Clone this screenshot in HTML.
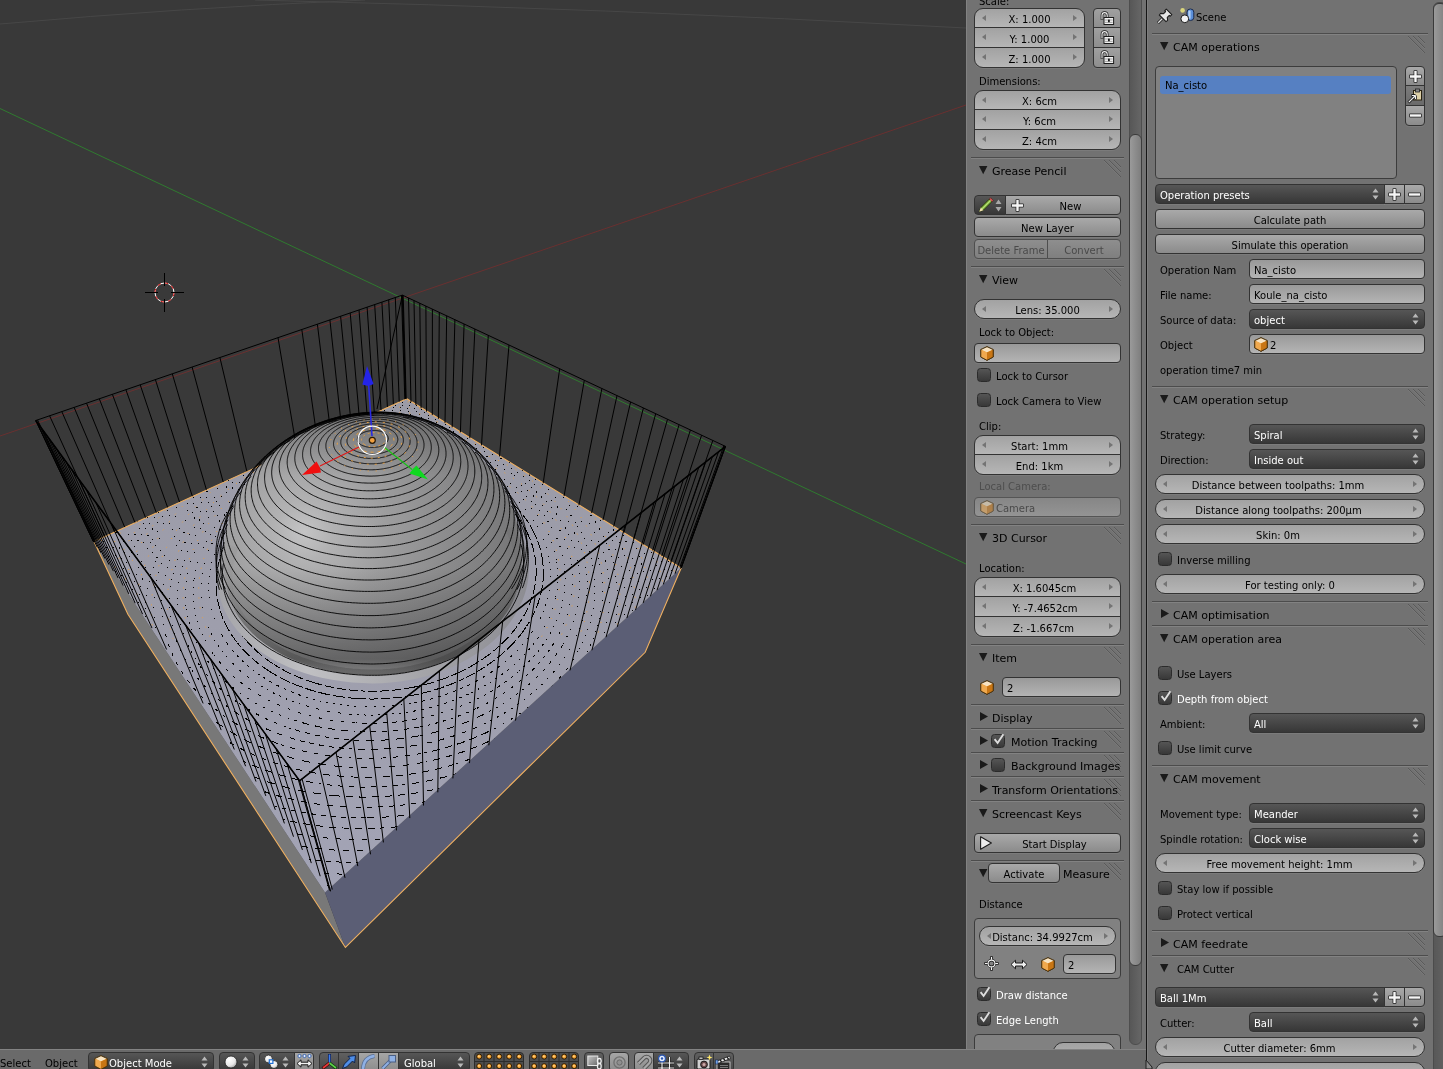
<!DOCTYPE html><html><head><meta charset="utf-8"><title>Blender</title><style>
*{margin:0;padding:0;box-sizing:border-box}
html,body{width:1443px;height:1069px;overflow:hidden;background:#393939}
body{font-family:"DejaVu Sans","Liberation Sans",sans-serif;font-size:10px;color:#000}
#root{position:absolute;left:0;top:0;width:1443px;height:1069px;overflow:hidden;background:#393939}
#ui{position:absolute;left:0;top:0;width:1443px;height:1069px;will-change:transform}
.a{position:absolute}
.w{position:absolute;border:1px solid #333;height:20px;line-height:18px;text-align:center;white-space:nowrap;overflow:hidden;box-shadow:0 1px 0 rgba(255,255,255,.07)}
.num{background:linear-gradient(#a2a2a2,#b6b6b6);border-radius:10px}
.btn{background:linear-gradient(#a9a9a9,#8b8b8b);border-radius:4px}
.dis{background:linear-gradient(#8e8e8e,#7f7f7f);border-color:#4e4e4e;color:#4a4a4a}
.menu{background:linear-gradient(#565656,#373737);color:#fff;border-radius:4px;text-align:left;padding-left:4px}
.txt{background:linear-gradient(#999,#b4b4b4);border-radius:4px;text-align:left;padding-left:4px}
.chk{position:absolute;width:14px;height:14px;border:1px solid #2b2b2b;border-radius:3.5px;background:linear-gradient(#555,#383838)}
.lbl{position:absolute;white-space:nowrap;line-height:20px;height:20px}
.hd{position:absolute;white-space:nowrap;font-size:11px;line-height:14px;height:14px}
.dv{position:absolute;height:2px;border-top:1px solid #4c4c4c;border-bottom:1px solid #828282}
svg{position:absolute;overflow:visible}
.la{position:absolute;left:7px;top:5.5px;width:0;height:0;border-style:solid;border-width:3.5px 4px 3.5px 0;border-color:transparent #747474 transparent transparent}
.ra{position:absolute;right:7px;top:5.5px;width:0;height:0;border-style:solid;border-width:3.5px 0 3.5px 4px;border-color:transparent transparent transparent #747474}
.ud{position:absolute;right:5px;top:3px;width:7px;height:12px}
</style></head><body><div id="root">
<svg style="left:0;top:0" width="966" height="1049" viewBox="0 0 966 1049"><defs><radialGradient id="dg" gradientUnits="userSpaceOnUse" cx="304" cy="532" r="240"><stop offset="0" stop-color="#c4c4c5"/><stop offset=".12" stop-color="#b2b2b3"/><stop offset=".35" stop-color="#9d9d9e"/><stop offset=".65" stop-color="#888889"/><stop offset="1" stop-color="#6e6e6f"/></radialGradient><linearGradient id="dg2" gradientUnits="userSpaceOnUse" x1="372" y1="410" x2="372" y2="672"><stop offset="0" stop-color="#000" stop-opacity=".22"/><stop offset=".25" stop-color="#000" stop-opacity="0"/><stop offset=".6" stop-color="#000" stop-opacity="0"/><stop offset=".95" stop-color="#000" stop-opacity=".3"/><stop offset="1" stop-color="#000" stop-opacity=".1"/></linearGradient><linearGradient id="fg" gradientUnits="userSpaceOnUse" x1="220" y1="560" x2="530" y2="600"><stop offset="0" stop-color="#9a9a9e"/><stop offset=".3" stop-color="#bcbcc0"/><stop offset=".6" stop-color="#a4a4a8"/><stop offset="1" stop-color="#808084"/></linearGradient><linearGradient id="tg" gradientUnits="userSpaceOnUse" x1="400" y1="400" x2="330" y2="890"><stop offset="0" stop-color="#9b9ba7"/><stop offset=".5" stop-color="#9e9eac"/><stop offset="1" stop-color="#a3a4b6"/></linearGradient><linearGradient id="fb" gradientUnits="userSpaceOnUse" x1="215" y1="600" x2="535" y2="620"><stop offset="0" stop-color="#a4a4a8"/><stop offset=".3" stop-color="#c0c0c3"/><stop offset=".55" stop-color="#adadb1"/><stop offset="1" stop-color="#8a8a90"/></linearGradient><linearGradient id="db" gradientUnits="userSpaceOnUse" x1="222" y1="0" x2="524" y2="0"><stop offset="0" stop-color="#333" stop-opacity="0"/><stop offset=".22" stop-color="#333" stop-opacity=".28"/><stop offset=".8" stop-color="#333" stop-opacity=".3"/><stop offset="1" stop-color="#333" stop-opacity="0"/></linearGradient><clipPath id="topclip"><polygon points="406.7,398.7 94.0,541.5 325.0,892.5 681.2,568.0"/></clipPath></defs><path d="M0 24 Q180 8 365 0" stroke="#474747" stroke-width="1" fill="none"/><path d="M255 0 Q600 8 966 28" stroke="#474747" stroke-width="1" fill="none"/><path d="M0 108.5 L966 564" stroke="#2f7a2f" stroke-width="1" fill="none"/><path d="M0 436 L966 105" stroke="#6a3030" stroke-width="1" fill="none"/><polygon points="94.0,541.5 325.0,892.5 345.4,947.5 127.9,614.3" fill="#787878"/><polygon points="325.0,892.5 681.2,568.0 645.2,652.3 345.4,947.5" fill="#5b5e75"/><polygon points="406.7,398.7 94.0,541.5 325.0,892.5 681.2,568.0" fill="url(#tg)"/><polygon points="406.7,398.7 94.0,541.5 127.9,614.3 345.4,947.5 645.2,652.3 681.2,568.0" fill="none" stroke="#f0b060" stroke-width="1.1"/><g clip-path="url(#topclip)" fill="none" stroke="#000" stroke-width="1" shape-rendering="crispEdges"><polyline points="244.6,638.4 245.4,639.4 246.2,640.3 247.0,641.2 247.8,642.2 248.6,643.1 249.4,644.0 250.3,644.9 251.2,645.9 252.0,646.8 252.9,647.7 253.9,648.6 254.8,649.4 255.7,650.3 256.7,651.2 257.6,652.1 258.6,652.9 259.6,653.8 260.6,654.6 261.6,655.5 262.7,656.3 263.7,657.1 264.8,658.0 265.8,658.8 266.9,659.6 268.0,660.4 269.1,661.2 270.3,662.0 271.4,662.7 272.6,663.5 273.7,664.3" stroke-dasharray="11 3" stroke-dashoffset="0"/><polyline points="273.7,664.3 274.9,665.0 276.1,665.7 277.3,666.5 278.5,667.2 279.7,667.9 280.9,668.6 282.2,669.3 283.4,670.0 284.7,670.7 286.0,671.4 287.3,672.0 288.6,672.7 289.9,673.3 291.2,673.9 292.5,674.6 293.9,675.2 295.2,675.8 296.6,676.4 298.0,676.9 299.4,677.5 300.8,678.1 302.2,678.6 303.6,679.2 305.0,679.7 306.4,680.2 307.9,680.7 309.3,681.2 310.8,681.7 312.3,682.2 313.7,682.6" stroke-dasharray="10 3" stroke-dashoffset="3"/><polyline points="313.7,682.6 315.2,683.1 316.7,683.5 318.2,683.9 319.7,684.4 321.2,684.8 322.8,685.2 324.3,685.5 325.8,685.9 327.4,686.3 328.9,686.6 330.5,686.9 332.0,687.3 333.6,687.6 335.2,687.9 336.8,688.1 338.4,688.4 339.9,688.7 341.5,688.9 343.1,689.2 344.7,689.4 346.4,689.6 348.0,689.8 349.6,690.0 351.2,690.1 352.8,690.3 354.5,690.4 356.1,690.6 357.7,690.7 359.4,690.8 361.0,690.9" stroke-dasharray="9 3" stroke-dashoffset="0"/><polyline points="361.0,690.9 362.6,691.0 364.3,691.0 365.9,691.1 367.6,691.1 369.2,691.2 370.9,691.2 372.5,691.2 374.2,691.2 375.8,691.2 377.5,691.1 379.1,691.1 380.8,691.0 382.4,691.0 384.1,690.9 385.8,690.8 387.4,690.7 389.1,690.5 390.7,690.4 392.3,690.3 394.0,690.1 395.6,689.9 397.3,689.7 398.9,689.5 400.5,689.3 402.2,689.1 403.8,688.9 405.4,688.6 407.1,688.3 408.7,688.1 410.3,687.8" stroke-dasharray="9 3" stroke-dashoffset="5"/><polyline points="410.3,687.8 411.9,687.5 413.5,687.2 415.1,686.9 416.7,686.5 418.3,686.2 419.9,685.8 421.5,685.4 423.1,685.1 424.6,684.7 426.2,684.3 427.8,683.8 429.3,683.4 430.9,683.0 432.4,682.5 433.9,682.1 435.5,681.6 437.0,681.1 438.5,680.6 440.0,680.1 441.5,679.6 443.0,679.0 444.5,678.5 445.9,678.0 447.4,677.4 448.9,676.8 450.3,676.2 451.7,675.6 453.2,675.0 454.6,674.4 456.0,673.8" stroke-dasharray="12 3" stroke-dashoffset="2"/><polyline points="456.0,673.8 457.4,673.2 458.8,672.5 460.2,671.9 461.6,671.2 462.9,670.6 464.3,669.9 465.6,669.2 467.0,668.5 468.3,667.8 469.6,667.1 470.9,666.3 472.2,665.6 473.5,664.9 474.7,664.1 476.0,663.4 477.2,662.6 478.5,661.8 479.7,661.0 480.9,660.2 482.1,659.4 483.3,658.6 484.5,657.8 485.6,657.0 486.8,656.2 487.9,655.4 489.1,654.5 490.2,653.7 491.3,652.8 492.4,652.0 493.4,651.1" stroke-dasharray="12 3" stroke-dashoffset="1"/><polyline points="493.4,651.1 494.5,650.2 495.6,649.3 496.6,648.4 497.6,647.6 498.6,646.7 499.6,645.8 500.6,644.8 501.6,643.9 502.6,643.0 503.5,642.1 504.4,641.2 505.4,640.2 506.3,639.3 507.2,638.3 508.0,637.4 508.9,636.4 509.8,635.5 510.6,634.5 511.4,633.6 512.2,632.6 513.0,631.6 513.8,630.6 514.6,629.7 515.4,628.7 516.1,627.7 516.8,626.7 517.6,625.7 518.3,624.7 518.9,623.7 519.6,622.7" stroke-dasharray="10 3" stroke-dashoffset="2"/><polyline points="519.6,622.7 520.3,621.7 520.9,620.7 521.6,619.7 522.2,618.7 522.8,617.6 523.4,616.6 524.0,615.6 524.5,614.6 525.1,613.6 525.6,612.5 526.1,611.5 526.7,610.5 527.2,609.5 527.6,608.4 528.1,607.4 528.6,606.4 529.0,605.3 529.4,604.3 529.8,603.3 530.2,602.2 530.6,601.2 531.0,600.2 531.4,599.1 531.7,598.1 532.0,597.0 532.4,596.0 532.7,595.0 533.0,593.9 533.2,592.9 533.5,591.9" stroke-dasharray="9 3" stroke-dashoffset="4"/><polyline points="533.5,591.9 533.8,590.8 534.0,589.8 534.2,588.8 534.5,587.7 534.7,586.7 534.8,585.7 535.0,584.6 535.2,583.6 535.3,582.6 535.5,581.5 535.6,580.5 535.7,579.5 535.8,578.5 535.9,577.5 536.0,576.4 536.0,575.4 536.1,574.4 536.1,573.4 536.2,572.4 536.2,571.4 536.2,570.4 536.2,569.3 536.1,568.3 536.1,567.3 536.1,566.3 536.0,565.3 535.9,564.4 535.9,563.4 535.8,562.4 535.7,561.4" stroke-dasharray="13 3" stroke-dashoffset="5"/><polyline points="535.7,561.4 535.5,560.4 535.4,559.4 535.3,558.4 535.1,557.5 535.0,556.5 534.8,555.5 534.6,554.6 534.4,553.6 534.2,552.6 534.0,551.7 533.8,550.7 533.5,549.8 533.3,548.8 533.0,547.9 532.8,547.0 532.5,546.0 532.2,545.1 531.9,544.2 531.6,543.2 531.3,542.3 530.9,541.4 530.6,540.5 530.2,539.6 529.9,538.7 529.5,537.8 529.1,536.9 528.7,536.0 528.3,535.1 527.9,534.2 527.5,533.3" stroke-dasharray="9 3" stroke-dashoffset="2"/><polyline points="527.5,533.3 527.1,532.5 526.6,531.6 526.2,530.7 525.7,529.9 525.3,529.0 524.8,528.2 524.3,527.3 523.8,526.5 523.3,525.6 522.8,524.8 522.3,524.0 521.8,523.1 521.3,522.3 520.7,521.5 520.2,520.7 519.6,519.9 519.0,519.1 518.5,518.3 517.9,517.5 517.3,516.7 516.7,515.9 516.1,515.1" stroke-dasharray="10 3" stroke-dashoffset="2"/><polyline points="237.9,533.9 237.4,534.8 236.8,535.7 236.3,536.6 235.8,537.5 235.3,538.4 234.8,539.3 234.4,540.2 233.9,541.1 233.4,542.0 233.0,542.9 232.5,543.9 232.1,544.8 231.7,545.7 231.3,546.7 230.9,547.6 230.5,548.6 230.1,549.5 229.7,550.5 229.4,551.4 229.0,552.4 228.7,553.3 228.4,554.3 228.1,555.3 227.8,556.2 227.5,557.2 227.2,558.2 226.9,559.2 226.6,560.2 226.4,561.2 226.2,562.1" stroke-dasharray="11 3" stroke-dashoffset="2"/><polyline points="226.2,562.1 225.9,563.1 225.7,564.1 225.5,565.1 225.3,566.1 225.1,567.1 225.0,568.1 224.8,569.2 224.6,570.2 224.5,571.2 224.4,572.2 224.3,573.2 224.2,574.2 224.1,575.2 224.0,576.3 223.9,577.3 223.9,578.3 223.9,579.3 223.8,580.4 223.8,581.4 223.8,582.4 223.8,583.5 223.9,584.5 223.9,585.5 223.9,586.6 224.0,587.6 224.1,588.6 224.2,589.7 224.3,590.7 224.4,591.8 224.5,592.8" stroke-dasharray="13 3" stroke-dashoffset="1"/><polyline points="224.5,592.8 224.7,593.8 224.8,594.9 225.0,595.9 225.2,597.0 225.4,598.0 225.6,599.1 225.8,600.1 226.0,601.1 226.3,602.2 226.5,603.2 226.8,604.2 227.1,605.3 227.4,606.3 227.7,607.4 228.1,608.4 228.4,609.4 228.8,610.5 229.1,611.5 229.5,612.5 229.9,613.6 230.3,614.6 230.8,615.6 231.2,616.6 231.7,617.7 232.1,618.7 232.6,619.7 233.1,620.7 233.7,621.7 234.2,622.7 234.7,623.7" stroke-dasharray="12 3" stroke-dashoffset="2"/><polyline points="234.7,623.7 235.3,624.7 235.9,625.7 236.4,626.7 237.0,627.7 237.7,628.7 238.3,629.7 238.9,630.7 239.6,631.7 240.3,632.6 240.9,633.6 241.6,634.6 242.4,635.6 243.1,636.5 243.8,637.5 244.6,638.4" stroke-dasharray="9 3" stroke-dashoffset="6"/><polyline points="237.4,642.8 238.2,643.8 239.0,644.8 239.8,645.8 240.7,646.8 241.6,647.8 242.4,648.8 243.3,649.7 244.2,650.7 245.1,651.7 246.1,652.6 247.0,653.6 248.0,654.5 249.0,655.5 250.0,656.4 251.0,657.3 252.0,658.2 253.0,659.1 254.1,660.0 255.2,660.9 256.2,661.8 257.3,662.7 258.4,663.6 259.6,664.4 260.7,665.3 261.9,666.1 263.0,667.0 264.2,667.8 265.4,668.6 266.6,669.4 267.8,670.2" stroke-dasharray="10 3" stroke-dashoffset="5"/><polyline points="267.8,670.2 269.0,671.0 270.3,671.8 271.5,672.6 272.8,673.4 274.1,674.1 275.4,674.9 276.7,675.6 278.0,676.4 279.4,677.1 280.7,677.8 282.1,678.5 283.4,679.2 284.8,679.9 286.2,680.6 287.6,681.2 289.0,681.9 290.4,682.5 291.9,683.1 293.3,683.8 294.8,684.4 296.3,685.0 297.7,685.6 299.2,686.1 300.7,686.7 302.2,687.2 303.8,687.8 305.3,688.3 306.8,688.8 308.4,689.3 309.9,689.8" stroke-dasharray="11 3" stroke-dashoffset="0"/><polyline points="309.9,689.8 311.5,690.3 313.1,690.8 314.6,691.2 316.2,691.7 317.8,692.1 319.4,692.5 321.1,692.9 322.7,693.3 324.3,693.7 325.9,694.1 327.6,694.4 329.2,694.8 330.9,695.1 332.6,695.4 334.2,695.7 335.9,696.0 337.6,696.3 339.3,696.5 341.0,696.8 342.6,697.0 344.3,697.2 346.0,697.5 347.8,697.7 349.5,697.8 351.2,698.0 352.9,698.2 354.6,698.3 356.4,698.4 358.1,698.5 359.8,698.6" stroke-dasharray="12 3" stroke-dashoffset="6"/><polyline points="359.8,698.6 361.6,698.7 363.3,698.8 365.0,698.9 366.8,698.9 368.5,698.9 370.3,699.0 372.0,699.0 373.7,699.0 375.5,698.9 377.2,698.9 379.0,698.8 380.7,698.8 382.5,698.7 384.2,698.6 386.0,698.5 387.7,698.4 389.5,698.3 391.2,698.1 392.9,698.0 394.7,697.8 396.4,697.6 398.1,697.4 399.9,697.2 401.6,697.0 403.3,696.7 405.1,696.5 406.8,696.2 408.5,695.9 410.2,695.6 411.9,695.3" stroke-dasharray="9 3" stroke-dashoffset="3"/><polyline points="411.9,695.3 413.6,695.0 415.3,694.7 417.0,694.3 418.7,694.0 420.4,693.6 422.0,693.2 423.7,692.8 425.4,692.4 427.0,692.0 428.7,691.5 430.3,691.1 432.0,690.6 433.6,690.2 435.2,689.7 436.8,689.2 438.5,688.7 440.1,688.2 441.7,687.6 443.2,687.1 444.8,686.5 446.4,686.0 448.0,685.4 449.5,684.8 451.0,684.2 452.6,683.6 454.1,683.0 455.6,682.4 457.1,681.7 458.6,681.1 460.1,680.4" stroke-dasharray="10 3" stroke-dashoffset="3"/><polyline points="460.1,680.4 461.6,679.7 463.1,679.0 464.5,678.4 466.0,677.6 467.4,676.9 468.8,676.2 470.2,675.5 471.6,674.7 473.0,674.0 474.4,673.2 475.8,672.5 477.1,671.7 478.5,670.9 479.8,670.1 481.1,669.3 482.4,668.5 483.7,667.6 485.0,666.8 486.3,666.0 487.5,665.1 488.8,664.3 490.0,663.4 491.2,662.5 492.4,661.7 493.6,660.8 494.8,659.9 496.0,659.0 497.1,658.1 498.3,657.2 499.4,656.2" stroke-dasharray="9 3" stroke-dashoffset="5"/><polyline points="499.4,656.2 500.5,655.3 501.6,654.4 502.7,653.4 503.8,652.5 504.8,651.5 505.9,650.6 506.9,649.6 507.9,648.7 508.9,647.7 509.9,646.7 510.9,645.7 511.8,644.7 512.8,643.7 513.7,642.7 514.6,641.7 515.5,640.7 516.4,639.7 517.3,638.7 518.2,637.7 519.0,636.6 519.8,635.6 520.6,634.6 521.5,633.5 522.2,632.5 523.0,631.4 523.8,630.4 524.5,629.3 525.2,628.3 525.9,627.2 526.6,626.2" stroke-dasharray="13 3" stroke-dashoffset="6"/><polyline points="526.6,626.2 527.3,625.1 528.0,624.0 528.7,623.0 529.3,621.9 529.9,620.8 530.5,619.8 531.1,618.7 531.7,617.6 532.3,616.5 532.8,615.4 533.4,614.4 533.9,613.3 534.4,612.2 534.9,611.1 535.4,610.0 535.8,608.9 536.3,607.8 536.7,606.8 537.1,605.7 537.6,604.6 538.0,603.5 538.3,602.4 538.7,601.3 539.0,600.2 539.4,599.1 539.7,598.0 540.0,596.9 540.3,595.9 540.6,594.8 540.9,593.7" stroke-dasharray="10 3" stroke-dashoffset="5"/><polyline points="540.9,593.7 541.1,592.6 541.4,591.5 541.6,590.4 541.8,589.3 542.0,588.2 542.2,587.2 542.4,586.1 542.5,585.0 542.7,583.9 542.8,582.8 542.9,581.8 543.0,580.7 543.1,579.6 543.2,578.5 543.2,577.5 543.3,576.4 543.3,575.3 543.4,574.3 543.4,573.2 543.4,572.2 543.4,571.1 543.3,570.0 543.3,569.0 543.3,567.9 543.2,566.9 543.1,565.9 543.0,564.8 542.9,563.8 542.8,562.7 542.7,561.7" stroke-dasharray="13 3" stroke-dashoffset="4"/><polyline points="542.7,561.7 542.6,560.7 542.4,559.6 542.3,558.6 542.1,557.6 541.9,556.6 541.7,555.6 541.5,554.6 541.3,553.6 541.1,552.6 540.9,551.6 540.6,550.6 540.4,549.6 540.1,548.6 539.8,547.6 539.5,546.6 539.2,545.6 538.9,544.7 538.6,543.7 538.2,542.7 537.9,541.8 537.5,540.8 537.2,539.9 536.8,538.9 536.4,538.0 536.0,537.0 535.6,536.1 535.2,535.2 534.7,534.3 534.3,533.3 533.9,532.4" stroke-dasharray="9 3" stroke-dashoffset="0"/><polyline points="533.9,532.4 533.4,531.5 532.9,530.6 532.5,529.7 532.0,528.8 531.5,527.9 531.0,527.0 530.5,526.1 530.0,525.3 529.4,524.4 528.9,523.5 528.3,522.7 527.8,521.8 527.2,520.9 526.6,520.1 526.1,519.3 525.5,518.4 524.9,517.6 524.3,516.8 523.6,515.9 523.0,515.1 522.4,514.3 521.7,513.5 521.1,512.7 520.4,511.9 519.8,511.1 519.1,510.3 518.4,509.5 517.7,508.8 517.0,508.0 516.3,507.2" stroke-dasharray="10 3" stroke-dashoffset="2"/><polyline points="516.3,507.2 515.6,506.5 514.9,505.7 514.2,505.0 513.5,504.2 512.7,503.5 512.0,502.8 511.2,502.0" stroke-dasharray="13 3" stroke-dashoffset="7"/><polyline points="241.1,519.7 240.4,520.6 239.7,521.4 239.1,522.3 238.4,523.2 237.7,524.0 237.1,524.9 236.4,525.8 235.8,526.7 235.2,527.6 234.5,528.5 233.9,529.4 233.3,530.3 232.7,531.2 232.2,532.1 231.6,533.0 231.0,533.9 230.5,534.9 229.9,535.8 229.4,536.7 228.8,537.7 228.3,538.6 227.8,539.6 227.3,540.5 226.8,541.5 226.3,542.4 225.9,543.4 225.4,544.4 225.0,545.3 224.5,546.3 224.1,547.3" stroke-dasharray="9 3" stroke-dashoffset="0"/><polyline points="224.1,547.3 223.7,548.3 223.3,549.3 222.9,550.3 222.5,551.3 222.1,552.3 221.7,553.3 221.4,554.3 221.0,555.3 220.7,556.3 220.4,557.4 220.1,558.4 219.8,559.4 219.5,560.4 219.2,561.5 219.0,562.5 218.7,563.5 218.5,564.6 218.2,565.6 218.0,566.7 217.8,567.7 217.6,568.8 217.4,569.8 217.3,570.9 217.1,572.0 217.0,573.0 216.9,574.1 216.7,575.2 216.6,576.2 216.5,577.3 216.5,578.4" stroke-dasharray="10 3" stroke-dashoffset="1"/><polyline points="216.5,578.4 216.4,579.5 216.3,580.5 216.3,581.6 216.3,582.7 216.3,583.8 216.3,584.9 216.3,585.9 216.3,587.0 216.3,588.1 216.4,589.2 216.4,590.3 216.5,591.4 216.6,592.5 216.7,593.6 216.8,594.7 217.0,595.8 217.1,596.9 217.3,598.0 217.5,599.1 217.7,600.2 217.9,601.2 218.1,602.3 218.3,603.4 218.6,604.5 218.8,605.6 219.1,606.7 219.4,607.8 219.7,608.9 220.0,610.0 220.4,611.1" stroke-dasharray="10 3" stroke-dashoffset="5"/><polyline points="220.4,611.1 220.7,612.2 221.1,613.3 221.5,614.4 221.9,615.5 222.3,616.5 222.7,617.6 223.1,618.7 223.6,619.8 224.1,620.9 224.5,621.9 225.0,623.0 225.5,624.1 226.1,625.2 226.6,626.2 227.2,627.3 227.8,628.3 228.3,629.4 229.0,630.5 229.6,631.5 230.2,632.6 230.9,633.6 231.5,634.6 232.2,635.7 232.9,636.7 233.6,637.7 234.3,638.8 235.1,639.8 235.8,640.8 236.6,641.8 237.4,642.8" stroke-dasharray="11 3" stroke-dashoffset="3"/><polyline points="230.1,647.3 230.9,648.4 231.8,649.4 232.6,650.5 233.5,651.5 234.4,652.6 235.3,653.6 236.2,654.6 237.2,655.6 238.1,656.7 239.1,657.7 240.1,658.7 241.1,659.7 242.1,660.7 243.2,661.6 244.2,662.6 245.3,663.6 246.4,664.6 247.5,665.5 248.6,666.5 249.7,667.4 250.9,668.3 252.0,669.3 253.2,670.2 254.4,671.1 255.6,672.0 256.8,672.9 258.0,673.8 259.3,674.6 260.5,675.5 261.8,676.4" stroke-dasharray="2 5" stroke-dashoffset="3"/><polyline points="261.8,676.4 263.1,677.2 264.4,678.0 265.7,678.9 267.0,679.7 268.4,680.5 269.7,681.3 271.1,682.1 272.5,682.9 273.9,683.6 275.3,684.4 276.7,685.1 278.2,685.9 279.6,686.6 281.1,687.3 282.6,688.0 284.0,688.7 285.5,689.4 287.0,690.1 288.6,690.7 290.1,691.4 291.6,692.0 293.2,692.6 294.8,693.2 296.3,693.8 297.9,694.4 299.5,695.0 301.1,695.6 302.8,696.1 304.4,696.6 306.0,697.2" stroke-dasharray="3 5" stroke-dashoffset="7"/><polyline points="306.0,697.2 307.7,697.7 309.3,698.2 311.0,698.7 312.7,699.1 314.4,699.6 316.0,700.0 317.7,700.5 319.5,700.9 321.2,701.3 322.9,701.7 324.6,702.1 326.4,702.4 328.1,702.8 329.9,703.1 331.6,703.4 333.4,703.7 335.2,704.0 336.9,704.3 338.7,704.6 340.5,704.8 342.3,705.1 344.1,705.3 345.9,705.5 347.7,705.7 349.5,705.9 351.3,706.0 353.1,706.2 355.0,706.3 356.8,706.5 358.6,706.6" stroke-dasharray="2 5" stroke-dashoffset="0"/><polyline points="358.6,706.6 360.4,706.7 362.3,706.7 364.1,706.8 365.9,706.8 367.8,706.9 369.6,706.9 371.5,706.9 373.3,706.9 375.1,706.9 377.0,706.8 378.8,706.8 380.7,706.7 382.5,706.6 384.4,706.5 386.2,706.4 388.0,706.3 389.9,706.1 391.7,706.0 393.6,705.8 395.4,705.6 397.2,705.4 399.0,705.2 400.9,705.0 402.7,704.8 404.5,704.5 406.3,704.2 408.1,703.9 409.9,703.6 411.7,703.3 413.5,703.0" stroke-dasharray="2 7" stroke-dashoffset="3"/><polyline points="413.5,703.0 415.3,702.7 417.1,702.3 418.9,701.9 420.7,701.6 422.5,701.2 424.2,700.8 426.0,700.3 427.7,699.9 429.5,699.5 431.2,699.0 433.0,698.5 434.7,698.0 436.4,697.5 438.1,697.0 439.8,696.5 441.5,695.9 443.2,695.4 444.9,694.8 446.6,694.3 448.2,693.7 449.9,693.1 451.5,692.5 453.1,691.8 454.8,691.2 456.4,690.5 458.0,689.9 459.6,689.2 461.2,688.5 462.7,687.8 464.3,687.1" stroke-dasharray="3 5" stroke-dashoffset="7"/><polyline points="464.3,687.1 465.8,686.4 467.4,685.7 468.9,684.9 470.4,684.2 471.9,683.4 473.4,682.7 474.9,681.9 476.4,681.1 477.8,680.3 479.3,679.5 480.7,678.7 482.1,677.8 483.6,677.0 484.9,676.2 486.3,675.3 487.7,674.4 489.1,673.6 490.4,672.7 491.7,671.8 493.0,670.9 494.3,670.0 495.6,669.1 496.9,668.1 498.2,667.2 499.4,666.3 500.7,665.3 501.9,664.4 503.1,663.4 504.3,662.4 505.4,661.5" stroke-dasharray="3 6" stroke-dashoffset="6"/><polyline points="505.4,661.5 506.6,660.5 507.8,659.5 508.9,658.5 510.0,657.5 511.1,656.5 512.2,655.5 513.3,654.5 514.3,653.4 515.4,652.4 516.4,651.4 517.4,650.3 518.4,649.3 519.4,648.2 520.4,647.2 521.3,646.1 522.2,645.0 523.2,644.0 524.1,642.9 525.0,641.8 525.8,640.7 526.7,639.6 527.5,638.5 528.4,637.5 529.2,636.4 530.0,635.2 530.8,634.1 531.5,633.0 532.3,631.9 533.0,630.8 533.7,629.7" stroke-dasharray="2 6" stroke-dashoffset="1"/><polyline points="533.7,629.7 534.5,628.6 535.1,627.4 535.8,626.3 536.5,625.2 537.1,624.1 537.7,622.9 538.4,621.8 539.0,620.7 539.5,619.5 540.1,618.4 540.7,617.2 541.2,616.1 541.7,615.0 542.2,613.8 542.7,612.7 543.2,611.5 543.6,610.4 544.1,609.2 544.5,608.1 544.9,607.0 545.3,605.8 545.7,604.7 546.1,603.5 546.4,602.4 546.8,601.2 547.1,600.1 547.4,598.9 547.7,597.8 548.0,596.6 548.2,595.5" stroke-dasharray="1 6" stroke-dashoffset="1"/><polyline points="548.2,595.5 548.5,594.4 548.7,593.2 549.0,592.1 549.2,590.9 549.4,589.8 549.5,588.7 549.7,587.5 549.9,586.4 550.0,585.3 550.1,584.1 550.2,583.0 550.3,581.9 550.4,580.8 550.5,579.6 550.5,578.5 550.6,577.4 550.6,576.3 550.6,575.2 550.6,574.1 550.6,572.9 550.6,571.8 550.6,570.7 550.5,569.6 550.4,568.5 550.4,567.4 550.3,566.4 550.2,565.3 550.1,564.2 549.9,563.1 549.8,562.0" stroke-dasharray="1 6" stroke-dashoffset="2"/><polyline points="549.8,562.0 549.6,560.9 549.5,559.9 549.3,558.8 549.1,557.7 548.9,556.7 548.7,555.6 548.5,554.6 548.2,553.5 548.0,552.5 547.7,551.4 547.5,550.4 547.2,549.4 546.9,548.3 546.6,547.3 546.3,546.3 545.9,545.3 545.6,544.3 545.2,543.3 544.9,542.2 544.5,541.2 544.1,540.3 543.7,539.3 543.3,538.3 542.9,537.3 542.5,536.3 542.0,535.3 541.6,534.4 541.1,533.4 540.7,532.5 540.2,531.5" stroke-dasharray="1 8" stroke-dashoffset="4"/><polyline points="540.2,531.5 539.7,530.6 539.2,529.6 538.7,528.7 538.2,527.7 537.7,526.8 537.1,525.9 536.6,525.0 536.0,524.1 535.5,523.2 534.9,522.3 534.3,521.4 533.7,520.5 533.1,519.6 532.5,518.7 531.9,517.8 531.3,517.0 530.7,516.1 530.0,515.2 529.4,514.4 528.7,513.5 528.0,512.7 527.4,511.8 526.7,511.0 526.0,510.2 525.3,509.4 524.6,508.6 523.9,507.7 523.1,506.9 522.4,506.1 521.7,505.4" stroke-dasharray="1 6" stroke-dashoffset="2"/><polyline points="521.7,505.4 520.9,504.6 520.2,503.8 519.4,503.0 518.7,502.2 517.9,501.5 517.1,500.7 516.3,500.0 515.5,499.2 514.7,498.5 513.9,497.8 513.1,497.0 512.3,496.3 511.4,495.6 510.6,494.9 509.7,494.2 508.9,493.5 508.0,492.8 507.2,492.1 506.3,491.4" stroke-dasharray="1 6" stroke-dashoffset="4"/><polyline points="244.8,508.1 243.9,509.0 243.1,509.8 242.3,510.6 241.5,511.4 240.7,512.3 239.9,513.1 239.2,514.0 238.4,514.8 237.6,515.7 236.9,516.6 236.1,517.4 235.4,518.3 234.6,519.2 233.9,520.1 233.2,521.0 232.5,521.9 231.8,522.8 231.1,523.7 230.4,524.6 229.7,525.5 229.1,526.4 228.4,527.4 227.8,528.3 227.1,529.2 226.5,530.2 225.9,531.1 225.3,532.1 224.7,533.1 224.1,534.0 223.5,535.0" stroke-dasharray="1 6" stroke-dashoffset="3"/><polyline points="223.5,535.0 222.9,536.0 222.4,537.0 221.8,537.9 221.3,538.9 220.7,539.9 220.2,540.9 219.7,541.9 219.2,542.9 218.7,543.9 218.2,545.0 217.8,546.0 217.3,547.0 216.9,548.0 216.4,549.1 216.0,550.1 215.6,551.1 215.2,552.2 214.8,553.2 214.4,554.3 214.0,555.4 213.7,556.4 213.3,557.5 213.0,558.5 212.7,559.6 212.3,560.7 212.0,561.8 211.8,562.9 211.5,563.9 211.2,565.0 211.0,566.1" stroke-dasharray="1 8" stroke-dashoffset="6"/><polyline points="211.0,566.1 210.7,567.2 210.5,568.3 210.3,569.4 210.1,570.5 209.9,571.6 209.7,572.7 209.6,573.9 209.4,575.0 209.3,576.1 209.1,577.2 209.0,578.3 208.9,579.5 208.9,580.6 208.8,581.7 208.7,582.9 208.7,584.0 208.7,585.1 208.6,586.3 208.6,587.4 208.6,588.5 208.7,589.7 208.7,590.8 208.8,592.0 208.8,593.1 208.9,594.3 209.0,595.4 209.1,596.6 209.3,597.7 209.4,598.9 209.6,600.0" stroke-dasharray="1 6" stroke-dashoffset="4"/><polyline points="209.6,600.0 209.7,601.2 209.9,602.3 210.1,603.5 210.3,604.6 210.6,605.8 210.8,606.9 211.1,608.1 211.3,609.2 211.6,610.4 211.9,611.5 212.3,612.7 212.6,613.8 213.0,615.0 213.3,616.1 213.7,617.3 214.1,618.4 214.5,619.5 215.0,620.7 215.4,621.8 215.9,623.0 216.4,624.1 216.8,625.2 217.4,626.4 217.9,627.5 218.4,628.6 219.0,629.8 219.6,630.9 220.1,632.0 220.8,633.1 221.4,634.2" stroke-dasharray="1 9" stroke-dashoffset="1"/><polyline points="221.4,634.2 222.0,635.3 222.7,636.4 223.3,637.5 224.0,638.6 224.7,639.7 225.4,640.8 226.2,641.9 226.9,643.0 227.7,644.1 228.5,645.2 229.3,646.2 230.1,647.3" stroke-dasharray="3 6" stroke-dashoffset="0"/><polyline points="222.7,651.8 223.6,652.9 224.4,654.1 225.3,655.2 226.2,656.3 227.2,657.4 228.1,658.5 229.1,659.6 230.0,660.6 231.0,661.7 232.0,662.8 233.1,663.8 234.1,664.9 235.2,665.9 236.3,667.0 237.4,668.0 238.5,669.0 239.6,670.1 240.7,671.1 241.9,672.1 243.1,673.1 244.3,674.1 245.5,675.0 246.7,676.0 247.9,677.0 249.2,677.9 250.5,678.9 251.7,679.8 253.0,680.7 254.4,681.7 255.7,682.6" stroke-dasharray="2 8" stroke-dashoffset="5"/><polyline points="255.7,682.6 257.0,683.5 258.4,684.3 259.8,685.2 261.2,686.1 262.6,687.0 264.0,687.8 265.4,688.6 266.9,689.5 268.3,690.3 269.8,691.1 271.3,691.9 272.8,692.7 274.3,693.4 275.9,694.2 277.4,694.9 279.0,695.7 280.5,696.4 282.1,697.1 283.7,697.8 285.3,698.5 286.9,699.2 288.6,699.8 290.2,700.5 291.9,701.1 293.5,701.7 295.2,702.3 296.9,702.9 298.6,703.5 300.3,704.1 302.0,704.7" stroke-dasharray="2 5" stroke-dashoffset="1"/><polyline points="302.0,704.7 303.8,705.2 305.5,705.7 307.3,706.2 309.0,706.7 310.8,707.2 312.6,707.7 314.4,708.2 316.2,708.6 318.0,709.0 319.8,709.5 321.6,709.9 323.4,710.2 325.3,710.6 327.1,711.0 329.0,711.3 330.8,711.7 332.7,712.0 334.6,712.3 336.4,712.5 338.3,712.8 340.2,713.1 342.1,713.3 344.0,713.5 345.9,713.7 347.8,713.9 349.7,714.1 351.6,714.3 353.5,714.4 355.5,714.5 357.4,714.7" stroke-dasharray="3 8" stroke-dashoffset="7"/><polyline points="357.4,714.7 359.3,714.8 361.2,714.8 363.2,714.9 365.1,715.0 367.0,715.0 369.0,715.0 370.9,715.0 372.9,715.0 374.8,715.0 376.7,714.9 378.7,714.9 380.6,714.8 382.6,714.7 384.5,714.6 386.4,714.5 388.4,714.4 390.3,714.2 392.2,714.0 394.2,713.9 396.1,713.7 398.0,713.5 400.0,713.2 401.9,713.0 403.8,712.7 405.7,712.5 407.6,712.2 409.5,711.9 411.4,711.5 413.3,711.2 415.2,710.9" stroke-dasharray="2 5" stroke-dashoffset="7"/><polyline points="415.2,710.9 417.1,710.5 419.0,710.1 420.9,709.7 422.7,709.3 424.6,708.9 426.5,708.5 428.3,708.0 430.2,707.6 432.0,707.1 433.8,706.6 435.6,706.1 437.5,705.6 439.3,705.0 441.1,704.5 442.9,703.9 444.6,703.4 446.4,702.8 448.2,702.2 449.9,701.5 451.7,700.9 453.4,700.3 455.1,699.6 456.9,699.0 458.6,698.3 460.2,697.6 461.9,696.9 463.6,696.2 465.3,695.5 466.9,694.7 468.6,694.0" stroke-dasharray="3 5" stroke-dashoffset="2"/><polyline points="468.6,694.0 470.2,693.2 471.8,692.4 473.4,691.7 475.0,690.9 476.6,690.1 478.1,689.2 479.7,688.4 481.2,687.6 482.7,686.7 484.3,685.9 485.8,685.0 487.3,684.1 488.7,683.2 490.2,682.3 491.6,681.4 493.1,680.5 494.5,679.6 495.9,678.7 497.3,677.7 498.6,676.8 500.0,675.8 501.4,674.8 502.7,673.9 504.0,672.9 505.3,671.9 506.6,670.9 507.9,669.9 509.1,668.8 510.4,667.8 511.6,666.8" stroke-dasharray="2 5" stroke-dashoffset="4"/><polyline points="511.6,666.8 512.8,665.7 514.0,664.7 515.2,663.7 516.3,662.6 517.5,661.5 518.6,660.5 519.7,659.4 520.8,658.3 521.9,657.2 523.0,656.1 524.0,655.0 525.1,653.9 526.1,652.8 527.1,651.7 528.1,650.6 529.0,649.4 530.0,648.3 530.9,647.2 531.9,646.0 532.8,644.9 533.7,643.7 534.5,642.6 535.4,641.4 536.2,640.3 537.0,639.1 537.9,637.9 538.6,636.8 539.4,635.6 540.2,634.4 540.9,633.2" stroke-dasharray="2 5" stroke-dashoffset="4"/><polyline points="540.9,633.2 541.6,632.1 542.4,630.9 543.0,629.7 543.7,628.5 544.4,627.3 545.0,626.1 545.7,624.9 546.3,623.7 546.9,622.5 547.4,621.4 548.0,620.2 548.6,619.0 549.1,617.8 549.6,616.6 550.1,615.4 550.6,614.2 551.0,613.0 551.5,611.7 551.9,610.5 552.3,609.3 552.7,608.1 553.1,606.9 553.5,605.7 553.9,604.5 554.2,603.3 554.5,602.1 554.8,600.9 555.1,599.7 555.4,598.5 555.7,597.3" stroke-dasharray="1 9" stroke-dashoffset="3"/><polyline points="555.7,597.3 555.9,596.1 556.2,594.9 556.4,593.7 556.6,592.6 556.8,591.4 556.9,590.2 557.1,589.0 557.2,587.8 557.4,586.6 557.5,585.4 557.6,584.3 557.7,583.1 557.8,581.9 557.8,580.7 557.9,579.6 557.9,578.4 557.9,577.2 557.9,576.1 557.9,574.9 557.9,573.7 557.8,572.6 557.8,571.4 557.7,570.3 557.6,569.1 557.5,568.0 557.4,566.9 557.3,565.7 557.2,564.6 557.0,563.5 556.9,562.3" stroke-dasharray="1 6" stroke-dashoffset="0"/><polyline points="556.9,562.3 556.7,561.2 556.5,560.1 556.3,559.0 556.1,557.9 555.9,556.8 555.6,555.7 555.4,554.6 555.1,553.5 554.9,552.4 554.6,551.3 554.3,550.2 554.0,549.2 553.7,548.1 553.3,547.0 553.0,546.0 552.6,544.9 552.3,543.8 551.9,542.8 551.5,541.8 551.1,540.7 550.7,539.7 550.3,538.6 549.8,537.6 549.4,536.6 548.9,535.6 548.5,534.6 548.0,533.6 547.5,532.6 547.0,531.6 546.5,530.6" stroke-dasharray="1 8" stroke-dashoffset="7"/><polyline points="546.5,530.6 546.0,529.6 545.5,528.6 544.9,527.7 544.4,526.7 543.8,525.7 543.3,524.8 542.7,523.8 542.1,522.9 541.5,521.9 540.9,521.0 540.3,520.1 539.7,519.1 539.0,518.2 538.4,517.3 537.7,516.4 537.1,515.5 536.4,514.6 535.7,513.7 535.1,512.8 534.4,512.0 533.7,511.1 533.0,510.2 532.2,509.4 531.5,508.5 530.8,507.6 530.0,506.8 529.3,506.0 528.5,505.1 527.8,504.3 527.0,503.5" stroke-dasharray="1 8" stroke-dashoffset="1"/><polyline points="527.0,503.5 526.2,502.7 525.4,501.9 524.6,501.1 523.8,500.3 523.0,499.5 522.2,498.7 521.3,497.9 520.5,497.2 519.7,496.4 518.8,495.6 518.0,494.9 517.1,494.1 516.2,493.4 515.4,492.7 514.5,491.9 513.6,491.2 512.7,490.5 511.8,489.8 510.9,489.1 510.0,488.4 509.1,487.7 508.1,487.0 507.2,486.3 506.3,485.7 505.3,485.0 504.4,484.4 503.4,483.7 502.5,483.1 501.5,482.4" stroke-dasharray="1 9" stroke-dashoffset="5"/><polyline points="248.5,498.3 247.6,499.0 246.7,499.8 245.8,500.6 244.8,501.4 243.9,502.2 243.0,503.1 242.2,503.9 241.3,504.7 240.4,505.5 239.5,506.4 238.7,507.2 237.8,508.1 236.9,508.9 236.1,509.8 235.3,510.7 234.4,511.5 233.6,512.4 232.8,513.3 232.0,514.2 231.2,515.1 230.4,516.0 229.6,516.9 228.9,517.8 228.1,518.7 227.4,519.7 226.6,520.6 225.9,521.5 225.2,522.5 224.4,523.4 223.7,524.4" stroke-dasharray="1 8" stroke-dashoffset="4"/><polyline points="223.7,524.4 223.0,525.3 222.3,526.3 221.6,527.3 221.0,528.2 220.3,529.2 219.6,530.2 219.0,531.2 218.4,532.2 217.7,533.2 217.1,534.2 216.5,535.2 215.9,536.2 215.3,537.3 214.8,538.3 214.2,539.3 213.6,540.4 213.1,541.4 212.6,542.5 212.0,543.5 211.5,544.6 211.0,545.6 210.5,546.7 210.0,547.8 209.6,548.8 209.1,549.9 208.7,551.0 208.2,552.1 207.8,553.2 207.4,554.3 207.0,555.4" stroke-dasharray="1 7" stroke-dashoffset="2"/><polyline points="207.0,555.4 206.6,556.5 206.2,557.6 205.9,558.7 205.5,559.8 205.2,561.0 204.9,562.1 204.5,563.2 204.2,564.4 204.0,565.5 203.7,566.6 203.4,567.8 203.2,568.9 202.9,570.1 202.7,571.2 202.5,572.4 202.3,573.5 202.1,574.7 201.9,575.9 201.8,577.0 201.6,578.2 201.5,579.4 201.4,580.6 201.3,581.7 201.2,582.9 201.1,584.1 201.1,585.3 201.0,586.5 201.0,587.7 201.0,588.9 201.0,590.0" stroke-dasharray="1 9" stroke-dashoffset="2"/><polyline points="201.0,590.0 201.0,591.2 201.0,592.4 201.1,593.6 201.1,594.8 201.2,596.0 201.3,597.2 201.4,598.4 201.5,599.7 201.6,600.9 201.8,602.1 201.9,603.3 202.1,604.5 202.3,605.7 202.5,606.9 202.8,608.1 203.0,609.3 203.3,610.5 203.5,611.7 203.8,612.9 204.1,614.1 204.4,615.4 204.8,616.6 205.1,617.8 205.5,619.0 205.9,620.2 206.3,621.4 206.7,622.6 207.2,623.8 207.6,625.0 208.1,626.2" stroke-dasharray="1 9" stroke-dashoffset="3"/><polyline points="208.1,626.2 208.6,627.4 209.1,628.6 209.6,629.8 210.1,631.0 210.7,632.1 211.3,633.3 211.8,634.5 212.5,635.7 213.1,636.9 213.7,638.0 214.4,639.2 215.0,640.4 215.7,641.5 216.4,642.7 217.2,643.9 217.9,645.0 218.7,646.2 219.4,647.3 220.2,648.4 221.0,649.6 221.9,650.7 222.7,651.8" stroke-dasharray="1 6" stroke-dashoffset="6"/><polyline points="215.2,656.4 216.1,657.6 217.0,658.8 217.9,659.9 218.9,661.1 219.8,662.3 220.8,663.4 221.8,664.6 222.8,665.7 223.8,666.8 224.9,668.0 225.9,669.1 227.0,670.2 228.1,671.3 229.2,672.4 230.4,673.5 231.5,674.6 232.7,675.7 233.9,676.7 235.1,677.8 236.3,678.8 237.6,679.9 238.8,680.9 240.1,682.0 241.4,683.0 242.7,684.0 244.0,685.0 245.3,686.0 246.7,687.0 248.1,687.9 249.5,688.9" stroke-dasharray="3 7" stroke-dashoffset="4"/><polyline points="249.5,688.9 250.9,689.8 252.3,690.8 253.7,691.7 255.2,692.6 256.6,693.5 258.1,694.4 259.6,695.3 261.1,696.2 262.7,697.1 264.2,697.9 265.8,698.7 267.4,699.6 268.9,700.4 270.5,701.2 272.2,702.0 273.8,702.8 275.4,703.5 277.1,704.3 278.8,705.0 280.5,705.8 282.2,706.5 283.9,707.2 285.6,707.9 287.3,708.5 289.1,709.2 290.8,709.9 292.6,710.5 294.4,711.1 296.2,711.7 298.0,712.3" stroke-dasharray="3 8" stroke-dashoffset="1"/><polyline points="298.0,712.3 299.8,712.9 301.6,713.4 303.5,714.0 305.3,714.5 307.2,715.0 309.0,715.5 310.9,716.0 312.8,716.5 314.7,717.0 316.6,717.4 318.5,717.8 320.4,718.2 322.4,718.6 324.3,719.0 326.2,719.4 328.2,719.7 330.2,720.1 332.1,720.4 334.1,720.7 336.1,721.0 338.0,721.2 340.0,721.5 342.0,721.7 344.0,721.9 346.0,722.2 348.0,722.3 350.1,722.5 352.1,722.7 354.1,722.8 356.1,722.9" stroke-dasharray="3 8" stroke-dashoffset="0"/><polyline points="356.1,722.9 358.1,723.0 360.2,723.1 362.2,723.2 364.2,723.2 366.3,723.3 368.3,723.3 370.4,723.3 372.4,723.3 374.4,723.3 376.5,723.2 378.5,723.2 380.6,723.1 382.6,723.0 384.6,722.9 386.7,722.8 388.7,722.6 390.7,722.5 392.8,722.3 394.8,722.1 396.8,721.9 398.9,721.6 400.9,721.4 402.9,721.1 404.9,720.9 406.9,720.6 408.9,720.3 411.0,720.0 413.0,719.6 414.9,719.3 416.9,718.9" stroke-dasharray="5 5" stroke-dashoffset="4"/><polyline points="416.9,718.9 418.9,718.5 420.9,718.1 422.9,717.7 424.8,717.3 426.8,716.8 428.7,716.3 430.7,715.9 432.6,715.4 434.6,714.9 436.5,714.3 438.4,713.8 440.3,713.3 442.2,712.7 444.1,712.1 446.0,711.5 447.8,710.9 449.7,710.3 451.5,709.6 453.4,709.0 455.2,708.3 457.0,707.7 458.8,707.0 460.6,706.3 462.4,705.5 464.2,704.8 466.0,704.1 467.7,703.3 469.4,702.5 471.2,701.8 472.9,701.0" stroke-dasharray="2 8" stroke-dashoffset="5"/><polyline points="472.9,701.0 474.6,700.2 476.3,699.3 478.0,698.5 479.6,697.7 481.3,696.8 482.9,695.9 484.5,695.1 486.1,694.2 487.7,693.3 489.3,692.4 490.9,691.5 492.5,690.5 494.0,689.6 495.5,688.6 497.0,687.7 498.5,686.7 500.0,685.7 501.5,684.7 502.9,683.7 504.3,682.7 505.8,681.7 507.2,680.7 508.6,679.7 509.9,678.6 511.3,677.6 512.6,676.5 513.9,675.4 515.3,674.4 516.5,673.3 517.8,672.2" stroke-dasharray="3 5" stroke-dashoffset="4"/><polyline points="517.8,672.2 519.1,671.1 520.3,670.0 521.5,668.9 522.8,667.8 523.9,666.6 525.1,665.5 526.3,664.4 527.4,663.2 528.5,662.1 529.6,660.9 530.7,659.8 531.8,658.6 532.9,657.4 533.9,656.2 534.9,655.1 535.9,653.9 536.9,652.7 537.9,651.5 538.8,650.3 539.8,649.1 540.7,647.9 541.6,646.7 542.5,645.4 543.3,644.2 544.2,643.0 545.0,641.8 545.8,640.5 546.6,639.3 547.4,638.1 548.2,636.8" stroke-dasharray="2 5" stroke-dashoffset="6"/><polyline points="548.2,636.8 548.9,635.6 549.6,634.4 550.4,633.1 551.0,631.9 551.7,630.6 552.4,629.4 553.0,628.1 553.6,626.9 554.3,625.6 554.8,624.3 555.4,623.1 556.0,621.8 556.5,620.6 557.0,619.3 557.5,618.1 558.0,616.8 558.5,615.5 559.0,614.3 559.4,613.0 559.8,611.7 560.2,610.5 560.6,609.2 561.0,608.0 561.3,606.7 561.7,605.5 562.0,604.2 562.3,602.9 562.6,601.7 562.9,600.4 563.2,599.2" stroke-dasharray="1 6" stroke-dashoffset="3"/><polyline points="563.2,599.2 563.4,597.9 563.6,596.7 563.8,595.4 564.0,594.2 564.2,592.9 564.4,591.7 564.5,590.4 564.7,589.2 564.8,588.0 564.9,586.7 565.0,585.5 565.1,584.3 565.1,583.0 565.2,581.8 565.2,580.6 565.2,579.4 565.2,578.2 565.2,577.0 565.2,575.7 565.1,574.5 565.1,573.3 565.0,572.1 564.9,570.9 564.8,569.7 564.7,568.6 564.6,567.4 564.4,566.2 564.3,565.0 564.1,563.8 563.9,562.7" stroke-dasharray="1 6" stroke-dashoffset="1"/><polyline points="563.9,562.7 563.8,561.5 563.5,560.3 563.3,559.2 563.1,558.0 562.8,556.9 562.6,555.7 562.3,554.6 562.0,553.4 561.7,552.3 561.4,551.2 561.1,550.1 560.8,548.9 560.4,547.8 560.1,546.7 559.7,545.6 559.3,544.5 558.9,543.4 558.5,542.3 558.1,541.3 557.7,540.2 557.2,539.1 556.8,538.0 556.3,537.0 555.9,535.9 555.4,534.9 554.9,533.8 554.4,532.8 553.9,531.7 553.3,530.7 552.8,529.7" stroke-dasharray="1 8" stroke-dashoffset="2"/><polyline points="552.8,529.7 552.3,528.7 551.7,527.6 551.1,526.6 550.6,525.6 550.0,524.6 549.4,523.6 548.8,522.7 548.1,521.7 547.5,520.7 546.9,519.7 546.2,518.8 545.6,517.8 544.9,516.9 544.2,515.9 543.5,515.0 542.9,514.1 542.2,513.1 541.4,512.2 540.7,511.3 540.0,510.4 539.3,509.5 538.5,508.6 537.8,507.7 537.0,506.8 536.2,505.9 535.4,505.1 534.7,504.2 533.9,503.3 533.1,502.5 532.2,501.6" stroke-dasharray="1 6" stroke-dashoffset="5"/><polyline points="532.2,501.6 531.4,500.8 530.6,500.0 529.8,499.1 528.9,498.3 528.1,497.5 527.2,496.7 526.4,495.9 525.5,495.1 524.6,494.3 523.7,493.5 522.8,492.8 521.9,492.0 521.0,491.2 520.1,490.5 519.2,489.7 518.3,489.0 517.3,488.2 516.4,487.5 515.4,486.8 514.5,486.1 513.5,485.4 512.6,484.7 511.6,484.0 510.6,483.3 509.6,482.6 508.7,481.9 507.7,481.2 506.7,480.6 505.7,479.9 504.6,479.3" stroke-dasharray="1 6" stroke-dashoffset="7"/><polyline points="504.6,479.3 503.6,478.6 502.6,478.0 501.6,477.3 500.5,476.7 499.5,476.1 498.5,475.5 497.4,474.9 496.4,474.3" stroke-dasharray="1 9" stroke-dashoffset="1"/><polyline points="252.8,489.3 251.7,490.0 250.7,490.8 249.7,491.5 248.7,492.3 247.7,493.1 246.7,493.9 245.7,494.6 244.7,495.4 243.7,496.2 242.8,497.0 241.8,497.9 240.8,498.7 239.9,499.5 238.9,500.3 238.0,501.2 237.1,502.0 236.1,502.9 235.2,503.7 234.3,504.6 233.4,505.5 232.5,506.4 231.6,507.2 230.7,508.1 229.9,509.0 229.0,509.9 228.1,510.8 227.3,511.8 226.4,512.7 225.6,513.6 224.8,514.5" stroke-dasharray="1 8" stroke-dashoffset="1"/><polyline points="224.8,514.5 224.0,515.5 223.1,516.4 222.3,517.4 221.6,518.3 220.8,519.3 220.0,520.3 219.2,521.3 218.5,522.2 217.7,523.2 217.0,524.2 216.3,525.2 215.5,526.2 214.8,527.2 214.1,528.3 213.4,529.3 212.7,530.3 212.1,531.3 211.4,532.4 210.8,533.4 210.1,534.5 209.5,535.5 208.9,536.6 208.3,537.7 207.7,538.7 207.1,539.8 206.5,540.9 205.9,542.0 205.4,543.1 204.8,544.2 204.3,545.3" stroke-dasharray="1 7" stroke-dashoffset="0"/><polyline points="204.3,545.3 203.8,546.4 203.2,547.5 202.7,548.6 202.2,549.7 201.8,550.9 201.3,552.0 200.9,553.1 200.4,554.3 200.0,555.4 199.6,556.6 199.2,557.7 198.8,558.9 198.4,560.1 198.0,561.2 197.7,562.4 197.3,563.6 197.0,564.8 196.7,565.9 196.4,567.1 196.1,568.3 195.8,569.5 195.5,570.7 195.3,571.9 195.1,573.1 194.8,574.3 194.6,575.5 194.4,576.8 194.3,578.0 194.1,579.2 193.9,580.4" stroke-dasharray="1 7" stroke-dashoffset="6"/><polyline points="193.9,580.4 193.8,581.7 193.7,582.9 193.6,584.1 193.5,585.4 193.4,586.6 193.4,587.8 193.3,589.1 193.3,590.3 193.3,591.6 193.3,592.8 193.3,594.1 193.3,595.3 193.3,596.6 193.4,597.8 193.5,599.1 193.6,600.4 193.7,601.6 193.8,602.9 193.9,604.1 194.1,605.4 194.3,606.7 194.5,607.9 194.7,609.2 194.9,610.5 195.1,611.7 195.4,613.0 195.6,614.3 195.9,615.5 196.2,616.8 196.6,618.1" stroke-dasharray="1 6" stroke-dashoffset="7"/><polyline points="196.6,618.1 196.9,619.3 197.2,620.6 197.6,621.9 198.0,623.1 198.4,624.4 198.8,625.7 199.3,626.9 199.7,628.2 200.2,629.4 200.7,630.7 201.2,631.9 201.8,633.2 202.3,634.4 202.9,635.7 203.4,636.9 204.0,638.2 204.7,639.4 205.3,640.7 206.0,641.9 206.6,643.1 207.3,644.4 208.0,645.6 208.7,646.8 209.5,648.0 210.3,649.2 211.0,650.4 211.8,651.6 212.6,652.8 213.5,654.0 214.3,655.2" stroke-dasharray="1 6" stroke-dashoffset="4"/><polyline points="214.3,655.2 215.2,656.4" stroke-dasharray="3 7" stroke-dashoffset="0"/><polyline points="207.6,661.1 208.5,662.3 209.4,663.5 210.4,664.8 211.4,666.0 212.4,667.2 213.4,668.4 214.4,669.7 215.4,670.9 216.5,672.1 217.6,673.2 218.7,674.4 219.8,675.6 220.9,676.8 222.1,677.9 223.3,679.1 224.5,680.2 225.7,681.4 226.9,682.5 228.2,683.6 229.4,684.7 230.7,685.8 232.0,686.9 233.4,688.0 234.7,689.1 236.1,690.1 237.4,691.2 238.8,692.2 240.3,693.3 241.7,694.3 243.1,695.3" stroke-dasharray="2 7" stroke-dashoffset="0"/><polyline points="243.1,695.3 244.6,696.3 246.1,697.3 247.6,698.3 249.1,699.3 250.6,700.2 252.2,701.2 253.7,702.1 255.3,703.1 256.9,704.0 258.5,704.9 260.1,705.8 261.8,706.6 263.5,707.5 265.1,708.4 266.8,709.2 268.5,710.0 270.2,710.8 272.0,711.6 273.7,712.4 275.5,713.2 277.3,713.9 279.0,714.7 280.9,715.4 282.7,716.1 284.5,716.8 286.3,717.5 288.2,718.2 290.1,718.9 291.9,719.5 293.8,720.1" stroke-dasharray="2 7" stroke-dashoffset="4"/><polyline points="293.8,720.1 295.7,720.7 297.7,721.3 299.6,721.9 301.5,722.5 303.5,723.0 305.4,723.6 307.4,724.1 309.4,724.6 311.4,725.1 313.3,725.5 315.4,726.0 317.4,726.4 319.4,726.8 321.4,727.2 323.5,727.6 325.5,728.0 327.6,728.4 329.6,728.7 331.7,729.0 333.8,729.3 335.9,729.6 337.9,729.9 340.0,730.1 342.1,730.3 344.2,730.6 346.4,730.8 348.5,730.9 350.6,731.1 352.7,731.3 354.8,731.4" stroke-dasharray="7 6" stroke-dashoffset="4"/><polyline points="354.8,731.4 357.0,731.5 359.1,731.6 361.2,731.7 363.4,731.7 365.5,731.8 367.6,731.8 369.8,731.8 371.9,731.8 374.1,731.7 376.2,731.7 378.3,731.6 380.5,731.6 382.6,731.5 384.8,731.3 386.9,731.2 389.1,731.0 391.2,730.9 393.3,730.7 395.5,730.5 397.6,730.3 399.7,730.0 401.8,729.8 404.0,729.5 406.1,729.2 408.2,728.9 410.3,728.6 412.4,728.2 414.5,727.9 416.6,727.5 418.7,727.1" stroke-dasharray="5 6" stroke-dashoffset="6"/><polyline points="418.7,727.1 420.8,726.7 422.8,726.3 424.9,725.8 427.0,725.4 429.0,724.9 431.1,724.4 433.1,723.9 435.1,723.4 437.2,722.8 439.2,722.3 441.2,721.7 443.2,721.1 445.2,720.5 447.2,719.9 449.1,719.3 451.1,718.6 453.0,718.0 455.0,717.3 456.9,716.6 458.8,715.9 460.7,715.2 462.6,714.4 464.5,713.7 466.4,712.9 468.2,712.2 470.1,711.4 471.9,710.6 473.7,709.7 475.5,708.9 477.3,708.1" stroke-dasharray="3 5" stroke-dashoffset="7"/><polyline points="477.3,708.1 479.1,707.2 480.9,706.4 482.6,705.5 484.4,704.6 486.1,703.7 487.8,702.8 489.5,701.8 491.2,700.9 492.8,700.0 494.5,699.0 496.1,698.0 497.7,697.0 499.3,696.0 500.9,695.0 502.5,694.0 504.1,693.0 505.6,692.0 507.1,690.9 508.6,689.9 510.1,688.8 511.6,687.7 513.1,686.6 514.5,685.5 515.9,684.4 517.4,683.3 518.8,682.2 520.1,681.1 521.5,680.0 522.8,678.8 524.1,677.7" stroke-dasharray="2 8" stroke-dashoffset="0"/><polyline points="524.1,677.7 525.5,676.5 526.7,675.3 528.0,674.2 529.3,673.0 530.5,671.8 531.7,670.6 532.9,669.4 534.1,668.2 535.3,667.0 536.4,665.8 537.5,664.6 538.6,663.3 539.7,662.1 540.8,660.9 541.9,659.6 542.9,658.4 543.9,657.1 544.9,655.9 545.9,654.6 546.9,653.3 547.8,652.1 548.7,650.8 549.7,649.5 550.5,648.2 551.4,646.9 552.3,645.6 553.1,644.4 553.9,643.1 554.7,641.8 555.5,640.5" stroke-dasharray="3 5" stroke-dashoffset="5"/><polyline points="555.5,640.5 556.3,639.2 557.0,637.9 557.7,636.6 558.4,635.2 559.1,633.9 559.8,632.6 560.5,631.3 561.1,630.0 561.7,628.7 562.3,627.4 562.9,626.0 563.5,624.7 564.0,623.4 564.5,622.1 565.1,620.8 565.6,619.5 566.0,618.1 566.5,616.8 566.9,615.5 567.4,614.2 567.8,612.9 568.2,611.5 568.5,610.2 568.9,608.9 569.2,607.6 569.5,606.3 569.8,605.0 570.1,603.6 570.4,602.3 570.7,601.0" stroke-dasharray="1 9" stroke-dashoffset="2"/><polyline points="570.7,601.0 570.9,599.7 571.1,598.4 571.3,597.1 571.5,595.8 571.7,594.5 571.9,593.2 572.0,591.9 572.1,590.6 572.2,589.3 572.3,588.0 572.4,586.8 572.5,585.5 572.5,584.2 572.5,582.9 572.6,581.7 572.6,580.4 572.5,579.1 572.5,577.9 572.5,576.6 572.4,575.3 572.3,574.1 572.3,572.8 572.1,571.6 572.0,570.3 571.9,569.1 571.8,567.9 571.6,566.6 571.4,565.4 571.2,564.2 571.0,563.0" stroke-dasharray="1 9" stroke-dashoffset="4"/><polyline points="571.0,563.0 570.8,561.8 570.6,560.6 570.3,559.4 570.1,558.2 569.8,557.0 569.5,555.8 569.2,554.6 568.9,553.4 568.6,552.2 568.3,551.1 567.9,549.9 567.6,548.7 567.2,547.6 566.8,546.4 566.4,545.3 566.0,544.2 565.6,543.0 565.2,541.9 564.7,540.8 564.3,539.6 563.8,538.5 563.3,537.4 562.8,536.3 562.3,535.2 561.8,534.1 561.3,533.1 560.7,532.0 560.2,530.9 559.6,529.8 559.1,528.8" stroke-dasharray="1 9" stroke-dashoffset="6"/><polyline points="559.1,528.8 558.5,527.7 557.9,526.7 557.3,525.6 556.7,524.6 556.1,523.6 555.4,522.5 554.8,521.5 554.1,520.5 553.5,519.5 552.8,518.5 552.1,517.5 551.4,516.5 550.7,515.5 550.0,514.6 549.3,513.6 548.6,512.6 547.8,511.7 547.1,510.7 546.3,509.8 545.6,508.8 544.8,507.9 544.0,507.0 543.2,506.1 542.4,505.1 541.6,504.2 540.8,503.3 540.0,502.4 539.2,501.6 538.3,500.7 537.5,499.8" stroke-dasharray="1 7" stroke-dashoffset="4"/><polyline points="537.5,499.8 536.6,498.9 535.8,498.1 534.9,497.2 534.0,496.4 533.1,495.5 532.2,494.7 531.3,493.9 530.4,493.1 529.5,492.3 528.6,491.5 527.6,490.7 526.7,489.9 525.8,489.1 524.8,488.3 523.9,487.5 522.9,486.8 521.9,486.0 520.9,485.2 520.0,484.5 519.0,483.8 518.0,483.0 517.0,482.3 516.0,481.6 514.9,480.9 513.9,480.2 512.9,479.5 511.9,478.8 510.8,478.1 509.8,477.4 508.7,476.8" stroke-dasharray="1 7" stroke-dashoffset="3"/><polyline points="508.7,476.8 507.7,476.1 506.6,475.4 505.5,474.8 504.5,474.2 503.4,473.5 502.3,472.9 501.2,472.3 500.1,471.7 499.0,471.0 497.9,470.4 496.8,469.9 495.7,469.3 494.6,468.7 493.5,468.1 492.3,467.5 491.2,467.0 490.1,466.4" stroke-dasharray="1 9" stroke-dashoffset="5"/><polyline points="258.3,480.4 257.1,481.1 256.0,481.8 254.9,482.6 253.8,483.3 252.7,484.0 251.6,484.8 250.5,485.5 249.5,486.3 248.4,487.0 247.3,487.8 246.2,488.6 245.2,489.4 244.1,490.2 243.1,491.0 242.0,491.8 241.0,492.6 240.0,493.4 239.0,494.2 237.9,495.1 236.9,495.9 235.9,496.7 234.9,497.6 234.0,498.5 233.0,499.3 232.0,500.2 231.0,501.1 230.1,502.0 229.1,502.9 228.2,503.8 227.2,504.7" stroke-dasharray="1 9" stroke-dashoffset="4"/><polyline points="227.2,504.7 226.3,505.6 225.4,506.5 224.5,507.4 223.6,508.4 222.7,509.3 221.8,510.2 220.9,511.2 220.0,512.2 219.1,513.1 218.3,514.1 217.4,515.1 216.6,516.1 215.8,517.0 214.9,518.0 214.1,519.0 213.3,520.1 212.5,521.1 211.7,522.1 211.0,523.1 210.2,524.2 209.4,525.2 208.7,526.2 208.0,527.3 207.2,528.4 206.5,529.4 205.8,530.5 205.1,531.6 204.4,532.7 203.7,533.7 203.1,534.8" stroke-dasharray="1 9" stroke-dashoffset="6"/><polyline points="203.1,534.8 202.4,535.9 201.8,537.0 201.1,538.2 200.5,539.3 199.9,540.4 199.3,541.5 198.7,542.7 198.1,543.8 197.5,544.9 197.0,546.1 196.4,547.2 195.9,548.4 195.4,549.6 194.9,550.7 194.4,551.9 193.9,553.1 193.4,554.3 193.0,555.5 192.5,556.7 192.1,557.9 191.7,559.1 191.2,560.3 190.8,561.5 190.5,562.7 190.1,563.9 189.7,565.2 189.4,566.4 189.1,567.6 188.7,568.9 188.4,570.1" stroke-dasharray="1 9" stroke-dashoffset="1"/><polyline points="188.4,570.1 188.2,571.4 187.9,572.6 187.6,573.9 187.4,575.1 187.1,576.4 186.9,577.7 186.7,578.9 186.5,580.2 186.4,581.5 186.2,582.8 186.1,584.0 185.9,585.3 185.8,586.6 185.7,587.9 185.6,589.2 185.6,590.5 185.5,591.8 185.5,593.1 185.5,594.4 185.5,595.7 185.5,597.0 185.5,598.3 185.6,599.6 185.6,601.0 185.7,602.3 185.8,603.6 185.9,604.9 186.0,606.2 186.2,607.5 186.4,608.9" stroke-dasharray="1 7" stroke-dashoffset="5"/><polyline points="186.4,608.9 186.5,610.2 186.7,611.5 186.9,612.8 187.2,614.2 187.4,615.5 187.7,616.8 188.0,618.1 188.3,619.5 188.6,620.8 188.9,622.1 189.3,623.5 189.7,624.8 190.0,626.1 190.5,627.4 190.9,628.8 191.3,630.1 191.8,631.4 192.3,632.7 192.8,634.0 193.3,635.3 193.8,636.7 194.4,638.0 195.0,639.3 195.5,640.6 196.2,641.9 196.8,643.2 197.4,644.5 198.1,645.8 198.8,647.1 199.5,648.4" stroke-dasharray="1 6" stroke-dashoffset="0"/><polyline points="199.5,648.4 200.2,649.7 201.0,651.0 201.7,652.2 202.5,653.5 203.3,654.8 204.1,656.0 205.0,657.3 205.8,658.6 206.7,659.8 207.6,661.1" stroke-dasharray="2 8" stroke-dashoffset="4"/><polyline points="199.9,665.8 200.8,667.1 201.8,668.4 202.8,669.7 203.8,671.0 204.8,672.3 205.8,673.5 206.9,674.8 208.0,676.1 209.1,677.3 210.2,678.6 211.3,679.8 212.5,681.1 213.7,682.3 214.9,683.5 216.1,684.7 217.3,685.9 218.6,687.1 219.9,688.3 221.2,689.5 222.5,690.7 223.8,691.9 225.2,693.0 226.5,694.2 227.9,695.3 229.3,696.4 230.8,697.5 232.2,698.6 233.7,699.7 235.2,700.8 236.7,701.9" stroke-dasharray="3 7" stroke-dashoffset="0"/><polyline points="236.7,701.9 238.2,702.9 239.7,704.0 241.3,705.0 242.9,706.1 244.5,707.1 246.1,708.1 247.7,709.1 249.4,710.0 251.0,711.0 252.7,712.0 254.4,712.9 256.1,713.8 257.8,714.7 259.6,715.6 261.4,716.5 263.1,717.4 264.9,718.3 266.7,719.1 268.6,719.9 270.4,720.8 272.3,721.6 274.1,722.4 276.0,723.1 277.9,723.9 279.8,724.6 281.8,725.4 283.7,726.1 285.6,726.8 287.6,727.4 289.6,728.1" stroke-dasharray="3 7" stroke-dashoffset="7"/><polyline points="289.6,728.1 291.6,728.7 293.6,729.4 295.6,730.0 297.6,730.6 299.7,731.2 301.7,731.7 303.8,732.3 305.9,732.8 307.9,733.3 310.0,733.8 312.1,734.3 314.2,734.8 316.4,735.2 318.5,735.7 320.6,736.1 322.8,736.5 324.9,736.8 327.1,737.2 329.3,737.5 331.4,737.8 333.6,738.1 335.8,738.4 338.0,738.7 340.2,738.9 342.4,739.2 344.6,739.4 346.8,739.6 349.1,739.7 351.3,739.9 353.5,740.0" stroke-dasharray="5 5" stroke-dashoffset="4"/><polyline points="353.5,740.0 355.7,740.2 358.0,740.3 360.2,740.3 362.5,740.4 364.7,740.4 366.9,740.5 369.2,740.5 371.4,740.5 373.7,740.4 375.9,740.4 378.2,740.3 380.4,740.2 382.7,740.1 384.9,740.0 387.2,739.8 389.4,739.7 391.7,739.5 393.9,739.3 396.1,739.1 398.4,738.8 400.6,738.6 402.8,738.3 405.0,738.0 407.3,737.7 409.5,737.4 411.7,737.0 413.9,736.7 416.1,736.3 418.3,735.9 420.5,735.5" stroke-dasharray="8 7" stroke-dashoffset="2"/><polyline points="420.5,735.5 422.7,735.0 424.8,734.6 427.0,734.1 429.2,733.6 431.3,733.1 433.5,732.6 435.6,732.1 437.7,731.5 439.8,731.0 442.0,730.4 444.1,729.8 446.1,729.1 448.2,728.5 450.3,727.9 452.4,727.2 454.4,726.5 456.4,725.8 458.5,725.1 460.5,724.4 462.5,723.6 464.5,722.8 466.5,722.1 468.4,721.3 470.4,720.5 472.3,719.7 474.3,718.8 476.2,718.0 478.1,717.1 480.0,716.2 481.8,715.3" stroke-dasharray="8 8" stroke-dashoffset="5"/><polyline points="481.8,715.3 483.7,714.4 485.5,713.5 487.4,712.6 489.2,711.6 491.0,710.7 492.8,709.7 494.5,708.7 496.3,707.8 498.0,706.7 499.7,705.7 501.4,704.7 503.1,703.7 504.8,702.6 506.5,701.6 508.1,700.5 509.7,699.4 511.3,698.3 512.9,697.2 514.5,696.1 516.0,695.0 517.6,693.8 519.1,692.7 520.6,691.5 522.1,690.4 523.5,689.2 525.0,688.0 526.4,686.8 527.8,685.6 529.2,684.4 530.6,683.2" stroke-dasharray="2 6" stroke-dashoffset="0"/><polyline points="530.6,683.2 531.9,682.0 533.3,680.8 534.6,679.6 535.9,678.3 537.2,677.1 538.4,675.8 539.7,674.5 540.9,673.3 542.1,672.0 543.3,670.7 544.4,669.4 545.6,668.1 546.7,666.8 547.8,665.5 548.9,664.2 550.0,662.9 551.0,661.6 552.1,660.3 553.1,659.0 554.1,657.6 555.0,656.3 556.0,655.0 556.9,653.6 557.8,652.3 558.7,650.9 559.6,649.6 560.5,648.2 561.3,646.9 562.1,645.5 562.9,644.1" stroke-dasharray="3 7" stroke-dashoffset="3"/><polyline points="562.9,644.1 563.7,642.8 564.5,641.4 565.2,640.0 565.9,638.7 566.6,637.3 567.3,635.9 568.0,634.5 568.6,633.2 569.3,631.8 569.9,630.4 570.5,629.0 571.0,627.7 571.6,626.3 572.1,624.9 572.6,623.5 573.1,622.1 573.6,620.8 574.1,619.4 574.5,618.0 574.9,616.6 575.4,615.2 575.7,613.9 576.1,612.5 576.5,611.1 576.8,609.7 577.1,608.4 577.4,607.0 577.7,605.6 578.0,604.3 578.2,602.9" stroke-dasharray="1 7" stroke-dashoffset="0"/><polyline points="578.2,602.9 578.5,601.5 578.7,600.2 578.9,598.8 579.0,597.5 579.2,596.1 579.4,594.7 579.5,593.4 579.6,592.0 579.7,590.7 579.8,589.4 579.8,588.0 579.9,586.7 579.9,585.4 579.9,584.0 579.9,582.7 579.9,581.4 579.9,580.1 579.9,578.8 579.8,577.4 579.7,576.1 579.6,574.8 579.5,573.5 579.4,572.2 579.3,571.0 579.1,569.7 578.9,568.4 578.8,567.1 578.6,565.8 578.4,564.6 578.1,563.3" stroke-dasharray="1 7" stroke-dashoffset="3"/><polyline points="578.1,563.3 577.9,562.0 577.6,560.8 577.4,559.5 577.1,558.3 576.8,557.1 576.5,555.8 576.2,554.6 575.8,553.4 575.5,552.2 575.1,550.9 574.8,549.7 574.4,548.5 574.0,547.3 573.6,546.1 573.1,545.0 572.7,543.8 572.2,542.6 571.8,541.4 571.3,540.3 570.8,539.1 570.3,538.0 569.8,536.8 569.3,535.7 568.8,534.5 568.2,533.4 567.7,532.3 567.1,531.2 566.5,530.1 565.9,529.0 565.3,527.9" stroke-dasharray="1 6" stroke-dashoffset="5"/><polyline points="565.3,527.9 564.7,526.8 564.1,525.7 563.4,524.6 562.8,523.5 562.1,522.5 561.5,521.4 560.8,520.4 560.1,519.3 559.4,518.3 558.7,517.2 558.0,516.2 557.3,515.2 556.5,514.2 555.8,513.2 555.0,512.2 554.3,511.2 553.5,510.2 552.7,509.2 551.9,508.2 551.1,507.3 550.3,506.3 549.5,505.4 548.7,504.4 547.9,503.5 547.0,502.5 546.2,501.6 545.3,500.7 544.4,499.8 543.5,498.9 542.7,498.0" stroke-dasharray="1 7" stroke-dashoffset="0"/><polyline points="542.7,498.0 541.8,497.1 540.9,496.2 540.0,495.3 539.0,494.5 538.1,493.6 537.2,492.7 536.2,491.9 535.3,491.1 534.3,490.2 533.4,489.4 532.4,488.6 531.4,487.7 530.5,486.9 529.5,486.1 528.5,485.3 527.5,484.6 526.5,483.8 525.4,483.0 524.4,482.2 523.4,481.5 522.4,480.7 521.3,480.0 520.3,479.3 519.2,478.5 518.2,477.8 517.1,477.1 516.0,476.4 514.9,475.7 513.9,475.0 512.8,474.3" stroke-dasharray="1 6" stroke-dashoffset="6"/><polyline points="512.8,474.3 511.7,473.6 510.6,472.9 509.5,472.3 508.4,471.6 507.2,471.0 506.1,470.3 505.0,469.7 503.9,469.0 502.7,468.4 501.6,467.8 500.4,467.2 499.3,466.6 498.1,466.0 497.0,465.4 495.8,464.8 494.6,464.3 493.4,463.7 492.3,463.1 491.1,462.6 489.9,462.0 488.7,461.5 487.5,461.0 486.3,460.4 485.1,459.9 483.9,459.4" stroke-dasharray="1 7" stroke-dashoffset="7"/><polyline points="263.7,472.5 262.5,473.1 261.3,473.8 260.2,474.5 259.0,475.2 257.8,475.9 256.6,476.6 255.4,477.3 254.3,478.0 253.1,478.8 252.0,479.5 250.8,480.2 249.7,481.0 248.5,481.7 247.4,482.5 246.3,483.3 245.1,484.1 244.0,484.8 242.9,485.6 241.8,486.4 240.7,487.2 239.6,488.1 238.5,488.9 237.4,489.7 236.4,490.5 235.3,491.4 234.2,492.2 233.2,493.1 232.1,494.0 231.1,494.8 230.0,495.7" stroke-dasharray="1 7" stroke-dashoffset="2"/><polyline points="230.0,495.7 229.0,496.6 228.0,497.5 227.0,498.4 226.0,499.3 225.0,500.2 224.0,501.1 223.0,502.0 222.0,503.0 221.0,503.9 220.1,504.9 219.1,505.8 218.2,506.8 217.2,507.8 216.3,508.7 215.4,509.7 214.5,510.7 213.6,511.7 212.7,512.7 211.8,513.7 210.9,514.7 210.0,515.7 209.2,516.8 208.3,517.8 207.5,518.9 206.6,519.9 205.8,521.0 205.0,522.0 204.2,523.1 203.4,524.2 202.6,525.3" stroke-dasharray="1 7" stroke-dashoffset="2"/><polyline points="202.6,525.3 201.8,526.3 201.0,527.4 200.3,528.5 199.5,529.6 198.8,530.8 198.1,531.9 197.4,533.0 196.7,534.1 196.0,535.3 195.3,536.4 194.6,537.6 193.9,538.7 193.3,539.9 192.7,541.1 192.0,542.2 191.4,543.4 190.8,544.6 190.2,545.8 189.6,547.0 189.1,548.2 188.5,549.4 188.0,550.6 187.4,551.8 186.9,553.0 186.4,554.3 185.9,555.5 185.4,556.7 185.0,558.0 184.5,559.2 184.1,560.5" stroke-dasharray="1 8" stroke-dashoffset="6"/><polyline points="184.1,560.5 183.7,561.8 183.2,563.0 182.8,564.3 182.5,565.6 182.1,566.8 181.7,568.1 181.4,569.4 181.1,570.7 180.7,572.0 180.4,573.3 180.2,574.6 179.9,575.9 179.6,577.2 179.4,578.6 179.2,579.9 179.0,581.2 178.8,582.5 178.6,583.9 178.4,585.2 178.3,586.5 178.1,587.9 178.0,589.2 177.9,590.6 177.8,591.9 177.8,593.3 177.7,594.6 177.7,596.0 177.6,597.4 177.6,598.7 177.7,600.1" stroke-dasharray="1 7" stroke-dashoffset="2"/><polyline points="177.7,600.1 177.7,601.5 177.7,602.8 177.8,604.2 177.9,605.6 178.0,607.0 178.1,608.3 178.2,609.7 178.4,611.1 178.6,612.5 178.7,613.9 178.9,615.2 179.2,616.6 179.4,618.0 179.7,619.4 179.9,620.8 180.2,622.2 180.6,623.6 180.9,624.9 181.2,626.3 181.6,627.7 182.0,629.1 182.4,630.5 182.8,631.9 183.3,633.3 183.8,634.6 184.2,636.0 184.7,637.4 185.3,638.8 185.8,640.2 186.4,641.5" stroke-dasharray="1 9" stroke-dashoffset="6"/><polyline points="186.4,641.5 187.0,642.9 187.6,644.3 188.2,645.7 188.8,647.0 189.5,648.4 190.2,649.7 190.9,651.1 191.6,652.5 192.3,653.8 193.1,655.2 193.9,656.5 194.7,657.8 195.5,659.2 196.3,660.5 197.2,661.8 198.1,663.2 199.0,664.5 199.9,665.8" stroke-dasharray="2 5" stroke-dashoffset="3"/><polyline points="192.1,670.6 193.0,671.9 194.0,673.3 195.0,674.7 196.1,676.0 197.1,677.4 198.2,678.7 199.3,680.1 200.4,681.4 201.5,682.7 202.7,684.0 203.8,685.3 205.0,686.6 206.3,687.9 207.5,689.2 208.8,690.5 210.0,691.8 211.3,693.0 212.7,694.3 214.0,695.5 215.4,696.8 216.7,698.0 218.2,699.2 219.6,700.4 221.0,701.6 222.5,702.8 224.0,704.0 225.5,705.1 227.0,706.3 228.5,707.4 230.1,708.6" stroke-dasharray="2 8" stroke-dashoffset="1"/><polyline points="230.1,708.6 231.7,709.7 233.3,710.8 234.9,711.9 236.5,713.0 238.2,714.0 239.9,715.1 241.6,716.1 243.3,717.2 245.0,718.2 246.8,719.2 248.5,720.2 250.3,721.2 252.1,722.1 254.0,723.1 255.8,724.0 257.6,724.9 259.5,725.9 261.4,726.8 263.3,727.6 265.2,728.5 267.2,729.3 269.1,730.2 271.1,731.0 273.1,731.8 275.1,732.6 277.1,733.3 279.1,734.1 281.1,734.8 283.2,735.6 285.3,736.3" stroke-dasharray="6 6" stroke-dashoffset="7"/><polyline points="285.3,736.3 287.3,736.9 289.4,737.6 291.5,738.3 293.7,738.9 295.8,739.5 297.9,740.1 300.1,740.7 302.3,741.3 304.4,741.8 306.6,742.3 308.8,742.8 311.0,743.3 313.3,743.8 315.5,744.2 317.7,744.7 320.0,745.1 322.2,745.5 324.5,745.9 326.8,746.2 329.0,746.6 331.3,746.9 333.6,747.2 335.9,747.5 338.2,747.7 340.5,748.0 342.8,748.2 345.2,748.4 347.5,748.6 349.8,748.7 352.2,748.9" stroke-dasharray="5 5" stroke-dashoffset="5"/><polyline points="352.2,748.9 354.5,749.0 356.8,749.1 359.2,749.2 361.5,749.3 363.9,749.3 366.2,749.3 368.6,749.3 370.9,749.3 373.3,749.3 375.6,749.2 378.0,749.2 380.4,749.1 382.7,749.0 385.1,748.8 387.4,748.7 389.8,748.5 392.1,748.3 394.5,748.1 396.8,747.9 399.2,747.6 401.5,747.3 403.8,747.1 406.2,746.8 408.5,746.4 410.8,746.1 413.1,745.7 415.4,745.3 417.7,744.9 420.0,744.5 422.3,744.1" stroke-dasharray="7 6" stroke-dashoffset="7"/><polyline points="422.3,744.1 424.6,743.6 426.9,743.1 429.1,742.6 431.4,742.1 433.7,741.6 435.9,741.0 438.1,740.5 440.4,739.9 442.6,739.3 444.8,738.6 447.0,738.0 449.2,737.3 451.3,736.7 453.5,736.0 455.7,735.3 457.8,734.5 459.9,733.8 462.1,733.0 464.2,732.3 466.2,731.5 468.3,730.7 470.4,729.9 472.5,729.0 474.5,728.2 476.5,727.3 478.5,726.4 480.5,725.5 482.5,724.6 484.5,723.7 486.4,722.7" stroke-dasharray="5 7" stroke-dashoffset="7"/><polyline points="486.4,722.7 488.4,721.8 490.3,720.8 492.2,719.8 494.1,718.8 496.0,717.8 497.8,716.8 499.7,715.8 501.5,714.7 503.3,713.7 505.1,712.6 506.9,711.5 508.6,710.4 510.4,709.3 512.1,708.2 513.8,707.1 515.5,705.9 517.1,704.8 518.8,703.6 520.4,702.4 522.0,701.2 523.6,700.1 525.2,698.8 526.8,697.6 528.3,696.4 529.8,695.2 531.3,693.9 532.8,692.7 534.2,691.4 535.7,690.2 537.1,688.9" stroke-dasharray="2 6" stroke-dashoffset="4"/><polyline points="537.1,688.9 538.5,687.6 539.9,686.3 541.3,685.0 542.6,683.7 543.9,682.4 545.2,681.1 546.5,679.8 547.8,678.4 549.0,677.1 550.2,675.7 551.4,674.4 552.6,673.0 553.8,671.7 554.9,670.3 556.0,668.9 557.1,667.5 558.2,666.2 559.3,664.8 560.3,663.4 561.3,662.0 562.3,660.6 563.3,659.2 564.3,657.8 565.2,656.4 566.1,655.0 567.0,653.5 567.9,652.1 568.8,650.7 569.6,649.3 570.4,647.8" stroke-dasharray="2 7" stroke-dashoffset="4"/><polyline points="570.4,647.8 571.2,646.4 572.0,645.0 572.7,643.6 573.5,642.1 574.2,640.7 574.9,639.2 575.6,637.8 576.2,636.4 576.9,634.9 577.5,633.5 578.1,632.0 578.7,630.6 579.2,629.2 579.7,627.7 580.3,626.3 580.8,624.8 581.3,623.4 581.7,622.0 582.2,620.5 582.6,619.1 583.0,617.6 583.4,616.2 583.8,614.8 584.1,613.3 584.4,611.9 584.7,610.5 585.0,609.0 585.3,607.6 585.6,606.2 585.8,604.8" stroke-dasharray="1 7" stroke-dashoffset="3"/><polyline points="585.8,604.8 586.0,603.3 586.3,601.9 586.4,600.5 586.6,599.1 586.8,597.7 586.9,596.3 587.0,594.9 587.1,593.5 587.2,592.1 587.3,590.7 587.3,589.3 587.4,587.9 587.4,586.5 587.4,585.1 587.4,583.8 587.3,582.4 587.3,581.0 587.2,579.7 587.1,578.3 587.0,576.9 586.9,575.6 586.8,574.2 586.7,572.9 586.5,571.6 586.3,570.2 586.1,568.9 585.9,567.6 585.7,566.2 585.5,564.9 585.2,563.6" stroke-dasharray="1 6" stroke-dashoffset="5"/><polyline points="585.2,563.6 585.0,562.3 584.7,561.0 584.4,559.7 584.1,558.4 583.8,557.2 583.4,555.9 583.1,554.6 582.7,553.3 582.4,552.1 582.0,550.8 581.6,549.6 581.1,548.3 580.7,547.1 580.3,545.9 579.8,544.6 579.4,543.4 578.9,542.2 578.4,541.0 577.9,539.8 577.4,538.6 576.8,537.4 576.3,536.2 575.7,535.0 575.2,533.9 574.6,532.7 574.0,531.5 573.4,530.4 572.8,529.2 572.2,528.1 571.5,527.0" stroke-dasharray="1 8" stroke-dashoffset="4"/><polyline points="571.5,527.0 570.9,525.8 570.2,524.7 569.6,523.6 568.9,522.5 568.2,521.4 567.5,520.3 566.8,519.2 566.1,518.2 565.3,517.1 564.6,516.0 563.9,515.0 563.1,513.9 562.3,512.9 561.5,511.8 560.8,510.8 560.0,509.8 559.1,508.8 558.3,507.7 557.5,506.7 556.7,505.7 555.8,504.8 555.0,503.8 554.1,502.8 553.2,501.8 552.3,500.9 551.5,499.9 550.6,499.0 549.7,498.0 548.7,497.1 547.8,496.2" stroke-dasharray="1 8" stroke-dashoffset="3"/><polyline points="547.8,496.2 546.9,495.3 545.9,494.4 545.0,493.5 544.0,492.6 543.1,491.7 542.1,490.8 541.1,489.9 540.2,489.0 539.2,488.2 538.2,487.3 537.2,486.5 536.1,485.7 535.1,484.8 534.1,484.0 533.1,483.2 532.0,482.4 531.0,481.6 529.9,480.8 528.9,480.0 527.8,479.2 526.7,478.5 525.6,477.7 524.5,476.9 523.4,476.2 522.4,475.4 521.2,474.7 520.1,474.0 519.0,473.3 517.9,472.5 516.8,471.8" stroke-dasharray="1 6" stroke-dashoffset="4"/><polyline points="516.8,471.8 515.6,471.1 514.5,470.5 513.3,469.8 512.2,469.1 511.0,468.4 509.9,467.8 508.7,467.1 507.5,466.5 506.4,465.8 505.2,465.2 504.0,464.6 502.8,463.9 501.6,463.3 500.4,462.7 499.2,462.1 498.0,461.6 496.8,461.0 495.6,460.4 494.3,459.8 493.1,459.3 491.9,458.7 490.6,458.2 489.4,457.6 488.2,457.1 486.9,456.6 485.7,456.1 484.4,455.6 483.1,455.1 481.9,454.6 480.6,454.1" stroke-dasharray="1 8" stroke-dashoffset="3"/><polyline points="480.6,454.1 479.3,453.6 478.1,453.1" stroke-dasharray="1 9" stroke-dashoffset="7"/><polyline points="268.9,465.3 267.7,466.0 266.4,466.6 265.1,467.3 263.9,467.9 262.6,468.6 261.4,469.3 260.1,469.9 258.9,470.6 257.7,471.3 256.4,472.0 255.2,472.7 254.0,473.5 252.8,474.2 251.5,474.9 250.3,475.7 249.1,476.4 247.9,477.2 246.7,477.9 245.5,478.7 244.4,479.5 243.2,480.3 242.0,481.0 240.9,481.8 239.7,482.7 238.5,483.5 237.4,484.3 236.2,485.1 235.1,486.0 234.0,486.8 232.9,487.7" stroke-dasharray="1 8" stroke-dashoffset="2"/><polyline points="232.9,487.7 231.7,488.5 230.6,489.4 229.5,490.3 228.4,491.1 227.3,492.0 226.2,492.9 225.2,493.8 224.1,494.7 223.0,495.6 222.0,496.6 220.9,497.5 219.9,498.4 218.9,499.4 217.8,500.3 216.8,501.3 215.8,502.3 214.8,503.3 213.8,504.2 212.8,505.2 211.8,506.2 210.9,507.2 209.9,508.2 208.9,509.3 208.0,510.3 207.0,511.3 206.1,512.4 205.2,513.4 204.3,514.5 203.4,515.5 202.5,516.6" stroke-dasharray="1 6" stroke-dashoffset="7"/><polyline points="202.5,516.6 201.6,517.7 200.7,518.7 199.9,519.8 199.0,520.9 198.2,522.0 197.3,523.1 196.5,524.3 195.7,525.4 194.9,526.5 194.1,527.6 193.3,528.8 192.5,529.9 191.8,531.1 191.0,532.3 190.3,533.4 189.5,534.6 188.8,535.8 188.1,537.0 187.4,538.2 186.7,539.4 186.0,540.6 185.4,541.8 184.7,543.0 184.1,544.2 183.5,545.5 182.8,546.7 182.2,548.0 181.7,549.2 181.1,550.5 180.5,551.7" stroke-dasharray="1 8" stroke-dashoffset="5"/><polyline points="180.5,551.7 180.0,553.0 179.4,554.3 178.9,555.5 178.4,556.8 177.9,558.1 177.4,559.4 176.9,560.7 176.5,562.0 176.0,563.3 175.6,564.7 175.2,566.0 174.8,567.3 174.4,568.6 174.0,570.0 173.7,571.3 173.3,572.7 173.0,574.0 172.7,575.4 172.4,576.7 172.1,578.1 171.8,579.5 171.6,580.8 171.3,582.2 171.1,583.6 170.9,585.0 170.7,586.4 170.5,587.7 170.4,589.1 170.3,590.5 170.1,591.9" stroke-dasharray="1 6" stroke-dashoffset="6"/><polyline points="170.1,591.9 170.0,593.4 169.9,594.8 169.9,596.2 169.8,597.6 169.8,599.0 169.7,600.4 169.7,601.9 169.8,603.3 169.8,604.7 169.8,606.1 169.9,607.6 170.0,609.0 170.1,610.4 170.2,611.9 170.4,613.3 170.5,614.8 170.7,616.2 170.9,617.7 171.1,619.1 171.3,620.5 171.6,622.0 171.9,623.4 172.1,624.9 172.5,626.3 172.8,627.8 173.1,629.2 173.5,630.7 173.9,632.1 174.3,633.6 174.7,635.0" stroke-dasharray="1 8" stroke-dashoffset="3"/><polyline points="174.7,635.0 175.2,636.5 175.6,637.9 176.1,639.4 176.6,640.8 177.2,642.3 177.7,643.7 178.3,645.1 178.9,646.6 179.5,648.0 180.1,649.5 180.8,650.9 181.4,652.3 182.1,653.7 182.8,655.2 183.6,656.6 184.3,658.0 185.1,659.4 185.9,660.8 186.7,662.2 187.6,663.6 188.4,665.0 189.3,666.4 190.2,667.8 191.1,669.2 192.1,670.6" stroke-dasharray="2 8" stroke-dashoffset="5"/><polyline points="184.1,675.4 185.1,676.9 186.1,678.3 187.2,679.7 188.2,681.2 189.3,682.6 190.4,684.0 191.5,685.4 192.7,686.8 193.8,688.2 195.0,689.6 196.2,690.9 197.5,692.3 198.7,693.7 200.0,695.0 201.3,696.4 202.6,697.7 204.0,699.0 205.3,700.3 206.7,701.6 208.1,702.9 209.6,704.2 211.0,705.5 212.5,706.8 214.0,708.0 215.5,709.3 217.0,710.5 218.6,711.7 220.2,713.0 221.8,714.2 223.4,715.4" stroke-dasharray="3 7" stroke-dashoffset="4"/><polyline points="223.4,715.4 225.0,716.5 226.7,717.7 228.4,718.9 230.1,720.0 231.8,721.1 233.6,722.2 235.3,723.3 237.1,724.4 238.9,725.5 240.7,726.6 242.6,727.6 244.4,728.7 246.3,729.7 248.2,730.7 250.1,731.7 252.0,732.6 254.0,733.6 256.0,734.5 257.9,735.5 259.9,736.4 262.0,737.3 264.0,738.2 266.0,739.0 268.1,739.9 270.2,740.7 272.3,741.5 274.4,742.3 276.5,743.1 278.7,743.8 280.8,744.6" stroke-dasharray="7 8" stroke-dashoffset="5"/><polyline points="280.8,744.6 283.0,745.3 285.2,746.0 287.4,746.7 289.6,747.4 291.8,748.0 294.1,748.7 296.3,749.3 298.6,749.9 300.9,750.4 303.2,751.0 305.5,751.5 307.8,752.1 310.1,752.6 312.4,753.0 314.8,753.5 317.1,753.9 319.5,754.4 321.8,754.8 324.2,755.1 326.6,755.5 329.0,755.8 331.4,756.1 333.8,756.4 336.2,756.7 338.6,757.0 341.0,757.2 343.5,757.4 345.9,757.6 348.3,757.8 350.8,757.9" stroke-dasharray="5 7" stroke-dashoffset="2"/><polyline points="350.8,757.9 353.2,758.1 355.7,758.2 358.1,758.3 360.6,758.3 363.0,758.4 365.5,758.4 368.0,758.4 370.4,758.4 372.9,758.4 375.4,758.3 377.8,758.2 380.3,758.1 382.8,758.0 385.2,757.9 387.7,757.7 390.1,757.5 392.6,757.3 395.1,757.1 397.5,756.9 400.0,756.6 402.4,756.3 404.8,756.0 407.3,755.7 409.7,755.3 412.1,755.0 414.6,754.6 417.0,754.2 419.4,753.7 421.8,753.3 424.2,752.8" stroke-dasharray="5 7" stroke-dashoffset="6"/><polyline points="424.2,752.8 426.6,752.3 429.0,751.8 431.3,751.3 433.7,750.8 436.0,750.2 438.4,749.6 440.7,749.0 443.0,748.4 445.4,747.8 447.7,747.1 450.0,746.4 452.3,745.7 454.5,745.0 456.8,744.3 459.0,743.5 461.3,742.8 463.5,742.0 465.7,741.2 467.9,740.4 470.1,739.5 472.3,738.7 474.4,737.8 476.6,736.9 478.7,736.0 480.8,735.1 482.9,734.2 485.0,733.2 487.0,732.3 489.1,731.3 491.1,730.3" stroke-dasharray="8 5" stroke-dashoffset="5"/><polyline points="491.1,730.3 493.1,729.3 495.1,728.3 497.1,727.2 499.1,726.2 501.1,725.1 503.0,724.0 504.9,722.9 506.8,721.8 508.7,720.7 510.5,719.6 512.4,718.5 514.2,717.3 516.0,716.1 517.8,715.0 519.6,713.8 521.3,712.6 523.1,711.3 524.8,710.1 526.5,708.9 528.1,707.6 529.8,706.4 531.4,705.1 533.0,703.8 534.6,702.5 536.2,701.2 537.7,699.9 539.3,698.6 540.8,697.3 542.3,696.0 543.7,694.6" stroke-dasharray="2 8" stroke-dashoffset="7"/><polyline points="543.7,694.6 545.2,693.3 546.6,691.9 548.0,690.6 549.4,689.2 550.8,687.8 552.1,686.4 553.4,685.0 554.7,683.6 556.0,682.2 557.3,680.8 558.5,679.4 559.7,678.0 560.9,676.5 562.1,675.1 563.3,673.7 564.4,672.2 565.5,670.8 566.6,669.3 567.7,667.9 568.7,666.4 569.7,664.9 570.7,663.5 571.7,662.0 572.7,660.5 573.6,659.0 574.5,657.6 575.4,656.1 576.3,654.6 577.1,653.1 578.0,651.6" stroke-dasharray="3 8" stroke-dashoffset="0"/><polyline points="578.0,651.6 578.8,650.1 579.6,648.6 580.3,647.1 581.1,645.6 581.8,644.1 582.5,642.6 583.2,641.1 583.9,639.6 584.5,638.1 585.2,636.6 585.8,635.1 586.3,633.6 586.9,632.1 587.4,630.6 588.0,629.1 588.5,627.6 589.0,626.1 589.4,624.6 589.9,623.1 590.3,621.6 590.7,620.1 591.1,618.6 591.4,617.1 591.8,615.6 592.1,614.1 592.4,612.6 592.7,611.1 593.0,609.6 593.2,608.1 593.5,606.7" stroke-dasharray="1 6" stroke-dashoffset="4"/><polyline points="593.5,606.7 593.7,605.2 593.9,603.7 594.1,602.2 594.2,600.8 594.4,599.3 594.5,597.8 594.6,596.4 594.7,594.9 594.7,593.5 594.8,592.0 594.8,590.6 594.8,589.1 594.8,587.7 594.8,586.3 594.8,584.8 594.7,583.4 594.7,582.0 594.6,580.6 594.5,579.2 594.4,577.7 594.2,576.3 594.1,574.9 593.9,573.6 593.7,572.2 593.5,570.8 593.3,569.4 593.1,568.0 592.9,566.7 592.6,565.3 592.3,563.9" stroke-dasharray="1 6" stroke-dashoffset="1"/><polyline points="592.3,563.9 592.0,562.6 591.7,561.3 591.4,559.9 591.1,558.6 590.7,557.2 590.4,555.9 590.0,554.6 589.6,553.3 589.2,552.0 588.8,550.7 588.4,549.4 587.9,548.1 587.5,546.8 587.0,545.6 586.5,544.3 586.0,543.0 585.5,541.8 585.0,540.5 584.4,539.3 583.9,538.1 583.3,536.8 582.8,535.6 582.2,534.4 581.6,533.2 581.0,532.0 580.3,530.8 579.7,529.6 579.1,528.4 578.4,527.2 577.7,526.1" stroke-dasharray="1 6" stroke-dashoffset="2"/><polyline points="577.7,526.1 577.1,524.9 576.4,523.8 575.7,522.6 575.0,521.5 574.2,520.3 573.5,519.2 572.8,518.1 572.0,517.0 571.2,515.9 570.5,514.8 569.7,513.7 568.9,512.6 568.1,511.5 567.3,510.5 566.4,509.4 565.6,508.4 564.7,507.3 563.9,506.3 563.0,505.2 562.2,504.2 561.3,503.2 560.4,502.2 559.5,501.2 558.6,500.2 557.7,499.2 556.7,498.2 555.8,497.3 554.8,496.3 553.9,495.3 552.9,494.4" stroke-dasharray="1 7" stroke-dashoffset="4"/><polyline points="552.9,494.4 552.0,493.4 551.0,492.5 550.0,491.6 549.0,490.7 548.0,489.7 547.0,488.8 546.0,487.9 545.0,487.1 543.9,486.2 542.9,485.3 541.9,484.4 540.8,483.6 539.7,482.7 538.7,481.9 537.6,481.0 536.5,480.2 535.4,479.4 534.3,478.6 533.2,477.8 532.1,477.0 531.0,476.2 529.9,475.4 528.8,474.6 527.6,473.9 526.5,473.1 525.4,472.4 524.2,471.6 523.1,470.9 521.9,470.1 520.7,469.4" stroke-dasharray="1 7" stroke-dashoffset="2"/><polyline points="520.7,469.4 519.6,468.7 518.4,468.0 517.2,467.3 516.0,466.6 514.8,465.9 513.6,465.2 512.4,464.6 511.2,463.9 510.0,463.3 508.8,462.6 507.5,462.0 506.3,461.3 505.1,460.7 503.8,460.1 502.6,459.5 501.3,458.9 500.1,458.3 498.8,457.7 497.6,457.1 496.3,456.6 495.0,456.0 493.7,455.4 492.5,454.9 491.2,454.3 489.9,453.8 488.6,453.3 487.3,452.8 486.0,452.2 484.7,451.7 483.4,451.2" stroke-dasharray="1 8" stroke-dashoffset="5"/><polyline points="483.4,451.2 482.1,450.8 480.8,450.3 479.5,449.8 478.1,449.3 476.8,448.9 475.5,448.4 474.1,448.0 472.8,447.5 471.5,447.1" stroke-dasharray="1 6" stroke-dashoffset="0"/><polyline points="275.0,458.4 273.6,459.0 272.3,459.6 270.9,460.2 269.6,460.8 268.3,461.5 267.0,462.1 265.7,462.7 264.3,463.4 263.0,464.1 261.7,464.7 260.4,465.4 259.1,466.1 257.8,466.8 256.6,467.5 255.3,468.2 254.0,468.9 252.7,469.6 251.5,470.3 250.2,471.1 248.9,471.8 247.7,472.6 246.4,473.3 245.2,474.1 243.9,474.9 242.7,475.6 241.5,476.4 240.2,477.2 239.0,478.0 237.8,478.8 236.6,479.7" stroke-dasharray="1 9" stroke-dashoffset="5"/><polyline points="236.6,479.7 235.4,480.5 234.2,481.3 233.0,482.2 231.8,483.0 230.7,483.9 229.5,484.7 228.3,485.6 227.2,486.5 226.0,487.4 224.9,488.3 223.7,489.2 222.6,490.1 221.5,491.0 220.3,491.9 219.2,492.9 218.1,493.8 217.0,494.8 215.9,495.7 214.8,496.7 213.8,497.7 212.7,498.7 211.6,499.6 210.6,500.6 209.5,501.6 208.5,502.7 207.5,503.7 206.4,504.7 205.4,505.7 204.4,506.8 203.4,507.8" stroke-dasharray="1 7" stroke-dashoffset="4"/><polyline points="203.4,507.8 202.4,508.9 201.5,509.9 200.5,511.0 199.5,512.1 198.6,513.2 197.6,514.3 196.7,515.4 195.8,516.5 194.9,517.6 194.0,518.7 193.1,519.8 192.2,521.0 191.3,522.1 190.4,523.3 189.6,524.4 188.7,525.6 187.9,526.8 187.1,527.9 186.3,529.1 185.5,530.3 184.7,531.5 183.9,532.7 183.1,533.9 182.4,535.2 181.6,536.4 180.9,537.6 180.1,538.9 179.4,540.1 178.7,541.4 178.0,542.6" stroke-dasharray="1 8" stroke-dashoffset="5"/><polyline points="178.0,542.6 177.4,543.9 176.7,545.2 176.1,546.5 175.4,547.7 174.8,549.0 174.2,550.3 173.6,551.6 173.0,552.9 172.4,554.3 171.9,555.6 171.3,556.9 170.8,558.2 170.3,559.6 169.8,560.9 169.3,562.3 168.8,563.6 168.3,565.0 167.9,566.4 167.5,567.8 167.0,569.1 166.6,570.5 166.2,571.9 165.9,573.3 165.5,574.7 165.2,576.1 164.8,577.5 164.5,578.9 164.2,580.4 164.0,581.8 163.7,583.2" stroke-dasharray="1 7" stroke-dashoffset="5"/><polyline points="163.7,583.2 163.4,584.6 163.2,586.1 163.0,587.5 162.8,589.0 162.6,590.4 162.5,591.9 162.3,593.3 162.2,594.8 162.1,596.3 162.0,597.7 161.9,599.2 161.8,600.7 161.8,602.2 161.8,603.6 161.8,605.1 161.8,606.6 161.8,608.1 161.9,609.6 161.9,611.1 162.0,612.6 162.1,614.1 162.3,615.6 162.4,617.1 162.6,618.6 162.8,620.1 163.0,621.6 163.2,623.1 163.4,624.6 163.7,626.1 164.0,627.6" stroke-dasharray="1 7" stroke-dashoffset="7"/><polyline points="164.0,627.6 164.3,629.1 164.6,630.7 165.0,632.2 165.3,633.7 165.7,635.2 166.1,636.7 166.5,638.2 167.0,639.7 167.4,641.3 167.9,642.8 168.4,644.3 169.0,645.8 169.5,647.3 170.1,648.8 170.7,650.3 171.3,651.8 172.0,653.3 172.6,654.8 173.3,656.3 174.0,657.8 174.7,659.3 175.5,660.8 176.2,662.2 177.0,663.7 177.8,665.2 178.7,666.7 179.5,668.1 180.4,669.6 181.3,671.1 182.2,672.5" stroke-dasharray="3 7" stroke-dashoffset="3"/><polyline points="182.2,672.5 183.2,674.0 184.1,675.4" stroke-dasharray="3 5" stroke-dashoffset="1"/><polyline points="216.6,722.3 218.3,723.5 220.0,724.8 221.8,726.0 223.5,727.2 225.3,728.4 227.1,729.5 228.9,730.7 230.8,731.9 232.7,733.0 234.6,734.1 236.5,735.2 238.4,736.3 240.3,737.4 242.3,738.4 244.3,739.5 246.3,740.5 248.3,741.5 250.4,742.5 252.5,743.5 254.5,744.5 256.6,745.4 258.8,746.3 260.9,747.2 263.0,748.1 265.2,749.0 267.4,749.9 269.6,750.7 271.8,751.5 274.1,752.3 276.3,753.1" stroke-dasharray="8 8" stroke-dashoffset="0"/><polyline points="276.3,753.1 278.6,753.9 280.9,754.6 283.2,755.3 285.5,756.1 287.8,756.7 290.1,757.4 292.5,758.1 294.8,758.7 297.2,759.3 299.6,759.9 302.0,760.5 304.4,761.0 306.8,761.5 309.3,762.0 311.7,762.5 314.2,763.0 316.6,763.4 319.1,763.8 321.6,764.2 324.1,764.6 326.6,765.0 329.1,765.3 331.6,765.6 334.1,765.9 336.6,766.2 339.2,766.4 341.7,766.7 344.3,766.9 346.8,767.1 349.4,767.2" stroke-dasharray="8 8" stroke-dashoffset="5"/><polyline points="349.4,767.2 351.9,767.4 354.5,767.5 357.0,767.6 359.6,767.6 362.2,767.7 364.8,767.7 367.3,767.7 369.9,767.7 372.5,767.7 375.1,767.6 377.6,767.5 380.2,767.4 382.8,767.3 385.4,767.1 387.9,767.0 390.5,766.8 393.1,766.6 395.7,766.3 398.2,766.1 400.8,765.8 403.3,765.5 405.9,765.2 408.4,764.8 411.0,764.4 413.5,764.1 416.0,763.7 418.6,763.2 421.1,762.8 423.6,762.3 426.1,761.8" stroke-dasharray="6 8" stroke-dashoffset="2"/><polyline points="426.1,761.8 428.6,761.3 431.1,760.7 433.6,760.2 436.0,759.6 438.5,759.0 440.9,758.4 443.4,757.8 445.8,757.1 448.2,756.4 450.6,755.7 453.0,755.0 455.4,754.3 457.8,753.5 460.1,752.8 462.5,752.0 464.8,751.2 467.1,750.3 469.4,749.5 471.7,748.6 474.0,747.7 476.3,746.8 478.5,745.9 480.7,745.0 483.0,744.0 485.2,743.1 487.3,742.1 489.5,741.1 491.7,740.1 493.8,739.1 495.9,738.0" stroke-dasharray="7 6" stroke-dashoffset="6"/><polyline points="585.6,655.4 586.5,653.8 587.3,652.3 588.0,650.7 588.8,649.1 589.5,647.6 590.3,646.0 591.0,644.4 591.6,642.9 592.3,641.3 592.9,639.7 593.5,638.2 594.1,636.6 594.7,635.0 595.2,633.4 595.7,631.9 596.2,630.3 596.7,628.7 597.2,627.2 597.6,625.6 598.1,624.1 598.5,622.5 598.8,620.9 599.2,619.4 599.5,617.8 599.9,616.3 600.2,614.7 600.4,613.2 600.7,611.6 600.9,610.1 601.2,608.6" stroke-dasharray="1 6" stroke-dashoffset="3"/><polyline points="601.2,608.6 601.4,607.0 601.5,605.5 601.7,604.0 601.9,602.4 602.0,600.9 602.1,599.4 602.2,597.9 602.3,596.4 602.3,594.8 602.3,593.3 602.4,591.8 602.4,590.3 602.3,588.9 602.3,587.4 602.3,585.9 602.2,584.4 602.1,582.9 602.0,581.5 601.9,580.0 601.7,578.6 601.6,577.1 601.4,575.7 601.2,574.2 601.0,572.8 600.8,571.3 600.6,569.9 600.3,568.5 600.0,567.1 599.7,565.7 599.4,564.3" stroke-dasharray="1 8" stroke-dashoffset="1"/><polyline points="599.4,564.3 599.1,562.9 598.8,561.5 598.5,560.1 598.1,558.7 597.7,557.3 597.3,556.0 596.9,554.6 596.5,553.3 596.1,551.9 595.6,550.6 595.2,549.2 594.7,547.9 594.2,546.6 593.7,545.3 593.2,544.0 592.7,542.7 592.1,541.4 591.6,540.1 591.0,538.8 590.4,537.5 589.8,536.3 589.2,535.0 588.6,533.7 588.0,532.5 587.3,531.3 586.7,530.0 586.0,528.8 585.3,527.6 584.6,526.4 583.9,525.2" stroke-dasharray="1 9" stroke-dashoffset="5"/><polyline points="583.9,525.2 583.2,524.0 582.5,522.8 581.7,521.6 581.0,520.4 580.2,519.3 579.5,518.1 578.7,517.0 577.9,515.8 577.1,514.7 576.3,513.6 575.5,512.4 574.6,511.3 573.8,510.2 572.9,509.1 572.1,508.0 571.2,506.9 570.3,505.9 569.4,504.8 568.5,503.7 567.6,502.7 566.7,501.6 565.8,500.6 564.8,499.6 563.9,498.6 562.9,497.6 562.0,496.5 561.0,495.5 560.0,494.6 559.0,493.6 558.0,492.6" stroke-dasharray="1 9" stroke-dashoffset="6"/><polyline points="486.2,448.4 484.8,447.9 483.5,447.4 482.1,447.0 480.7,446.5 479.4,446.0 478.0,445.6 476.6,445.1 475.3,444.7 473.9,444.2 472.5,443.8 471.1,443.4 469.7,442.9 468.3,442.5 467.0,442.1 465.6,441.7 464.2,441.4" stroke-dasharray="1 8" stroke-dashoffset="7"/><polyline points="229.9,479.2 228.7,480.1 227.5,480.9 226.2,481.8 225.0,482.7 223.8,483.6 222.6,484.5 221.4,485.4 220.2,486.3 219.0,487.3 217.9,488.2 216.7,489.1 215.5,490.1 214.4,491.1 213.2,492.0 212.1,493.0 211.0,494.0 209.8,495.0 208.7,496.0 207.6,497.0 206.5,498.0 205.4,499.0 204.3,500.0 203.2,501.1 202.2,502.1 201.1,503.2 200.0,504.2 199.0,505.3 198.0,506.4 196.9,507.5 195.9,508.6" stroke-dasharray="1 6" stroke-dashoffset="6"/><polyline points="195.9,508.6 194.9,509.7 193.9,510.8 192.9,511.9 191.9,513.0 190.9,514.2 190.0,515.3 189.0,516.4 188.1,517.6 187.1,518.8 186.2,519.9 185.3,521.1 184.4,522.3 183.5,523.5 182.6,524.7 181.7,525.9 180.9,527.1 180.0,528.3 179.2,529.6 178.3,530.8 177.5,532.0 176.7,533.3 175.9,534.5 175.1,535.8 174.4,537.1 173.6,538.4 172.8,539.6 172.1,540.9 171.4,542.2 170.7,543.6 170.0,544.9" stroke-dasharray="1 9" stroke-dashoffset="5"/><polyline points="170.0,544.9 169.3,546.2 168.6,547.5 167.9,548.9 167.3,550.2 166.7,551.5 166.0,552.9 165.4,554.3 164.8,555.6 164.2,557.0 163.7,558.4 163.1,559.8 162.6,561.2 162.1,562.6 161.6,564.0 161.1,565.4 160.6,566.8 160.1,568.2 159.7,569.6 159.2,571.1 158.8,572.5 158.4,574.0 158.0,575.4 157.6,576.9 157.3,578.3 156.9,579.8 156.6,581.3 156.3,582.7 156.0,584.2 155.8,585.7 155.5,587.2" stroke-dasharray="1 8" stroke-dashoffset="7"/><polyline points="155.5,587.2 155.3,588.7 155.0,590.2 154.8,591.7 154.6,593.2 154.5,594.7 154.3,596.2 154.2,597.8 154.1,599.3 154.0,600.8 153.9,602.3 153.8,603.9 153.8,605.4 153.8,607.0 153.8,608.5 153.8,610.1 153.8,611.6 153.9,613.2 153.9,614.7 154.0,616.3 154.1,617.8 154.3,619.4 154.4,621.0 154.6,622.5 154.8,624.1 155.0,625.7 155.2,627.3 155.5,628.8 155.7,630.4 156.0,632.0 156.4,633.6" stroke-dasharray="1 9" stroke-dashoffset="0"/><polyline points="230.2,742.9 232.2,744.1 234.3,745.2 236.3,746.3 238.4,747.4 240.5,748.5 242.6,749.6 244.7,750.6 246.9,751.7 249.0,752.7 251.2,753.7 253.4,754.7 255.6,755.6 257.9,756.6 260.1,757.5 262.4,758.4 264.7,759.3 267.0,760.1 269.3,761.0 271.7,761.8 274.0,762.6 276.4,763.4 278.8,764.2 281.2,764.9 283.6,765.7 286.1,766.4 288.5,767.0 291.0,767.7 293.5,768.4 296.0,769.0 298.5,769.6" stroke-dasharray="5 7" stroke-dashoffset="1"/><polyline points="298.5,769.6 301.0,770.2 303.5,770.7 306.1,771.2 308.6,771.8 311.2,772.2 313.7,772.7 316.3,773.2 318.9,773.6 321.5,774.0 324.1,774.4 326.7,774.7 329.4,775.0 332.0,775.4 334.6,775.6 337.3,775.9 339.9,776.1 342.6,776.4 345.2,776.6 347.9,776.7 350.6,776.9 353.3,777.0 355.9,777.1 358.6,777.2 361.3,777.2 364.0,777.2 366.7,777.3 369.4,777.2 372.1,777.2 374.8,777.1 377.5,777.0" stroke-dasharray="7 7" stroke-dashoffset="3"/><polyline points="377.5,777.0 380.2,776.9 382.8,776.8 385.5,776.6 388.2,776.5 390.9,776.3 393.6,776.0 396.3,775.8 399.0,775.5 401.6,775.2 404.3,774.9 407.0,774.5 409.6,774.2 412.3,773.8 414.9,773.4 417.6,772.9 420.2,772.5 422.8,772.0 425.4,771.5 428.1,771.0 430.7,770.4 433.3,769.9 435.8,769.3 438.4,768.7 441.0,768.0 443.5,767.4 446.1,766.7 448.6,766.0 451.1,765.3 453.6,764.6 456.1,763.8" stroke-dasharray="7 6" stroke-dashoffset="7"/><polyline points="456.1,763.8 458.6,763.0 461.1,762.2 463.6,761.4 466.0,760.6 468.4,759.7 470.8,758.9 473.3,758.0 475.6,757.1" stroke-dasharray="6 7" stroke-dashoffset="4"/><polyline points="601.3,641.2 601.9,639.6 602.5,638.0 603.0,636.3 603.6,634.7 604.1,633.1 604.6,631.5 605.0,629.8 605.5,628.2 605.9,626.6 606.3,625.0 606.6,623.3 607.0,621.7 607.3,620.1 607.6,618.5 607.9,616.9 608.2,615.3 608.5,613.7 608.7,612.1 608.9,610.5 609.1,608.9 609.3,607.3 609.4,605.7 609.5,604.1 609.7,602.5 609.7,600.9 609.8,599.4 609.9,597.8 609.9,596.2 609.9,594.7 609.9,593.1" stroke-dasharray="1 9" stroke-dashoffset="1"/><polyline points="609.9,593.1 609.9,591.6 609.9,590.0 609.8,588.5 609.7,587.0 609.6,585.4 609.5,583.9 609.4,582.4 609.3,580.9 609.1,579.4 608.9,577.9 608.7,576.4 608.5,574.9 608.3,573.4 608.0,571.9 607.8,570.4 607.5,569.0 607.2,567.5 606.9,566.0 606.6,564.6 606.2,563.1 605.9,561.7 605.5,560.3 605.1,558.9 604.7,557.4 604.3,556.0 603.8,554.6 603.4,553.2 602.9,551.8 602.5,550.4 602.0,549.1" stroke-dasharray="1 8" stroke-dashoffset="4"/><polyline points="602.0,549.1 601.5,547.7 600.9,546.3 600.4,545.0 599.9,543.6 599.3,542.3 598.7,541.0 598.1,539.6 597.5,538.3 596.9,537.0 596.3,535.7 595.7,534.4 595.0,533.1 594.3,531.8 593.7,530.5 593.0,529.3 592.3,528.0 591.5,526.8 590.8,525.5 590.1,524.3 589.3,523.1 588.6,521.8 587.8,520.6 587.0,519.4 586.2,518.2 585.4,517.0 584.6,515.8 583.8,514.7 582.9,513.5 582.1,512.3 581.2,511.2" stroke-dasharray="1 9" stroke-dashoffset="2"/><polyline points="581.2,511.2 580.4,510.0 579.5,508.9 578.6,507.8 577.7,506.7 576.8,505.5 575.9,504.4 574.9,503.4 574.0,502.3" stroke-dasharray="1 7" stroke-dashoffset="3"/><polyline points="473.4,440.5 472.0,440.1 470.6,439.6 469.2,439.2 467.7,438.8 466.3,438.4 464.8,438.1 463.4,437.7 462.0,437.3 460.5,436.9 459.1,436.6 457.6,436.2 456.2,435.9" stroke-dasharray="1 7" stroke-dashoffset="2"/><polyline points="212.0,487.3 210.8,488.2 209.6,489.2 208.4,490.2 207.2,491.2 206.0,492.2 204.9,493.2 203.7,494.3 202.5,495.3 201.4,496.3 200.3,497.4 199.1,498.5 198.0,499.5 196.9,500.6 195.8,501.7 194.7,502.8 193.6,503.9 192.5,505.0 191.4,506.1 190.4,507.2 189.3,508.3 188.3,509.5 187.3,510.6 186.2,511.8 185.2,512.9 184.2,514.1 183.2,515.3 182.2,516.5 181.2,517.7 180.3,518.9 179.3,520.1" stroke-dasharray="1 8" stroke-dashoffset="3"/><polyline points="179.3,520.1 178.4,521.3 177.4,522.5 176.5,523.8 175.6,525.0 174.7,526.3 173.8,527.5 172.9,528.8 172.0,530.1 171.2,531.3 170.3,532.6 169.5,533.9 168.7,535.2 167.8,536.5 167.0,537.9 166.3,539.2 165.5,540.5 164.7,541.9 164.0,543.2 163.2,544.6 162.5,545.9 161.8,547.3 161.1,548.7 160.4,550.1 159.7,551.4 159.1,552.8 158.4,554.2 157.8,555.7 157.2,557.1 156.6,558.5 156.0,559.9" stroke-dasharray="1 7" stroke-dashoffset="5"/><polyline points="156.0,559.9 155.4,561.4 154.8,562.8 154.3,564.3 153.8,565.7 153.3,567.2 152.8,568.7 152.3,570.1 151.8,571.6 151.4,573.1 150.9,574.6 150.5,576.1 150.1,577.6 149.7,579.1 149.3,580.7 149.0,582.2 148.6,583.7 148.3,585.2 148.0,586.8 147.7,588.3 147.5,589.9 147.2,591.4 147.0,593.0 146.8,594.6 146.6,596.1 146.4,597.7 146.2,599.3 146.1,600.9 146.0,602.4 145.9,604.0 145.8,605.6" stroke-dasharray="1 6" stroke-dashoffset="6"/><polyline points="145.8,605.6 145.7,607.2 145.7,608.8 145.7,610.4 145.7,612.0 145.7,613.7 145.7,615.3 145.8,616.9 145.8,618.5" stroke-dasharray="1 7" stroke-dashoffset="6"/><polyline points="243.4,761.1 245.7,762.2 247.9,763.2 250.3,764.2 252.6,765.2 254.9,766.2 257.3,767.1 259.7,768.0 262.1,769.0 264.5,769.9 267.0,770.7 269.4,771.6 271.9,772.4 274.4,773.2 276.9,774.0 279.4,774.8 281.9,775.5 284.5,776.2 287.1,776.9 289.6,777.6 292.2,778.3 294.9,778.9 297.5,779.5 300.1,780.1 302.8,780.7 305.4,781.2 308.1,781.7 310.8,782.2 313.5,782.7 316.2,783.1 318.9,783.6" stroke-dasharray="7 7" stroke-dashoffset="4"/><polyline points="318.9,783.6 321.6,784.0 324.3,784.3 327.1,784.7 329.8,785.0 332.6,785.3 335.3,785.6 338.1,785.8 340.9,786.1 343.6,786.3 346.4,786.4 349.2,786.6 352.0,786.7 354.8,786.8 357.6,786.9 360.4,787.0 363.2,787.0 366.0,787.0 368.8,787.0 371.6,786.9 374.5,786.9 377.3,786.8 380.1,786.7 382.9,786.5 385.7,786.4 388.5,786.2 391.3,785.9 394.1,785.7 396.9,785.4 399.7,785.2 402.5,784.8" stroke-dasharray="5 6" stroke-dashoffset="3"/><polyline points="402.5,784.8 405.3,784.5 408.1,784.1 410.8,783.7 413.6,783.3 416.4,782.9 419.1,782.4 421.9,782.0 424.6,781.5 427.3,780.9 430.1,780.4 432.8,779.8 435.5,779.2 438.2,778.6 440.9,777.9 443.5,777.3 446.2,776.6 448.9,775.9 451.5,775.1 454.1,774.4 456.7,773.6" stroke-dasharray="7 7" stroke-dashoffset="4"/><polyline points="613.7,629.1 614.1,627.4 614.5,625.7 614.8,624.1 615.2,622.4 615.5,620.7 615.8,619.0 616.0,617.4 616.3,615.7 616.5,614.0 616.7,612.4 616.8,610.7 617.0,609.1 617.1,607.4 617.3,605.8 617.4,604.1 617.4,602.5 617.5,600.9 617.5,599.3 617.5,597.6 617.5,596.0 617.5,594.4 617.5,592.8 617.4,591.2 617.3,589.6 617.2,588.0 617.1,586.4 617.0,584.9 616.9,583.3 616.7,581.7 616.5,580.2" stroke-dasharray="1 7" stroke-dashoffset="2"/><polyline points="616.5,580.2 616.3,578.6 616.1,577.1 615.8,575.5 615.6,574.0 615.3,572.5 615.0,570.9 614.7,569.4 614.4,567.9 614.0,566.4 613.7,564.9 613.3,563.4 612.9,561.9 612.5,560.5 612.1,559.0 611.7,557.5 611.2,556.1 610.8,554.6 610.3,553.2 609.8,551.8 609.3,550.3 608.8,548.9 608.2,547.5 607.7,546.1 607.1,544.7 606.5,543.3 605.9,541.9 605.3,540.5 604.7,539.2 604.1,537.8 603.4,536.5" stroke-dasharray="1 6" stroke-dashoffset="4"/><polyline points="603.4,536.5 602.7,535.1 602.1,533.8 601.4,532.5 600.7,531.1 600.0,529.8 599.2,528.5 598.5,527.2 597.8,525.9 597.0,524.7 596.2,523.4 595.4,522.1 594.6,520.9 593.8,519.6 593.0,518.4 592.2,517.2 591.3,515.9 590.5,514.7 589.6,513.5 588.7,512.3 587.9,511.1" stroke-dasharray="1 7" stroke-dashoffset="0"/><polyline points="462.5,434.0 461.0,433.7 459.5,433.3 458.0,433.0 456.5,432.6 455.0,432.3 453.5,432.0 452.0,431.7 450.5,431.4 449.0,431.1 447.5,430.8" stroke-dasharray="1 9" stroke-dashoffset="1"/><polyline points="196.3,494.7 195.1,495.8 194.0,496.9 192.8,498.0 191.6,499.1 190.5,500.2 189.4,501.3 188.2,502.4 187.1,503.6 186.0,504.7 184.9,505.9 183.8,507.0 182.7,508.2 181.6,509.4 180.6,510.5 179.5,511.7 178.4,512.9 177.4,514.1 176.4,515.4 175.4,516.6 174.3,517.8 173.3,519.1 172.4,520.3 171.4,521.6 170.4,522.9 169.5,524.1 168.5,525.4 167.6,526.7 166.6,528.0 165.7,529.3 164.8,530.6" stroke-dasharray="1 8" stroke-dashoffset="6"/><polyline points="164.8,530.6 163.9,532.0 163.1,533.3 162.2,534.6 161.3,536.0 160.5,537.4 159.7,538.7 158.9,540.1 158.1,541.5 157.3,542.9 156.5,544.3 155.7,545.7 155.0,547.1 154.2,548.5 153.5,549.9 152.8,551.4 152.1,552.8 151.4,554.2 150.7,555.7 150.1,557.2 149.5,558.6 148.8,560.1 148.2,561.6 147.6,563.1 147.0,564.6 146.5,566.1 145.9,567.6 145.4,569.1 144.9,570.7 144.4,572.2 143.9,573.7" stroke-dasharray="1 7" stroke-dashoffset="7"/><polyline points="143.9,573.7 143.4,575.3 143.0,576.8 142.5,578.4 142.1,579.9 141.7,581.5 141.3,583.1 141.0,584.7 140.6,586.3 140.3,587.9 140.0,589.4 139.7,591.1 139.4,592.7 139.1,594.3 138.9,595.9 138.7,597.5 138.5,599.2 138.3,600.8 138.1,602.4 138.0,604.1 137.8,605.7" stroke-dasharray="1 7" stroke-dashoffset="3"/><polyline points="254.6,777.0 257.1,778.0 259.6,778.9 262.1,779.8 264.7,780.7 267.2,781.6 269.8,782.5 272.4,783.3 275.1,784.1 277.7,784.9 280.4,785.6 283.0,786.4 285.7,787.1 288.4,787.8 291.2,788.5 293.9,789.1 296.6,789.7 299.4,790.3 302.2,790.9 304.9,791.4 307.7,792.0 310.5,792.4 313.4,792.9 316.2,793.4 319.0,793.8 321.9,794.2 324.7,794.6 327.6,794.9 330.5,795.2 333.3,795.5 336.2,795.8" stroke-dasharray="8 8" stroke-dashoffset="3"/><polyline points="336.2,795.8 339.1,796.0 342.0,796.2 344.9,796.4 347.8,796.6 350.7,796.7 353.6,796.8 356.6,796.9 359.5,797.0 362.4,797.0 365.3,797.0 368.3,797.0 371.2,796.9 374.1,796.9 377.1,796.8 380.0,796.6 382.9,796.5 385.9,796.3 388.8,796.1 391.7,795.9 394.6,795.6 397.6,795.3 400.5,795.0 403.4,794.7 406.3,794.3 409.2,794.0 412.1,793.6 415.0,793.1 417.8,792.7 420.7,792.2 423.6,791.7" stroke-dasharray="7 6" stroke-dashoffset="3"/><polyline points="423.6,791.7 426.4,791.1 429.3,790.6 432.1,790.0 434.9,789.4 437.8,788.8 440.6,788.1" stroke-dasharray="6 5" stroke-dashoffset="7"/><polyline points="623.9,619.5 624.1,617.8 624.3,616.0 624.5,614.3 624.7,612.6 624.8,610.9 624.9,609.2 625.0,607.5 625.1,605.8 625.2,604.1 625.2,602.4 625.2,600.7 625.2,599.0 625.2,597.4 625.1,595.7 625.1,594.0 625.0,592.4 624.9,590.7 624.8,589.1 624.6,587.5 624.5,585.8 624.3,584.2 624.1,582.6 623.9,581.0 623.7,579.4 623.4,577.8 623.2,576.2 622.9,574.6 622.6,573.0 622.3,571.5 621.9,569.9" stroke-dasharray="1 8" stroke-dashoffset="4"/><polyline points="621.9,569.9 621.6,568.3 621.2,566.8 620.8,565.2 620.4,563.7 620.0,562.2 619.6,560.6 619.1,559.1 618.7,557.6 618.2,556.1 617.7,554.6 617.2,553.1 616.6,551.7 616.1,550.2 615.5,548.7 615.0,547.3 614.4,545.8 613.8,544.4 613.2,543.0 612.5,541.6 611.9,540.1 611.2,538.7 610.6,537.3 609.9,535.9 609.2,534.6 608.5,533.2 607.8,531.8 607.0,530.5 606.3,529.1 605.5,527.8 604.7,526.5" stroke-dasharray="1 8" stroke-dashoffset="6"/><polyline points="604.7,526.5 604.0,525.1 603.2,523.8 602.3,522.5 601.5,521.2 600.7,519.9 599.8,518.6" stroke-dasharray="1 8" stroke-dashoffset="2"/><polyline points="453.7,428.8 452.1,428.4 450.6,428.1 449.0,427.8 447.5,427.6 445.9,427.3 444.4,427.0 442.8,426.7 441.3,426.5 439.7,426.2 438.2,426.0 436.6,425.8" stroke-dasharray="1 6" stroke-dashoffset="3"/><polyline points="182.9,501.0 181.7,502.1 180.6,503.3 179.4,504.5 178.3,505.7 177.1,506.9 176.0,508.1 174.9,509.3 173.8,510.5 172.7,511.8 171.6,513.0 170.6,514.3 169.5,515.5 168.4,516.8 167.4,518.1 166.4,519.4 165.4,520.6 164.3,522.0 163.3,523.3 162.4,524.6 161.4,525.9 160.4,527.2 159.5,528.6 158.5,529.9 157.6,531.3 156.7,532.7 155.8,534.1 154.9,535.5 154.0,536.8 153.1,538.3 152.3,539.7" stroke-dasharray="1 9" stroke-dashoffset="1"/><polyline points="152.3,539.7 151.4,541.1 150.6,542.5 149.8,544.0 149.0,545.4 148.2,546.9 147.4,548.3 146.6,549.8 145.9,551.3 145.1,552.7 144.4,554.2 143.7,555.7 143.0,557.2 142.3,558.8 141.7,560.3 141.0,561.8 140.4,563.4 139.8,564.9 139.2,566.5 138.6,568.0 138.0,569.6 137.5,571.2 136.9,572.7 136.4,574.3 135.9,575.9 135.4,577.5 134.9,579.1 134.5,580.8 134.1,582.4 133.6,584.0 133.2,585.6" stroke-dasharray="1 6" stroke-dashoffset="4"/><polyline points="133.2,585.6 132.9,587.3 132.5,588.9 132.1,590.6 131.8,592.2 131.5,593.9 131.2,595.6" stroke-dasharray="1 8" stroke-dashoffset="6"/><polyline points="265.2,791.9 267.9,792.8 270.6,793.7 273.4,794.5 276.1,795.3 278.9,796.1 281.7,796.8 284.5,797.5 287.4,798.2 290.2,798.9 293.1,799.6 295.9,800.2 298.8,800.8 301.7,801.4 304.6,801.9 307.5,802.4 310.5,802.9 313.4,803.4 316.4,803.9 319.3,804.3 322.3,804.7 325.3,805.0 328.3,805.4 331.3,805.7 334.3,806.0 337.3,806.2 340.3,806.4 343.4,806.6 346.4,806.8 349.4,806.9 352.5,807.1" stroke-dasharray="6 7" stroke-dashoffset="2"/><polyline points="352.5,807.1 355.5,807.2 358.6,807.2 361.6,807.2 364.7,807.3 367.7,807.2 370.8,807.2 373.8,807.1 376.9,807.0 379.9,806.9 383.0,806.7 386.0,806.5 389.1,806.3 392.1,806.1 395.2,805.8 398.2,805.5 401.3,805.2 404.3,804.8 407.3,804.4 410.3,804.0 413.3,803.6 416.4,803.1 419.4,802.7 422.3,802.2 425.3,801.6" stroke-dasharray="5 6" stroke-dashoffset="7"/><polyline points="632.7,610.9 632.8,609.2 632.9,607.4 632.9,605.7 632.9,603.9 632.9,602.2 632.9,600.5 632.9,598.7 632.8,597.0 632.7,595.3 632.6,593.6 632.5,591.9 632.3,590.2 632.2,588.5 632.0,586.8 631.8,585.1 631.6,583.5 631.3,581.8 631.1,580.1 630.8,578.5 630.5,576.8 630.2,575.2 629.9,573.6 629.5,572.0 629.2,570.4 628.8,568.7 628.4,567.1 628.0,565.6 627.5,564.0 627.1,562.4 626.6,560.8" stroke-dasharray="1 7" stroke-dashoffset="0"/><polyline points="626.6,560.8 626.1,559.3 625.6,557.7 625.1,556.2 624.6,554.6 624.0,553.1 623.5,551.6 622.9,550.1 622.3,548.6 621.7,547.1 621.1,545.6 620.5,544.1 619.8,542.6 619.1,541.2 618.5,539.7 617.8,538.3 617.1,536.9 616.4,535.4 615.6,534.0 614.9,532.6 614.1,531.2 613.3,529.8 612.6,528.4 611.8,527.0 610.9,525.7" stroke-dasharray="1 6" stroke-dashoffset="2"/><polyline points="445.8,424.1 444.2,423.8 442.6,423.6 441.0,423.3 439.5,423.1 437.9,422.8 436.3,422.6 434.7,422.4 433.1,422.2 431.5,422.0 429.9,421.8 428.2,421.6 426.6,421.4 425.0,421.2" stroke-dasharray="1 8" stroke-dashoffset="0"/><polyline points="170.4,506.8 169.3,508.1 168.1,509.3 167.0,510.6 165.9,511.9 164.8,513.2 163.7,514.5 162.6,515.8 161.5,517.1 160.4,518.4 159.3,519.7 158.3,521.0 157.3,522.4 156.2,523.7 155.2,525.1 154.2,526.5 153.2,527.9 152.2,529.3 151.2,530.7 150.3,532.1 149.3,533.5 148.4,534.9 147.5,536.3 146.6,537.8 145.7,539.2 144.8,540.7 143.9,542.2 143.0,543.6 142.2,545.1 141.4,546.6 140.5,548.1" stroke-dasharray="1 7" stroke-dashoffset="4"/><polyline points="140.5,548.1 139.7,549.6 138.9,551.2 138.2,552.7 137.4,554.2 136.7,555.8 135.9,557.3 135.2,558.9 134.5,560.5 133.8,562.0 133.2,563.6 132.5,565.2 131.9,566.8 131.2,568.4 130.6,570.0 130.0,571.7 129.5,573.3 128.9,574.9 128.4,576.6 127.8,578.2 127.3,579.9 126.8,581.6 126.4,583.2 125.9,584.9 125.5,586.6" stroke-dasharray="1 9" stroke-dashoffset="3"/><polyline points="274.7,806.0 277.6,806.8 280.5,807.5 283.5,808.3 286.4,809.0 289.4,809.7 292.4,810.3 295.4,811.0 298.4,811.6 301.4,812.1 304.5,812.7 307.5,813.2 310.6,813.7 313.7,814.2 316.7,814.6 319.8,815.0 323.0,815.4 326.1,815.8 329.2,816.1 332.3,816.4 335.5,816.7 338.6,816.9 341.8,817.1 344.9,817.3 348.1,817.4 351.2,817.6 354.4,817.6 357.6,817.7 360.8,817.7 363.9,817.8 367.1,817.7" stroke-dasharray="5 5" stroke-dashoffset="3"/><polyline points="367.1,817.7 370.3,817.7 373.5,817.6 376.7,817.5 379.8,817.3 383.0,817.2 386.2,817.0 389.4,816.8 392.6,816.5 395.7,816.2 398.9,815.9 402.1,815.6 405.2,815.2 408.4,814.8 411.5,814.4" stroke-dasharray="7 8" stroke-dashoffset="0"/><polyline points="640.7,603.7 640.6,601.9 640.6,600.1 640.5,598.3 640.4,596.5 640.2,594.8 640.1,593.0 639.9,591.3 639.7,589.5 639.5,587.8 639.3,586.1 639.1,584.3 638.8,582.6 638.5,580.9 638.2,579.2 637.9,577.5 637.5,575.8 637.2,574.1 636.8,572.5 636.4,570.8 636.0,569.2 635.6,567.5 635.1,565.9 634.6,564.2 634.2,562.6 633.7,561.0 633.1,559.4 632.6,557.8 632.1,556.2 631.5,554.6 630.9,553.1" stroke-dasharray="1 7" stroke-dashoffset="2"/><polyline points="630.9,553.1 630.3,551.5 629.7,550.0 629.1,548.4 628.5,546.9 627.8,545.3 627.1,543.8 626.4,542.3 625.7,540.8 625.0,539.3 624.3,537.8 623.6,536.4 622.8,534.9 622.0,533.4 621.3,532.0" stroke-dasharray="1 6" stroke-dashoffset="2"/><polyline points="439.1,419.9 437.5,419.7 435.8,419.5 434.2,419.3 432.5,419.1 430.9,418.9 429.3,418.7 427.6,418.5 426.0,418.3 424.3,418.1 422.7,418.0 421.0,417.8 419.4,417.7 417.7,417.5 416.1,417.4 414.4,417.3 412.8,417.2 411.1,417.1 409.5,417.0" stroke-dasharray="1 6" stroke-dashoffset="4"/><polyline points="159.0,512.1 157.9,513.4 156.7,514.7 155.6,516.1 154.5,517.4 153.4,518.8 152.3,520.1 151.2,521.5 150.1,522.9 149.0,524.3 148.0,525.7 146.9,527.1 145.9,528.6 144.9,530.0 143.9,531.5 142.9,532.9 141.9,534.4 141.0,535.8 140.0,537.3 139.1,538.8 138.1,540.3 137.2,541.8 136.3,543.3 135.4,544.9 134.6,546.4 133.7,548.0 132.9,549.5 132.0,551.1 131.2,552.6 130.4,554.2 129.6,555.8" stroke-dasharray="1 6" stroke-dashoffset="0"/><polyline points="129.6,555.8 128.8,557.4 128.1,559.0 127.3,560.6 126.6,562.3 125.9,563.9 125.2,565.5 124.5,567.2 123.9,568.8 123.2,570.5 122.6,572.2 122.0,573.9 121.4,575.5 120.8,577.2 120.2,578.9" stroke-dasharray="1 6" stroke-dashoffset="7"/><polyline points="282.6,819.3 285.7,820.0 288.8,820.7 291.9,821.4 295.0,822.0 298.2,822.6 301.3,823.2 304.5,823.8 307.7,824.3 310.9,824.8 314.1,825.2 317.3,825.7 320.5,826.1 323.8,826.4 327.0,826.8 330.3,827.1 333.6,827.4 336.8,827.6 340.1,827.8 343.4,828.0 346.7,828.2 350.0,828.3 353.3,828.4 356.6,828.5 359.9,828.5 363.2,828.5 366.5,828.5 369.8,828.4 373.1,828.4 376.5,828.2 379.8,828.1" stroke-dasharray="7 6" stroke-dashoffset="5"/><polyline points="379.8,828.1 383.1,827.9 386.4,827.7 389.7,827.5 393.0,827.2 396.3,826.9 399.6,826.6" stroke-dasharray="8 7" stroke-dashoffset="4"/><polyline points="648.1,597.8 647.9,596.0 647.7,594.2 647.5,592.4 647.3,590.6 647.1,588.8 646.8,587.0 646.5,585.2 646.2,583.4 645.9,581.7 645.6,579.9 645.2,578.2 644.9,576.4 644.5,574.7 644.1,573.0 643.6,571.3 643.2,569.6 642.7,567.9 642.3,566.2 641.8,564.5 641.2,562.9 640.7,561.2 640.2,559.5 639.6,557.9 639.0,556.3 638.4,554.6 637.8,553.0 637.2,551.4 636.5,549.8 635.9,548.2 635.2,546.7" stroke-dasharray="1 7" stroke-dashoffset="6"/><polyline points="635.2,546.7 634.5,545.1 633.8,543.5 633.1,542.0 632.3,540.4 631.6,538.9 630.8,537.4" stroke-dasharray="1 7" stroke-dashoffset="4"/><polyline points="433.6,416.2 431.9,416.0 430.3,415.8 428.6,415.6 426.9,415.4 425.2,415.3 423.5,415.1 421.9,414.9 420.2,414.8 418.5,414.7 416.8,414.5 415.1,414.4 413.4,414.3 411.7,414.2 410.0,414.1 408.4,414.0 406.7,413.9 405.0,413.8 403.3,413.8 401.6,413.7 399.9,413.7 398.2,413.6 396.5,413.6 394.8,413.6 393.1,413.5 391.4,413.5 389.7,413.5 388.0,413.5 386.3,413.6 384.6,413.6 382.9,413.6" stroke-dasharray="1 8" stroke-dashoffset="4"/><polyline points="382.9,413.6 381.2,413.7 379.5,413.7 377.8,413.8" stroke-dasharray="1 9" stroke-dashoffset="3"/><polyline points="148.5,516.5 147.4,517.8 146.3,519.2 145.1,520.7 144.0,522.1 142.9,523.5 141.8,525.0 140.7,526.4 139.6,527.9 138.6,529.4 137.5,530.8 136.5,532.3 135.5,533.8 134.5,535.3 133.5,536.9 132.5,538.4 131.5,539.9 130.6,541.5 129.6,543.0 128.7,544.6 127.8,546.2 126.9,547.8 126.0,549.4 125.1,551.0 124.2,552.6 123.4,554.2 122.6,555.9 121.7,557.5 120.9,559.1 120.2,560.8 119.4,562.5" stroke-dasharray="1 6" stroke-dashoffset="6"/><polyline points="119.4,562.5 118.6,564.2 117.9,565.8 117.2,567.5 116.5,569.3 115.8,571.0 115.1,572.7" stroke-dasharray="1 9" stroke-dashoffset="1"/><polyline points="291.5,832.7 294.8,833.4 298.1,834.0 301.4,834.6 304.7,835.1 308.0,835.6 311.4,836.1 314.7,836.6 318.1,837.0 321.5,837.4 324.8,837.7 328.2,838.1 331.6,838.4 335.0,838.6 338.4,838.9 341.9,839.1 345.3,839.2 348.7,839.4 352.1,839.5 355.6,839.5 359.0,839.6 362.5,839.6 365.9,839.5 369.3,839.5 372.8,839.4 376.2,839.3 379.7,839.1 383.1,838.9 386.6,838.7" stroke-dasharray="5 8" stroke-dashoffset="7"/><polyline points="654.9,591.6 654.7,589.7 654.4,587.9 654.1,586.1 653.7,584.3 653.4,582.4 653.0,580.6 652.6,578.8 652.2,577.1 651.8,575.3 651.4,573.5 650.9,571.8 650.4,570.0 649.9,568.3 649.4,566.5 648.9,564.8 648.3,563.1 647.8,561.4 647.2,559.7 646.6,558.0 646.0,556.3 645.3,554.7 644.7,553.0 644.0,551.3 643.3,549.7 642.6,548.1 641.9,546.5 641.2,544.9 640.4,543.3" stroke-dasharray="1 8" stroke-dashoffset="6"/><polyline points="427.8,412.6 426.1,412.4 424.4,412.3 422.7,412.1 421.0,411.9 419.2,411.8 417.5,411.7 415.8,411.5 414.1,411.4 412.3,411.3 410.6,411.2 408.9,411.1 407.2,411.1 405.4,411.0 403.7,410.9 402.0,410.9 400.2,410.8 398.5,410.8 396.8,410.7 395.0,410.7 393.3,410.7 391.6,410.7 389.8,410.7 388.1,410.7 386.4,410.7 384.6,410.7 382.9,410.8 381.2,410.8 379.4,410.8" stroke-dasharray="1 7" stroke-dashoffset="5"/><polyline points="137.9,521.3 136.8,522.7 135.6,524.2 134.5,525.7 133.4,527.2 132.3,528.7 131.2,530.2 130.1,531.8 129.0,533.3 128.0,534.8 126.9,536.4 125.9,538.0 124.9,539.5 123.9,541.1 122.9,542.7 121.9,544.3 121.0,546.0 120.0,547.6 119.1,549.2 118.2,550.9 117.3,552.5 116.4,554.2 115.5,555.9 114.7,557.6 113.8,559.3 113.0,561.0 112.2,562.7 111.4,564.4 110.6,566.2" stroke-dasharray="1 7" stroke-dashoffset="0"/><polyline points="301.7,846.2 305.1,846.8 308.6,847.3 312.1,847.7 315.6,848.2 319.1,848.6 322.6,849.0 326.1,849.3 329.6,849.6 333.2,849.9 336.7,850.2 340.3,850.4 343.8,850.5 347.4,850.7 351.0,850.8 354.5,850.9 358.1,850.9 361.7,850.9 365.3,850.9 368.9,850.8 372.4,850.7" stroke-dasharray="6 8" stroke-dashoffset="0"/><polyline points="661.2,585.1 660.9,583.2 660.5,581.4 660.0,579.5 659.6,577.7 659.1,575.8 658.7,574.0 658.2,572.2 657.7,570.4 657.1,568.6 656.6,566.8 656.0,565.1 655.4,563.3 654.8,561.6 654.2,559.8 653.6,558.1 652.9,556.4 652.2,554.7 651.5,553.0 650.8,551.3 650.1,549.6" stroke-dasharray="1 6" stroke-dashoffset="1"/><polyline points="421.7,409.1 420.0,409.0 418.2,408.9 416.5,408.7 414.7,408.6 412.9,408.5 411.2,408.4 409.4,408.3 407.7,408.2 405.9,408.2 404.1,408.1 402.4,408.0 400.6,408.0 398.8,407.9 397.1,407.9 395.3,407.9 393.5,407.9 391.8,407.8 390.0,407.8 388.2,407.9 386.5,407.9" stroke-dasharray="1 6" stroke-dashoffset="0"/><polyline points="127.1,526.5 126.0,528.1 124.8,529.6 123.7,531.2 122.6,532.8 121.5,534.3 120.4,535.9 119.3,537.5 118.3,539.2 117.2,540.8 116.2,542.4 115.2,544.1 114.2,545.7 113.2,547.4 112.2,549.1 111.2,550.8 110.3,552.5 109.4,554.2 108.5,555.9 107.6,557.7 106.7,559.4" stroke-dasharray="1 9" stroke-dashoffset="5"/><polyline points="309.3,859.2 313.0,859.7 316.6,860.1 320.3,860.5 323.9,860.9 327.6,861.2 331.3,861.5 334.9,861.8 338.6,862.0 342.3,862.2 346.0,862.3 349.7,862.4 353.5,862.5 357.2,862.6 360.9,862.6" stroke-dasharray="5 5" stroke-dashoffset="3"/><polyline points="667.5,580.2 667.0,578.3 666.5,576.4 666.0,574.5 665.5,572.7 664.9,570.8 664.3,569.0 663.7,567.2 663.1,565.4 662.5,563.5 661.9,561.8 661.2,560.0 660.5,558.2 659.9,556.4 659.1,554.7" stroke-dasharray="1 7" stroke-dashoffset="5"/><polyline points="417.1,406.0 415.3,405.8 413.5,405.7 411.7,405.6 410.0,405.5 408.2,405.4 406.4,405.4 404.6,405.3 402.8,405.2 401.0,405.2 399.2,405.1 397.4,405.1 395.6,405.1 393.8,405.1 392.0,405.1" stroke-dasharray="1 6" stroke-dashoffset="0"/><polyline points="117.3,530.6 116.2,532.2 115.0,533.8 113.9,535.5 112.8,537.1 111.7,538.8 110.6,540.5 109.5,542.1 108.4,543.8 107.4,545.5 106.4,547.2 105.3,549.0 104.3,550.7 103.3,552.4 102.4,554.2" stroke-dasharray="1 8" stroke-dashoffset="7"/><polyline points="317.9,872.4 321.7,872.8 325.5,873.1 329.3,873.4 333.1,873.7 337.0,873.9 340.8,874.1 344.6,874.3 348.5,874.4" stroke-dasharray="5 8" stroke-dashoffset="7"/><polyline points="673.3,575.1 672.7,573.2 672.2,571.3 671.5,569.4 670.9,567.5 670.3,565.6 669.6,563.8 668.9,561.9 668.2,560.1" stroke-dasharray="1 9" stroke-dashoffset="6"/><polyline points="412.3,402.9 410.5,402.8 408.6,402.7 406.8,402.6 405.0,402.5 403.2,402.5 401.3,402.4 399.5,402.4 397.7,402.4" stroke-dasharray="1 7" stroke-dashoffset="7"/><polyline points="107.4,535.0 106.2,536.7 105.1,538.4 103.9,540.1 102.8,541.8 101.7,543.6 100.6,545.3 99.5,547.1 98.5,548.8" stroke-dasharray="1 7" stroke-dashoffset="1"/><polyline points="327.3,885.6 331.3,885.9 335.2,886.2" stroke-dasharray="8 6" stroke-dashoffset="6"/><polyline points="678.8,569.7 678.1,567.8 677.4,565.9" stroke-dasharray="1 6" stroke-dashoffset="2"/><polyline points="407.3,399.9 405.4,399.8 403.5,399.8" stroke-dasharray="1 6" stroke-dashoffset="5"/><polyline points="97.3,539.8 96.1,541.5 95.0,543.3" stroke-dasharray="1 6" stroke-dashoffset="0"/></g><g clip-path="url(#topclip)" fill="none" stroke="#e8a040" stroke-width="1"><polyline points="540.0,639.1 540.8,637.9 541.6,636.7 542.3,635.5 543.1,634.3 543.8,633.1 544.5,631.9 545.2,630.7 545.9,629.5 546.6,628.3 547.2,627.1 547.9,625.9 548.5,624.7 549.1,623.5 549.7,622.2 550.2,621.0 550.8,619.8 551.3,618.6 551.8,617.4 552.3,616.2 552.8,614.9 553.3,613.7 553.7,612.5 554.2,611.3 554.6,610.1 555.0,608.8 555.4,607.6 555.7,606.4 556.1,605.2 556.4,604.0 556.8,602.7 557.1,601.5 557.4,600.3 557.7,599.1 557.9,597.9 558.2,596.7 558.4,595.5 558.6,594.2 558.8,593.0 559.0,591.8 559.2,590.6 559.3,589.4 559.5,588.2 559.6,587.0 559.7,585.8 559.8,584.6 559.9,583.4 560.0,582.2 560.0,581.1 560.1,579.9 560.1,578.7 560.1,577.5 560.1,576.3 560.1,575.2 560.0,574.0 560.0,572.8 559.9,571.6 559.9,570.5 559.8,569.3 559.7,568.2 559.6,567.0 559.4,565.9 559.3,564.7 559.2,563.6 559.0,562.4 558.8,561.3 558.6,560.2 558.4,559.0 558.2,557.9 558.0,556.8 557.7,555.7 557.5,554.6 557.2,553.5 556.9,552.4 556.6,551.3 556.3,550.2 556.0,549.1 555.7,548.0 555.4,546.9 555.0,545.9 554.6,544.8 554.3,543.7 553.9,542.7 553.5,541.6 553.1,540.6 552.7,539.5 552.2,538.5 551.8,537.4 551.3,536.4 550.9,535.4 550.4,534.4 549.9,533.3 549.4,532.3 548.9,531.3 548.4,530.3 547.9,529.3 547.3,528.3 546.8,527.4 546.2,526.4 545.7,525.4 545.1,524.4 544.5,523.5 543.9,522.5 543.3,521.6 542.7,520.6 542.1,519.7 541.4,518.7 540.8,517.8 540.2,516.9 539.5,516.0 538.8,515.1 538.1,514.2 537.5,513.3 536.8,512.4 536.1,511.5 535.3,510.6 534.6,509.7 533.9,508.9 533.2,508.0 532.4,507.1 531.7,506.3 530.9,505.4 530.1,504.6 529.3,503.8 528.6,502.9 527.8,502.1 527.0,501.3 526.2,500.5 525.3,499.7 524.5,498.9 523.7,498.1 522.9,497.3 522.0,496.5 521.2,495.8 520.3,495.0 519.4,494.2 518.6,493.5 517.7,492.7 516.8,492.0 515.9,491.3 515.0,490.5 514.1,489.8 513.2,489.1 512.3,488.4 511.3,487.7 510.4,487.0 509.5,486.3 508.5,485.6 507.6,485.0 506.6,484.3 505.7,483.6 504.7,483.0 503.7,482.3 502.7,481.7 501.8,481.0 500.8,480.4 499.8,479.8" stroke-dasharray="1 9" stroke-dashoffset="7"/><polyline points="250.0,495.3 249.0,496.1 248.0,496.9 247.1,497.7 246.1,498.4 245.2,499.2 244.3,500.0 243.4,500.9 242.4,501.7 241.5,502.5 240.6,503.3 239.7,504.2 238.8,505.0 237.9,505.8 237.1,506.7 236.2,507.6 235.3,508.4 234.5,509.3 233.6,510.2 232.8,511.0 232.0,511.9 231.1,512.8 230.3,513.7 229.5,514.6 228.7,515.6 227.9,516.5 227.2,517.4 226.4,518.3 225.6,519.3 224.9,520.2 224.1,521.2 223.4,522.1 222.6,523.1 221.9,524.0 221.2,525.0 220.5,526.0 219.8,527.0 219.1,527.9 218.4,528.9 217.8,529.9 217.1,530.9 216.5,531.9 215.8,533.0 215.2,534.0 214.6,535.0 214.0,536.0 213.4,537.1 212.8,538.1 212.2,539.2 211.7,540.2 211.1,541.3 210.6,542.3 210.0,543.4 209.5,544.5 209.0,545.5 208.5,546.6 208.0,547.7 207.5,548.8 207.1,549.9 206.6,551.0 206.2,552.1 205.7,553.2 205.3,554.3 204.9,555.4 204.5,556.5 204.1,557.6 203.7,558.8 203.4,559.9 203.0,561.0 202.7,562.2 202.4,563.3 202.1,564.5 201.8,565.6 201.5,566.8 201.2,567.9 201.0,569.1 200.7,570.3 200.5,571.4 200.3,572.6 200.1,573.8 199.9,575.0 199.7,576.1 199.5,577.3 199.4,578.5 199.2,579.7 199.1,580.9 199.0,582.1 198.9,583.3 198.8,584.5 198.8,585.7 198.7,586.9 198.7,588.1 198.7,589.3 198.7,590.5 198.7,591.7 198.7,592.9 198.7,594.1 198.8,595.4 198.9,596.6 198.9,597.8 199.0,599.0 199.2,600.2 199.3,601.5 199.4,602.7 199.6,603.9 199.8,605.1 200.0,606.4 200.2,607.6 200.4,608.8 200.6,610.0 200.9,611.3 201.2,612.5 201.5,613.7 201.8,614.9 202.1,616.2 202.4,617.4 202.8,618.6 203.2,619.8 203.5,621.1 203.9,622.3 204.4,623.5 204.8,624.7 205.3,625.9 205.7,627.2 206.2,628.4 206.7,629.6 207.3,630.8 207.8,632.0 208.3,633.2 208.9,634.4 209.5,635.6 210.1,636.8 210.8,638.0 211.4,639.2" stroke-dasharray="1 9" stroke-dashoffset="1"/><polyline points="559.2,638.9 560.0,637.6 560.7,636.3 561.4,634.9 562.1,633.6 562.7,632.3 563.4,630.9 564.0,629.6 564.6,628.3 565.2,626.9 565.7,625.6 566.3,624.3 566.8,622.9 567.3,621.6 567.8,620.3 568.3,618.9 568.8,617.6 569.2,616.2 569.6,614.9 570.0,613.6 570.4,612.2 570.8,610.9 571.2,609.6 571.5,608.2 571.8,606.9 572.1,605.6 572.4,604.2 572.7,602.9 572.9,601.6 573.2,600.3 573.4,598.9 573.6,597.6 573.8,596.3 573.9,595.0 574.1,593.7 574.2,592.4 574.4,591.1 574.5,589.7 574.6,588.4 574.6,587.1 574.7,585.8 574.7,584.5 574.8,583.3 574.8,582.0 574.8,580.7 574.7,579.4 574.7,578.1 574.7,576.8 574.6,575.6 574.5,574.3 574.4,573.0 574.3,571.8 574.2,570.5 574.1,569.3 573.9,568.0 573.7,566.8 573.6,565.5 573.4,564.3 573.2,563.1 572.9,561.9 572.7,560.6 572.5,559.4 572.2,558.2 571.9,557.0 571.6,555.8 571.3,554.6 571.0,553.4 570.7,552.2 570.3,551.0 570.0,549.9 569.6,548.7 569.2,547.5 568.8,546.3 568.4,545.2 568.0,544.0 567.6,542.9 567.1,541.8 566.7,540.6 566.2,539.5 565.8,538.4 565.3,537.2 564.8,536.1 564.3,535.0 563.7,533.9 563.2,532.8 562.6,531.7 562.1,530.7 561.5,529.6 560.9,528.5 560.4,527.4 559.8,526.4 559.1,525.3 558.5,524.3 557.9,523.2 557.3,522.2 556.6,521.2 555.9,520.1 555.3,519.1 554.6,518.1 553.9,517.1 553.2,516.1 552.5,515.1 551.8,514.1 551.0,513.2 550.3,512.2 549.6,511.2 548.8,510.3 548.0,509.3 547.3,508.4 546.5,507.4 545.7,506.5 544.9,505.6 544.1,504.6 543.2,503.7 542.4,502.8 541.6,501.9 540.7,501.0 539.9,500.1 539.0,499.3 538.2,498.4 537.3,497.5 536.4,496.7 535.5,495.8 534.6,495.0 533.7,494.1 532.8,493.3 531.9,492.5 531.0,491.6 530.0,490.8 529.1,490.0 528.1,489.2 527.2,488.4 526.2,487.6 525.2,486.9 524.3,486.1 523.3,485.3 522.3,484.6 521.3,483.8 520.3,483.1 519.3,482.3 518.3,481.6 517.3,480.9 516.2,480.2 515.2,479.5 514.2,478.8 513.1,478.1 512.1,477.4 511.0,476.7 509.9,476.0 508.9,475.3 507.8,474.7 506.7,474.0 505.6,473.4 504.5,472.7 503.5,472.1 502.4,471.5 501.2,470.9 500.1,470.3 499.0,469.6 497.9,469.1 496.8,468.5 495.6,467.9 494.5,467.3 493.4,466.7 492.2,466.2 491.1,465.6 489.9,465.1 488.8,464.5" stroke-dasharray="1 9" stroke-dashoffset="5"/><polyline points="259.3,478.3 258.2,479.0 257.1,479.7 255.9,480.4 254.8,481.1 253.7,481.9 252.6,482.6 251.5,483.3 250.3,484.1 249.2,484.8 248.2,485.6 247.1,486.4 246.0,487.2 244.9,487.9 243.8,488.7 242.8,489.5 241.7,490.3 240.7,491.1 239.6,492.0 238.6,492.8 237.5,493.6 236.5,494.5 235.5,495.3 234.5,496.2 233.5,497.0 232.5,497.9 231.5,498.8 230.5,499.7 229.5,500.5 228.5,501.4 227.6,502.3 226.6,503.2 225.7,504.2 224.7,505.1 223.8,506.0 222.9,506.9 221.9,507.9 221.0,508.8 220.1,509.8 219.2,510.8 218.3,511.7 217.5,512.7 216.6,513.7 215.7,514.7 214.9,515.7 214.0,516.7 213.2,517.7 212.4,518.7 211.6,519.7 210.8,520.7 210.0,521.8 209.2,522.8 208.4,523.8 207.6,524.9 206.9,525.9 206.1,527.0 205.4,528.1 204.6,529.2 203.9,530.2 203.2,531.3 202.5,532.4 201.8,533.5 201.1,534.6 200.5,535.7 199.8,536.9 199.2,538.0 198.5,539.1 197.9,540.2 197.3,541.4 196.7,542.5 196.1,543.7 195.5,544.8 195.0,546.0 194.4,547.2 193.9,548.3 193.3,549.5 192.8,550.7 192.3,551.9 191.8,553.1 191.3,554.3 190.8,555.5 190.4,556.7 189.9,557.9 189.5,559.1 189.1,560.3 188.7,561.6 188.3,562.8 187.9,564.0 187.6,565.3 187.2,566.5 186.9,567.8 186.5,569.0 186.2,570.3 185.9,571.6 185.7,572.8 185.4,574.1 185.1,575.4 184.9,576.6 184.7,577.9 184.5,579.2 184.3,580.5 184.1,581.8 183.9,583.1 183.8,584.4 183.6,585.7 183.5,587.0 183.4,588.3 183.3,589.6 183.3,590.9 183.2,592.2 183.2,593.6 183.1,594.9 183.1,596.2 183.1,597.5 183.2,598.9 183.2,600.2 183.3,601.5 183.3,602.8 183.4,604.2 183.5,605.5 183.7,606.9 183.8,608.2 184.0,609.5 184.1,610.9 184.3,612.2 184.5,613.6 184.8,614.9 185.0,616.2 185.3,617.6 185.6,618.9 185.9,620.3 186.2,621.6 186.5,623.0 186.9,624.3 187.3,625.7 187.6,627.0 188.1,628.3 188.5,629.7 188.9,631.0 189.4,632.4 189.9,633.7 190.4,635.0 190.9,636.4 191.4,637.7 192.0,639.0" stroke-dasharray="1 9" stroke-dashoffset="2"/><polyline points="577.8,638.8 578.5,637.3 579.1,635.9 579.8,634.4 580.4,633.0 581.0,631.5 581.5,630.0 582.1,628.6 582.6,627.1 583.1,625.7 583.6,624.2 584.0,622.7 584.5,621.3 584.9,619.8 585.3,618.4 585.7,616.9 586.1,615.5 586.4,614.0 586.7,612.6 587.0,611.1 587.3,609.7 587.6,608.2 587.9,606.8 588.1,605.3 588.3,603.9 588.5,602.5 588.7,601.0 588.9,599.6 589.0,598.2 589.2,596.7 589.3,595.3 589.4,593.9 589.5,592.5 589.5,591.1 589.6,589.7 589.6,588.3 589.6,586.9 589.6,585.5 589.6,584.1 589.5,582.7 589.5,581.3 589.4,579.9 589.3,578.6 589.2,577.2 589.1,575.8 589.0,574.5 588.8,573.1 588.7,571.7 588.5,570.4 588.3,569.0 588.1,567.7 587.9,566.4 587.6,565.0 587.4,563.7 587.1,562.4 586.8,561.1 586.5,559.8 586.2,558.5 585.9,557.2 585.5,555.9 585.2,554.6 584.8,553.3 584.4,552.1 584.0,550.8 583.6,549.5 583.2,548.3 582.7,547.0 582.3,545.8 581.8,544.5 581.4,543.3 580.9,542.1 580.4,540.8 579.9,539.6 579.3,538.4 578.8,537.2 578.2,536.0 577.7,534.8 577.1,533.7 576.5,532.5 575.9,531.3 575.3,530.1 574.7,529.0 574.0,527.8 573.4,526.7 572.7,525.6 572.1,524.4 571.4,523.3 570.7,522.2 570.0,521.1 569.3,520.0 568.6,518.9 567.9,517.8 567.1,516.7 566.4,515.6 565.6,514.6 564.8,513.5 564.0,512.5 563.3,511.4 562.5,510.4 561.6,509.3 560.8,508.3 560.0,507.3 559.2,506.3 558.3,505.3 557.5,504.3 556.6,503.3 555.7,502.3 554.8,501.3 553.9,500.4 553.0,499.4 552.1,498.5 551.2,497.5 550.3,496.6 549.4,495.6 548.4,494.7 547.5,493.8 546.5,492.9 545.5,492.0 544.6,491.1 543.6,490.2 542.6,489.3 541.6,488.4 540.6,487.6 539.6,486.7 538.6,485.9 537.5,485.0 536.5,484.2 535.5,483.4 534.4,482.5 533.4,481.7 532.3,480.9 531.2,480.1 530.2,479.3 529.1,478.5 528.0,477.8 526.9,477.0 525.8,476.2 524.7,475.5 523.6,474.7 522.5,474.0 521.4,473.3 520.2,472.5 519.1,471.8 518.0,471.1 516.8,470.4 515.7,469.7 514.5,469.0 513.3,468.3 512.2,467.7 511.0,467.0 509.8,466.3 508.6,465.7 507.5,465.0 506.3,464.4 505.1,463.8 503.9,463.2 502.7,462.5 501.4,461.9 500.2,461.3 499.0,460.7 497.8,460.2 496.5,459.6 495.3,459.0 494.1,458.5 492.8,457.9 491.6,457.4 490.3,456.8 489.1,456.3 487.8,455.8 486.5,455.2 485.3,454.7 484.0,454.2 482.7,453.7 481.4,453.2 480.2,452.7 478.9,452.3 477.6,451.8 476.3,451.3" stroke-dasharray="1 9" stroke-dashoffset="2"/><polyline points="270.5,463.3 269.2,463.9 268.0,464.6 266.7,465.2 265.4,465.8 264.1,466.5 262.8,467.2 261.6,467.8 260.3,468.5 259.1,469.2 257.8,469.9 256.6,470.6 255.3,471.3 254.1,472.0 252.8,472.7 251.6,473.5 250.4,474.2 249.2,475.0 247.9,475.7 246.7,476.5 245.5,477.2 244.3,478.0 243.1,478.8 241.9,479.6 240.8,480.4 239.6,481.2 238.4,482.0 237.2,482.8 236.1,483.7 234.9,484.5 233.8,485.3 232.6,486.2 231.5,487.0 230.4,487.9 229.2,488.8 228.1,489.7 227.0,490.5 225.9,491.4 224.8,492.3 223.7,493.3 222.6,494.2 221.6,495.1 220.5,496.0 219.4,497.0 218.4,497.9 217.3,498.9 216.3,499.8 215.3,500.8 214.2,501.8 213.2,502.8 212.2,503.8 211.2,504.8 210.2,505.8 209.2,506.8 208.2,507.8 207.3,508.8 206.3,509.9 205.4,510.9 204.4,512.0 203.5,513.0 202.6,514.1 201.7,515.1 200.7,516.2 199.9,517.3 199.0,518.4 198.1,519.5 197.2,520.6 196.4,521.7 195.5,522.8 194.7,524.0 193.8,525.1 193.0,526.2 192.2,527.4 191.4,528.5 190.6,529.7 189.9,530.9 189.1,532.0 188.3,533.2 187.6,534.4 186.9,535.6 186.2,536.8 185.4,538.0 184.7,539.2 184.1,540.4 183.4,541.7 182.7,542.9 182.1,544.1 181.4,545.4 180.8,546.6 180.2,547.9 179.6,549.2 179.0,550.4 178.4,551.7 177.9,553.0 177.3,554.3 176.8,555.6 176.3,556.9 175.8,558.2 175.3,559.5 174.8,560.8 174.3,562.1 173.9,563.4 173.4,564.8 173.0,566.1 172.6,567.4 172.2,568.8 171.8,570.1 171.4,571.5 171.1,572.9 170.7,574.2 170.4,575.6 170.1,577.0 169.8,578.3 169.5,579.7 169.3,581.1 169.0,582.5 168.8,583.9 168.6,585.3 168.4,586.7 168.2,588.1 168.1,589.5 167.9,590.9 167.8,592.4 167.7,593.8 167.6,595.2 167.5,596.6 167.4,598.1 167.4,599.5 167.4,600.9 167.4,602.4 167.4,603.8 167.4,605.3 167.4,606.7 167.5,608.2 167.6,609.6 167.7,611.1 167.8,612.5 167.9,614.0 168.1,615.5 168.3,616.9 168.5,618.4 168.7,619.8 168.9,621.3 169.1,622.8 169.4,624.2 169.7,625.7 170.0,627.2 170.3,628.6 170.7,630.1 171.1,631.6 171.4,633.1 171.9,634.5 172.3,636.0 172.7,637.5 173.2,638.9" stroke-dasharray="1 9" stroke-dashoffset="1"/><polyline points="595.9,639.1 596.4,637.5 597.0,635.9 597.6,634.3 598.1,632.7 598.6,631.1 599.1,629.6 599.5,628.0 600.0,626.4 600.4,624.8 600.8,623.2 601.2,621.7 601.5,620.1 601.9,618.5 602.2,616.9 602.5,615.4 602.8,613.8 603.0,612.2 603.3,610.7 603.5,609.1 603.7,607.6 603.9,606.0 604.0,604.5 604.2,602.9 604.3,601.4 604.4,599.9 604.5,598.3 604.5,596.8 604.6,595.3 604.6,593.7 604.6,592.2 604.6,590.7 604.6,589.2 604.6,587.7 604.5,586.2 604.4,584.7 604.3,583.2 604.2,581.7 604.1,580.3 603.9,578.8 603.8,577.3 603.6,575.9 603.4,574.4 603.2,573.0 603.0,571.5 602.7,570.1 602.5,568.6 602.2,567.2 601.9,565.8 601.6,564.4 601.3,563.0 600.9,561.5 600.6,560.1 600.2,558.8 599.8,557.4 599.4,556.0 599.0,554.6 598.6,553.3 598.1,551.9 597.7,550.5 597.2,549.2 596.7,547.8 596.2,546.5 595.7,545.2 595.2,543.9 594.7,542.6 594.1,541.2 593.5,539.9 593.0,538.7 592.4,537.4 591.8,536.1 591.1,534.8 590.5,533.6 589.9,532.3 589.2,531.0 588.6,529.8 587.9,528.6 587.2,527.3 586.5,526.1 585.8,524.9 585.1,523.7 584.3,522.5 583.6,521.3 582.8,520.1 582.0,519.0 581.3,517.8 580.5,516.6 579.7,515.5 578.9,514.3 578.0,513.2 577.2,512.1 576.3,510.9 575.5,509.8 574.6,508.7 573.8,507.6 572.9,506.5 572.0,505.4 571.1,504.4 570.2,503.3 569.2,502.2 568.3,501.2 567.4,500.1 566.4,499.1 565.5,498.1 564.5,497.1 563.5,496.0" stroke-dasharray="1 9" stroke-dashoffset="3"/><polyline points="481.5,445.6 480.1,445.2 478.8,444.7 477.4,444.2 476.0,443.8 474.6,443.4 473.2,442.9 471.8,442.5 470.4,442.1 469.0,441.7 467.6,441.3 466.2,440.9 464.8,440.5 463.4,440.1 462.0,439.7 460.6,439.4" stroke-dasharray="1 9" stroke-dashoffset="4"/><polyline points="223.7,482.1 222.5,483.0 221.3,483.9 220.0,484.8 218.8,485.8 217.6,486.7 216.5,487.6 215.3,488.6 214.1,489.5 212.9,490.5 211.8,491.5 210.6,492.5 209.5,493.5 208.3,494.5 207.2,495.5 206.1,496.5 205.0,497.5 203.9,498.5 202.8,499.6 201.7,500.6 200.6,501.7 199.5,502.7 198.4,503.8 197.4,504.9 196.3,506.0 195.3,507.1 194.3,508.2 193.2,509.3 192.2,510.4 191.2,511.5 190.2,512.6 189.2,513.8 188.2,514.9 187.3,516.1 186.3,517.3 185.4,518.4 184.4,519.6 183.5,520.8 182.6,522.0 181.7,523.2 180.8,524.4 179.9,525.6 179.0,526.8 178.1,528.1 177.3,529.3 176.4,530.6 175.6,531.8 174.8,533.1 174.0,534.4 173.2,535.6 172.4,536.9 171.6,538.2 170.9,539.5 170.1,540.8 169.4,542.1 168.7,543.4 167.9,544.8 167.2,546.1 166.6,547.4 165.9,548.8 165.2,550.2 164.6,551.5 163.9,552.9 163.3,554.3 162.7,555.6 162.1,557.0 161.5,558.4 161.0,559.8 160.4,561.2 159.9,562.6 159.4,564.1 158.9,565.5 158.4,566.9 157.9,568.3 157.4,569.8 157.0,571.2 156.6,572.7 156.2,574.2 155.8,575.6 155.4,577.1 155.0,578.6 154.7,580.1 154.3,581.5 154.0,583.0 153.7,584.5 153.4,586.0 153.2,587.5 152.9,589.0 152.7,590.6 152.5,592.1 152.3,593.6 152.1,595.1 151.9,596.7 151.8,598.2 151.7,599.8 151.6,601.3 151.5,602.9 151.4,604.4 151.4,606.0 151.3,607.5 151.3,609.1 151.3,610.7 151.4,612.2 151.4,613.8 151.5,615.4 151.6,616.9 151.7,618.5 151.8,620.1 151.9,621.7 152.1,623.3 152.3,624.9 152.5,626.5 152.7,628.1" stroke-dasharray="1 9" stroke-dashoffset="3"/><polyline points="616.9,626.5 617.2,624.8 617.5,623.1 617.8,621.4 618.1,619.7 618.4,618.0 618.6,616.3 618.8,614.6 619.0,613.0 619.2,611.3 619.3,609.6 619.5,608.0 619.6,606.3 619.7,604.6 619.7,603.0 619.8,601.3 619.8,599.7 619.8,598.1 619.8,596.4 619.8,594.8 619.8,593.2 619.7,591.6 619.6,590.0 619.5,588.4 619.4,586.8 619.2,585.2 619.1,583.6 618.9,582.0 618.7,580.4 618.5,578.8 618.3,577.3 618.0,575.7 617.8,574.2 617.5,572.6 617.2,571.1 616.9,569.6 616.5,568.0 616.2,566.5 615.8,565.0 615.5,563.5 615.1,562.0 614.6,560.5 614.2,559.0 613.8,557.6 613.3,556.1 612.8,554.6 612.4,553.2 611.8,551.7 611.3,550.3 610.8,548.9 610.2,547.4 609.7,546.0 609.1,544.6 608.5,543.2 607.9,541.8 607.3,540.4 606.7,539.0 606.0,537.7 605.4,536.3 604.7,535.0 604.0,533.6 603.3,532.3 602.6,530.9 601.9,529.6 601.1,528.3 600.4,527.0 599.6,525.7 598.8,524.4 598.1,523.1 597.3,521.9 596.5,520.6 595.6,519.3 594.8,518.1 594.0,516.8 593.1,515.6 592.2,514.4 591.4,513.2" stroke-dasharray="1 9" stroke-dashoffset="8"/><polyline points="460.0,432.5 458.5,432.1 457.0,431.8 455.5,431.4 454.0,431.1 452.5,430.8 451.0,430.5 449.5,430.2 448.0,429.9 446.4,429.6 444.9,429.3 443.4,429.1" stroke-dasharray="1 9" stroke-dashoffset="0"/><polyline points="192.4,496.4 191.2,497.5 190.1,498.6 188.9,499.7 187.8,500.9 186.6,502.0 185.5,503.1 184.4,504.3 183.2,505.4 182.1,506.6 181.0,507.8 179.9,509.0 178.9,510.2 177.8,511.4 176.7,512.6 175.7,513.8 174.6,515.0 173.6,516.3 172.6,517.5 171.6,518.8 170.6,520.0 169.6,521.3 168.6,522.6 167.6,523.9 166.7,525.2 165.7,526.5 164.8,527.8 163.9,529.1 162.9,530.4 162.0,531.8 161.1,533.1 160.3,534.5 159.4,535.8 158.5,537.2 157.7,538.6 156.9,540.0 156.1,541.4 155.3,542.8 154.5,544.2 153.7,545.6 152.9,547.0 152.2,548.4 151.4,549.9 150.7,551.3 150.0,552.8 149.3,554.2 148.6,555.7 148.0,557.2 147.3,558.7 146.7,560.2 146.1,561.7 145.5,563.2 144.9,564.7 144.3,566.2 143.7,567.7 143.2,569.3 142.7,570.8 142.1,572.4 141.6,573.9 141.2,575.5 140.7,577.0 140.3,578.6 139.8,580.2 139.4,581.8 139.0,583.4 138.6,585.0 138.3,586.6 137.9,588.2 137.6,589.8 137.3,591.4 137.0,593.0 136.8,594.7 136.5,596.3 136.3,597.9 136.1,599.6 135.9,601.2 135.7,602.9" stroke-dasharray="1 9" stroke-dashoffset="6"/><polyline points="635.2,609.7 635.2,607.9 635.3,606.2 635.3,604.4 635.3,602.6 635.2,600.9 635.2,599.1 635.1,597.4 635.0,595.7 634.9,593.9 634.8,592.2 634.6,590.5 634.4,588.8 634.3,587.1 634.0,585.4 633.8,583.7 633.6,582.0 633.3,580.4 633.0,578.7 632.7,577.0 632.4,575.4 632.1,573.8 631.7,572.1 631.3,570.5 630.9,568.9 630.5,567.3 630.1,565.7 629.7,564.1 629.2,562.5 628.7,560.9 628.2,559.3 627.7,557.7 627.2,556.2 626.7,554.6 626.1,553.1 625.5,551.6 625.0,550.0 624.4,548.5 623.7,547.0 623.1,545.5 622.5,544.0 621.8,542.5 621.1,541.1 620.4,539.6 619.7,538.2 619.0,536.7 618.3,535.3 617.5,533.8 616.8,532.4 616.0,531.0 615.2,529.6 614.4,528.2 613.6,526.8" stroke-dasharray="1 9" stroke-dashoffset="8"/><polyline points="444.6,423.0 443.0,422.7 441.4,422.4 439.8,422.2 438.2,422.0 436.6,421.7 435.0,421.5 433.4,421.3 431.8,421.1 430.2,420.9 428.6,420.7 426.9,420.5 425.3,420.3 423.7,420.2 422.1,420.0 420.4,419.9" stroke-dasharray="1 9" stroke-dashoffset="3"/><polyline points="167.6,507.7 166.5,509.0 165.3,510.3 164.2,511.5 163.0,512.8 161.9,514.1 160.8,515.4 159.7,516.8 158.6,518.1 157.5,519.4 156.5,520.8 155.4,522.1 154.4,523.5 153.4,524.9 152.3,526.3 151.3,527.6 150.3,529.1 149.3,530.5 148.4,531.9 147.4,533.3 146.4,534.7 145.5,536.2 144.6,537.6 143.7,539.1 142.8,540.6 141.9,542.1 141.0,543.6 140.2,545.1 139.3,546.6 138.5,548.1 137.7,549.6 136.9,551.1 136.1,552.7 135.3,554.2 134.5,555.8 133.8,557.4 133.1,558.9 132.4,560.5 131.7,562.1 131.0,563.7 130.3,565.3 129.7,566.9 129.0,568.6 128.4,570.2 127.8,571.8 127.2,573.5 126.7,575.1 126.1,576.8 125.6,578.5 125.0,580.1 124.6,581.8 124.1,583.5 123.6,585.2" stroke-dasharray="1 9" stroke-dashoffset="7"/><polyline points="650.2,596.3 650.0,594.5 649.8,592.7 649.6,590.9 649.4,589.1 649.1,587.3 648.8,585.5 648.5,583.7 648.2,581.9 647.8,580.1 647.5,578.4 647.1,576.6 646.7,574.9 646.3,573.1 645.8,571.4 645.4,569.7 644.9,568.0 644.4,566.3 643.9,564.6 643.4,562.9 642.8,561.3 642.3,559.6 641.7,557.9 641.1,556.3 640.5,554.7 639.9,553.0 639.2,551.4 638.6,549.8 637.9,548.2 637.2,546.6 636.5,545.0 635.8,543.5 635.1,541.9 634.3,540.3 633.5,538.8" stroke-dasharray="1 9" stroke-dashoffset="1"/><polyline points="432.2,415.1 430.6,414.9 428.9,414.8 427.2,414.6 425.5,414.4 423.8,414.2 422.1,414.1 420.4,413.9 418.7,413.8 417.0,413.7 415.3,413.5 413.6,413.4 411.9,413.3 410.2,413.2 408.5,413.1 406.8,413.0 405.1,413.0 403.4,412.9 401.7,412.9 400.0,412.8 398.3,412.8 396.6,412.7 394.9,412.7 393.2,412.7 391.4,412.7 389.7,412.7 388.0,412.7 386.3,412.7 384.6,412.7 382.9,412.8 381.2,412.8 379.4,412.8 377.7,412.9 376.0,413.0 374.3,413.0" stroke-dasharray="1 9" stroke-dashoffset="8"/><polyline points="145.6,517.6 144.5,519.0 143.3,520.4 142.2,521.8 141.1,523.3 139.9,524.7 138.8,526.2 137.8,527.7 136.7,529.2 135.6,530.7 134.6,532.2 133.5,533.7 132.5,535.2 131.5,536.7 130.5,538.3 129.5,539.8 128.6,541.4 127.6,543.0 126.7,544.5 125.7,546.1 124.8,547.7 123.9,549.3 123.0,551.0 122.1,552.6 121.3,554.2 120.4,555.9 119.6,557.5 118.8,559.2 118.0,560.9 117.2,562.5 116.5,564.2 115.7,565.9 115.0,567.7 114.3,569.4 113.6,571.1" stroke-dasharray="1 9" stroke-dashoffset="2"/><polyline points="663.1,583.4 662.7,581.6 662.3,579.7 661.8,577.9 661.3,576.0 660.9,574.2 660.4,572.4 659.8,570.5 659.3,568.7 658.7,566.9 658.1,565.2 657.6,563.4 656.9,561.6 656.3,559.9 655.7,558.1 655.0,556.4 654.3,554.7 653.6,552.9 652.9,551.2" stroke-dasharray="1 9" stroke-dashoffset="8"/><polyline points="420.2,408.2 418.4,408.0 416.7,407.9 414.9,407.8 413.1,407.7 411.4,407.6 409.6,407.5 407.8,407.4 406.0,407.3 404.3,407.2 402.5,407.2 400.7,407.1 398.9,407.1 397.2,407.1 395.4,407.0 393.6,407.0 391.8,407.0 390.0,407.0 388.3,407.0" stroke-dasharray="1 9" stroke-dashoffset="0"/><polyline points="124.1,527.9 122.9,529.4 121.8,531.0 120.7,532.6 119.6,534.2 118.5,535.8 117.4,537.4 116.3,539.1 115.2,540.7 114.2,542.3 113.2,544.0 112.1,545.7 111.1,547.4 110.1,549.1 109.2,550.8 108.2,552.5 107.3,554.2 106.3,555.9 105.4,557.7" stroke-dasharray="1 9" stroke-dashoffset="4"/><polyline points="674.9,573.3 674.3,571.4 673.7,569.5 673.1,567.6 672.4,565.7 671.8,563.8 671.1,562.0" stroke-dasharray="1 9" stroke-dashoffset="8"/><polyline points="410.6,402.0 408.8,401.9 406.9,401.8 405.1,401.7 403.3,401.7 401.4,401.6 399.6,401.6" stroke-dasharray="1 9" stroke-dashoffset="8"/><polyline points="104.3,536.6 103.1,538.3 102.0,540.0 100.8,541.7 99.7,543.5 98.6,545.2 97.5,547.0" stroke-dasharray="1 9" stroke-dashoffset="6"/></g><g fill="none" stroke="#000" stroke-width="1"><polygon points="402.4,295.1 35.8,420.5 299.6,780.8 725.5,446.4"/><path d="M246.8,471.2 L219.9,357.5 M543.2,483.2 L559.7,368.8 M296.6,448.5 L278.0,337.6 M499.5,456.4 L509.0,345.0 M223.2,482.0 L192.1,367.0 M564.1,496.0 L584.3,380.3 M317.2,439.1 L301.8,329.5 M481.5,445.3 L488.3,335.3 M206.4,489.7 L172.3,373.8 M578.9,505.2 L601.9,388.5 M330.7,432.9 L317.4,324.2 M469.8,438.1 L474.9,329.0 M192.3,496.2 L155.4,379.6 M591.6,512.9 L617.0,395.6 M341.6,427.9 L329.9,319.9 M460.4,432.3 L464.1,324.0 M179.5,502.0 L140.2,384.8 M603.0,520.0 L630.6,402.0 M351.1,423.6 L340.6,316.2 M452.2,427.3 L454.9,319.7 M167.6,507.4 L125.9,389.7 M613.7,526.5 L643.4,408.0 M359.5,419.8 L350.2,312.9 M445.0,422.9 L446.7,315.8 M156.3,512.6 L112.4,394.3 M623.9,532.8 L655.7,413.7 M367.2,416.2 L359.0,309.9 M438.4,418.8 L439.3,312.3 M145.5,517.6 L99.3,398.8 M633.7,538.8 L667.5,419.3 M374.3,413.0 L367.1,307.2 M432.3,415.1 L432.4,309.1 M134.9,522.4 L86.5,403.1 M643.2,544.6 L679.1,424.7 M381.0,409.9 L374.7,304.6 M426.5,411.6 L425.9,306.1 M124.7,527.1 L74.1,407.4 M652.6,550.4 L690.4,430.0 M387.4,407.0 L381.9,302.1 M421.1,408.2 L419.8,303.2 M114.5,531.7 L61.8,411.6 M661.8,556.0 L701.6,435.2 M393.4,404.2 L388.7,299.8 M415.9,405.0 L414.0,300.5 M104.6,536.2 L49.6,415.8 M670.8,561.6 L712.8,440.5 M399.2,401.6 L395.3,297.5 M411.0,402.0 L408.5,297.9 M94.7,540.8 L37.5,419.9 M679.9,567.2 L723.9,445.7 M404.8,399.0 L401.5,295.4 M406.2,399.1 L403.2,295.4 M93.3,541.4 L35.8,420.5 M681.2,568.0 L725.5,446.4 M405.6,398.7 L402.4,295.1 M405.6,398.7 L402.4,295.1"/></g><polygon points="242.4,632.3 247.4,637.5 253.0,642.5 259.0,647.2 265.5,651.8 272.5,656.0 279.9,660.0 287.7,663.7 295.9,667.1 304.5,670.1 313.4,672.8 322.6,675.1 332.0,677.0 341.7,678.5 351.5,679.6 361.5,680.3 371.5,680.6 380.9,680.5 390.0,679.9 399.1,678.9 408.1,677.5 417.0,675.7 425.7,673.5 434.2,671.0 442.4,668.0 450.4,664.8 458.1,661.2 465.4,657.3 472.4,653.1 479.0,648.7 485.3,644.0 491.1,639.1 496.4,634.0 501.4,628.8 505.9,623.4 509.9,617.9 513.5,612.3 516.6,606.6 519.3,600.9 521.5,595.1 523.3,589.3 524.6,583.6 525.5,577.8 526.0,572.1 526.1,566.5 525.8,560.9 525.1,555.5 524.0,550.1 522.5,544.8 520.7,539.7 518.6,534.6 516.1,529.8 513.4,525.0 510.3,520.4 507.0,516.0 503.4,511.8 499.5,507.7 495.4,503.8 491.1,500.1 486.6,496.6 481.9,493.2 477.0,490.0 471.9,487.1 466.6,484.3 461.2,481.7 455.7,479.4 450.1,477.2 444.3,475.2 438.4,473.4 432.5,471.9 426.4,470.5 420.3,469.3 414.1,468.3 407.8,467.6 401.5,467.0 395.2,466.7 388.8,466.5 382.5,466.6 376.1,466.8 369.3,467.3 362.3,468.0 355.3,468.8 348.3,469.9 341.4,471.2 334.6,472.7 327.8,474.4 321.1,476.3 314.5,478.4 308.0,480.7 301.6,483.1 295.3,485.8 289.2,488.7 283.3,491.8 277.5,495.1 271.9,498.6 266.5,502.2 261.3,506.0 256.3,510.1 251.6,514.3 247.1,518.6 243.0,523.2 239.1,527.8 235.5,532.7 232.3,537.7 229.4,542.8 226.9,548.0 224.7,553.4 222.9,558.9 221.6,564.4 220.8,570.1 220.4,575.8 220.4,581.5 220.8,587.3 221.6,593.1 223.0,598.9 225.0,604.7 227.4,610.4 230.4,616.0 233.9,621.6 237.9,627.0 242.4,632.3" fill="url(#fg)"/><polyline points="252.3,514.3 247.9,518.7 243.7,523.2 239.8,527.9 236.3,532.7 233.0,537.7 230.1,542.8 227.6,548.0 225.5,553.4 223.7,558.8 222.4,564.4 221.5,570.0 221.1,575.7 221.1,581.4 221.6,587.2 222.5,593.0 223.9,598.8 225.9,604.5 228.3,610.2 231.3,615.8 234.8,621.4 238.8,626.8 243.3,632.1 248.4,637.2 253.9,642.2 259.9,646.9 266.4,651.4 273.4,655.6 280.8,659.6 288.6,663.3 296.9,666.6 305.4,669.6 314.3,672.3 323.5,674.5 332.9,676.4 342.6,677.9 352.4,679.0 362.3,679.6 372.3,679.9 381.6,679.7 390.7,679.1 399.7,678.1 408.7,676.6 417.5,674.8 426.2,672.6 434.6,670.0 442.8,667.1 450.8,663.8 458.4,660.2 465.7,656.3 472.6,652.1 479.2,647.6 485.4,643.0 491.1,638.1 496.4,633.0 501.3,627.7 505.7,622.3 509.7,616.8 513.2,611.2 516.3,605.6 518.9,599.9 521.1,594.1 522.8,588.4 524.1,582.6 524.9,576.9 525.3,571.2 525.4,565.6 525.0,560.1 524.2,554.6 523.1,549.3 521.6,544.0 519.7,538.9 517.6,533.9 515.0,529.1 512.2,524.4 509.1,519.8 505.8,515.4 502.1,511.2 498.3,507.2 494.1,503.3 489.8,499.6" fill="none" stroke="url(#fb)" stroke-width="7" stroke-linecap="round"/><polygon points="233.2,607.2 231.2,602.7 229.6,598.1 228.8,595.5 227.5,590.8 226.9,588.2 225.9,583.6 225.4,580.9 224.9,578.2 224.3,573.6 224.0,570.8 223.8,568.0 223.5,563.5 223.4,560.7 223.4,556.2 223.4,553.4 223.6,550.6 223.9,546.2 224.2,543.4 224.6,540.6 225.2,536.3 225.7,533.6 226.6,529.4 227.2,526.6 227.9,523.9 229.1,519.8 229.9,517.1 231.3,513.2 232.2,510.6 233.3,508.0 234.9,504.1 236.0,501.6 237.3,499.1 239.1,495.5 240.4,493.0 242.5,489.5 243.9,487.2 246.1,483.8 247.6,481.5 249.2,479.3 251.5,476.1 253.2,474.0 255.7,470.9 257.4,468.9 260.0,465.9 261.8,464.0 264.6,461.2 266.4,459.4 269.3,456.7 271.1,455.1 274.1,452.5 275.9,451.0 279.0,448.6 280.9,447.1 284.0,444.8 285.9,443.5 289.1,441.4 291.0,440.2 294.2,438.2 297.5,436.3 299.3,435.2 302.7,433.5 304.5,432.6 307.8,430.9 311.3,429.3 312.9,428.6 316.4,427.1 319.9,425.8 321.4,425.2 324.9,424.0 328.4,422.8 332.0,421.7 333.3,421.3 336.8,420.4 340.4,419.5 344.1,418.6 347.8,417.9 348.6,417.7 352.2,417.1 355.8,416.5 359.5,416.1 363.1,415.7 366.8,415.3 370.5,415.1 374.2,414.9 377.6,414.9 381.0,414.9 384.3,414.9 387.7,415.1 391.0,415.4 394.3,415.7 395.0,415.8 398.4,416.2 401.8,416.7 405.1,417.3 408.3,417.9 409.5,418.2 412.8,418.9 416.1,419.8 419.3,420.7 420.8,421.1 424.0,422.2 427.2,423.3 428.8,423.9 432.0,425.1 433.6,425.8 436.8,427.2 439.9,428.6 441.7,429.5 444.8,431.0 446.6,432.0 449.6,433.7 452.6,435.5 454.5,436.6 457.4,438.5 459.3,439.8 462.2,441.8 464.0,443.2 466.9,445.4 468.7,446.9 471.5,449.2 473.3,450.8 475.9,453.2 477.7,454.9 480.3,457.5 482.1,459.3 483.7,461.1 486.3,463.9 487.9,465.9 490.3,468.8 491.8,470.8 494.1,473.9 495.6,476.0 497.1,478.1 499.2,481.4 500.6,483.6 502.5,487.0 503.8,489.3 505.1,491.7 506.9,495.2 508.0,497.6 509.6,501.3 510.7,503.8 511.6,506.3 513.1,510.1 514.0,512.7 515.2,516.6 516.0,519.2 516.7,521.8 517.7,525.9 518.3,528.5 518.8,531.2 519.5,535.4 519.9,538.0 520.4,542.3 520.7,545.0 520.9,547.7 521.2,552.1 521.3,554.7 521.3,557.4 521.3,561.9 521.2,564.5 520.9,569.0 520.7,571.6 520.4,574.2 519.9,578.8 519.0,583.4 517.9,588.0 516.4,592.6 514.7,597.2 512.7,601.8 510.3,606.4 507.7,610.9 504.8,615.3 501.5,619.7 498.0,624.0 494.2,628.3 490.0,632.4 485.6,636.4 480.9,640.3 476.0,644.0 470.8,647.6 465.3,651.0 459.6,654.2 453.6,657.2 447.5,660.0 441.1,662.6 434.6,665.0 427.9,667.2 421.0,669.1 414.0,670.7 406.9,672.1 399.8,673.2 392.6,674.1 385.3,674.7 378.0,675.0 370.4,675.0 362.4,674.8 354.5,674.3 346.6,673.5 338.8,672.4 331.2,671.1 323.7,669.5 316.4,667.6 309.3,665.6 302.4,663.2 295.7,660.7 289.2,657.9 283.0,654.9 277.1,651.7 271.5,648.3 266.2,644.8 261.2,641.1 256.5,637.2 252.2,633.2 248.2,629.1 244.5,624.9 241.1,620.6 238.1,616.2 235.5,611.8" fill="url(#dg)"/><polygon points="233.2,607.2 231.2,602.7 229.6,598.1 228.8,595.5 227.5,590.8 226.9,588.2 225.9,583.6 225.4,580.9 224.9,578.2 224.3,573.6 224.0,570.8 223.8,568.0 223.5,563.5 223.4,560.7 223.4,556.2 223.4,553.4 223.6,550.6 223.9,546.2 224.2,543.4 224.6,540.6 225.2,536.3 225.7,533.6 226.6,529.4 227.2,526.6 227.9,523.9 229.1,519.8 229.9,517.1 231.3,513.2 232.2,510.6 233.3,508.0 234.9,504.1 236.0,501.6 237.3,499.1 239.1,495.5 240.4,493.0 242.5,489.5 243.9,487.2 246.1,483.8 247.6,481.5 249.2,479.3 251.5,476.1 253.2,474.0 255.7,470.9 257.4,468.9 260.0,465.9 261.8,464.0 264.6,461.2 266.4,459.4 269.3,456.7 271.1,455.1 274.1,452.5 275.9,451.0 279.0,448.6 280.9,447.1 284.0,444.8 285.9,443.5 289.1,441.4 291.0,440.2 294.2,438.2 297.5,436.3 299.3,435.2 302.7,433.5 304.5,432.6 307.8,430.9 311.3,429.3 312.9,428.6 316.4,427.1 319.9,425.8 321.4,425.2 324.9,424.0 328.4,422.8 332.0,421.7 333.3,421.3 336.8,420.4 340.4,419.5 344.1,418.6 347.8,417.9 348.6,417.7 352.2,417.1 355.8,416.5 359.5,416.1 363.1,415.7 366.8,415.3 370.5,415.1 374.2,414.9 377.6,414.9 381.0,414.9 384.3,414.9 387.7,415.1 391.0,415.4 394.3,415.7 395.0,415.8 398.4,416.2 401.8,416.7 405.1,417.3 408.3,417.9 409.5,418.2 412.8,418.9 416.1,419.8 419.3,420.7 420.8,421.1 424.0,422.2 427.2,423.3 428.8,423.9 432.0,425.1 433.6,425.8 436.8,427.2 439.9,428.6 441.7,429.5 444.8,431.0 446.6,432.0 449.6,433.7 452.6,435.5 454.5,436.6 457.4,438.5 459.3,439.8 462.2,441.8 464.0,443.2 466.9,445.4 468.7,446.9 471.5,449.2 473.3,450.8 475.9,453.2 477.7,454.9 480.3,457.5 482.1,459.3 483.7,461.1 486.3,463.9 487.9,465.9 490.3,468.8 491.8,470.8 494.1,473.9 495.6,476.0 497.1,478.1 499.2,481.4 500.6,483.6 502.5,487.0 503.8,489.3 505.1,491.7 506.9,495.2 508.0,497.6 509.6,501.3 510.7,503.8 511.6,506.3 513.1,510.1 514.0,512.7 515.2,516.6 516.0,519.2 516.7,521.8 517.7,525.9 518.3,528.5 518.8,531.2 519.5,535.4 519.9,538.0 520.4,542.3 520.7,545.0 520.9,547.7 521.2,552.1 521.3,554.7 521.3,557.4 521.3,561.9 521.2,564.5 520.9,569.0 520.7,571.6 520.4,574.2 519.9,578.8 519.0,583.4 517.9,588.0 516.4,592.6 514.7,597.2 512.7,601.8 510.3,606.4 507.7,610.9 504.8,615.3 501.5,619.7 498.0,624.0 494.2,628.3 490.0,632.4 485.6,636.4 480.9,640.3 476.0,644.0 470.8,647.6 465.3,651.0 459.6,654.2 453.6,657.2 447.5,660.0 441.1,662.6 434.6,665.0 427.9,667.2 421.0,669.1 414.0,670.7 406.9,672.1 399.8,673.2 392.6,674.1 385.3,674.7 378.0,675.0 370.4,675.0 362.4,674.8 354.5,674.3 346.6,673.5 338.8,672.4 331.2,671.1 323.7,669.5 316.4,667.6 309.3,665.6 302.4,663.2 295.7,660.7 289.2,657.9 283.0,654.9 277.1,651.7 271.5,648.3 266.2,644.8 261.2,641.1 256.5,637.2 252.2,633.2 248.2,629.1 244.5,624.9 241.1,620.6 238.1,616.2 235.5,611.8" fill="url(#dg2)"/><clipPath id="domeclip"><polygon points="233.2,607.2 231.2,602.7 229.6,598.1 228.8,595.5 227.5,590.8 226.9,588.2 225.9,583.6 225.4,580.9 224.9,578.2 224.3,573.6 224.0,570.8 223.8,568.0 223.5,563.5 223.4,560.7 223.4,556.2 223.4,553.4 223.6,550.6 223.9,546.2 224.2,543.4 224.6,540.6 225.2,536.3 225.7,533.6 226.6,529.4 227.2,526.6 227.9,523.9 229.1,519.8 229.9,517.1 231.3,513.2 232.2,510.6 233.3,508.0 234.9,504.1 236.0,501.6 237.3,499.1 239.1,495.5 240.4,493.0 242.5,489.5 243.9,487.2 246.1,483.8 247.6,481.5 249.2,479.3 251.5,476.1 253.2,474.0 255.7,470.9 257.4,468.9 260.0,465.9 261.8,464.0 264.6,461.2 266.4,459.4 269.3,456.7 271.1,455.1 274.1,452.5 275.9,451.0 279.0,448.6 280.9,447.1 284.0,444.8 285.9,443.5 289.1,441.4 291.0,440.2 294.2,438.2 297.5,436.3 299.3,435.2 302.7,433.5 304.5,432.6 307.8,430.9 311.3,429.3 312.9,428.6 316.4,427.1 319.9,425.8 321.4,425.2 324.9,424.0 328.4,422.8 332.0,421.7 333.3,421.3 336.8,420.4 340.4,419.5 344.1,418.6 347.8,417.9 348.6,417.7 352.2,417.1 355.8,416.5 359.5,416.1 363.1,415.7 366.8,415.3 370.5,415.1 374.2,414.9 377.6,414.9 381.0,414.9 384.3,414.9 387.7,415.1 391.0,415.4 394.3,415.7 395.0,415.8 398.4,416.2 401.8,416.7 405.1,417.3 408.3,417.9 409.5,418.2 412.8,418.9 416.1,419.8 419.3,420.7 420.8,421.1 424.0,422.2 427.2,423.3 428.8,423.9 432.0,425.1 433.6,425.8 436.8,427.2 439.9,428.6 441.7,429.5 444.8,431.0 446.6,432.0 449.6,433.7 452.6,435.5 454.5,436.6 457.4,438.5 459.3,439.8 462.2,441.8 464.0,443.2 466.9,445.4 468.7,446.9 471.5,449.2 473.3,450.8 475.9,453.2 477.7,454.9 480.3,457.5 482.1,459.3 483.7,461.1 486.3,463.9 487.9,465.9 490.3,468.8 491.8,470.8 494.1,473.9 495.6,476.0 497.1,478.1 499.2,481.4 500.6,483.6 502.5,487.0 503.8,489.3 505.1,491.7 506.9,495.2 508.0,497.6 509.6,501.3 510.7,503.8 511.6,506.3 513.1,510.1 514.0,512.7 515.2,516.6 516.0,519.2 516.7,521.8 517.7,525.9 518.3,528.5 518.8,531.2 519.5,535.4 519.9,538.0 520.4,542.3 520.7,545.0 520.9,547.7 521.2,552.1 521.3,554.7 521.3,557.4 521.3,561.9 521.2,564.5 520.9,569.0 520.7,571.6 520.4,574.2 519.9,578.8 519.0,583.4 517.9,588.0 516.4,592.6 514.7,597.2 512.7,601.8 510.3,606.4 507.7,610.9 504.8,615.3 501.5,619.7 498.0,624.0 494.2,628.3 490.0,632.4 485.6,636.4 480.9,640.3 476.0,644.0 470.8,647.6 465.3,651.0 459.6,654.2 453.6,657.2 447.5,660.0 441.1,662.6 434.6,665.0 427.9,667.2 421.0,669.1 414.0,670.7 406.9,672.1 399.8,673.2 392.6,674.1 385.3,674.7 378.0,675.0 370.4,675.0 362.4,674.8 354.5,674.3 346.6,673.5 338.8,672.4 331.2,671.1 323.7,669.5 316.4,667.6 309.3,665.6 302.4,663.2 295.7,660.7 289.2,657.9 283.0,654.9 277.1,651.7 271.5,648.3 266.2,644.8 261.2,641.1 256.5,637.2 252.2,633.2 248.2,629.1 244.5,624.9 241.1,620.6 238.1,616.2 235.5,611.8"/></clipPath><polyline clip-path="url(#domeclip)" points="234.4,546.6 232.6,550.8 231.0,555.2 229.8,559.6 228.8,564.0 228.1,568.5 227.7,573.0 227.6,577.6 227.8,582.2 228.3,586.8 229.1,591.4 230.3,596.0 231.8,600.6 233.6,605.1 235.8,609.6 238.3,614.1 241.2,618.5 244.4,622.8 248.0,627.0 251.8,631.1 256.0,635.1 260.6,639.0 265.5,642.7 270.6,646.3 276.1,649.7 281.9,652.9 287.9,656.0 294.3,658.8 300.8,661.4 307.6,663.8 314.6,666.0 321.9,667.9 329.2,669.5 336.8,670.9 344.5,672.1 352.2,673.0 360.1,673.6 368.0,673.9 375.8,673.9 383.0,673.7 390.3,673.2 397.5,672.4 404.6,671.4 411.7,670.1 418.6,668.5 425.5,666.7 432.2,664.7 438.7,662.4 445.1,659.8 451.3,657.1 457.3,654.1 463.0,651.0 468.5,647.7 473.8,644.2 478.8,640.5 483.5,636.7 488.0,632.8 492.2,628.7 496.1,624.5 499.7,620.3 503.0,615.9 506.0,611.5 508.7,607.0 511.1,602.5 513.2,598.0 515.0,593.4 516.5,588.8 517.7,584.2 518.6,579.6 519.2,575.1 519.6,570.6 519.7,566.1 519.5,561.6 519.1,557.2 518.4,552.9 517.4,548.6 516.2,544.4 514.8,540.3 513.2,536.3 511.3,532.3 509.2,528.5" fill="none" stroke="url(#db)" stroke-width="9"/><g fill="none" stroke="#000" stroke-width="0.9"><polyline points="360.6,444.5 360.8,444.6 361.0,444.7 361.2,444.8 361.3,444.9 361.5,445.0 361.7,445.2 361.9,445.3 362.1,445.4 362.3,445.5 362.6,445.6 362.8,445.6 363.0,445.7 363.2,445.8 363.4,445.9 363.7,446.0 363.9,446.1 364.1,446.2 364.3,446.2 364.6,446.3 364.8,446.4 365.1,446.5 365.3,446.5 365.6,446.6 365.8,446.7 366.1,446.7 366.3,446.8 366.6,446.9 366.9,446.9 367.1,447.0 367.4,447.0 367.7,447.1 367.9,447.1 368.2,447.2 368.5,447.2 368.7,447.2 369.0,447.3 369.3,447.3 369.6,447.3 369.9,447.4 370.1,447.4 370.4,447.4 370.7,447.4 371.0,447.4 371.3,447.5 371.6,447.5 371.8,447.5 372.1,447.5 372.4,447.5 372.7,447.5 373.0,447.5 373.3,447.5 373.6,447.5 373.9,447.5 374.1,447.4 374.4,447.4 374.7,447.4 374.9,447.4 375.2,447.4 375.4,447.3 375.7,447.3 376.0,447.3 376.2,447.2 376.5,447.2 376.7,447.2 377.0,447.1 377.2,447.1 377.5,447.0 377.7,447.0 378.0,446.9 378.2,446.9 378.5,446.8 378.7,446.8 379.0,446.7 379.2,446.6 379.5,446.6 379.7,446.5 379.9,446.4 380.2,446.4 380.4,446.3 380.6,446.2 380.9,446.1 381.1,446.0 381.3,446.0 381.5,445.9 381.7,445.8 382.0,445.7 382.2,445.6 382.4,445.5 382.6,445.4 382.8,445.3 383.0,445.2 383.2,445.1 383.4,445.0 383.6,444.9 383.8,444.8 384.0,444.7 384.1,444.6 384.3,444.4 384.5,444.3 384.7,444.2 384.8,444.1 385.0,444.0 385.2,443.8 385.3,443.7 385.5,443.6 385.6,443.5 385.8,443.3 385.9,443.2 386.1,443.1 386.2,442.9 386.3,442.8 386.4,442.7 386.6,442.5 386.7,442.4 386.8,442.3 386.9,442.1 387.0,442.0 387.1,441.9 387.2,441.7 387.3,441.6 387.4,441.4 387.5,441.3 387.6,441.1 387.7,441.0 387.7,440.8 387.8,440.7 387.9,440.6 387.9,440.4 388.0,440.3 388.0,440.1 388.1,440.0 388.1,439.8 388.1,439.7 388.2,439.5 388.2,439.4 388.2,439.2 388.3,439.1 388.3,438.9 388.3,438.8 388.3,438.6 388.3,438.5 388.3,438.3 388.3,438.2 388.3,438.0 388.2,437.9 388.2,437.7 388.2,437.6 388.2,437.5 388.1,437.3 388.1,437.2 388.1,437.0 388.0,436.9 388.0,436.7 387.9,436.6 387.8,436.5 387.8,436.3 387.7,436.2 387.6,436.0 387.6,435.9 387.5,435.8 387.4,435.6 387.3,435.5 387.2,435.4 387.1,435.2 387.0,435.1 386.9,435.0 386.8,434.8 386.7,434.7 386.6,434.6 386.4,434.5 386.3,434.3 386.2,434.2 386.1,434.1 385.9,434.0 385.8,433.8 385.6,433.7 385.5,433.6 385.3,433.5 385.2,433.4 385.0,433.3 384.9,433.2 384.7,433.1 384.5,433.0 384.4,432.9 384.2,432.8 384.0,432.7 383.8,432.6 383.6,432.5 383.5,432.4 383.3,432.3 383.1,432.2 382.9,432.1 382.7,432.0 382.5,431.9 382.3,431.9 382.1,431.8 381.9,431.7 381.7,431.6 381.4,431.6 381.2,431.5 381.0,431.4 380.8,431.4 380.6,431.3 380.4,431.2 380.1,431.2 379.9,431.1 379.7,431.1 379.4,431.0 379.2,431.0 379.0,430.9 378.7,430.9 378.5,430.8 378.3,430.8 378.0,430.7 377.8,430.7 377.5,430.7 377.3,430.6 377.1,430.6 376.8,430.6 376.6,430.6 376.3,430.5 376.1,430.5 375.8,430.5 375.6,430.5 375.3,430.5 375.1,430.5 374.8,430.5 374.6,430.5 374.3,430.5 374.1,430.5 373.8,430.5 373.5,430.5 373.2,430.5 373.0,430.5 372.7,430.5 372.4,430.5 372.1,430.6 371.8,430.6 371.6,430.6 371.3,430.6 371.0,430.7 370.7,430.7 370.5,430.7 370.2,430.8 369.9,430.8 369.7,430.8 369.4,430.9 369.1,430.9 368.8,431.0 368.6,431.0 368.3,431.1 368.1,431.1 367.8,431.2 367.5,431.3 367.3,431.3 367.0,431.4 366.8,431.4 366.5,431.5 366.3,431.6 366.0,431.7 365.8,431.7 365.5,431.8 365.3,431.9 365.0,432.0 364.8,432.1 364.6,432.1 364.3,432.2 364.1,432.3 363.9,432.4 363.7,432.5 363.4,432.6 363.2,432.7 363.0,432.8 362.8,432.9 362.6,433.0 362.4,433.1 362.2,433.2 362.0,433.3 361.8,433.4 361.6,433.6 361.4,433.7 361.2,433.8 361.0,433.9 360.9,434.0 360.7,434.1 360.5,434.3 360.4,434.4 360.2,434.5 360.0,434.6 359.9,434.8 359.7,434.9 359.6,435.0 359.4,435.2 359.3,435.3 359.2,435.4 359.0,435.6 358.9,435.7 358.8,435.8 358.7,436.0 358.6,436.1 358.5,436.2 358.4,436.4 358.3,436.5 358.2,436.7 358.1,436.8 358.0,437.0 357.9,437.1 357.8,437.2 357.8,437.4 357.7,437.5 357.6,437.7 357.6,437.8 357.5,438.0 357.5,438.1 357.5,438.3 357.4,438.4 357.4,438.6 357.4,438.7 357.3,438.9 357.3,439.0 357.3,439.2 357.3,439.3 357.3,439.5 357.3,439.6 357.3,439.8 357.3,439.9 357.3,440.0 357.4,440.2 357.4,440.3 357.4,440.5 357.5,440.6 357.5,440.8 357.5,440.9 357.6,441.1 357.7,441.2 357.7,441.4 357.8,441.5 357.9,441.6 357.9,441.8 358.0,441.9 358.1,442.1 358.2,442.2 358.3,442.3 358.4,442.5 358.5,442.6 358.6,442.7 358.7,442.9 358.8,443.0 359.0,443.1 359.1,443.3 359.2,443.4 359.4,443.5 359.5,443.7 359.7,443.8 359.8,443.9 360.0,444.0 360.1,444.1 360.3,444.3 360.4,444.4 360.6,444.5"/><polyline points="352.3,449.2 352.5,449.4 352.8,449.6 353.1,449.7 353.4,449.9 353.8,450.1 354.1,450.3 354.4,450.4 354.7,450.6 355.1,450.8 355.4,450.9 355.8,451.1 356.1,451.2 356.5,451.4 356.9,451.5 357.2,451.7 357.6,451.8 358.0,452.0 358.4,452.1 358.8,452.2 359.2,452.4 359.6,452.5 360.0,452.6 360.4,452.7 360.8,452.8 361.2,452.9 361.7,453.0 362.1,453.1 362.5,453.2 363.0,453.3 363.4,453.4 363.8,453.5 364.3,453.6 364.7,453.6 365.2,453.7 365.6,453.8 366.1,453.8 366.6,453.9 367.0,453.9 367.5,454.0 368.0,454.0 368.4,454.0 368.9,454.1 369.4,454.1 369.8,454.1 370.3,454.1 370.8,454.2 371.3,454.2 371.8,454.2 372.2,454.2 372.7,454.2 373.2,454.2 373.7,454.2 374.1,454.1 374.6,454.1 375.0,454.1 375.4,454.1 375.9,454.0 376.3,454.0 376.7,453.9 377.2,453.9 377.6,453.8 378.0,453.8 378.4,453.7 378.9,453.7 379.3,453.6 379.7,453.5 380.1,453.4 380.5,453.3 381.0,453.3 381.4,453.2 381.8,453.1 382.2,453.0 382.6,452.9 383.0,452.8 383.4,452.6 383.8,452.5 384.2,452.4 384.6,452.3 384.9,452.2 385.3,452.0 385.7,451.9 386.1,451.8 386.4,451.6 386.8,451.5 387.2,451.3 387.5,451.2 387.9,451.0 388.2,450.8 388.6,450.7 388.9,450.5 389.2,450.3 389.5,450.2 389.9,450.0 390.2,449.8 390.5,449.6 390.8,449.4 391.1,449.3 391.4,449.1 391.7,448.9 392.0,448.7 392.2,448.5 392.5,448.3 392.8,448.1 393.0,447.9 393.3,447.7 393.5,447.4 393.8,447.2 394.0,447.0 394.2,446.8 394.4,446.6 394.7,446.4 394.9,446.1 395.1,445.9 395.3,445.7 395.4,445.5 395.6,445.2 395.8,445.0 396.0,444.8 396.1,444.5 396.3,444.3 396.4,444.1 396.5,443.8 396.7,443.6 396.8,443.3 396.9,443.1 397.0,442.9 397.1,442.6 397.2,442.4 397.3,442.1 397.4,441.9 397.4,441.7 397.5,441.4 397.6,441.2 397.6,440.9 397.7,440.7 397.7,440.4 397.7,440.2 397.7,439.9 397.8,439.7 397.8,439.5 397.8,439.2 397.7,439.0 397.7,438.7 397.7,438.5 397.7,438.2 397.6,438.0 397.6,437.8 397.5,437.5 397.5,437.3 397.4,437.1 397.3,436.8 397.2,436.6 397.2,436.3 397.1,436.1 397.0,435.9 396.9,435.7 396.7,435.4 396.6,435.2 396.5,435.0 396.3,434.8 396.2,434.5 396.0,434.3 395.9,434.1 395.7,433.9 395.6,433.7 395.4,433.5 395.2,433.2 395.0,433.0 394.8,432.8 394.6,432.6 394.4,432.4 394.2,432.2 394.0,432.0 393.7,431.8 393.5,431.6 393.3,431.5 393.0,431.3 392.8,431.1 392.5,430.9 392.3,430.7 392.0,430.6 391.7,430.4 391.5,430.2 391.2,430.0 390.9,429.9 390.6,429.7 390.3,429.6 390.0,429.4 389.7,429.3 389.4,429.1 389.1,429.0 388.8,428.8 388.4,428.7 388.1,428.6 387.8,428.4 387.5,428.3 387.1,428.2 386.8,428.1 386.4,427.9 386.1,427.8 385.7,427.7 385.4,427.6 385.0,427.5 384.6,427.4 384.3,427.3 383.9,427.2 383.5,427.1 383.2,427.1 382.8,427.0 382.4,426.9 382.0,426.8 381.6,426.8 381.2,426.7 380.9,426.6 380.5,426.6 380.1,426.5 379.7,426.5 379.3,426.4 378.9,426.4 378.5,426.4 378.1,426.3 377.7,426.3 377.3,426.3 376.9,426.2 376.5,426.2 376.1,426.2 375.6,426.2 375.2,426.2 374.8,426.2 374.4,426.2 374.0,426.2 373.6,426.2 373.1,426.2 372.7,426.3 372.2,426.3 371.8,426.3 371.3,426.3 370.9,426.4 370.4,426.4 370.0,426.4 369.5,426.5 369.1,426.5 368.6,426.6 368.2,426.7 367.7,426.7 367.3,426.8 366.9,426.9 366.4,426.9 366.0,427.0 365.6,427.1 365.1,427.2 364.7,427.3 364.3,427.4 363.9,427.5 363.4,427.6 363.0,427.7 362.6,427.8 362.2,427.9 361.8,428.0 361.4,428.1 361.0,428.2 360.6,428.4 360.2,428.5 359.8,428.6 359.4,428.8 359.0,428.9 358.7,429.0 358.3,429.2 357.9,429.3 357.6,429.5 357.2,429.6 356.8,429.8 356.5,430.0 356.1,430.1 355.8,430.3 355.5,430.5 355.1,430.6 354.8,430.8 354.5,431.0 354.2,431.2 353.9,431.4 353.6,431.6 353.3,431.7 353.0,431.9 352.7,432.1 352.4,432.3 352.1,432.5 351.9,432.7 351.6,432.9 351.3,433.1 351.1,433.3 350.8,433.6 350.6,433.8 350.4,434.0 350.2,434.2 349.9,434.4 349.7,434.6 349.5,434.9 349.3,435.1 349.2,435.3 349.0,435.5 348.8,435.8 348.6,436.0 348.5,436.2 348.3,436.5 348.2,436.7 348.0,436.9 347.9,437.2 347.8,437.4 347.7,437.7 347.6,437.9 347.5,438.1 347.4,438.4 347.3,438.6 347.2,438.9 347.2,439.1 347.1,439.3 347.1,439.6 347.0,439.8 347.0,440.1 347.0,440.3 347.0,440.6 346.9,440.8 346.9,441.1 346.9,441.3 347.0,441.5 347.0,441.8 347.0,442.0 347.1,442.3 347.1,442.5 347.2,442.8 347.2,443.0 347.3,443.2 347.4,443.5 347.5,443.7 347.6,444.0 347.7,444.2 347.8,444.4 347.9,444.7 348.0,444.9 348.2,445.1 348.3,445.4 348.5,445.6 348.6,445.8 348.8,446.0 349.0,446.3 349.2,446.5 349.4,446.7 349.6,446.9 349.8,447.1 350.0,447.4 350.2,447.6 350.4,447.8 350.7,448.0 350.9,448.2 351.2,448.4 351.4,448.6 351.7,448.8 352.0,449.0 352.3,449.2"/><polyline points="347.2,452.2 347.5,452.4 347.9,452.7 348.3,452.9 348.7,453.1 349.0,453.3 349.4,453.6 349.8,453.8 350.3,454.0 350.7,454.2 351.1,454.4 351.5,454.6 352.0,454.8 352.4,455.0 352.9,455.2 353.3,455.3 353.8,455.5 354.3,455.7 354.8,455.8 355.3,456.0 355.7,456.2 356.2,456.3 356.8,456.5 357.3,456.6 357.8,456.7 358.3,456.9 358.8,457.0 359.4,457.1 359.9,457.2 360.4,457.4 361.0,457.5 361.5,457.6 362.1,457.7 362.7,457.7 363.2,457.8 363.8,457.9 364.3,458.0 364.9,458.1 365.5,458.1 366.1,458.2 366.7,458.2 367.2,458.3 367.8,458.3 368.4,458.4 369.0,458.4 369.6,458.4 370.2,458.4 370.8,458.4 371.4,458.4 372.0,458.4 372.5,458.4 373.1,458.4 373.7,458.4 374.3,458.4 374.8,458.4 375.4,458.3 375.9,458.3 376.5,458.2 377.0,458.2 377.5,458.1 378.1,458.1 378.6,458.0 379.1,457.9 379.7,457.9 380.2,457.8 380.7,457.7 381.2,457.6 381.7,457.5 382.3,457.4 382.8,457.3 383.3,457.2 383.8,457.1 384.3,456.9 384.8,456.8 385.3,456.7 385.8,456.5 386.3,456.4 386.8,456.2 387.2,456.1 387.7,455.9 388.2,455.7 388.7,455.6 389.1,455.4 389.6,455.2 390.0,455.0 390.5,454.9 390.9,454.7 391.3,454.5 391.8,454.3 392.2,454.1 392.6,453.9 393.0,453.6 393.4,453.4 393.8,453.2 394.2,453.0 394.6,452.8 395.0,452.5 395.3,452.3 395.7,452.1 396.0,451.8 396.4,451.6 396.7,451.3 397.1,451.1 397.4,450.8 397.7,450.6 398.0,450.3 398.3,450.0 398.6,449.8 398.9,449.5 399.2,449.2 399.4,449.0 399.7,448.7 400.0,448.4 400.2,448.1 400.4,447.8 400.7,447.6 400.9,447.3 401.1,447.0 401.3,446.7 401.5,446.4 401.7,446.1 401.8,445.8 402.0,445.5 402.2,445.2 402.3,444.9 402.4,444.6 402.6,444.3 402.7,444.0 402.8,443.7 402.9,443.4 403.0,443.1 403.1,442.8 403.2,442.5 403.2,442.2 403.3,441.9 403.3,441.6 403.4,441.3 403.4,441.0 403.4,440.7 403.4,440.4 403.4,440.1 403.4,439.8 403.4,439.5 403.4,439.2 403.4,438.9 403.3,438.6 403.3,438.3 403.2,438.0 403.1,437.7 403.1,437.5 403.0,437.2 402.9,436.9 402.8,436.6 402.7,436.3 402.5,436.0 402.4,435.7 402.3,435.4 402.1,435.2 402.0,434.9 401.8,434.6 401.6,434.3 401.4,434.1 401.3,433.8 401.1,433.5 400.9,433.3 400.6,433.0 400.4,432.7 400.2,432.5 400.0,432.2 399.7,432.0 399.5,431.7 399.2,431.5 398.9,431.2 398.7,431.0 398.4,430.8 398.1,430.5 397.8,430.3 397.5,430.1 397.2,429.8 396.9,429.6 396.6,429.4 396.2,429.2 395.9,429.0 395.6,428.8 395.2,428.6 394.9,428.4 394.5,428.2 394.2,428.0 393.8,427.8 393.4,427.6 393.0,427.4 392.6,427.2 392.2,427.1 391.9,426.9 391.4,426.7 391.0,426.6 390.6,426.4 390.2,426.3 389.8,426.1 389.4,426.0 388.9,425.8 388.5,425.7 388.1,425.6 387.6,425.5 387.2,425.3 386.7,425.2 386.3,425.1 385.8,425.0 385.4,424.9 384.9,424.8 384.4,424.7 384.0,424.6 383.5,424.5 383.0,424.5 382.5,424.4 382.1,424.3 381.6,424.3 381.1,424.2 380.6,424.1 380.1,424.1 379.6,424.0 379.1,424.0 378.6,424.0 378.1,423.9 377.6,423.9 377.1,423.9 376.6,423.9 376.1,423.9 375.6,423.9 375.1,423.9 374.6,423.9 374.1,423.9 373.6,423.9 373.1,423.9 372.5,423.9 372.0,424.0 371.4,424.0 370.8,424.0 370.3,424.1 369.7,424.1 369.2,424.2 368.7,424.2 368.1,424.3 367.6,424.3 367.0,424.4 366.5,424.5 365.9,424.6 365.4,424.7 364.9,424.8 364.3,424.8 363.8,424.9 363.3,425.1 362.8,425.2 362.2,425.3 361.7,425.4 361.2,425.5 360.7,425.6 360.2,425.8 359.7,425.9 359.2,426.1 358.7,426.2 358.2,426.3 357.7,426.5 357.2,426.7 356.7,426.8 356.3,427.0 355.8,427.2 355.3,427.3 354.9,427.5 354.4,427.7 354.0,427.9 353.5,428.1 353.1,428.3 352.6,428.5 352.2,428.7 351.8,428.9 351.4,429.1 351.0,429.3 350.6,429.5 350.2,429.7 349.8,429.9 349.4,430.2 349.0,430.4 348.7,430.6 348.3,430.9 347.9,431.1 347.6,431.3 347.3,431.6 346.9,431.8 346.6,432.1 346.3,432.3 346.0,432.6 345.7,432.9 345.4,433.1 345.1,433.4 344.8,433.7 344.5,433.9 344.3,434.2 344.0,434.5 343.8,434.7 343.6,435.0 343.3,435.3 343.1,435.6 342.9,435.9 342.7,436.2 342.5,436.4 342.3,436.7 342.2,437.0 342.0,437.3 341.9,437.6 341.7,437.9 341.6,438.2 341.5,438.5 341.4,438.8 341.2,439.1 341.2,439.4 341.1,439.7 341.0,440.0 340.9,440.3 340.9,440.6 340.8,440.9 340.8,441.2 340.8,441.5 340.8,441.8 340.7,442.1 340.8,442.4 340.8,442.7 340.8,443.0 340.8,443.3 340.9,443.6 340.9,443.9 341.0,444.2 341.1,444.5 341.2,444.8 341.3,445.1 341.4,445.4 341.5,445.7 341.6,446.0 341.7,446.3 341.9,446.6 342.0,446.9 342.2,447.1 342.4,447.4 342.6,447.7 342.8,448.0 343.0,448.3 343.2,448.6 343.4,448.8 343.6,449.1 343.9,449.4 344.1,449.7 344.4,449.9 344.7,450.2 345.0,450.4 345.3,450.7 345.6,451.0 345.9,451.2 346.2,451.5 346.5,451.7 346.8,451.9 347.2,452.2"/><polyline points="341.2,456.0 341.7,456.3 342.1,456.6 342.6,456.9 343.0,457.2 343.5,457.5 344.0,457.7 344.5,458.0 345.0,458.3 345.5,458.5 346.0,458.8 346.5,459.0 347.1,459.2 347.6,459.5 348.2,459.7 348.8,459.9 349.3,460.2 349.9,460.4 350.5,460.6 351.1,460.8 351.7,461.0 352.3,461.2 352.9,461.3 353.6,461.5 354.2,461.7 354.8,461.9 355.5,462.0 356.2,462.2 356.8,462.3 357.5,462.4 358.1,462.6 358.8,462.7 359.5,462.8 360.2,462.9 360.9,463.0 361.6,463.1 362.3,463.2 363.0,463.3 363.7,463.4 364.4,463.5 365.1,463.5 365.8,463.6 366.6,463.6 367.3,463.7 368.0,463.7 368.7,463.8 369.5,463.8 370.2,463.8 370.9,463.8 371.6,463.8 372.4,463.8 373.1,463.8 373.8,463.8 374.5,463.7 375.2,463.7 375.9,463.7 376.5,463.6 377.2,463.6 377.8,463.5 378.5,463.4 379.2,463.4 379.8,463.3 380.5,463.2 381.1,463.1 381.8,463.0 382.4,462.9 383.1,462.8 383.7,462.6 384.3,462.5 385.0,462.4 385.6,462.2 386.2,462.1 386.8,461.9 387.5,461.8 388.1,461.6 388.7,461.4 389.3,461.2 389.9,461.0 390.5,460.9 391.0,460.7 391.6,460.4 392.2,460.2 392.8,460.0 393.3,459.8 393.9,459.6 394.4,459.3 394.9,459.1 395.5,458.9 396.0,458.6 396.5,458.4 397.0,458.1 397.5,457.8 398.0,457.6 398.5,457.3 399.0,457.0 399.4,456.7 399.9,456.4 400.4,456.2 400.8,455.9 401.2,455.6 401.6,455.3 402.1,455.0 402.5,454.6 402.9,454.3 403.2,454.0 403.6,453.7 404.0,453.4 404.3,453.0 404.7,452.7 405.0,452.4 405.3,452.0 405.7,451.7 406.0,451.4 406.3,451.0 406.5,450.7 406.8,450.3 407.1,450.0 407.3,449.6 407.6,449.3 407.8,448.9 408.0,448.5 408.2,448.2 408.4,447.8 408.6,447.5 408.8,447.1 409.0,446.7 409.1,446.4 409.3,446.0 409.4,445.6 409.5,445.3 409.6,444.9 409.7,444.5 409.8,444.1 409.9,443.8 409.9,443.4 410.0,443.0 410.0,442.7 410.1,442.3 410.1,441.9 410.1,441.6 410.1,441.2 410.1,440.8 410.1,440.5 410.0,440.1 410.0,439.7 409.9,439.4 409.8,439.0 409.8,438.6 409.7,438.3 409.6,437.9 409.5,437.6 409.3,437.2 409.2,436.9 409.1,436.5 408.9,436.2 408.8,435.8 408.6,435.5 408.4,435.1 408.2,434.8 408.0,434.4 407.8,434.1 407.6,433.8 407.3,433.5 407.1,433.1 406.8,432.8 406.6,432.5 406.3,432.2 406.0,431.9 405.7,431.5 405.4,431.2 405.1,430.9 404.8,430.6 404.5,430.3 404.1,430.0 403.8,429.8 403.4,429.5 403.1,429.2 402.7,428.9 402.3,428.6 402.0,428.4 401.6,428.1 401.2,427.9 400.8,427.6 400.3,427.4 399.9,427.1 399.5,426.9 399.1,426.6 398.6,426.4 398.2,426.2 397.7,425.9 397.2,425.7 396.8,425.5 396.3,425.3 395.8,425.1 395.3,424.9 394.8,424.7 394.3,424.5 393.8,424.3 393.3,424.2 392.8,424.0 392.3,423.8 391.7,423.7 391.2,423.5 390.7,423.4 390.1,423.2 389.6,423.1 389.0,422.9 388.5,422.8 387.9,422.7 387.3,422.6 386.8,422.5 386.2,422.3 385.6,422.2 385.1,422.2 384.5,422.1 383.9,422.0 383.3,421.9 382.7,421.8 382.1,421.8 381.5,421.7 381.0,421.6 380.4,421.6 379.8,421.6 379.2,421.5 378.6,421.5 378.0,421.5 377.3,421.4 376.7,421.4 376.1,421.4 375.5,421.4 374.9,421.4 374.3,421.4 373.7,421.5 373.0,421.5 372.3,421.5 371.7,421.5 371.0,421.6 370.3,421.6 369.7,421.7 369.0,421.7 368.3,421.8 367.7,421.9 367.0,421.9 366.4,422.0 365.7,422.1 365.0,422.2 364.4,422.3 363.7,422.4 363.1,422.5 362.4,422.6 361.8,422.7 361.2,422.9 360.5,423.0 359.9,423.1 359.3,423.3 358.6,423.4 358.0,423.6 357.4,423.7 356.8,423.9 356.2,424.1 355.6,424.2 355.0,424.4 354.4,424.6 353.8,424.8 353.2,425.0 352.6,425.2 352.1,425.4 351.5,425.6 350.9,425.8 350.4,426.0 349.8,426.3 349.3,426.5 348.7,426.7 348.2,427.0 347.7,427.2 347.2,427.5 346.7,427.7 346.2,428.0 345.7,428.2 345.2,428.5 344.7,428.8 344.3,429.1 343.8,429.3 343.3,429.6 342.9,429.9 342.5,430.2 342.0,430.5 341.6,430.8 341.2,431.1 340.8,431.4 340.4,431.7 340.1,432.0 339.7,432.3 339.3,432.6 339.0,433.0 338.6,433.3 338.3,433.6 338.0,433.9 337.7,434.3 337.4,434.6 337.1,435.0 336.8,435.3 336.5,435.6 336.3,436.0 336.0,436.3 335.8,436.7 335.6,437.0 335.4,437.4 335.1,437.7 335.0,438.1 334.8,438.5 334.6,438.8 334.5,439.2 334.3,439.5 334.2,439.9 334.1,440.3 333.9,440.6 333.9,441.0 333.8,441.4 333.7,441.7 333.6,442.1 333.6,442.5 333.5,442.9 333.5,443.2 333.5,443.6 333.5,444.0 333.5,444.3 333.6,444.7 333.6,445.1 333.6,445.5 333.7,445.8 333.8,446.2 333.9,446.6 334.0,446.9 334.1,447.3 334.2,447.7 334.3,448.0 334.5,448.4 334.6,448.7 334.8,449.1 335.0,449.5 335.2,449.8 335.4,450.2 335.6,450.5 335.9,450.9 336.1,451.2 336.4,451.6 336.7,451.9 336.9,452.2 337.2,452.6 337.5,452.9 337.9,453.2 338.2,453.6 338.5,453.9 338.9,454.2 339.2,454.5 339.6,454.8 340.0,455.1 340.4,455.4 340.8,455.7 341.2,456.0"/><polyline points="334.9,460.4 335.4,460.7 335.9,461.1 336.5,461.4 337.0,461.7 337.6,462.1 338.2,462.4 338.7,462.7 339.3,463.0 340.0,463.3 340.6,463.7 341.2,464.0 341.9,464.2 342.5,464.5 343.2,464.8 343.9,465.1 344.5,465.3 345.2,465.6 345.9,465.9 346.7,466.1 347.4,466.3 348.1,466.6 348.9,466.8 349.6,467.0 350.4,467.2 351.2,467.4 351.9,467.6 352.7,467.8 353.5,468.0 354.3,468.1 355.1,468.3 355.9,468.4 356.7,468.6 357.6,468.7 358.4,468.9 359.2,469.0 360.1,469.1 360.9,469.2 361.8,469.3 362.6,469.4 363.5,469.5 364.4,469.5 365.2,469.6 366.1,469.6 367.0,469.7 367.8,469.7 368.7,469.7 369.6,469.8 370.5,469.8 371.3,469.8 372.2,469.8 373.1,469.8 374.0,469.7 374.8,469.7 375.6,469.7 376.4,469.6 377.2,469.5 378.0,469.5 378.8,469.4 379.6,469.3 380.4,469.2 381.1,469.1 381.9,469.0 382.7,468.9 383.5,468.8 384.3,468.6 385.0,468.5 385.8,468.3 386.6,468.2 387.3,468.0 388.1,467.9 388.8,467.7 389.6,467.5 390.3,467.3 391.0,467.1 391.8,466.9 392.5,466.6 393.2,466.4 393.9,466.2 394.6,465.9 395.3,465.7 396.0,465.4 396.7,465.2 397.3,464.9 398.0,464.6 398.6,464.4 399.3,464.1 399.9,463.8 400.5,463.5 401.2,463.2 401.8,462.8 402.4,462.5 403.0,462.2 403.5,461.9 404.1,461.5 404.7,461.2 405.2,460.9 405.7,460.5 406.3,460.1 406.8,459.8 407.3,459.4 407.8,459.0 408.2,458.7 408.7,458.3 409.2,457.9 409.6,457.5 410.0,457.1 410.5,456.7 410.9,456.3 411.3,455.9 411.7,455.5 412.0,455.1 412.4,454.7 412.7,454.3 413.1,453.9 413.4,453.4 413.7,453.0 414.0,452.6 414.3,452.2 414.5,451.7 414.8,451.3 415.0,450.9 415.3,450.4 415.5,450.0 415.7,449.6 415.9,449.1 416.1,448.7 416.2,448.3 416.4,447.8 416.5,447.4 416.6,446.9 416.7,446.5 416.8,446.0 416.9,445.6 417.0,445.2 417.0,444.7 417.1,444.3 417.1,443.8 417.1,443.4 417.1,442.9 417.1,442.5 417.1,442.1 417.1,441.6 417.0,441.2 417.0,440.8 416.9,440.3 416.8,439.9 416.7,439.5 416.6,439.0 416.5,438.6 416.3,438.2 416.2,437.8 416.0,437.3 415.8,436.9 415.6,436.5 415.4,436.1 415.2,435.7 415.0,435.3 414.8,434.9 414.5,434.5 414.3,434.1 414.0,433.7 413.7,433.3 413.4,432.9 413.1,432.5 412.8,432.1 412.5,431.8 412.1,431.4 411.8,431.0 411.4,430.7 411.1,430.3 410.7,430.0 410.3,429.6 409.9,429.3 409.5,428.9 409.0,428.6 408.6,428.2 408.2,427.9 407.7,427.6 407.3,427.3 406.8,427.0 406.3,426.7 405.8,426.4 405.3,426.1 404.8,425.8 404.3,425.5 403.8,425.2 403.3,424.9 402.7,424.7 402.2,424.4 401.6,424.2 401.1,423.9 400.5,423.7 399.9,423.4 399.4,423.2 398.8,423.0 398.2,422.7 397.6,422.5 397.0,422.3 396.4,422.1 395.7,421.9 395.1,421.7 394.5,421.5 393.8,421.4 393.2,421.2 392.6,421.0 391.9,420.9 391.2,420.7 390.6,420.6 389.9,420.4 389.2,420.3 388.6,420.2 387.9,420.1 387.2,419.9 386.5,419.8 385.8,419.7 385.1,419.6 384.5,419.6 383.8,419.5 383.1,419.4 382.4,419.3 381.6,419.3 380.9,419.2 380.2,419.2 379.5,419.2 378.8,419.1 378.1,419.1 377.4,419.1 376.7,419.1 375.9,419.1 375.2,419.1 374.5,419.1 373.8,419.1 373.0,419.1 372.2,419.2 371.4,419.2 370.6,419.3 369.8,419.3 369.0,419.4 368.2,419.4 367.5,419.5 366.7,419.6 365.9,419.7 365.1,419.8 364.3,419.9 363.6,420.0 362.8,420.1 362.0,420.2 361.2,420.4 360.5,420.5 359.7,420.6 359.0,420.8 358.2,420.9 357.5,421.1 356.7,421.3 356.0,421.4 355.2,421.6 354.5,421.8 353.8,422.0 353.1,422.2 352.3,422.4 351.6,422.6 350.9,422.8 350.2,423.1 349.5,423.3 348.8,423.5 348.2,423.8 347.5,424.0 346.8,424.3 346.2,424.5 345.5,424.8 344.9,425.1 344.2,425.3 343.6,425.6 343.0,425.9 342.4,426.2 341.8,426.5 341.2,426.8 340.6,427.1 340.0,427.4 339.4,427.8 338.9,428.1 338.3,428.4 337.8,428.7 337.3,429.1 336.8,429.4 336.2,429.8 335.7,430.1 335.3,430.5 334.8,430.8 334.3,431.2 333.9,431.6 333.4,432.0 333.0,432.3 332.6,432.7 332.1,433.1 331.7,433.5 331.4,433.9 331.0,434.3 330.6,434.7 330.3,435.1 329.9,435.5 329.6,435.9 329.3,436.3 329.0,436.7 328.7,437.1 328.4,437.6 328.2,438.0 327.9,438.4 327.7,438.8 327.5,439.3 327.3,439.7 327.1,440.1 326.9,440.5 326.7,441.0 326.6,441.4 326.4,441.9 326.3,442.3 326.2,442.7 326.1,443.2 326.0,443.6 326.0,444.1 325.9,444.5 325.9,445.0 325.9,445.4 325.9,445.8 325.9,446.3 325.9,446.7 325.9,447.2 326.0,447.6 326.0,448.1 326.1,448.5 326.2,448.9 326.3,449.4 326.5,449.8 326.6,450.3 326.8,450.7 326.9,451.1 327.1,451.6 327.3,452.0 327.5,452.4 327.8,452.8 328.0,453.3 328.3,453.7 328.6,454.1 328.8,454.5 329.1,454.9 329.5,455.4 329.8,455.8 330.1,456.2 330.5,456.6 330.9,457.0 331.3,457.4 331.7,457.7 332.1,458.1 332.5,458.5 333.0,458.9 333.4,459.3 333.9,459.6 334.4,460.0 334.9,460.4"/><polyline points="328.7,465.0 329.3,465.4 329.9,465.8 330.5,466.2 331.1,466.6 331.8,467.0 332.5,467.4 333.1,467.8 333.8,468.1 334.5,468.5 335.3,468.9 336.0,469.2 336.7,469.6 337.5,469.9 338.3,470.2 339.1,470.5 339.9,470.8 340.7,471.1 341.5,471.4 342.3,471.7 343.2,472.0 344.0,472.3 344.9,472.5 345.8,472.8 346.6,473.0 347.5,473.3 348.4,473.5 349.4,473.7 350.3,473.9 351.2,474.1 352.1,474.3 353.1,474.5 354.0,474.7 355.0,474.8 356.0,475.0 357.0,475.1 357.9,475.3 358.9,475.4 359.9,475.5 360.9,475.6 361.9,475.7 362.9,475.8 363.9,475.8 364.9,475.9 365.9,476.0 367.0,476.0 368.0,476.0 369.0,476.1 370.0,476.1 371.1,476.1 372.1,476.1 373.1,476.0 374.1,476.0 375.1,476.0 376.0,475.9 376.9,475.9 377.9,475.8 378.8,475.7 379.7,475.6 380.6,475.5 381.6,475.4 382.5,475.3 383.4,475.2 384.3,475.0 385.2,474.9 386.1,474.7 387.0,474.6 387.9,474.4 388.8,474.2 389.7,474.0 390.6,473.8 391.4,473.6 392.3,473.4 393.2,473.1 394.0,472.9 394.9,472.6 395.7,472.4 396.5,472.1 397.3,471.8 398.2,471.6 399.0,471.3 399.8,471.0 400.5,470.6 401.3,470.3 402.1,470.0 402.8,469.7 403.6,469.3 404.3,469.0 405.0,468.6 405.8,468.3 406.5,467.9 407.1,467.5 407.8,467.1 408.5,466.8 409.2,466.4 409.8,466.0 410.4,465.6 411.0,465.1 411.6,464.7 412.2,464.3 412.8,463.9 413.4,463.4 413.9,463.0 414.5,462.6 415.0,462.1 415.5,461.7 416.0,461.2 416.5,460.7 417.0,460.3 417.4,459.8 417.9,459.3 418.3,458.8 418.7,458.4 419.1,457.9 419.5,457.4 419.8,456.9 420.2,456.4 420.5,455.9 420.8,455.4 421.1,454.9 421.4,454.4 421.7,453.9 422.0,453.4 422.2,452.9 422.4,452.4 422.6,451.9 422.8,451.3 423.0,450.8 423.2,450.3 423.3,449.8 423.5,449.3 423.6,448.8 423.7,448.3 423.8,447.7 423.9,447.2 423.9,446.7 424.0,446.2 424.0,445.7 424.0,445.2 424.0,444.7 424.0,444.1 424.0,443.6 423.9,443.1 423.8,442.6 423.8,442.1 423.7,441.6 423.6,441.1 423.4,440.6 423.3,440.1 423.1,439.6 423.0,439.1 422.8,438.7 422.6,438.2 422.4,437.7 422.2,437.2 421.9,436.7 421.7,436.3 421.4,435.8 421.1,435.3 420.9,434.9 420.5,434.4 420.2,433.9 419.9,433.5 419.6,433.1 419.2,432.6 418.8,432.2 418.4,431.7 418.0,431.3 417.6,430.9 417.2,430.5 416.8,430.1 416.3,429.7 415.9,429.3 415.4,428.9 414.9,428.5 414.5,428.1 414.0,427.7 413.4,427.3 412.9,427.0 412.4,426.6 411.8,426.2 411.3,425.9 410.7,425.5 410.2,425.2 409.6,424.9 409.0,424.5 408.4,424.2 407.8,423.9 407.2,423.6 406.5,423.3 405.9,423.0 405.2,422.7 404.6,422.4 403.9,422.2 403.3,421.9 402.6,421.6 401.9,421.4 401.2,421.1 400.5,420.9 399.8,420.7 399.1,420.4 398.4,420.2 397.6,420.0 396.9,419.8 396.2,419.6 395.4,419.4 394.7,419.2 393.9,419.1 393.2,418.9 392.4,418.7 391.6,418.6 390.9,418.4 390.1,418.3 389.3,418.2 388.5,418.1 387.7,417.9 386.9,417.8 386.1,417.7 385.3,417.7 384.5,417.6 383.7,417.5 382.9,417.4 382.1,417.4 381.3,417.3 380.5,417.3 379.6,417.3 378.8,417.2 378.0,417.2 377.2,417.2 376.4,417.2 375.5,417.2 374.7,417.2 373.9,417.2 373.0,417.3 372.1,417.3 371.2,417.3 370.3,417.4 369.4,417.5 368.4,417.5 367.5,417.6 366.6,417.7 365.7,417.8 364.8,417.9 363.9,418.0 363.1,418.1 362.2,418.2 361.3,418.4 360.4,418.5 359.5,418.6 358.6,418.8 357.8,419.0 356.9,419.1 356.0,419.3 355.2,419.5 354.3,419.7 353.5,419.9 352.6,420.1 351.8,420.3 350.9,420.5 350.1,420.8 349.3,421.0 348.5,421.2 347.6,421.5 346.8,421.7 346.0,422.0 345.3,422.3 344.5,422.6 343.7,422.8 342.9,423.1 342.2,423.4 341.4,423.7 340.7,424.0 339.9,424.4 339.2,424.7 338.5,425.0 337.8,425.4 337.1,425.7 336.4,426.0 335.7,426.4 335.1,426.8 334.4,427.1 333.8,427.5 333.1,427.9 332.5,428.3 331.9,428.7 331.3,429.0 330.7,429.4 330.1,429.9 329.5,430.3 329.0,430.7 328.4,431.1 327.9,431.5 327.4,432.0 326.9,432.4 326.4,432.8 325.9,433.3 325.5,433.7 325.0,434.2 324.6,434.6 324.1,435.1 323.7,435.6 323.3,436.0 323.0,436.5 322.6,437.0 322.2,437.5 321.9,437.9 321.6,438.4 321.3,438.9 321.0,439.4 320.7,439.9 320.4,440.4 320.2,440.9 320.0,441.4 319.7,441.9 319.5,442.4 319.4,442.9 319.2,443.4 319.0,443.9 318.9,444.4 318.8,444.9 318.7,445.4 318.6,446.0 318.5,446.5 318.5,447.0 318.5,447.5 318.4,448.0 318.5,448.5 318.5,449.1 318.5,449.6 318.6,450.1 318.6,450.6 318.7,451.1 318.8,451.6 318.9,452.1 319.1,452.7 319.2,453.2 319.4,453.7 319.6,454.2 319.8,454.7 320.0,455.2 320.3,455.7 320.5,456.2 320.8,456.7 321.1,457.2 321.4,457.7 321.8,458.2 322.1,458.6 322.5,459.1 322.8,459.6 323.2,460.1 323.7,460.5 324.1,461.0 324.5,461.5 325.0,461.9 325.5,462.4 326.0,462.8 326.5,463.3 327.0,463.7 327.6,464.1 328.1,464.6 328.7,465.0"/><polyline points="322.0,470.2 322.7,470.7 323.4,471.2 324.1,471.6 324.8,472.1 325.6,472.5 326.3,473.0 327.1,473.4 327.9,473.9 328.7,474.3 329.5,474.7 330.4,475.1 331.2,475.5 332.1,475.9 333.0,476.3 333.9,476.7 334.8,477.0 335.7,477.4 336.7,477.7 337.6,478.1 338.6,478.4 339.6,478.7 340.6,479.0 341.6,479.3 342.6,479.6 343.6,479.9 344.7,480.1 345.7,480.4 346.8,480.6 347.9,480.9 349.0,481.1 350.0,481.3 351.1,481.5 352.3,481.7 353.4,481.9 354.5,482.0 355.6,482.2 356.8,482.3 357.9,482.5 359.1,482.6 360.2,482.7 361.4,482.8 362.5,482.9 363.7,482.9 364.9,483.0 366.1,483.0 367.2,483.1 368.4,483.1 369.6,483.1 370.8,483.1 372.0,483.1 373.2,483.1 374.3,483.1 375.4,483.0 376.5,483.0 377.5,482.9 378.6,482.8 379.7,482.7 380.8,482.6 381.8,482.5 382.9,482.4 383.9,482.2 385.0,482.1 386.1,481.9 387.1,481.7 388.1,481.6 389.2,481.4 390.2,481.2 391.2,480.9 392.3,480.7 393.3,480.5 394.3,480.2 395.3,480.0 396.3,479.7 397.2,479.4 398.2,479.1 399.2,478.8 400.1,478.5 401.1,478.2 402.0,477.8 402.9,477.5 403.8,477.1 404.7,476.8 405.6,476.4 406.5,476.0 407.4,475.7 408.2,475.3 409.1,474.9 409.9,474.4 410.7,474.0 411.5,473.6 412.3,473.2 413.1,472.7 413.9,472.3 414.6,471.8 415.4,471.3 416.1,470.9 416.8,470.4 417.5,469.9 418.1,469.4 418.8,468.9 419.4,468.4 420.1,467.9 420.7,467.4 421.3,466.8 421.9,466.3 422.4,465.8 423.0,465.2 423.5,464.7 424.0,464.2 424.5,463.6 425.0,463.1 425.5,462.5 425.9,461.9 426.3,461.4 426.8,460.8 427.1,460.2 427.5,459.7 427.9,459.1 428.2,458.5 428.5,457.9 428.9,457.3 429.1,456.7 429.4,456.2 429.7,455.6 429.9,455.0 430.1,454.4 430.3,453.8 430.5,453.2 430.7,452.6 430.8,452.0 430.9,451.4 431.0,450.8 431.1,450.2 431.2,449.6 431.3,449.1 431.3,448.5 431.3,447.9 431.3,447.3 431.3,446.7 431.3,446.1 431.2,445.5 431.2,444.9 431.1,444.4 431.0,443.8 430.9,443.2 430.8,442.6 430.6,442.1 430.4,441.5 430.3,440.9 430.1,440.4 429.8,439.8 429.6,439.3 429.4,438.7 429.1,438.2 428.8,437.6 428.5,437.1 428.2,436.5 427.9,436.0 427.6,435.5 427.2,435.0 426.8,434.4 426.4,433.9 426.0,433.4 425.6,432.9 425.2,432.4 424.8,431.9 424.3,431.4 423.8,431.0 423.3,430.5 422.8,430.0 422.3,429.5 421.8,429.1 421.3,428.6 420.7,428.2 420.2,427.8 419.6,427.3 419.0,426.9 418.4,426.5 417.8,426.1 417.2,425.7 416.5,425.3 415.9,424.9 415.2,424.5 414.6,424.1 413.9,423.7 413.2,423.4 412.5,423.0 411.8,422.7 411.1,422.3 410.4,422.0 409.6,421.7 408.9,421.3 408.1,421.0 407.4,420.7 406.6,420.4 405.8,420.1 405.0,419.9 404.2,419.6 403.4,419.3 402.6,419.1 401.8,418.8 401.0,418.6 400.1,418.4 399.3,418.1 398.4,417.9 397.6,417.7 396.7,417.5 395.9,417.3 395.0,417.2 394.1,417.0 393.3,416.8 392.4,416.7 391.5,416.5 390.6,416.4 389.7,416.3 388.8,416.1 387.9,416.0 387.0,415.9 386.1,415.8 385.2,415.8 384.2,415.7 383.3,415.6 382.4,415.6 381.5,415.5 380.5,415.5 379.6,415.5 378.7,415.4 377.7,415.4 376.8,415.4 375.9,415.4 374.9,415.4 374.0,415.5 373.0,415.5 372.0,415.5 370.9,415.6 369.9,415.6 368.9,415.7 367.9,415.8 366.8,415.9 365.8,416.0 364.8,416.1 363.8,416.2 362.7,416.3 361.7,416.4 360.7,416.6 359.7,416.7 358.7,416.9 357.7,417.1 356.7,417.2 355.7,417.4 354.7,417.6 353.8,417.8 352.8,418.0 351.8,418.2 350.8,418.5 349.9,418.7 348.9,418.9 348.0,419.2 347.0,419.4 346.1,419.7 345.1,420.0 344.2,420.3 343.3,420.6 342.4,420.9 341.5,421.2 340.6,421.5 339.7,421.8 338.9,422.1 338.0,422.5 337.1,422.8 336.3,423.2 335.4,423.5 334.6,423.9 333.8,424.3 333.0,424.7 332.2,425.0 331.4,425.4 330.6,425.8 329.9,426.3 329.1,426.7 328.4,427.1 327.6,427.5 326.9,428.0 326.2,428.4 325.5,428.9 324.8,429.3 324.2,429.8 323.5,430.2 322.9,430.7 322.3,431.2 321.7,431.7 321.1,432.2 320.5,432.7 319.9,433.2 319.4,433.7 318.8,434.2 318.3,434.7 317.8,435.2 317.3,435.7 316.8,436.3 316.4,436.8 315.9,437.3 315.5,437.9 315.1,438.4 314.7,439.0 314.3,439.5 313.9,440.1 313.6,440.7 313.3,441.2 313.0,441.8 312.7,442.4 312.4,442.9 312.2,443.5 311.9,444.1 311.7,444.7 311.5,445.3 311.3,445.8 311.2,446.4 311.0,447.0 310.9,447.6 310.8,448.2 310.7,448.8 310.6,449.4 310.6,450.0 310.6,450.6 310.6,451.2 310.6,451.8 310.6,452.4 310.6,453.0 310.7,453.5 310.8,454.1 310.9,454.7 311.0,455.3 311.2,455.9 311.4,456.5 311.6,457.1 311.8,457.7 312.0,458.3 312.2,458.8 312.5,459.4 312.8,460.0 313.1,460.6 313.4,461.1 313.8,461.7 314.2,462.3 314.5,462.8 315.0,463.4 315.4,463.9 315.8,464.5 316.3,465.0 316.8,465.6 317.3,466.1 317.8,466.6 318.4,467.2 318.9,467.7 319.5,468.2 320.1,468.7 320.7,469.2 321.4,469.7 322.0,470.2"/><polyline points="315.2,475.9 316.0,476.5 316.7,477.0 317.5,477.6 318.4,478.1 319.2,478.6 320.0,479.1 320.9,479.6 321.8,480.1 322.7,480.6 323.7,481.1 324.6,481.6 325.6,482.0 326.6,482.5 327.6,482.9 328.6,483.3 329.6,483.8 330.7,484.2 331.8,484.6 332.8,485.0 333.9,485.3 335.1,485.7 336.2,486.1 337.3,486.4 338.5,486.7 339.7,487.0 340.8,487.3 342.0,487.6 343.2,487.9 344.5,488.2 345.7,488.4 346.9,488.7 348.2,488.9 349.4,489.1 350.7,489.3 352.0,489.5 353.3,489.7 354.6,489.9 355.9,490.0 357.2,490.2 358.5,490.3 359.8,490.4 361.1,490.5 362.5,490.6 363.8,490.7 365.1,490.7 366.5,490.8 367.8,490.8 369.2,490.8 370.5,490.8 371.9,490.8 373.2,490.8 374.5,490.7 375.7,490.7 377.0,490.6 378.2,490.5 379.4,490.4 380.6,490.3 381.9,490.2 383.1,490.1 384.3,489.9 385.5,489.8 386.7,489.6 387.9,489.4 389.1,489.2 390.3,489.0 391.4,488.8 392.6,488.5 393.8,488.3 394.9,488.0 396.1,487.7 397.2,487.4 398.4,487.1 399.5,486.8 400.6,486.5 401.7,486.2 402.8,485.8 403.9,485.5 404.9,485.1 406.0,484.7 407.0,484.3 408.1,483.9 409.1,483.5 410.1,483.1 411.1,482.6 412.1,482.2 413.1,481.7 414.0,481.3 414.9,480.8 415.9,480.3 416.8,479.8 417.7,479.3 418.5,478.8 419.4,478.3 420.3,477.7 421.1,477.2 421.9,476.7 422.7,476.1 423.5,475.6 424.2,475.0 425.0,474.4 425.7,473.8 426.4,473.3 427.1,472.7 427.7,472.1 428.4,471.5 429.0,470.8 429.6,470.2 430.2,469.6 430.8,469.0 431.4,468.4 431.9,467.7 432.4,467.1 432.9,466.4 433.4,465.8 433.8,465.2 434.3,464.5 434.7,463.8 435.1,463.2 435.5,462.5 435.8,461.9 436.2,461.2 436.5,460.5 436.8,459.9 437.0,459.2 437.3,458.5 437.5,457.8 437.7,457.2 437.9,456.5 438.1,455.8 438.3,455.2 438.4,454.5 438.5,453.8 438.6,453.1 438.7,452.5 438.7,451.8 438.8,451.1 438.8,450.5 438.8,449.8 438.8,449.1 438.7,448.5 438.7,447.8 438.6,447.1 438.5,446.5 438.3,445.8 438.2,445.2 438.0,444.5 437.9,443.9 437.7,443.2 437.5,442.6 437.2,442.0 437.0,441.3 436.7,440.7 436.4,440.1 436.1,439.5 435.8,438.9 435.5,438.2 435.1,437.6 434.7,437.0 434.3,436.4 433.9,435.9 433.5,435.3 433.1,434.7 432.6,434.1 432.1,433.6 431.6,433.0 431.1,432.4 430.6,431.9 430.1,431.4 429.5,430.8 429.0,430.3 428.4,429.8 427.8,429.3 427.2,428.8 426.6,428.3 425.9,427.8 425.3,427.3 424.6,426.8 423.9,426.3 423.2,425.9 422.5,425.4 421.8,425.0 421.1,424.5 420.4,424.1 419.6,423.7 418.8,423.3 418.1,422.8 417.3,422.4 416.5,422.1 415.7,421.7 414.9,421.3 414.0,420.9 413.2,420.6 412.3,420.2 411.5,419.9 410.6,419.6 409.7,419.2 408.9,418.9 408.0,418.6 407.1,418.3 406.2,418.1 405.2,417.8 404.3,417.5 403.4,417.3 402.4,417.0 401.5,416.8 400.5,416.5 399.6,416.3 398.6,416.1 397.6,415.9 396.7,415.7 395.7,415.5 394.7,415.4 393.7,415.2 392.7,415.1 391.7,414.9 390.7,414.8 389.7,414.7 388.7,414.6 387.6,414.5 386.6,414.4 385.6,414.3 384.6,414.2 383.5,414.1 382.5,414.1 381.5,414.0 380.4,414.0 379.4,414.0 378.3,414.0 377.3,414.0 376.2,414.0 375.2,414.0 374.2,414.0 373.0,414.1 371.9,414.1 370.7,414.2 369.6,414.2 368.4,414.3 367.3,414.4 366.1,414.5 365.0,414.6 363.9,414.7 362.7,414.8 361.6,415.0 360.4,415.1 359.3,415.3 358.2,415.4 357.1,415.6 355.9,415.8 354.8,416.0 353.7,416.2 352.6,416.4 351.5,416.6 350.4,416.9 349.3,417.1 348.2,417.4 347.2,417.6 346.1,417.9 345.0,418.2 344.0,418.5 342.9,418.8 341.9,419.1 340.8,419.4 339.8,419.7 338.8,420.0 337.8,420.4 336.8,420.7 335.8,421.1 334.8,421.5 333.8,421.8 332.9,422.2 331.9,422.6 331.0,423.0 330.0,423.4 329.1,423.9 328.2,424.3 327.3,424.7 326.4,425.2 325.5,425.6 324.7,426.1 323.8,426.6 323.0,427.0 322.2,427.5 321.4,428.0 320.6,428.5 319.8,429.0 319.0,429.5 318.3,430.0 317.5,430.6 316.8,431.1 316.1,431.6 315.4,432.2 314.7,432.7 314.1,433.3 313.4,433.8 312.8,434.4 312.2,435.0 311.6,435.6 311.0,436.2 310.4,436.8 309.9,437.3 309.4,438.0 308.9,438.6 308.4,439.2 307.9,439.8 307.4,440.4 307.0,441.0 306.6,441.7 306.2,442.3 305.8,442.9 305.5,443.6 305.1,444.2 304.8,444.9 304.5,445.5 304.2,446.2 304.0,446.8 303.7,447.5 303.5,448.2 303.3,448.8 303.2,449.5 303.0,450.2 302.9,450.8 302.8,451.5 302.7,452.2 302.6,452.8 302.6,453.5 302.6,454.2 302.6,454.9 302.6,455.5 302.6,456.2 302.7,456.9 302.8,457.6 302.9,458.2 303.0,458.9 303.2,459.6 303.4,460.3 303.6,460.9 303.8,461.6 304.1,462.3 304.3,462.9 304.6,463.6 304.9,464.2 305.3,464.9 305.6,465.6 306.0,466.2 306.4,466.8 306.9,467.5 307.3,468.1 307.8,468.8 308.3,469.4 308.8,470.0 309.3,470.6 309.9,471.2 310.5,471.8 311.1,472.4 311.7,473.0 312.4,473.6 313.1,474.2 313.8,474.8 314.5,475.4 315.2,475.9"/><polyline points="308.6,481.9 309.4,482.6 310.3,483.2 311.1,483.8 312.0,484.4 313.0,485.0 313.9,485.6 314.9,486.1 315.9,486.7 316.9,487.3 317.9,487.8 319.0,488.3 320.1,488.9 321.2,489.4 322.3,489.9 323.4,490.4 324.6,490.8 325.8,491.3 326.9,491.7 328.2,492.2 329.4,492.6 330.6,493.0 331.9,493.4 333.2,493.8 334.4,494.2 335.8,494.5 337.1,494.9 338.4,495.2 339.8,495.5 341.1,495.8 342.5,496.1 343.9,496.4 345.3,496.7 346.7,496.9 348.1,497.2 349.5,497.4 351.0,497.6 352.4,497.8 353.9,497.9 355.4,498.1 356.8,498.2 358.3,498.4 359.8,498.5 361.3,498.6 362.8,498.6 364.3,498.7 365.8,498.8 367.3,498.8 368.8,498.8 370.3,498.8 371.8,498.8 373.3,498.8 374.8,498.7 376.1,498.7 377.5,498.6 378.9,498.5 380.2,498.4 381.6,498.3 383.0,498.1 384.3,498.0 385.7,497.8 387.0,497.6 388.4,497.4 389.7,497.2 391.1,497.0 392.4,496.7 393.7,496.5 395.0,496.2 396.3,495.9 397.6,495.6 398.9,495.3 400.2,495.0 401.4,494.6 402.7,494.3 403.9,493.9 405.2,493.5 406.4,493.1 407.6,492.7 408.8,492.3 410.0,491.9 411.1,491.4 412.3,491.0 413.4,490.5 414.5,490.0 415.6,489.5 416.7,489.0 417.8,488.5 418.9,488.0 419.9,487.4 420.9,486.9 422.0,486.3 422.9,485.8 423.9,485.2 424.9,484.6 425.8,484.0 426.7,483.4 427.6,482.8 428.5,482.2 429.4,481.5 430.2,480.9 431.0,480.2 431.8,479.6 432.6,478.9 433.4,478.3 434.1,477.6 434.8,476.9 435.5,476.2 436.2,475.5 436.8,474.8 437.5,474.1 438.1,473.4 438.7,472.7 439.2,472.0 439.8,471.3 440.3,470.5 440.8,469.8 441.3,469.1 441.7,468.3 442.1,467.6 442.5,466.9 442.9,466.1 443.3,465.4 443.6,464.6 444.0,463.9 444.2,463.1 444.5,462.4 444.8,461.6 445.0,460.9 445.2,460.1 445.4,459.3 445.5,458.6 445.7,457.8 445.8,457.1 445.9,456.3 446.0,455.6 446.0,454.8 446.0,454.1 446.0,453.3 446.0,452.6 446.0,451.9 445.9,451.1 445.8,450.4 445.7,449.6 445.6,448.9 445.5,448.2 445.3,447.5 445.1,446.7 444.9,446.0 444.7,445.3 444.4,444.6 444.2,443.9 443.9,443.2 443.6,442.5 443.2,441.8 442.9,441.1 442.5,440.4 442.1,439.8 441.7,439.1 441.3,438.4 440.9,437.8 440.4,437.1 439.9,436.5 439.4,435.8 438.9,435.2 438.4,434.6 437.8,433.9 437.3,433.3 436.7,432.7 436.1,432.1 435.5,431.5 434.8,431.0 434.2,430.4 433.5,429.8 432.9,429.2 432.2,428.7 431.5,428.2 430.7,427.6 430.0,427.1 429.2,426.6 428.5,426.1 427.7,425.6 426.9,425.1 426.1,424.6 425.3,424.1 424.4,423.6 423.6,423.2 422.7,422.7 421.9,422.3 421.0,421.9 420.1,421.4 419.2,421.0 418.3,420.6 417.3,420.2 416.4,419.8 415.4,419.5 414.5,419.1 413.5,418.8 412.5,418.4 411.6,418.1 410.6,417.8 409.6,417.4 408.5,417.1 407.5,416.9 406.5,416.6 405.5,416.3 404.4,416.0 403.4,415.8 402.3,415.5 401.2,415.3 400.2,415.1 399.1,414.9 398.0,414.7 396.9,414.5 395.8,414.3 394.7,414.2 393.6,414.0 392.5,413.9 391.4,413.7 390.3,413.6 389.1,413.5 388.0,413.4 386.9,413.3 385.8,413.2 384.6,413.1 383.5,413.1 382.3,413.0 381.2,413.0 380.1,413.0 378.9,413.0 377.8,413.0 376.6,413.0 375.5,413.0 374.3,413.0 373.1,413.1 371.8,413.1 370.6,413.2 369.3,413.3 368.0,413.3 366.8,413.4 365.5,413.5 364.3,413.7 363.0,413.8 361.7,413.9 360.5,414.1 359.2,414.2 358.0,414.4 356.8,414.6 355.5,414.8 354.3,415.0 353.1,415.2 351.8,415.4 350.6,415.6 349.4,415.9 348.2,416.1 347.0,416.4 345.8,416.7 344.6,417.0 343.4,417.3 342.2,417.6 341.1,417.9 339.9,418.2 338.8,418.6 337.6,418.9 336.5,419.3 335.4,419.6 334.2,420.0 333.1,420.4 332.0,420.8 331.0,421.2 329.9,421.6 328.8,422.0 327.8,422.5 326.7,422.9 325.7,423.4 324.7,423.8 323.7,424.3 322.7,424.8 321.7,425.3 320.7,425.8 319.7,426.3 318.8,426.8 317.9,427.3 317.0,427.9 316.1,428.4 315.2,429.0 314.3,429.5 313.4,430.1 312.6,430.7 311.8,431.2 311.0,431.8 310.2,432.4 309.4,433.0 308.7,433.6 307.9,434.3 307.2,434.9 306.5,435.5 305.8,436.1 305.1,436.8 304.5,437.4 303.9,438.1 303.2,438.8 302.6,439.4 302.1,440.1 301.5,440.8 301.0,441.5 300.5,442.2 300.0,442.9 299.5,443.6 299.1,444.3 298.6,445.0 298.2,445.7 297.9,446.4 297.5,447.1 297.2,447.9 296.8,448.6 296.5,449.3 296.3,450.1 296.0,450.8 295.8,451.5 295.6,452.3 295.4,453.0 295.3,453.8 295.1,454.5 295.0,455.3 294.9,456.0 294.9,456.8 294.8,457.5 294.8,458.3 294.8,459.0 294.9,459.8 294.9,460.6 295.0,461.3 295.1,462.1 295.3,462.8 295.4,463.6 295.6,464.3 295.8,465.1 296.1,465.8 296.4,466.6 296.6,467.3 297.0,468.1 297.3,468.8 297.7,469.5 298.1,470.3 298.5,471.0 298.9,471.7 299.4,472.4 299.9,473.2 300.4,473.9 300.9,474.6 301.5,475.3 302.1,476.0 302.7,476.7 303.4,477.3 304.0,478.0 304.7,478.7 305.5,479.4 306.2,480.0 307.0,480.7 307.7,481.3 308.6,481.9"/><polyline points="301.9,488.3 302.9,489.0 303.8,489.7 304.8,490.4 305.8,491.1 306.8,491.7 307.8,492.4 308.9,493.0 310.0,493.7 311.1,494.3 312.2,494.9 313.4,495.5 314.6,496.1 315.8,496.6 317.0,497.2 318.3,497.8 319.5,498.3 320.8,498.8 322.1,499.3 323.5,499.8 324.8,500.3 326.2,500.7 327.6,501.2 329.0,501.6 330.4,502.0 331.9,502.5 333.3,502.8 334.8,503.2 336.3,503.6 337.8,503.9 339.3,504.2 340.9,504.6 342.4,504.9 344.0,505.1 345.5,505.4 347.1,505.6 348.7,505.9 350.3,506.1 351.9,506.3 353.5,506.4 355.2,506.6 356.8,506.7 358.5,506.9 360.1,507.0 361.8,507.1 363.4,507.1 365.1,507.2 366.8,507.2 368.4,507.3 370.1,507.3 371.8,507.2 373.5,507.2 375.0,507.2 376.5,507.1 378.1,507.0 379.6,506.9 381.1,506.8 382.6,506.6 384.1,506.5 385.6,506.3 387.1,506.1 388.6,505.9 390.1,505.7 391.6,505.5 393.1,505.2 394.5,504.9 396.0,504.6 397.4,504.3 398.9,504.0 400.3,503.7 401.7,503.3 403.1,502.9 404.5,502.6 405.9,502.2 407.3,501.7 408.7,501.3 410.0,500.9 411.3,500.4 412.7,499.9 414.0,499.4 415.3,498.9 416.5,498.4 417.8,497.9 419.0,497.4 420.2,496.8 421.4,496.2 422.6,495.7 423.8,495.1 424.9,494.5 426.1,493.9 427.2,493.2 428.3,492.6 429.3,491.9 430.4,491.3 431.4,490.6 432.4,489.9 433.4,489.3 434.4,488.6 435.3,487.9 436.2,487.1 437.1,486.4 438.0,485.7 438.8,485.0 439.7,484.2 440.5,483.5 441.2,482.7 442.0,481.9 442.7,481.2 443.4,480.4 444.1,479.6 444.8,478.8 445.4,478.0 446.0,477.2 446.6,476.4 447.2,475.6 447.7,474.8 448.2,474.0 448.7,473.2 449.2,472.3 449.6,471.5 450.0,470.7 450.4,469.9 450.8,469.0 451.1,468.2 451.4,467.4 451.7,466.5 452.0,465.7 452.2,464.9 452.4,464.0 452.6,463.2 452.8,462.3 452.9,461.5 453.0,460.7 453.1,459.8 453.2,459.0 453.2,458.2 453.2,457.4 453.2,456.5 453.2,455.7 453.1,454.9 453.1,454.1 453.0,453.3 452.8,452.4 452.7,451.6 452.5,450.8 452.3,450.0 452.1,449.2 451.9,448.5 451.6,447.7 451.3,446.9 451.0,446.1 450.7,445.3 450.3,444.6 450.0,443.8 449.6,443.1 449.2,442.3 448.7,441.6 448.3,440.8 447.8,440.1 447.3,439.4 446.8,438.7 446.3,438.0 445.7,437.2 445.2,436.6 444.6,435.9 444.0,435.2 443.3,434.5 442.7,433.9 442.0,433.2 441.3,432.6 440.6,431.9 439.9,431.3 439.2,430.7 438.4,430.0 437.7,429.4 436.9,428.8 436.1,428.3 435.3,427.7 434.5,427.1 433.6,426.6 432.8,426.0 431.9,425.5 431.0,424.9 430.1,424.4 429.2,423.9 428.2,423.4 427.3,422.9 426.4,422.4 425.4,422.0 424.4,421.5 423.4,421.1 422.4,420.6 421.4,420.2 420.4,419.8 419.3,419.4 418.3,419.0 417.2,418.6 416.2,418.2 415.1,417.9 414.0,417.5 412.9,417.2 411.8,416.8 410.7,416.5 409.6,416.2 408.4,415.9 407.3,415.6 406.1,415.4 405.0,415.1 403.8,414.8 402.7,414.6 401.5,414.4 400.3,414.2 399.1,414.0 397.9,413.8 396.7,413.6 395.5,413.4 394.3,413.3 393.1,413.1 391.9,413.0 390.6,412.9 389.4,412.7 388.2,412.7 387.0,412.6 385.7,412.5 384.5,412.4 383.2,412.4 382.0,412.3 380.8,412.3 379.5,412.3 378.3,412.3 377.0,412.3 375.8,412.3 374.5,412.4 373.2,412.4 371.8,412.5 370.4,412.5 369.0,412.6 367.7,412.7 366.3,412.8 364.9,412.9 363.6,413.0 362.2,413.2 360.8,413.3 359.5,413.5 358.1,413.7 356.7,413.8 355.4,414.0 354.0,414.3 352.7,414.5 351.4,414.7 350.0,415.0 348.7,415.2 347.4,415.5 346.1,415.8 344.7,416.0 343.4,416.3 342.1,416.7 340.9,417.0 339.6,417.3 338.3,417.7 337.0,418.0 335.8,418.4 334.5,418.8 333.3,419.2 332.0,419.6 330.8,420.0 329.6,420.4 328.4,420.8 327.2,421.3 326.0,421.7 324.9,422.2 323.7,422.7 322.6,423.1 321.5,423.6 320.3,424.1 319.2,424.7 318.1,425.2 317.1,425.7 316.0,426.3 314.9,426.8 313.9,427.4 312.9,428.0 311.9,428.5 310.9,429.1 309.9,429.7 309.0,430.3 308.0,431.0 307.1,431.6 306.2,432.2 305.3,432.9 304.4,433.5 303.6,434.2 302.7,434.9 301.9,435.5 301.1,436.2 300.3,436.9 299.6,437.6 298.8,438.3 298.1,439.0 297.4,439.8 296.7,440.5 296.1,441.2 295.4,442.0 294.8,442.7 294.2,443.5 293.7,444.2 293.1,445.0 292.6,445.8 292.1,446.5 291.6,447.3 291.1,448.1 290.7,448.9 290.3,449.7 289.9,450.5 289.6,451.3 289.2,452.1 288.9,452.9 288.6,453.7 288.4,454.5 288.1,455.4 287.9,456.2 287.7,457.0 287.6,457.8 287.4,458.7 287.3,459.5 287.3,460.3 287.2,461.2 287.2,462.0 287.2,462.9 287.2,463.7 287.3,464.5 287.4,465.4 287.5,466.2 287.6,467.0 287.8,467.9 288.0,468.7 288.2,469.5 288.4,470.4 288.7,471.2 289.0,472.0 289.4,472.9 289.7,473.7 290.1,474.5 290.5,475.3 291.0,476.1 291.5,476.9 292.0,477.7 292.5,478.5 293.1,479.3 293.6,480.1 294.3,480.9 294.9,481.7 295.6,482.4 296.3,483.2 297.0,484.0 297.8,484.7 298.5,485.5 299.4,486.2 300.2,486.9 301.1,487.6 301.9,488.3"/><polyline points="295.0,495.6 296.0,496.4 297.0,497.2 298.1,497.9 299.2,498.7 300.3,499.4 301.4,500.1 302.6,500.9 303.8,501.6 305.0,502.3 306.2,502.9 307.5,503.6 308.8,504.2 310.1,504.9 311.5,505.5 312.8,506.1 314.2,506.7 315.7,507.3 317.1,507.9 318.6,508.4 320.0,509.0 321.6,509.5 323.1,510.0 324.6,510.5 326.2,510.9 327.8,511.4 329.4,511.8 331.0,512.2 332.7,512.6 334.3,513.0 336.0,513.4 337.7,513.7 339.4,514.1 341.1,514.4 342.8,514.7 344.6,515.0 346.3,515.2 348.1,515.4 349.9,515.7 351.7,515.9 353.5,516.0 355.3,516.2 357.1,516.3 358.9,516.5 360.7,516.6 362.6,516.6 364.4,516.7 366.3,516.7 368.1,516.8 369.9,516.8 371.8,516.8 373.6,516.7 375.3,516.7 377.0,516.6 378.7,516.5 380.4,516.4 382.1,516.2 383.7,516.1 385.4,515.9 387.0,515.7 388.7,515.5 390.3,515.3 392.0,515.0 393.6,514.7 395.2,514.5 396.9,514.1 398.5,513.8 400.1,513.5 401.7,513.1 403.2,512.7 404.8,512.3 406.3,511.9 407.9,511.5 409.4,511.0 410.9,510.6 412.4,510.1 413.9,509.6 415.4,509.1 416.8,508.6 418.2,508.0 419.6,507.4 421.0,506.9 422.4,506.3 423.8,505.7 425.1,505.1 426.4,504.4 427.7,503.8 429.0,503.1 430.3,502.4 431.5,501.8 432.7,501.1 433.9,500.3 435.1,499.6 436.2,498.9 437.3,498.1 438.4,497.4 439.5,496.6 440.6,495.8 441.6,495.1 442.6,494.3 443.5,493.5 444.5,492.6 445.4,491.8 446.3,491.0 447.2,490.2 448.0,489.3 448.9,488.5 449.6,487.6 450.4,486.7 451.1,485.9 451.9,485.0 452.5,484.1 453.2,483.2 453.8,482.3 454.4,481.4 455.0,480.5 455.6,479.6 456.1,478.7 456.6,477.8 457.0,476.9 457.5,476.0 457.9,475.1 458.3,474.1 458.6,473.2 459.0,472.3 459.3,471.4 459.5,470.5 459.8,469.5 460.0,468.6 460.2,467.7 460.3,466.8 460.5,465.8 460.6,464.9 460.7,464.0 460.7,463.1 460.8,462.2 460.8,461.3 460.7,460.4 460.7,459.4 460.6,458.5 460.5,457.6 460.4,456.8 460.3,455.9 460.1,455.0 459.9,454.1 459.7,453.2 459.4,452.3 459.1,451.5 458.8,450.6 458.5,449.7 458.2,448.9 457.8,448.1 457.4,447.2 457.0,446.4 456.5,445.6 456.1,444.7 455.6,443.9 455.1,443.1 454.6,442.3 454.0,441.5 453.5,440.7 452.9,440.0 452.2,439.2 451.6,438.4 451.0,437.7 450.3,436.9 449.6,436.2 448.9,435.5 448.2,434.8 447.4,434.1 446.6,433.4 445.9,432.7 445.0,432.0 444.2,431.3 443.4,430.7 442.5,430.0 441.7,429.4 440.8,428.8 439.9,428.1 438.9,427.5 438.0,426.9 437.0,426.4 436.1,425.8 435.1,425.2 434.1,424.7 433.1,424.1 432.0,423.6 431.0,423.1 429.9,422.5 428.9,422.0 427.8,421.6 426.7,421.1 425.6,420.6 424.5,420.2 423.4,419.7 422.2,419.3 421.1,418.9 419.9,418.5 418.7,418.1 417.5,417.7 416.4,417.3 415.2,417.0 413.9,416.6 412.7,416.3 411.5,416.0 410.3,415.7 409.0,415.4 407.8,415.1 406.5,414.8 405.2,414.6 404.0,414.3 402.7,414.1 401.4,413.9 400.1,413.6 398.8,413.5 397.5,413.3 396.2,413.1 394.9,412.9 393.5,412.8 392.2,412.7 390.9,412.5 389.5,412.4 388.2,412.3 386.9,412.3 385.5,412.2 384.2,412.1 382.8,412.1 381.5,412.1 380.1,412.1 378.8,412.0 377.4,412.1 376.1,412.1 374.7,412.1 373.3,412.2 371.8,412.2 370.3,412.3 368.8,412.4 367.3,412.5 365.9,412.6 364.4,412.7 362.9,412.9 361.4,413.0 359.9,413.2 358.4,413.3 357.0,413.5 355.5,413.7 354.0,413.9 352.6,414.2 351.1,414.4 349.7,414.7 348.2,414.9 346.8,415.2 345.3,415.5 343.9,415.8 342.5,416.1 341.1,416.4 339.7,416.8 338.2,417.1 336.9,417.5 335.5,417.9 334.1,418.3 332.7,418.7 331.4,419.1 330.0,419.5 328.7,419.9 327.4,420.4 326.0,420.8 324.7,421.3 323.4,421.8 322.2,422.3 320.9,422.8 319.6,423.3 318.4,423.8 317.1,424.4 315.9,424.9 314.7,425.5 313.5,426.0 312.3,426.6 311.2,427.2 310.0,427.8 308.9,428.4 307.8,429.1 306.7,429.7 305.6,430.3 304.5,431.0 303.5,431.7 302.5,432.3 301.4,433.0 300.4,433.7 299.5,434.4 298.5,435.1 297.6,435.9 296.6,436.6 295.7,437.3 294.9,438.1 294.0,438.8 293.2,439.6 292.4,440.4 291.6,441.2 290.8,441.9 290.0,442.7 289.3,443.5 288.6,444.4 287.9,445.2 287.3,446.0 286.6,446.8 286.0,447.7 285.4,448.5 284.9,449.4 284.3,450.2 283.8,451.1 283.3,452.0 282.9,452.8 282.4,453.7 282.0,454.6 281.6,455.5 281.3,456.4 281.0,457.3 280.7,458.2 280.4,459.1 280.2,460.0 279.9,460.9 279.7,461.8 279.6,462.7 279.5,463.6 279.4,464.6 279.3,465.5 279.2,466.4 279.2,467.3 279.3,468.3 279.3,469.2 279.4,470.1 279.5,471.0 279.6,472.0 279.8,472.9 280.0,473.8 280.2,474.7 280.5,475.7 280.8,476.6 281.1,477.5 281.4,478.4 281.8,479.3 282.2,480.2 282.7,481.1 283.2,482.0 283.7,482.9 284.2,483.8 284.8,484.7 285.4,485.6 286.0,486.5 286.7,487.3 287.4,488.2 288.1,489.0 288.9,489.9 289.7,490.7 290.5,491.6 291.3,492.4 292.2,493.2 293.1,494.0 294.0,494.8 295.0,495.6"/><polyline points="288.4,503.1 289.4,504.0 290.5,504.8 291.7,505.7 292.8,506.5 294.0,507.3 295.3,508.1 296.5,508.9 297.8,509.7 299.1,510.5 300.5,511.2 301.9,511.9 303.3,512.7 304.7,513.4 306.2,514.1 307.6,514.7 309.2,515.4 310.7,516.0 312.3,516.7 313.8,517.3 315.5,517.9 317.1,518.4 318.8,519.0 320.4,519.5 322.2,520.1 323.9,520.6 325.6,521.0 327.4,521.5 329.2,522.0 331.0,522.4 332.8,522.8 334.7,523.2 336.5,523.5 338.4,523.9 340.3,524.2 342.2,524.5 344.1,524.8 346.0,525.1 348.0,525.3 349.9,525.5 351.9,525.7 353.8,525.9 355.8,526.1 357.8,526.2 359.8,526.3 361.8,526.4 363.8,526.5 365.8,526.5 367.8,526.5 369.8,526.5 371.8,526.5 373.9,526.5 375.7,526.4 377.5,526.3 379.4,526.2 381.2,526.1 383.0,525.9 384.8,525.8 386.6,525.6 388.5,525.4 390.3,525.1 392.1,524.9 393.8,524.6 395.6,524.3 397.4,524.0 399.2,523.6 400.9,523.3 402.6,522.9 404.4,522.5 406.1,522.1 407.8,521.6 409.5,521.2 411.2,520.7 412.8,520.2 414.5,519.7 416.1,519.1 417.7,518.6 419.3,518.0 420.9,517.4 422.4,516.8 423.9,516.2 425.5,515.5 427.0,514.9 428.4,514.2 429.9,513.5 431.3,512.8 432.7,512.1 434.1,511.4 435.5,510.6 436.8,509.9 438.1,509.1 439.4,508.3 440.6,507.5 441.9,506.7 443.1,505.9 444.3,505.1 445.4,504.2 446.6,503.4 447.7,502.5 448.7,501.6 449.8,500.7 450.8,499.8 451.8,498.9 452.8,498.0 453.7,497.1 454.6,496.2 455.5,495.2 456.3,494.3 457.1,493.3 457.9,492.4 458.7,491.4 459.4,490.4 460.1,489.5 460.8,488.5 461.4,487.5 462.0,486.5 462.6,485.5 463.2,484.5 463.7,483.5 464.2,482.5 464.6,481.5 465.1,480.5 465.5,479.5 465.9,478.5 466.2,477.5 466.5,476.5 466.8,475.5 467.0,474.5 467.3,473.5 467.4,472.5 467.6,471.4 467.7,470.4 467.9,469.4 467.9,468.4 468.0,467.4 468.0,466.4 468.0,465.4 467.9,464.5 467.9,463.5 467.8,462.5 467.7,461.5 467.5,460.5 467.3,459.6 467.1,458.6 466.9,457.6 466.6,456.7 466.4,455.7 466.1,454.8 465.7,453.9 465.4,452.9 465.0,452.0 464.6,451.1 464.1,450.2 463.7,449.3 463.2,448.4 462.7,447.5 462.1,446.6 461.6,445.7 461.0,444.9 460.4,444.0 459.8,443.2 459.1,442.3 458.5,441.5 457.8,440.7 457.0,439.9 456.3,439.0 455.6,438.3 454.8,437.5 454.0,436.7 453.2,435.9 452.3,435.2 451.5,434.4 450.6,433.7 449.7,433.0 448.8,432.3 447.9,431.6 446.9,430.9 446.0,430.2 445.0,429.5 444.0,428.9 443.0,428.2 441.9,427.6 440.9,427.0 439.8,426.4 438.7,425.8 437.6,425.2 436.5,424.6 435.4,424.1 434.3,423.5 433.1,423.0 432.0,422.5 430.8,421.9 429.6,421.4 428.4,421.0 427.2,420.5 425.9,420.0 424.7,419.6 423.4,419.1 422.2,418.7 420.9,418.3 419.6,417.9 418.3,417.5 417.0,417.2 415.7,416.8 414.4,416.4 413.1,416.1 411.7,415.8 410.4,415.5 409.0,415.2 407.7,414.9 406.3,414.7 404.9,414.4 403.5,414.2 402.2,414.0 400.8,413.7 399.4,413.5 398.0,413.4 396.5,413.2 395.1,413.0 393.7,412.9 392.3,412.8 390.9,412.7 389.4,412.6 388.0,412.5 386.5,412.4 385.1,412.3 383.7,412.3 382.2,412.3 380.8,412.2 379.3,412.2 377.9,412.2 376.4,412.3 375.0,412.3 373.5,412.4 371.9,412.4 370.3,412.5 368.7,412.6 367.1,412.7 365.5,412.8 363.9,413.0 362.3,413.1 360.7,413.3 359.1,413.4 357.5,413.6 355.9,413.8 354.4,414.0 352.8,414.3 351.2,414.5 349.6,414.8 348.1,415.0 346.5,415.3 345.0,415.6 343.4,415.9 341.9,416.3 340.4,416.6 338.9,416.9 337.3,417.3 335.8,417.7 334.3,418.1 332.9,418.5 331.4,418.9 329.9,419.3 328.4,419.8 327.0,420.2 325.6,420.7 324.1,421.2 322.7,421.7 321.3,422.2 319.9,422.7 318.5,423.2 317.1,423.8 315.8,424.3 314.4,424.9 313.1,425.5 311.8,426.1 310.5,426.7 309.2,427.3 307.9,427.9 306.7,428.6 305.4,429.2 304.2,429.9 303.0,430.5 301.8,431.2 300.6,431.9 299.5,432.6 298.4,433.3 297.2,434.1 296.1,434.8 295.1,435.6 294.0,436.3 293.0,437.1 291.9,437.9 290.9,438.7 290.0,439.5 289.0,440.3 288.1,441.1 287.2,441.9 286.3,442.8 285.4,443.6 284.5,444.5 283.7,445.3 282.9,446.2 282.2,447.1 281.4,448.0 280.7,448.9 280.0,449.8 279.3,450.7 278.7,451.6 278.0,452.5 277.5,453.5 276.9,454.4 276.4,455.3 275.8,456.3 275.4,457.2 274.9,458.2 274.5,459.2 274.1,460.1 273.7,461.1 273.4,462.1 273.1,463.1 272.8,464.1 272.5,465.1 272.3,466.1 272.1,467.1 272.0,468.1 271.9,469.1 271.8,470.1 271.7,471.1 271.7,472.1 271.7,473.1 271.7,474.1 271.8,475.1 271.9,476.1 272.0,477.1 272.2,478.2 272.4,479.2 272.6,480.2 272.9,481.2 273.2,482.2 273.5,483.2 273.9,484.2 274.3,485.2 274.7,486.2 275.2,487.2 275.7,488.2 276.2,489.2 276.8,490.1 277.4,491.1 278.1,492.1 278.7,493.0 279.4,494.0 280.2,494.9 281.0,495.9 281.8,496.8 282.6,497.8 283.5,498.7 284.4,499.6 285.3,500.5 286.3,501.4 287.3,502.3 288.4,503.1"/><polyline points="282.1,510.8 283.2,511.8 284.4,512.7 285.6,513.6 286.9,514.5 288.1,515.4 289.5,516.3 290.8,517.2 292.2,518.0 293.6,518.8 295.0,519.7 296.5,520.5 298.0,521.3 299.6,522.0 301.1,522.8 302.7,523.5 304.4,524.2 306.0,525.0 307.7,525.6 309.4,526.3 311.1,527.0 312.9,527.6 314.7,528.2 316.5,528.8 318.3,529.4 320.2,529.9 322.1,530.4 324.0,531.0 325.9,531.4 327.8,531.9 329.8,532.4 331.8,532.8 333.8,533.2 335.8,533.6 337.9,533.9 339.9,534.3 342.0,534.6 344.1,534.8 346.1,535.1 348.2,535.4 350.4,535.6 352.5,535.8 354.6,535.9 356.8,536.1 358.9,536.2 361.1,536.3 363.2,536.4 365.4,536.4 367.6,536.5 369.8,536.5 371.9,536.4 374.1,536.4 376.1,536.3 378.1,536.2 380.0,536.1 382.0,536.0 384.0,535.8 385.9,535.6 387.9,535.4 389.8,535.2 391.8,534.9 393.7,534.6 395.7,534.3 397.6,534.0 399.5,533.6 401.4,533.3 403.3,532.9 405.2,532.4 407.0,532.0 408.9,531.5 410.7,531.0 412.5,530.5 414.3,530.0 416.1,529.5 417.9,528.9 419.6,528.3 421.4,527.7 423.1,527.1 424.8,526.4 426.4,525.8 428.1,525.1 429.7,524.4 431.3,523.7 432.9,522.9 434.4,522.2 436.0,521.4 437.5,520.6 439.0,519.8 440.4,519.0 441.9,518.2 443.3,517.4 444.6,516.5 446.0,515.6 447.3,514.7 448.6,513.8 449.9,512.9 451.1,512.0 452.3,511.1 453.5,510.1 454.6,509.2 455.8,508.2 456.8,507.2 457.9,506.2 458.9,505.2 459.9,504.2 460.9,503.2 461.8,502.2 462.7,501.2 463.6,500.1 464.4,499.1 465.2,498.0 466.0,497.0 466.7,495.9 467.4,494.9 468.1,493.8 468.7,492.7 469.3,491.6 469.9,490.6 470.5,489.5 471.0,488.4 471.5,487.3 471.9,486.2 472.3,485.1 472.7,484.0 473.0,482.9 473.4,481.8 473.7,480.7 473.9,479.7 474.1,478.6 474.3,477.5 474.5,476.4 474.6,475.3 474.7,474.2 474.8,473.1 474.8,472.0 474.8,471.0 474.8,469.9 474.7,468.8 474.7,467.8 474.5,466.7 474.4,465.6 474.2,464.6 474.0,463.5 473.8,462.5 473.5,461.5 473.2,460.4 472.9,459.4 472.6,458.4 472.2,457.4 471.8,456.4 471.4,455.4 470.9,454.4 470.4,453.4 469.9,452.5 469.4,451.5 468.9,450.5 468.3,449.6 467.7,448.7 467.0,447.7 466.4,446.8 465.7,445.9 465.0,445.0 464.3,444.1 463.5,443.2 462.8,442.4 462.0,441.5 461.1,440.6 460.3,439.8 459.5,439.0 458.6,438.2 457.7,437.4 456.8,436.6 455.8,435.8 454.8,435.0 453.9,434.2 452.9,433.5 451.9,432.8 450.8,432.0 449.8,431.3 448.7,430.6 447.6,429.9 446.5,429.3 445.4,428.6 444.2,427.9 443.1,427.3 441.9,426.7 440.7,426.1 439.5,425.5 438.3,424.9 437.1,424.3 435.8,423.8 434.6,423.2 433.3,422.7 432.0,422.2 430.7,421.7 429.4,421.2 428.1,420.7 426.8,420.2 425.4,419.8 424.1,419.3 422.7,418.9 421.3,418.5 419.9,418.1 418.5,417.7 417.1,417.4 415.7,417.0 414.3,416.7 412.9,416.3 411.4,416.0 410.0,415.7 408.5,415.5 407.1,415.2 405.6,414.9 404.1,414.7 402.6,414.5 401.1,414.3 399.6,414.1 398.1,413.9 396.6,413.7 395.1,413.6 393.6,413.4 392.1,413.3 390.6,413.2 389.0,413.1 387.5,413.0 386.0,413.0 384.4,412.9 382.9,412.9 381.4,412.9 379.8,412.9 378.3,412.9 376.7,412.9 375.2,412.9 373.6,413.0 371.9,413.1 370.2,413.2 368.5,413.3 366.8,413.4 365.1,413.5 363.4,413.6 361.8,413.8 360.1,414.0 358.4,414.2 356.7,414.4 355.0,414.6 353.3,414.8 351.7,415.0 350.0,415.3 348.3,415.6 346.7,415.9 345.0,416.2 343.4,416.5 341.7,416.8 340.1,417.2 338.5,417.5 336.9,417.9 335.2,418.3 333.6,418.7 332.0,419.1 330.5,419.5 328.9,420.0 327.3,420.4 325.8,420.9 324.2,421.4 322.7,421.9 321.2,422.4 319.6,422.9 318.1,423.5 316.7,424.0 315.2,424.6 313.7,425.2 312.3,425.8 310.8,426.4 309.4,427.0 308.0,427.6 306.6,428.3 305.2,428.9 303.9,429.6 302.5,430.3 301.2,431.0 299.9,431.7 298.6,432.4 297.3,433.1 296.1,433.9 294.8,434.6 293.6,435.4 292.4,436.2 291.2,437.0 290.1,437.8 288.9,438.6 287.8,439.4 286.7,440.2 285.6,441.1 284.6,442.0 283.6,442.8 282.6,443.7 281.6,444.6 280.6,445.5 279.7,446.4 278.8,447.3 277.9,448.2 277.0,449.2 276.2,450.1 275.4,451.1 274.6,452.0 273.8,453.0 273.1,454.0 272.4,455.0 271.7,456.0 271.1,457.0 270.4,458.0 269.9,459.0 269.3,460.0 268.8,461.1 268.3,462.1 267.8,463.1 267.4,464.2 267.0,465.2 266.6,466.3 266.2,467.4 265.9,468.4 265.6,469.5 265.4,470.6 265.2,471.7 265.0,472.7 264.8,473.8 264.7,474.9 264.7,476.0 264.6,477.1 264.6,478.2 264.6,479.3 264.7,480.4 264.8,481.5 264.9,482.6 265.1,483.7 265.3,484.8 265.5,485.9 265.8,487.0 266.1,488.0 266.4,489.1 266.8,490.2 267.2,491.3 267.7,492.4 268.2,493.5 268.7,494.5 269.3,495.6 269.9,496.7 270.5,497.7 271.2,498.8 271.9,499.8 272.6,500.9 273.4,501.9 274.2,502.9 275.1,504.0 276.0,505.0 276.9,506.0 277.9,507.0 278.9,507.9 279.9,508.9 281.0,509.9 282.1,510.8"/><polyline points="275.8,519.2 277.0,520.2 278.2,521.2 279.5,522.2 280.9,523.2 282.2,524.2 283.6,525.1 285.0,526.1 286.5,527.0 288.0,527.9 289.6,528.8 291.1,529.7 292.7,530.6 294.4,531.4 296.1,532.2 297.8,533.0 299.5,533.8 301.3,534.6 303.1,535.3 304.9,536.1 306.8,536.8 308.7,537.5 310.6,538.1 312.5,538.8 314.5,539.4 316.5,540.0 318.5,540.6 320.5,541.2 322.6,541.7 324.7,542.2 326.8,542.7 328.9,543.2 331.1,543.6 333.3,544.0 335.4,544.4 337.6,544.8 339.9,545.1 342.1,545.4 344.3,545.7 346.6,546.0 348.9,546.2 351.2,546.4 353.5,546.6 355.8,546.8 358.1,546.9 360.4,547.0 362.7,547.1 365.1,547.1 367.4,547.2 369.7,547.2 372.1,547.2 374.4,547.1 376.5,547.0 378.6,546.9 380.8,546.8 382.9,546.6 385.0,546.5 387.1,546.2 389.2,546.0 391.3,545.7 393.4,545.5 395.5,545.2 397.6,544.8 399.6,544.5 401.7,544.1 403.7,543.7 405.7,543.2 407.8,542.8 409.8,542.3 411.7,541.8 413.7,541.2 415.7,540.7 417.6,540.1 419.5,539.5 421.4,538.9 423.3,538.3 425.1,537.6 427.0,536.9 428.8,536.2 430.6,535.5 432.3,534.7 434.1,534.0 435.8,533.2 437.5,532.4 439.1,531.6 440.8,530.7 442.4,529.9 444.0,529.0 445.5,528.1 447.1,527.2 448.5,526.3 450.0,525.3 451.5,524.4 452.9,523.4 454.2,522.4 455.6,521.5 456.9,520.4 458.2,519.4 459.4,518.4 460.6,517.4 461.8,516.3 463.0,515.2 464.1,514.2 465.2,513.1 466.2,512.0 467.2,510.9 468.2,509.8 469.2,508.7 470.1,507.5 471.0,506.4 471.8,505.3 472.6,504.1 473.4,503.0 474.1,501.8 474.8,500.7 475.5,499.5 476.2,498.3 476.8,497.2 477.3,496.0 477.9,494.8 478.3,493.6 478.8,492.5 479.2,491.3 479.6,490.1 480.0,488.9 480.3,487.7 480.6,486.6 480.9,485.4 481.1,484.2 481.3,483.0 481.4,481.9 481.5,480.7 481.6,479.5 481.7,478.3 481.7,477.2 481.7,476.0 481.7,474.9 481.6,473.7 481.5,472.6 481.3,471.4 481.2,470.3 481.0,469.2 480.7,468.0 480.5,466.9 480.2,465.8 479.9,464.7 479.5,463.6 479.1,462.5 478.7,461.4 478.3,460.4 477.8,459.3 477.3,458.2 476.8,457.2 476.2,456.1 475.7,455.1 475.1,454.1 474.4,453.1 473.8,452.1 473.1,451.1 472.4,450.1 471.6,449.1 470.9,448.2 470.1,447.2 469.3,446.3 468.5,445.3 467.6,444.4 466.7,443.5 465.8,442.6 464.9,441.7 464.0,440.9 463.0,440.0 462.0,439.1 461.0,438.3 460.0,437.5 458.9,436.7 457.9,435.9 456.8,435.1 455.7,434.3 454.6,433.6 453.4,432.8 452.2,432.1 451.1,431.4 449.9,430.7 448.7,430.0 447.4,429.3 446.2,428.6 444.9,428.0 443.6,427.3 442.3,426.7 441.0,426.1 439.7,425.5 438.4,424.9 437.0,424.4 435.7,423.8 434.3,423.3 432.9,422.7 431.5,422.2 430.1,421.7 428.7,421.3 427.2,420.8 425.8,420.4 424.3,419.9 422.8,419.5 421.4,419.1 419.9,418.7 418.4,418.3 416.9,418.0 415.3,417.6 413.8,417.3 412.3,417.0 410.7,416.7 409.2,416.4 407.6,416.1 406.1,415.9 404.5,415.6 402.9,415.4 401.3,415.2 399.7,415.0 398.2,414.9 396.6,414.7 395.0,414.5 393.3,414.4 391.7,414.3 390.1,414.2 388.5,414.1 386.9,414.1 385.3,414.0 383.6,414.0 382.0,414.0 380.4,413.9 378.7,414.0 377.1,414.0 375.5,414.0 373.8,414.1 372.0,414.2 370.2,414.2 368.4,414.4 366.6,414.5 364.9,414.6 363.1,414.8 361.3,414.9 359.5,415.1 357.7,415.3 355.9,415.5 354.1,415.7 352.4,416.0 350.6,416.2 348.8,416.5 347.1,416.8 345.3,417.1 343.6,417.4 341.8,417.8 340.1,418.1 338.3,418.5 336.6,418.9 334.9,419.3 333.2,419.7 331.5,420.1 329.8,420.6 328.1,421.0 326.5,421.5 324.8,422.0 323.2,422.5 321.5,423.0 319.9,423.5 318.3,424.1 316.7,424.6 315.1,425.2 313.5,425.8 311.9,426.4 310.4,427.0 308.8,427.6 307.3,428.3 305.8,428.9 304.3,429.6 302.8,430.3 301.3,431.0 299.9,431.7 298.5,432.4 297.1,433.2 295.7,433.9 294.3,434.7 292.9,435.5 291.6,436.3 290.3,437.1 289.0,437.9 287.7,438.7 286.4,439.6 285.2,440.4 284.0,441.3 282.8,442.2 281.6,443.1 280.4,444.0 279.3,444.9 278.2,445.8 277.1,446.8 276.1,447.7 275.0,448.7 274.0,449.7 273.0,450.6 272.1,451.6 271.1,452.6 270.2,453.7 269.4,454.7 268.5,455.7 267.7,456.7 266.9,457.8 266.2,458.9 265.4,459.9 264.7,461.0 264.0,462.1 263.4,463.2 262.8,464.3 262.2,465.4 261.7,466.5 261.2,467.6 260.7,468.7 260.2,469.9 259.8,471.0 259.4,472.2 259.1,473.3 258.8,474.5 258.5,475.6 258.2,476.8 258.0,477.9 257.8,479.1 257.7,480.3 257.6,481.5 257.5,482.6 257.5,483.8 257.5,485.0 257.6,486.2 257.7,487.4 257.8,488.6 257.9,489.7 258.1,490.9 258.4,492.1 258.6,493.3 259.0,494.5 259.3,495.7 259.7,496.8 260.1,498.0 260.6,499.2 261.1,500.3 261.6,501.5 262.2,502.7 262.9,503.8 263.5,505.0 264.2,506.1 265.0,507.3 265.8,508.4 266.6,509.5 267.5,510.6 268.4,511.7 269.3,512.8 270.3,513.9 271.3,515.0 272.4,516.1 273.5,517.1 274.6,518.2 275.8,519.2"/><polyline points="270.1,527.5 271.4,528.6 272.7,529.7 274.0,530.8 275.4,531.9 276.9,532.9 278.4,533.9 279.9,535.0 281.4,536.0 283.0,536.9 284.6,537.9 286.3,538.9 288.0,539.8 289.7,540.7 291.5,541.6 293.3,542.5 295.2,543.3 297.0,544.1 298.9,545.0 300.9,545.7 302.9,546.5 304.9,547.3 306.9,548.0 308.9,548.7 311.0,549.4 313.1,550.0 315.3,550.6 317.5,551.2 319.7,551.8 321.9,552.4 324.1,552.9 326.4,553.4 328.7,553.9 331.0,554.3 333.3,554.7 335.6,555.1 338.0,555.5 340.4,555.9 342.8,556.2 345.2,556.5 347.6,556.7 350.0,556.9 352.5,557.1 354.9,557.3 357.4,557.5 359.8,557.6 362.3,557.7 364.8,557.7 367.3,557.8 369.8,557.8 372.3,557.7 374.7,557.7 377.0,557.6 379.2,557.5 381.5,557.3 383.7,557.2 386.0,557.0 388.2,556.7 390.5,556.5 392.7,556.2 394.9,555.9 397.1,555.6 399.3,555.2 401.5,554.8 403.7,554.4 405.9,553.9 408.0,553.5 410.2,553.0 412.3,552.4 414.4,551.9 416.5,551.3 418.6,550.7 420.6,550.1 422.7,549.5 424.7,548.8 426.7,548.1 428.6,547.4 430.6,546.6 432.5,545.9 434.4,545.1 436.3,544.3 438.1,543.5 439.9,542.6 441.7,541.7 443.5,540.9 445.2,539.9 446.9,539.0 448.6,538.1 450.2,537.1 451.8,536.1 453.4,535.1 455.0,534.1 456.5,533.1 458.0,532.1 459.4,531.0 460.8,529.9 462.2,528.9 463.6,527.8 464.9,526.7 466.2,525.5 467.4,524.4 468.6,523.3 469.8,522.1 470.9,520.9 472.0,519.8 473.1,518.6 474.1,517.4 475.1,516.2 476.1,515.0 477.0,513.8 477.9,512.5 478.7,511.3 479.5,510.1 480.3,508.8 481.0,507.6 481.7,506.4 482.4,505.1 483.0,503.8 483.6,502.6 484.1,501.3 484.6,500.1 485.1,498.8 485.5,497.5 485.9,496.3 486.3,495.0 486.6,493.8 486.9,492.5 487.2,491.2 487.4,490.0 487.6,488.7 487.7,487.5 487.8,486.2 487.9,485.0 487.9,483.7 488.0,482.5 487.9,481.2 487.9,480.0 487.8,478.8 487.6,477.6 487.5,476.3 487.3,475.1 487.1,473.9 486.8,472.7 486.5,471.5 486.2,470.4 485.8,469.2 485.5,468.0 485.0,466.9 484.6,465.7 484.1,464.6 483.6,463.4 483.1,462.3 482.5,461.2 481.9,460.1 481.3,459.0 480.6,457.9 480.0,456.8 479.3,455.8 478.5,454.7 477.8,453.7 477.0,452.6 476.2,451.6 475.4,450.6 474.5,449.6 473.6,448.6 472.7,447.6 471.8,446.7 470.8,445.7 469.8,444.8 468.8,443.9 467.8,443.0 466.8,442.1 465.7,441.2 464.6,440.3 463.5,439.5 462.4,438.6 461.2,437.8 460.0,437.0 458.9,436.2 457.6,435.4 456.4,434.6 455.2,433.8 453.9,433.1 452.6,432.4 451.3,431.7 450.0,430.9 448.7,430.3 447.3,429.6 446.0,428.9 444.6,428.3 443.2,427.7 441.8,427.1 440.4,426.5 438.9,425.9 437.5,425.3 436.0,424.8 434.6,424.2 433.1,423.7 431.6,423.2 430.1,422.7 428.5,422.2 427.0,421.8 425.4,421.3 423.9,420.9 422.3,420.5 420.8,420.1 419.2,419.7 417.6,419.4 416.0,419.0 414.4,418.7 412.7,418.4 411.1,418.1 409.5,417.8 407.8,417.5 406.2,417.3 404.5,417.0 402.9,416.8"/><polyline points="336.8,420.3 335.0,420.7 333.2,421.1 331.4,421.5 329.7,422.0 327.9,422.4 326.1,422.9 324.4,423.4 322.6,423.9 320.9,424.5 319.2,425.0 317.4,425.6 315.7,426.1 314.1,426.7 312.4,427.3 310.7,428.0 309.1,428.6 307.4,429.2 305.8,429.9 304.2,430.6 302.6,431.3 301.0,432.0 299.5,432.7 297.9,433.5 296.4,434.2 294.9,435.0 293.4,435.8 291.9,436.6 290.5,437.4 289.0,438.2 287.6,439.1 286.2,439.9 284.8,440.8 283.5,441.7 282.2,442.6 280.8,443.5 279.5,444.4 278.3,445.3 277.0,446.3 275.8,447.2 274.6,448.2 273.4,449.2 272.3,450.2 271.2,451.2 270.1,452.2 269.0,453.2 268.0,454.3 266.9,455.3 266.0,456.4 265.0,457.5 264.1,458.5 263.2,459.6 262.3,460.7 261.4,461.9 260.6,463.0 259.8,464.1 259.1,465.3 258.4,466.4 257.7,467.6 257.0,468.7 256.4,469.9 255.8,471.1 255.2,472.3 254.7,473.5 254.2,474.7 253.8,475.9 253.4,477.1 253.0,478.4 252.6,479.6 252.3,480.8 252.0,482.1 251.8,483.3 251.6,484.6 251.4,485.8 251.3,487.1 251.2,488.3 251.2,489.6 251.2,490.9 251.2,492.1 251.3,493.4 251.4,494.7 251.6,495.9 251.7,497.2 252.0,498.5 252.3,499.7 252.6,501.0 252.9,502.3 253.3,503.5 253.8,504.8 254.2,506.0 254.8,507.3 255.3,508.5 255.9,509.8 256.6,511.0 257.3,512.2 258.0,513.5 258.8,514.7 259.6,515.9 260.5,517.1 261.4,518.3 262.3,519.5 263.3,520.7 264.3,521.8 265.4,523.0 266.5,524.2 267.7,525.3 268.9,526.4 270.1,527.5"/><polyline points="264.7,536.2 266.0,537.3 267.4,538.5 268.8,539.7 270.3,540.8 271.8,541.9 273.3,543.0 274.9,544.1 276.6,545.2 278.2,546.3 279.9,547.3 281.7,548.3 283.5,549.3 285.3,550.3 287.2,551.2 289.1,552.2 291.0,553.1 293.0,554.0 295.0,554.9 297.0,555.7 299.1,556.5 301.2,557.3 303.4,558.1 305.5,558.9 307.8,559.6 310.0,560.3 312.2,561.0 314.5,561.6 316.9,562.2 319.2,562.8 321.6,563.4 324.0,563.9 326.4,564.4 328.8,564.9 331.3,565.4 333.7,565.8 336.2,566.2 338.8,566.6 341.3,566.9 343.8,567.2 346.4,567.5 349.0,567.7 351.5,568.0 354.1,568.1 356.7,568.3 359.4,568.4 362.0,568.5 364.6,568.6 367.2,568.6 369.9,568.6 372.5,568.6 375.0,568.5 377.4,568.4 379.8,568.3 382.2,568.2 384.6,568.0 387.0,567.8 389.4,567.5 391.7,567.2 394.1,566.9 396.4,566.6 398.8,566.2 401.1,565.9 403.4,565.4 405.7,565.0 408.0,564.5 410.3,564.0 412.6,563.5 414.8,562.9 417.0,562.3 419.2,561.7 421.4,561.0 423.6,560.4 425.7,559.7 427.9,558.9 430.0,558.2 432.0,557.4 434.1,556.6 436.1,555.8 438.1,555.0 440.1,554.1 442.0,553.2 443.9,552.3 445.8,551.4 447.7,550.4 449.5,549.4 451.3,548.5 453.0,547.4 454.8,546.4 456.5,545.4 458.1,544.3 459.8,543.2 461.3,542.1 462.9,541.0 464.4,539.9 465.9,538.7 467.4,537.6 468.8,536.4 470.1,535.2 471.5,534.0 472.8,532.8 474.0,531.5 475.3,530.3 476.5,529.1 477.6,527.8 478.7,526.5 479.8,525.3 480.8,524.0 481.8,522.7 482.8,521.4 483.7,520.1 484.5,518.8 485.4,517.5 486.2,516.1 486.9,514.8 487.7,513.5 488.3,512.1 489.0,510.8 489.6,509.5 490.1,508.1 490.6,506.8 491.1,505.4 491.6,504.1 492.0,502.8 492.3,501.4 492.7,500.1 493.0,498.7 493.2,497.4 493.4,496.0 493.6,494.7 493.7,493.4 493.9,492.0 493.9,490.7 493.9,489.4 493.9,488.1 493.9,486.8 493.8,485.5 493.7,484.2 493.6,482.9 493.4,481.6 493.2,480.3 492.9,479.0 492.6,477.7 492.3,476.5 491.9,475.2 491.6,474.0 491.1,472.7 490.7,471.5 490.2,470.3 489.7,469.1 489.2,467.9 488.6,466.7 488.0,465.5 487.3,464.3 486.7,463.2 486.0,462.0 485.3,460.9 484.5,459.8 483.7,458.7 482.9,457.6 482.1,456.5 481.2,455.4 480.4,454.3 479.4,453.3 478.5,452.2 477.5,451.2 476.6,450.2 475.6,449.2 474.5,448.2 473.5,447.2 472.4,446.3 471.3,445.3 470.2,444.4 469.0,443.5 467.8,442.6 466.6,441.7 465.4,440.8 464.2,440.0 463.0,439.1 461.7,438.3 460.4,437.5 459.1,436.7 457.8,435.9 456.4,435.1 455.1,434.4 453.7,433.6 452.3,432.9 450.9,432.2 449.4,431.5 448.0,430.8 446.5,430.2 445.1,429.5 443.6,428.9 442.1,428.3 440.5,427.7 439.0,427.1 437.5,426.6 435.9,426.0 434.3,425.5 432.8,425.0 431.2,424.5 429.6,424.0 427.9,423.5"/><polyline points="309.9,429.9 308.1,430.5 306.4,431.2 304.7,431.9 303.0,432.6 301.3,433.3 299.6,434.0 298.0,434.8 296.4,435.5 294.7,436.3 293.1,437.1 291.6,437.9 290.0,438.7 288.4,439.6 286.9,440.4 285.4,441.3 283.9,442.2 282.4,443.1 281.0,444.0 279.6,444.9 278.2,445.9 276.8,446.8 275.4,447.8 274.1,448.8 272.8,449.8 271.5,450.8 270.2,451.8 269.0,452.8 267.8,453.9 266.6,455.0 265.4,456.0 264.3,457.1 263.2,458.2 262.1,459.3 261.1,460.5 260.1,461.6 259.1,462.7 258.1,463.9 257.2,465.1 256.3,466.2 255.4,467.4 254.6,468.6 253.8,469.8 253.0,471.1 252.3,472.3 251.6,473.5 250.9,474.8 250.3,476.0 249.7,477.3 249.1,478.6 248.6,479.8 248.1,481.1 247.6,482.4 247.2,483.7 246.8,485.0 246.5,486.3 246.2,487.7 245.9,489.0 245.7,490.3 245.5,491.6 245.4,493.0 245.3,494.3 245.2,495.7 245.2,497.0 245.2,498.3 245.3,499.7 245.4,501.0 245.5,502.4 245.7,503.7 245.9,505.1 246.2,506.4 246.5,507.8 246.9,509.1 247.3,510.5 247.7,511.8 248.2,513.2 248.8,514.5 249.3,515.8 250.0,517.2 250.6,518.5 251.3,519.8 252.1,521.1 252.9,522.4 253.8,523.7 254.6,525.0 255.6,526.3 256.6,527.6 257.6,528.8 258.7,530.1 259.8,531.3 260.9,532.5 262.1,533.8 263.4,535.0 264.7,536.2"/><polyline points="259.6,545.3 261.0,546.6 262.4,547.8 263.9,549.0 265.5,550.2 267.0,551.4 268.6,552.6 270.3,553.8 272.0,554.9 273.7,556.1 275.5,557.2 277.4,558.3 279.2,559.3 281.2,560.4 283.1,561.4 285.1,562.4 287.1,563.4 289.2,564.3 291.3,565.3 293.5,566.2 295.6,567.1 297.8,567.9 300.1,568.7 302.4,569.5 304.7,570.3 307.0,571.1 309.4,571.8 311.8,572.5 314.3,573.2 316.7,573.8 319.2,574.4 321.7,575.0 324.3,575.5 326.8,576.0 329.4,576.5 332.0,577.0 334.6,577.4 337.3,577.8 340.0,578.2 342.6,578.5 345.3,578.8 348.0,579.1 350.8,579.3 353.5,579.5 356.2,579.7 359.0,579.8 361.7,579.9 364.5,580.0 367.3,580.0 370.0,580.0 372.8,580.0 375.4,579.9 378.0,579.8 380.5,579.7 383.0,579.5 385.5,579.3 388.0,579.1 390.5,578.8 393.0,578.5 395.5,578.2 398.0,577.8 400.4,577.4 402.9,577.0 405.3,576.6 407.7,576.1 410.2,575.6 412.5,575.0 414.9,574.5 417.3,573.8 419.6,573.2 421.9,572.6 424.2,571.9 426.5,571.1 428.8,570.4 431.0,569.6 433.2,568.8 435.4,568.0 437.5,567.1 439.6,566.3 441.7,565.4 443.8,564.4 445.8,563.5 447.8,562.5 449.8,561.5 451.8,560.5 453.7,559.4 455.5,558.4 457.4,557.3 459.2,556.2 461.0,555.1 462.7,553.9 464.4,552.8 466.1,551.6 467.7,550.4 469.3,549.2 470.8,548.0 472.3,546.7 473.8,545.5 475.2,544.2 476.6,542.9 478.0,541.6 479.3,540.3 480.6,539.0 481.8,537.7 483.0,536.4 484.1,535.0 485.2,533.6 486.3,532.3 487.3,530.9 488.3,529.5 489.3,528.1 490.2,526.7 491.0,525.3 491.8,523.9 492.6,522.5 493.4,521.1 494.0,519.7 494.7,518.3 495.3,516.9 495.9,515.4 496.4,514.0 496.9,512.6 497.4,511.2 497.8,509.7 498.1,508.3 498.5,506.9 498.7,505.5 499.0,504.0 499.2,502.6 499.4,501.2 499.5,499.8 499.6,498.4 499.6,497.0 499.7,495.6 499.6,494.2 499.6,492.8 499.5,491.4 499.3,490.0 499.2,488.7 499.0,487.3 498.7,486.0 498.5,484.6 498.1,483.3 497.8,481.9 497.4,480.6 497.0,479.3 496.5,478.0 496.1,476.7 495.5,475.4 495.0,474.1 494.4,472.9 493.8,471.6 493.2,470.4 492.5,469.1 491.8,467.9 491.0,466.7 490.3,465.5 489.5,464.3 488.7,463.2 487.8,462.0 486.9,460.9 486.0,459.7 485.1,458.6 484.1,457.5 483.2,456.4 482.1,455.3 481.1,454.3 480.0,453.2 479.0,452.2 477.8,451.2 476.7,450.2 475.6,449.2 474.4,448.2 473.2,447.2 471.9,446.3 470.7,445.3 469.4,444.4 468.1,443.5 466.8,442.6 465.5,441.8 464.2,440.9 462.8,440.1 461.4,439.3 460.0,438.5 458.6,437.7 457.1,436.9 455.7,436.1 454.2,435.4 452.7,434.7 451.2,434.0 449.7,433.3 448.1,432.6 446.6,432.0"/><polyline points="290.2,440.5 288.5,441.4 286.9,442.2 285.2,443.1 283.7,444.0 282.1,444.9 280.5,445.9 279.0,446.8 277.5,447.8 276.0,448.7 274.5,449.7 273.1,450.7 271.6,451.7 270.2,452.8 268.9,453.8 267.5,454.9 266.2,456.0 264.9,457.1 263.6,458.2 262.4,459.3 261.1,460.4 260.0,461.6 258.8,462.7 257.7,463.9 256.6,465.1 255.5,466.3 254.4,467.5 253.4,468.7 252.4,469.9 251.5,471.2 250.6,472.4 249.7,473.7 248.8,475.0 248.0,476.2 247.2,477.5 246.5,478.9 245.8,480.2 245.1,481.5 244.5,482.8 243.9,484.2 243.3,485.5 242.8,486.9 242.3,488.2 241.8,489.6 241.4,491.0 241.1,492.4 240.7,493.8 240.4,495.2 240.2,496.6 240.0,498.0 239.8,499.4 239.7,500.8 239.6,502.2 239.6,503.7 239.6,505.1 239.6,506.5 239.7,507.9 239.9,509.4 240.0,510.8 240.3,512.2 240.5,513.7 240.9,515.1 241.2,516.5 241.6,518.0 242.1,519.4 242.6,520.8 243.1,522.2 243.7,523.6 244.4,525.1 245.0,526.5 245.8,527.9 246.6,529.3 247.4,530.6 248.3,532.0 249.2,533.4 250.2,534.8 251.2,536.1 252.2,537.5 253.4,538.8 254.5,540.1 255.7,541.4 257.0,542.7 258.3,544.0 259.6,545.3"/><polyline points="255.1,554.6 256.5,555.9 258.0,557.2 259.6,558.6 261.1,559.8 262.8,561.1 264.5,562.4 266.2,563.6 267.9,564.8 269.8,566.0 271.6,567.2 273.5,568.3 275.5,569.5 277.5,570.6 279.5,571.7 281.6,572.7 283.7,573.8 285.8,574.8 288.0,575.8 290.3,576.7 292.5,577.7 294.9,578.6 297.2,579.5 299.6,580.3 302.0,581.2 304.4,582.0 306.9,582.7 309.4,583.5 312.0,584.2 314.5,584.9 317.1,585.5 319.8,586.1 322.4,586.7 325.1,587.3 327.8,587.8 330.5,588.3 333.3,588.7 336.0,589.1 338.8,589.5 341.6,589.9 344.4,590.2 347.3,590.5 350.1,590.7 353.0,590.9 355.8,591.1 358.7,591.2 361.6,591.3 364.5,591.4 367.4,591.4 370.3,591.4 373.2,591.4 375.9,591.3 378.5,591.2 381.1,591.1 383.8,590.9 386.4,590.7 389.0,590.5 391.6,590.2 394.2,589.9 396.8,589.5 399.4,589.1 402.0,588.7 404.6,588.3 407.1,587.8 409.6,587.3 412.2,586.7 414.7,586.2 417.1,585.5 419.6,584.9 422.0,584.2 424.5,583.5 426.9,582.8 429.2,582.0 431.6,581.2 433.9,580.4 436.2,579.5 438.5,578.7 440.7,577.8 442.9,576.8 445.1,575.9 447.3,574.9 449.4,573.9 451.5,572.8 453.5,571.8 455.5,570.7 457.5,569.6 459.5,568.5 461.4,567.3 463.3,566.1 465.1,564.9 466.9,563.7 468.7,562.5 470.4,561.3 472.1,560.0 473.7,558.7 475.3,557.4 476.9,556.1 478.4,554.8 479.9,553.4 481.3,552.1 482.7,550.7 484.1,549.3 485.4,547.9 486.7,546.5 487.9,545.1 489.1,543.7 490.2,542.2 491.3,540.8 492.4,539.3 493.4,537.9 494.4,536.4 495.3,534.9 496.2,533.5 497.0,532.0 497.8,530.5 498.6,529.0 499.3,527.5 499.9,526.0 500.6,524.5 501.1,523.0 501.7,521.5 502.2,520.0 502.6,518.5 503.0,517.0 503.4,515.5 503.7,514.0 504.0,512.5 504.3,511.0 504.5,509.5 504.6,508.0 504.7,506.5 504.8,505.0 504.9,503.5 504.9,502.1 504.8,500.6 504.8,499.1 504.6,497.7 504.5,496.2 504.3,494.8 504.1,493.4 503.8,492.0 503.5,490.5 503.2,489.1 502.8,487.7 502.4,486.3 501.9,485.0 501.5,483.6 500.9,482.2 500.4,480.9 499.8,479.6 499.2,478.2 498.5,476.9 497.9,475.6 497.2,474.3 496.4,473.0 495.6,471.8 494.8,470.5 494.0,469.3 493.1,468.1 492.2,466.9 491.3,465.7 490.4,464.5 489.4,463.3 488.4,462.1 487.4,461.0 486.3,459.9 485.2,458.8 484.1,457.7 483.0,456.6 481.8,455.5 480.6,454.5 479.4,453.4 478.2,452.4 476.9,451.4 475.7,450.4 474.4,449.4 473.1,448.5 471.7,447.5 470.4,446.6 469.0,445.7 467.6,444.8 466.1,443.9 464.7,443.1 463.2,442.2 461.8,441.4"/><polyline points="274.4,452.0 272.8,453.0 271.3,454.0 269.8,455.1 268.3,456.1 266.9,457.2 265.4,458.3 264.0,459.4 262.6,460.5 261.3,461.7 260.0,462.8 258.7,464.0 257.4,465.2 256.1,466.4 254.9,467.6 253.7,468.8 252.6,470.1 251.5,471.3 250.4,472.6 249.3,473.9 248.3,475.2 247.3,476.5 246.3,477.8 245.4,479.1 244.5,480.4 243.6,481.8 242.8,483.2 242.0,484.5 241.3,485.9 240.6,487.3 239.9,488.7 239.3,490.1 238.7,491.5 238.1,493.0 237.6,494.4 237.1,495.8 236.7,497.3 236.3,498.7 235.9,500.2 235.6,501.7 235.3,503.2 235.1,504.6 234.9,506.1 234.8,507.6 234.7,509.1 234.6,510.6 234.6,512.1 234.6,513.6 234.7,515.1 234.8,516.6 235.0,518.1 235.2,519.6 235.5,521.2 235.8,522.7 236.2,524.2 236.6,525.7 237.1,527.2 237.6,528.7 238.1,530.2 238.7,531.7 239.4,533.2 240.1,534.7 240.8,536.1 241.6,537.6 242.5,539.1 243.4,540.5 244.3,542.0 245.3,543.4 246.4,544.9 247.5,546.3 248.6,547.7 249.8,549.1 251.1,550.5 252.4,551.9 253.7,553.2 255.1,554.6"/><polyline points="251.0,564.4 252.5,565.8 254.1,567.2 255.6,568.5 257.3,569.9 259.0,571.2 260.7,572.6 262.5,573.9 264.3,575.1 266.2,576.4 268.1,577.7 270.1,578.9 272.1,580.1 274.2,581.2 276.3,582.4 278.4,583.5 280.6,584.6 282.8,585.7 285.1,586.7 287.4,587.8 289.8,588.8 292.2,589.7 294.6,590.7 297.1,591.6 299.6,592.4 302.1,593.3 304.7,594.1 307.3,594.9 310.0,595.6 312.6,596.3 315.3,597.0 318.1,597.7 320.8,598.3 323.6,598.9 326.4,599.4 329.3,599.9 332.1,600.4 335.0,600.9 337.9,601.3 340.8,601.6 343.7,602.0 346.7,602.3 349.6,602.5 352.6,602.8 355.6,602.9 358.6,603.1 361.6,603.2 364.6,603.3 367.6,603.3 370.6,603.3 373.6,603.3 376.4,603.2 379.1,603.1 381.9,603.0 384.6,602.8 387.3,602.5 390.0,602.3 392.8,602.0 395.5,601.7 398.2,601.3 400.9,600.9 403.5,600.4 406.2,600.0 408.9,599.4 411.5,598.9 414.1,598.3 416.7,597.7 419.3,597.1 421.8,596.4 424.4,595.7 426.9,594.9 429.4,594.1 431.8,593.3 434.3,592.5 436.7,591.6 439.1,590.7 441.4,589.8 443.8,588.8 446.0,587.8 448.3,586.8 450.5,585.8 452.7,584.7 454.9,583.6 457.0,582.5 459.1,581.3 461.2,580.2 463.2,579.0 465.2,577.7 467.1,576.5 469.0,575.3 470.9,574.0 472.7,572.7 474.5,571.4 476.2,570.0 477.9,568.7 479.6,567.3 481.2,565.9 482.8,564.5 484.3,563.1 485.8,561.7 487.2,560.2 488.6,558.8 490.0,557.3 491.3,555.8 492.5,554.3 493.7,552.8 494.9,551.3 496.0,549.8 497.1,548.2 498.2,546.7 499.1,545.2 500.1,543.6 501.0,542.0 501.9,540.5 502.7,538.9 503.4,537.3 504.2,535.8 504.8,534.2 505.5,532.6 506.0,531.0 506.6,529.5 507.1,527.9 507.5,526.3 508.0,524.7 508.3,523.1 508.6,521.6 508.9,520.0 509.2,518.4 509.4,516.9 509.5,515.3 509.6,513.7 509.7,512.2 509.7,510.6 509.7,509.1 509.7,507.6 509.6,506.0 509.4,504.5 509.3,503.0 509.0,501.5 508.8,500.0 508.5,498.5 508.2,497.0 507.8,495.5 507.4,494.1 507.0,492.6 506.5,491.2 506.0,489.8 505.5,488.3 504.9,486.9 504.3,485.5 503.6,484.1 502.9,482.8 502.2,481.4 501.5,480.1 500.7,478.7 499.9,477.4 499.0,476.1 498.2,474.8 497.3,473.5 496.3,472.3 495.4,471.0 494.4,469.8 493.4,468.6 492.3,467.4 491.3,466.2 490.2,465.0 489.0,463.8 487.9,462.7 486.7,461.6 485.5,460.4 484.3,459.4 483.0,458.3 481.7,457.2 480.4,456.2 479.1,455.1 477.8,454.1 476.4,453.1 475.0,452.1"/><polyline points="262.4,463.4 260.9,464.5 259.5,465.7 258.1,466.9 256.7,468.1 255.4,469.3 254.0,470.6 252.7,471.8 251.5,473.1 250.3,474.4 249.1,475.7 247.9,477.0 246.7,478.3 245.6,479.6 244.6,481.0 243.5,482.3 242.5,483.7 241.6,485.1 240.6,486.5 239.7,487.9 238.9,489.3 238.0,490.7 237.3,492.2 236.5,493.6 235.8,495.1 235.1,496.6 234.5,498.1 233.9,499.6 233.4,501.1 232.8,502.6 232.4,504.1 232.0,505.6 231.6,507.2 231.2,508.7 230.9,510.3 230.7,511.8 230.5,513.4 230.3,514.9 230.2,516.5 230.1,518.1 230.1,519.6 230.1,521.2 230.2,522.8 230.3,524.4 230.5,526.0 230.7,527.6 231.0,529.2 231.3,530.7 231.7,532.3 232.1,533.9 232.5,535.5 233.1,537.1 233.6,538.6 234.2,540.2 234.9,541.8 235.6,543.4 236.4,544.9 237.2,546.5 238.1,548.0 239.0,549.5 240.0,551.1 241.0,552.6 242.1,554.1 243.2,555.6 244.4,557.1 245.6,558.6 246.9,560.0 248.2,561.5 249.6,562.9 251.0,564.4"/><polyline points="247.5,574.6 249.0,576.1 250.6,577.5 252.2,579.0 253.9,580.4 255.6,581.8 257.4,583.2 259.2,584.6 261.1,585.9 263.0,587.3 265.0,588.6 267.1,589.9 269.1,591.1 271.3,592.4 273.4,593.6 275.7,594.8 277.9,595.9 280.2,597.0 282.6,598.1 285.0,599.2 287.4,600.3 289.9,601.3 292.4,602.3 294.9,603.2 297.5,604.1 300.2,605.0 302.8,605.9 305.5,606.7 308.3,607.5 311.0,608.3 313.8,609.0 316.6,609.7 319.5,610.3 322.4,610.9 325.3,611.5 328.2,612.1 331.2,612.6 334.1,613.0 337.1,613.5 340.1,613.9 343.2,614.2 346.2,614.5 349.3,614.8 352.4,615.0 355.4,615.2 358.5,615.4 361.6,615.5 364.8,615.6 367.9,615.6 371.0,615.6 374.1,615.6 376.9,615.5 379.8,615.4 382.6,615.2 385.4,615.0 388.3,614.8 391.1,614.5 393.9,614.2 396.7,613.9 399.5,613.5 402.3,613.0 405.1,612.6 407.8,612.1 410.6,611.5 413.3,610.9 416.0,610.3 418.7,609.7 421.3,609.0 424.0,608.3 426.6,607.5 429.2,606.7 431.8,605.9 434.3,605.1 436.8,604.2 439.3,603.2 441.8,602.3 444.2,601.3 446.6,600.3 449.0,599.3 451.3,598.2 453.6,597.1 455.9,596.0 458.1,594.8 460.3,593.6 462.5,592.4 464.6,591.2 466.7,589.9 468.7,588.7 470.7,587.3 472.7,586.0 474.6,584.7 476.5,583.3 478.3,581.9 480.1,580.5 481.8,579.1 483.5,577.7 485.2,576.2 486.8,574.7 488.4,573.2 489.9,571.7 491.4,570.2 492.8,568.7 494.2,567.1 495.5,565.6 496.8,564.0 498.0,562.4 499.2,560.8 500.4,559.2 501.5,557.6 502.6,556.0 503.6,554.4 504.5,552.8 505.5,551.1 506.3,549.5 507.1,547.9 507.9,546.2 508.7,544.6 509.3,542.9 510.0,541.3 510.6,539.6 511.1,538.0 511.6,536.3 512.1,534.7 512.5,533.0 512.8,531.3 513.2,529.7 513.4,528.1 513.7,526.4 513.9,524.8 514.0,523.1 514.1,521.5 514.2,519.9 514.2,518.3 514.1,516.7 514.1,515.1 514.0,513.5 513.8,511.9 513.6,510.3 513.4,508.7 513.1,507.2 512.8,505.6 512.5,504.1 512.1,502.5 511.7,501.0 511.2,499.5 510.7,498.0 510.2,496.5 509.6,495.0 509.0,493.5 508.4,492.1 507.7,490.6 507.0,489.2 506.2,487.8 505.4,486.4 504.6,485.0 503.8,483.6 502.9,482.3 502.0,480.9 501.1,479.6 500.1,478.3 499.1,477.0 498.1,475.7 497.0,474.4 495.9,473.2 494.8,471.9 493.7,470.7 492.5,469.5 491.3,468.3 490.1,467.2 488.9,466.0 487.6,464.9 486.3,463.7"/><polyline points="251.1,476.5 249.8,477.8 248.5,479.2 247.2,480.5 246.0,481.8 244.8,483.2 243.6,484.6 242.4,486.0 241.3,487.4 240.3,488.8 239.2,490.2 238.2,491.7 237.2,493.1 236.3,494.6 235.4,496.1 234.5,497.6 233.7,499.1 232.9,500.6 232.2,502.1 231.5,503.6 230.8,505.2 230.2,506.8 229.7,508.3 229.1,509.9 228.6,511.5 228.2,513.1 227.8,514.7 227.4,516.3 227.1,517.9 226.8,519.5 226.6,521.2 226.4,522.8 226.3,524.4 226.2,526.1 226.2,527.7 226.2,529.4 226.3,531.0 226.4,532.7 226.5,534.4 226.7,536.0 227.0,537.7 227.3,539.3 227.7,541.0 228.1,542.7 228.6,544.3 229.1,546.0 229.7,547.6 230.3,549.3 230.9,550.9 231.7,552.6 232.5,554.2 233.3,555.8 234.2,557.4 235.1,559.0 236.1,560.7 237.2,562.2 238.3,563.8 239.4,565.4 240.6,567.0 241.9,568.5 243.2,570.1 244.6,571.6 246.0,573.1 247.5,574.6"/><polyline points="244.8,585.0 246.3,586.5 247.9,588.1 249.6,589.6 251.3,591.1 253.1,592.6 254.9,594.0 256.8,595.4 258.7,596.8 260.7,598.2 262.7,599.6 264.8,600.9 266.9,602.3 269.1,603.5 271.3,604.8 273.6,606.1 275.9,607.3 278.3,608.4 280.7,609.6 283.2,610.7 285.7,611.8 288.2,612.9 290.8,613.9 293.4,614.9 296.1,615.9 298.8,616.8 301.5,617.7 304.3,618.6 307.1,619.4 309.9,620.2 312.8,620.9 315.7,621.7 318.6,622.3 321.5,623.0 324.5,623.6 327.5,624.1 330.6,624.7 333.6,625.2 336.7,625.6 339.8,626.0 342.9,626.4 346.0,626.7 349.2,627.0 352.3,627.3 355.5,627.5 358.7,627.6 361.9,627.7 365.1,627.8 368.3,627.9 371.5,627.9 374.6,627.8 377.6,627.7 380.5,627.6 383.4,627.5 386.3,627.2 389.2,627.0 392.1,626.7 395.0,626.4 397.9,626.0 400.7,625.6 403.6,625.2 406.4,624.7 409.3,624.1 412.1,623.6 414.9,623.0 417.7,622.3 420.4,621.6 423.2,620.9 425.9,620.2 428.6,619.4 431.2,618.6 433.9,617.7 436.5,616.8 439.1,615.9 441.6,614.9 444.1,613.9 446.6,612.9 449.1,611.8 451.5,610.7 453.9,609.6 456.3,608.5 458.6,607.3 460.9,606.1 463.1,604.8 465.3,603.6 467.5,602.3 469.6,601.0 471.7,599.6 473.7,598.3 475.7,596.9 477.7,595.5 479.6,594.1 481.5,592.6 483.3,591.2 485.1,589.7 486.8,588.2 488.5,586.6 490.2,585.1 491.8,583.5 493.3,582.0 494.8,580.4 496.3,578.8 497.7,577.2 499.1,575.6 500.4,573.9 501.6,572.3 502.9,570.6 504.0,569.0 505.2,567.3 506.2,565.6 507.3,563.9 508.2,562.2 509.2,560.5 510.0,558.8 510.9,557.1 511.7,555.4 512.4,553.7 513.1,552.0 513.7,550.2 514.3,548.5 514.9,546.8 515.4,545.1 515.8,543.4 516.2,541.6 516.6,539.9 516.9,538.2 517.2,536.5 517.4,534.8 517.6,533.1 517.7,531.4 517.8,529.7 517.9,528.0 517.9,526.3 517.8,524.7 517.8,523.0 517.6,521.3 517.5,519.7 517.3,518.1 517.0,516.4 516.7,514.8 516.4,513.2 516.0,511.6 515.6,510.0 515.2,508.4 514.7,506.8 514.2,505.3 513.6,503.7 513.0,502.2 512.4,500.7 511.7,499.2 511.0,497.7 510.3,496.2 509.5,494.7 508.7,493.3 507.9,491.9 507.0,490.4 506.1,489.0 505.2,487.6 504.2,486.3 503.2,484.9 502.2,483.5 501.1,482.2 500.1,480.9 498.9,479.6 497.8,478.3 496.6,477.1"/><polyline points="241.2,491.4 240.0,492.9 238.9,494.3 237.8,495.8 236.7,497.3 235.7,498.8 234.7,500.3 233.7,501.8 232.8,503.3 231.9,504.9 231.1,506.4 230.3,508.0 229.5,509.6 228.8,511.2 228.1,512.8 227.5,514.4 226.9,516.0 226.3,517.7 225.8,519.3 225.3,521.0 224.9,522.6 224.5,524.3 224.2,526.0 223.9,527.7 223.7,529.4 223.5,531.1 223.3,532.8 223.2,534.5 223.2,536.2 223.2,537.9 223.3,539.6 223.4,541.4 223.5,543.1 223.7,544.8 224.0,546.5 224.3,548.3 224.7,550.0 225.1,551.7 225.5,553.4 226.1,555.2 226.6,556.9 227.3,558.6 228.0,560.3 228.7,562.0 229.5,563.7 230.3,565.4 231.2,567.1 232.2,568.8 233.2,570.5 234.3,572.1 235.4,573.8 236.6,575.4 237.8,577.0 239.1,578.7 240.4,580.3 241.8,581.9 243.3,583.4 244.8,585.0"/><polyline points="242.9,595.4 244.5,597.0 246.1,598.6 247.8,600.2 249.6,601.7 251.4,603.2 253.2,604.7 255.1,606.2 257.1,607.7 259.1,609.1 261.2,610.5 263.3,611.9 265.5,613.3 267.7,614.6 269.9,616.0 272.3,617.2 274.6,618.5 277.0,619.7 279.5,620.9 282.0,622.1 284.5,623.2 287.1,624.3 289.7,625.4 292.4,626.4 295.1,627.4 297.9,628.4 300.7,629.3 303.5,630.2 306.3,631.1 309.2,631.9 312.2,632.7 315.1,633.4 318.1,634.1 321.1,634.8 324.2,635.4 327.2,636.0 330.3,636.6 333.5,637.1 336.6,637.5 339.8,638.0 342.9,638.3 346.1,638.7 349.3,639.0 352.6,639.2 355.8,639.5 359.0,639.6 362.3,639.8 365.6,639.8 368.8,639.9 372.1,639.9 375.2,639.8 378.2,639.7 381.2,639.6 384.2,639.4 387.1,639.2 390.1,639.0 393.1,638.7 396.0,638.3 398.9,637.9 401.9,637.5 404.8,637.1 407.7,636.5 410.6,636.0 413.4,635.4 416.3,634.8 419.1,634.1 421.9,633.4 424.7,632.7 427.5,631.9 430.2,631.1 433.0,630.2 435.6,629.3 438.3,628.4 440.9,627.4 443.5,626.4 446.1,625.4 448.7,624.3 451.2,623.2 453.6,622.1 456.1,620.9 458.5,619.7 460.8,618.5 463.1,617.2 465.4,616.0 467.7,614.6 469.9,613.3 472.0,611.9 474.2,610.6 476.2,609.1 478.3,607.7 480.3,606.3 482.2,604.8 484.1,603.3 486.0,601.8 487.8,600.2 489.6,598.7 491.3,597.1 492.9,595.5 494.6,593.9 496.1,592.2 497.7,590.6 499.1,588.9 500.6,587.3 501.9,585.6 503.3,583.9 504.6,582.2 505.8,580.5 507.0,578.8 508.1,577.0 509.2,575.3 510.2,573.5 511.2,571.8 512.2,570.0 513.0,568.3 513.9,566.5 514.7,564.7 515.4,562.9 516.1,561.2 516.7,559.4 517.3,557.6 517.9,555.8 518.4,554.1 518.8,552.3 519.3,550.5 519.6,548.7 519.9,547.0 520.2,545.2 520.4,543.4 520.6,541.7 520.7,539.9 520.8,538.2 520.8,536.4 520.8,534.7 520.8,533.0 520.7,531.2 520.6,529.5 520.4,527.8 520.2,526.1 519.9,524.5 519.6,522.8 519.3,521.1 518.9,519.5 518.5,517.8 518.0,516.2 517.5,514.6 517.0,513.0 516.4,511.4 515.8,509.8 515.1,508.2 514.5,506.7 513.7,505.1 513.0,503.6 512.2,502.1 511.4,500.6 510.5,499.1 509.6,497.7 508.7,496.2 507.7,494.8 506.7,493.4 505.7,491.9 504.7,490.6"/><polyline points="233.9,506.3 232.9,507.8 231.9,509.4 231.0,511.0 230.1,512.6 229.2,514.2 228.4,515.8 227.6,517.5 226.9,519.1 226.2,520.8 225.5,522.4 224.9,524.1 224.3,525.8 223.8,527.5 223.3,529.2 222.9,530.9 222.5,532.6 222.2,534.4 221.9,536.1 221.7,537.9 221.5,539.6 221.3,541.4 221.2,543.1 221.2,544.9 221.2,546.7 221.2,548.5 221.3,550.2 221.5,552.0 221.7,553.8 221.9,555.6 222.2,557.4 222.5,559.2 223.0,561.0 223.4,562.7 224.0,564.5 224.5,566.3 225.2,568.1 225.9,569.8 226.6,571.6 227.4,573.4 228.3,575.1 229.2,576.9 230.1,578.6 231.2,580.4 232.2,582.1 233.4,583.8 234.6,585.5 235.8,587.2 237.1,588.8 238.5,590.5 239.9,592.2 241.4,593.8 242.9,595.4"/><polyline points="242.0,606.3 243.6,607.9 245.3,609.6 247.0,611.2 248.8,612.8 250.6,614.3 252.5,615.9 254.4,617.4 256.4,618.9 258.4,620.4 260.5,621.9 262.6,623.3 264.8,624.7 267.1,626.1 269.4,627.4 271.7,628.8 274.1,630.0 276.5,631.3 279.0,632.5 281.6,633.7 284.1,634.9 286.8,636.1 289.4,637.2 292.1,638.2 294.9,639.3 297.7,640.3 300.5,641.2 303.3,642.1 306.2,643.0 309.2,643.9 312.1,644.7 315.1,645.4 318.1,646.2 321.2,646.9 324.3,647.5 327.4,648.1 330.5,648.7 333.7,649.2 336.9,649.7 340.1,650.1 343.3,650.5 346.5,650.9 349.8,651.2 353.0,651.4 356.3,651.7 359.6,651.8 362.9,652.0 366.2,652.0 369.5,652.1 372.8,652.1 376.0,652.0 379.0,651.9 382.0,651.8 385.0,651.6 388.0,651.4 391.0,651.1 394.0,650.8 397.0,650.5 399.9,650.1 402.9,649.6 405.9,649.2 408.8,648.6 411.7,648.1 414.6,647.5 417.5,646.8 420.4,646.1 423.2,645.4 426.1,644.6 428.9,643.8 431.6,643.0 434.4,642.1 437.1,641.2 439.8,640.2 442.5,639.2 445.1,638.2 447.7,637.1 450.3,636.0 452.8,634.9 455.3,633.7 457.8,632.5 460.2,631.3 462.6,630.0 464.9,628.7 467.2,627.4 469.5,626.1 471.7,624.7 473.9,623.3 476.1,621.8 478.2,620.4 480.2,618.9 482.2,617.4 484.2,615.9 486.1,614.3 488.0,612.8 489.8,611.2 491.6,609.6 493.3,607.9 495.0,606.3 496.7,604.6 498.2,603.0 499.8,601.3 501.3,599.6 502.7,597.9 504.1,596.1 505.4,594.4 506.7,592.6 508.0,590.9 509.2,589.1 510.3,587.3 511.4,585.5 512.4,583.7 513.4,581.9 514.4,580.1 515.3,578.3 516.1,576.5 516.9,574.6 517.6,572.8 518.3,571.0 519.0,569.2 519.6,567.3 520.1,565.5 520.6,563.7 521.1,561.8 521.5,560.0 521.8,558.2 522.1,556.4 522.4,554.6 522.6,552.7 522.8,550.9 522.9,549.1 523.0,547.3 523.0,545.6 523.0,543.8 523.0,542.0 522.9,540.2 522.7,538.5 522.5,536.7 522.3,535.0 522.0,533.3 521.7,531.5 521.4,529.8 521.0,528.1 520.6,526.5 520.1,524.8 519.6,523.1 519.0,521.5 518.4,519.8 517.8,518.2 517.2,516.6 516.5,515.0 515.7,513.4 515.0,511.9 514.1,510.3 513.3,508.8 512.4,507.3 511.5,505.8"/><polyline points="227.5,524.4 226.7,526.1 225.9,527.8 225.2,529.5 224.6,531.2 223.9,532.9 223.3,534.7 222.8,536.4 222.3,538.2 221.9,539.9 221.5,541.7 221.2,543.5 220.9,545.3 220.7,547.1 220.5,548.9 220.4,550.7 220.3,552.5 220.2,554.3 220.2,556.1 220.3,558.0 220.4,559.8 220.5,561.6 220.7,563.5 220.9,565.3 221.2,567.1 221.5,569.0 221.9,570.8 222.4,572.7 222.9,574.5 223.5,576.3 224.1,578.1 224.8,580.0 225.6,581.8 226.4,583.6 227.2,585.4 228.2,587.2 229.1,589.0 230.2,590.8 231.3,592.5 232.4,594.3 233.6,596.1 234.9,597.8 236.2,599.5 237.6,601.2 239.0,602.9 240.5,604.6 242.0,606.3"/><polyline points="242.5,617.2 244.1,618.9 245.7,620.6 247.5,622.2 249.2,623.8 251.1,625.5 252.9,627.0 254.9,628.6 256.9,630.1 258.9,631.6 261.0,633.1 263.2,634.6 265.4,636.0 267.6,637.4 269.9,638.8 272.3,640.2 274.7,641.5 277.1,642.8 279.6,644.0 282.1,645.3 284.7,646.5 287.4,647.6 290.0,648.7 292.7,649.8 295.5,650.9 298.3,651.9 301.1,652.9 304.0,653.8 306.9,654.7 309.8,655.6 312.8,656.4 315.8,657.2 318.8,657.9 321.9,658.6 325.0,659.3 328.1,659.9 331.3,660.5 334.4,661.0 337.6,661.5 340.8,662.0 344.1,662.4 347.3,662.7 350.6,663.0 353.9,663.3 357.1,663.5 360.4,663.7 363.7,663.8 367.1,663.9 370.4,664.0 373.7,664.0 376.8,663.9 379.8,663.8 382.8,663.7 385.8,663.5 388.8,663.3 391.8,663.0 394.8,662.7 397.8,662.3 400.8,661.9 403.8,661.5 406.8,661.0 409.7,660.4 412.6,659.9 415.6,659.2 418.4,658.6 421.3,657.9 424.2,657.1 427.0,656.3 429.8,655.5 432.6,654.7 435.4,653.7 438.1,652.8 440.8,651.8 443.5,650.8 446.1,649.8 448.7,648.7 451.3,647.5 453.8,646.4 456.3,645.2 458.8,644.0 461.2,642.7 463.6,641.4 466.0,640.1 468.3,638.8 470.6,637.4 472.8,636.0 475.0,634.5 477.1,633.1 479.2,631.6 481.3,630.1 483.3,628.6 485.3,627.0 487.2,625.4 489.1,623.8 490.9,622.2 492.7,620.6 494.4,618.9 496.1,617.2 497.7,615.5 499.3,613.8 500.9,612.1 502.4,610.4 503.8,608.6 505.2,606.8 506.5,605.1 507.8,603.3 509.1,601.5 510.3,599.7 511.4,597.8 512.5,596.0 513.5,594.2 514.5,592.3 515.5,590.5 516.4,588.6 517.2,586.8 518.0,584.9 518.7,583.1 519.4,581.2 520.1,579.3 520.7,577.5 521.2,575.6 521.7,573.7 522.2,571.9 522.6,570.0 522.9,568.2 523.2,566.3 523.5,564.4 523.7,562.6 523.9,560.8 524.0,558.9 524.1,557.1 524.1,555.3 524.1,553.5 524.0,551.6 523.9,549.8 523.8,548.0 523.6,546.3 523.3,544.5 523.1,542.7 522.8,541.0 522.4,539.2 522.0,537.5 521.6,535.8 521.1,534.1 520.6,532.4 520.0,530.7 519.4,529.0 518.8,527.4 518.1,525.7 517.4,524.1"/><polyline points="224.3,542.4 223.7,544.2 223.2,546.0 222.7,547.8 222.2,549.6 221.8,551.4 221.5,553.2 221.3,555.0 221.0,556.9 220.8,558.7 220.7,560.5 220.6,562.4 220.6,564.2 220.6,566.1 220.6,568.0 220.7,569.8 220.8,571.7 221.0,573.6 221.2,575.4 221.5,577.3 221.9,579.2 222.3,581.1 222.7,582.9 223.3,584.8 223.9,586.7 224.5,588.5 225.2,590.4 225.9,592.3 226.8,594.1 227.6,595.9 228.5,597.8 229.5,599.6 230.6,601.4 231.7,603.2 232.8,605.0 234.0,606.8 235.3,608.6 236.6,610.3 238.0,612.1 239.4,613.8 240.9,615.5 242.5,617.2"/><polyline points="244.5,628.2 246.1,629.9 247.7,631.6 249.4,633.2 251.2,634.9 253.0,636.5 254.9,638.1 256.8,639.7 258.8,641.2 260.8,642.7 262.9,644.2 265.0,645.7 267.2,647.2 269.5,648.6 271.7,650.0 274.1,651.3 276.5,652.7 278.9,654.0 281.4,655.2 283.9,656.5 286.5,657.7 289.1,658.8 291.7,660.0 294.4,661.1 297.1,662.1 299.9,663.1 302.7,664.1 305.6,665.1 308.5,666.0 311.4,666.9 314.3,667.7 317.3,668.5 320.3,669.2 323.4,669.9 326.4,670.6 329.5,671.2 332.7,671.8 335.8,672.3 339.0,672.8 342.1,673.3 345.3,673.7 348.6,674.0 351.8,674.4 355.1,674.6 358.3,674.9 361.6,675.0 364.9,675.2 368.2,675.3 371.4,675.3 374.7,675.3 377.7,675.3 380.7,675.2 383.7,675.0 386.7,674.8 389.6,674.6 392.6,674.3 395.6,674.0 398.6,673.6 401.5,673.2 404.5,672.8 407.4,672.3 410.3,671.7 413.2,671.2 416.1,670.5 419.0,669.9 421.9,669.2 424.7,668.4 427.5,667.6 430.3,666.8 433.0,665.9 435.8,665.0 438.5,664.0 441.2,663.1 443.8,662.0 446.4,661.0 449.0,659.9 451.6,658.7 454.1,657.6 456.6,656.4 459.0,655.1 461.4,653.9 463.8,652.6 466.1,651.2 468.4,649.9 470.7,648.5 472.9,647.1 475.1,645.6 477.2,644.1 479.3,642.6 481.3,641.1 483.3,639.6 485.3,638.0 487.2,636.4 489.1,634.8 490.9,633.2 492.6,631.5 494.4,629.8 496.0,628.1 497.7,626.4 499.2,624.7 500.8,623.0 502.2,621.2 503.7,619.4 505.1,617.7 506.4,615.9 507.7,614.1 508.9,612.2 510.1,610.4 511.2,608.6 512.3,606.7 513.3,604.9 514.3,603.0 515.3,601.2 516.1,599.3 517.0,597.4 517.8,595.5 518.5,593.7 519.2,591.8 519.8,589.9 520.4,588.0 521.0,586.1 521.5,584.2 521.9,582.4 522.3,580.5 522.7,578.6 523.0,576.7 523.2,574.8 523.4,573.0 523.6,571.1 523.7,569.3 523.8,567.4 523.8,565.6 523.8,563.7 523.7,561.9 523.6,560.1 523.5,558.3 523.3,556.5 523.1,554.7 522.8,552.9 522.5,551.1 522.2,549.4 521.8,547.6 521.3,545.9 520.9,544.2"/><polyline points="223.4,563.5 223.1,565.4 222.9,567.2 222.7,569.1 222.5,570.9 222.4,572.8 222.4,574.7 222.4,576.6 222.4,578.4 222.6,580.3 222.7,582.2 222.9,584.1 223.2,586.0 223.5,587.9 223.9,589.8 224.3,591.7 224.8,593.6 225.3,595.5 225.9,597.3 226.5,599.2 227.2,601.1 228.0,603.0 228.8,604.8 229.7,606.7 230.6,608.5 231.6,610.4 232.6,612.2 233.7,614.1 234.8,615.9 236.0,617.7 237.3,619.5 238.6,621.2 240.0,623.0 241.4,624.7 242.9,626.5 244.5,628.2"/><polyline points="511.5,588.9 512.7,587.1 513.9,585.3 515.0,583.4 516.0,581.6 517.1,579.8 518.0,577.9 518.9,576.0 519.8,574.2 520.6,572.3 521.3,570.4 522.0,568.6 522.7,566.7 523.3,564.8 523.8,562.9 524.3,561.1 524.8,559.2 525.2,557.3 525.5,555.5 525.8,553.6 526.1,551.7 526.3,549.9 526.5,548.0 526.6,546.2 526.7,544.4 526.7,542.5 526.7,540.7 526.6,538.9 526.5,537.1 526.3,535.3 526.1,533.5 525.9,531.7 525.6,530.0 525.3,528.2 524.9,526.5 524.5,524.8 524.0,523.0 523.5,521.3 523.0,519.6 522.4,518.0 521.8,516.3 521.2,514.6 520.5,513.0 519.7,511.4 519.0,509.8 518.2,508.2 517.4,506.6 516.5,505.0 515.6,503.5 514.6,501.9 513.7,500.4 512.7,498.9 511.6,497.5 510.6,496.0 509.5,494.5 508.3,493.1 507.2,491.7 506.0,490.3 504.8,488.9 503.5,487.6"/><polyline points="233.7,504.6 232.5,506.2 231.3,507.8 230.1,509.4 229.0,511.0 227.9,512.6 226.9,514.2 225.9,515.9 225.0,517.6 224.0,519.3 223.2,521.0 222.3,522.7 221.6,524.4 220.9,526.1 220.3,527.9 219.7,529.6 219.1,531.4 218.6,533.2 218.2,535.0 217.7,536.8 217.3,538.6 217.0,540.4 216.7,542.2 216.5,544.1 216.3,545.9 216.1,547.8 216.0,549.6 215.9,551.5 215.9,553.4 215.9,555.2 216.0,557.1 216.1,559.0 216.3,560.9 216.5,562.7 216.8,564.6 217.1,566.5 217.5,568.4 217.9,570.3 218.4,572.1 219.0,574.0 219.5,575.9 220.2,577.7 220.9,579.6 221.6,581.5 222.4,583.3 223.4,585.2 224.4,587.0 225.4,588.8"/><polyline points="516.9,589.7 517.9,587.9 518.9,586.0 519.8,584.1 520.7,582.2 521.5,580.3 522.2,578.4 522.9,576.5 523.6,574.6 524.2,572.7 524.7,570.8 525.2,568.9 525.7,567.0 526.1,565.1 526.4,563.2 526.7,561.3 527.0,559.4 527.2,557.5 527.3,555.7 527.5,553.8 527.5,551.9 527.5,550.1 527.5,548.2 527.4,546.4 527.3,544.5 527.2,542.7 527.0,540.9 526.7,539.1 526.4,537.3 526.1,535.5 525.7,533.8 525.3,532.0 524.8,530.3 524.3,528.5 523.8,526.8 523.2,525.1 522.6,523.4 522.0,521.7 521.3,520.1 520.5,518.4 519.8,516.8 519.0,515.2 518.1,513.6 517.3,512.0 516.4,510.4 515.4,508.8 514.4,507.3 513.4,505.8 512.4,504.3 511.3,502.8 510.2,501.3"/><polyline points="228.2,519.7 227.1,521.4 226.2,523.0 225.2,524.7 224.3,526.5 223.4,528.2 222.6,529.9 221.8,531.7 221.1,533.4 220.5,535.2 219.9,537.0 219.3,538.8 218.8,540.6 218.4,542.4 217.9,544.3 217.6,546.1 217.2,547.9 216.9,549.8 216.7,551.7 216.5,553.5 216.3,555.4 216.2,557.3 216.1,559.2 216.1,561.1 216.1,563.0 216.2,564.9 216.3,566.8 216.5,568.7 216.8,570.6 217.0,572.5 217.4,574.4 217.7,576.3 218.2,578.2 218.6,580.1 219.2,582.1 219.8,584.0 220.4,585.9 221.1,587.7 221.8,589.6"/><polyline points="522.3,588.1 523.1,586.2 523.8,584.3 524.4,582.3 525.0,580.4 525.6,578.5 526.1,576.5 526.5,574.6 526.9,572.7 527.3,570.8 527.6,568.8 527.8,566.9 528.0,565.0 528.2,563.1 528.3,561.2 528.4,559.3 528.4,557.4 528.3,555.6 528.3,553.7 528.2,551.8 528.0,550.0 527.8,548.1 527.5,546.3 527.2,544.5 526.9,542.7 526.5,540.9 526.1,539.1 525.6,537.3 525.1,535.6 524.6,533.8 524.0,532.1 523.4,530.4 522.7,528.7 522.0,527.0 521.3,525.3 520.5,523.7 519.7,522.0 518.9,520.4 518.0,518.8 517.1,517.2 516.2,515.6 515.2,514.0"/><polyline points="225.4,531.8 224.5,533.5 223.6,535.3 222.8,537.0 222.0,538.8 221.3,540.6 220.7,542.4 220.1,544.2 219.6,546.0 219.0,547.9 218.6,549.7 218.1,551.6 217.8,553.4 217.4,555.3 217.1,557.2 216.9,559.1 216.7,561.0 216.5,562.9 216.4,564.8 216.3,566.7 216.3,568.6 216.3,570.6 216.4,572.5 216.6,574.4 216.7,576.4 217.0,578.3 217.2,580.3 217.6,582.2 218.0,584.1 218.4,586.1 218.9,588.0 219.4,589.9"/></g><g fill="none" stroke="#e8a040" stroke-width="1"><polyline points="363.9,444.2 364.8,444.8 365.7,445.3 366.7,445.7 367.9,446.0 369.0,446.3 370.2,446.5 371.5,446.6 372.8,446.7 374.1,446.7 375.4,446.6 376.6,446.4 377.9,446.1 379.1,445.8 380.2,445.4 381.2,444.9 382.2,444.4 383.1,443.8 383.8,443.2 384.5,442.5 385.0,441.8 385.4,441.1 385.6,440.4 385.8,439.6 385.8,438.9 385.6,438.2 385.4,437.5 385.0,436.8 384.5,436.1 383.9,435.5 383.1,434.9 382.3,434.4 381.3,434.0 380.3,433.6 379.3,433.2 378.1,433.0 376.9,432.8 375.7,432.6 374.4,432.6 373.2,432.6 371.9,432.7 370.7,432.9 369.5,433.2 368.3,433.5 367.2,433.9 366.2,434.3 365.2,434.8 364.4,435.4 363.6,436.0 362.9,436.6 362.4,437.3 362.0,438.0 361.7,438.7 361.5,439.5 361.4,440.2 361.5,440.9 361.8,441.6 362.1,442.3 362.6,443.0 363.2,443.6 363.9,444.2" stroke-dasharray="2 3"/><polyline points="357.4,448.0 358.8,448.9 360.4,449.7 362.1,450.4 364.0,451.0 365.9,451.5 368.0,451.9 370.1,452.1 372.3,452.2 374.4,452.1 376.6,451.9 378.7,451.6 380.8,451.2 382.8,450.6 384.7,449.9 386.4,449.1 388.0,448.2 389.5,447.3 390.7,446.2 391.8,445.1 392.6,443.9 393.3,442.7 393.7,441.5 393.9,440.3 393.9,439.0 393.6,437.8 393.2,436.7 392.5,435.5 391.7,434.5 390.6,433.4 389.4,432.5 388.0,431.7 386.4,430.9 384.7,430.2 382.9,429.7 381.1,429.3 379.1,428.9 377.1,428.7 375.0,428.7 372.9,428.7 370.9,428.9 368.8,429.2 366.9,429.6 364.9,430.1 363.1,430.7 361.4,431.5 359.8,432.3 358.3,433.2 357.0,434.2 355.9,435.3 355.0,436.4 354.3,437.5 353.7,438.7 353.4,440.0 353.3,441.2 353.5,442.4 353.8,443.6 354.4,444.8 355.2,445.9 356.2,447.0 357.4,448.0" stroke-dasharray="3 4"/><polyline points="350.9,452.1 352.8,453.4 355.0,454.6 357.4,455.6 360.0,456.4 362.8,457.1 365.7,457.6 368.7,457.9 371.7,458.1 374.8,458.0 377.9,457.7 380.9,457.3 383.8,456.6 386.6,455.8 389.3,454.8 391.7,453.7 394.0,452.4 396.0,451.1 397.7,449.6 399.2,448.0 400.3,446.3 401.2,444.7 401.8,442.9 402.0,441.2 402.0,439.5 401.6,437.8 400.9,436.2 400.0,434.6 398.8,433.1 397.3,431.7 395.5,430.4 393.6,429.2 391.4,428.2 389.1,427.3 386.6,426.5 384.0,425.9 381.2,425.5 378.4,425.2 375.6,425.1 372.7,425.2 369.9,425.4 367.0,425.8 364.3,426.3 361.6,427.1 359.1,427.9 356.7,428.9 354.4,430.1 352.4,431.4 350.6,432.7 349.0,434.2 347.7,435.8 346.6,437.4 345.9,439.1 345.4,440.8 345.3,442.5 345.4,444.2 345.9,445.9 346.7,447.6 347.8,449.2 349.2,450.7 350.9,452.1" stroke-dasharray="2 5"/><polyline points="344.3,456.6 346.8,458.3 349.6,459.8 352.7,461.1 356.1,462.2 359.6,463.1 363.4,463.8 367.3,464.2 371.2,464.4 375.2,464.3 379.2,463.9 383.1,463.3 386.9,462.5 390.5,461.4 393.9,460.1 397.1,458.7 400.0,457.0 402.5,455.2 404.8,453.3 406.6,451.2 408.1,449.1 409.2,446.9 409.9,444.7 410.1,442.4 410.0,440.2 409.5,438.1 408.6,436.0 407.4,434.0 405.8,432.0 403.9,430.3 401.6,428.6 399.1,427.1 396.3,425.8 393.4,424.6 390.2,423.7 386.8,422.9 383.4,422.4 379.8,422.0 376.2,421.9 372.5,422.0 368.9,422.3 365.3,422.8 361.8,423.5 358.4,424.4 355.1,425.5 352.1,426.8 349.2,428.2 346.6,429.8 344.2,431.6 342.2,433.5 340.5,435.5 339.1,437.5 338.1,439.7 337.5,441.9 337.2,444.1 337.4,446.4 338.0,448.6 339.0,450.7 340.4,452.8 342.1,454.7 344.3,456.6" stroke-dasharray="2 6"/><polyline points="337.6,461.4 340.7,463.5 344.1,465.4 347.9,467.1 352.0,468.5 356.5,469.6 361.1,470.4 365.9,470.9 370.7,471.1 375.7,471.0 380.6,470.5 385.4,469.8 390.0,468.7 394.5,467.4 398.7,465.8 402.5,464.0 406.0,461.9 409.2,459.7 411.9,457.3 414.1,454.7 415.9,452.1 417.2,449.4 417.9,446.7 418.2,444.0 418.1,441.3 417.4,438.6 416.3,436.1 414.7,433.6 412.7,431.3 410.4,429.1 407.6,427.2 404.6,425.4 401.2,423.8 397.6,422.4 393.7,421.2 389.6,420.3 385.4,419.7 381.1,419.2 376.8,419.1 372.4,419.2 368.0,419.5 363.6,420.1 359.4,421.0 355.2,422.1 351.3,423.4 347.6,424.9 344.1,426.7 340.9,428.6 338.0,430.8 335.5,433.0 333.4,435.5 331.7,438.0 330.4,440.6 329.6,443.3 329.3,446.0 329.4,448.8 330.1,451.5 331.2,454.1 332.9,456.7 335.0,459.1 337.6,461.4" stroke-dasharray="1 7"/></g><g fill="none" stroke="#000" stroke-width="1"><path d="M515.5,720.6 L535.2,595.7 M203.1,703.4 L150.8,577.6 M570.0,670.4 L599.8,545.1 M166.6,649.5 L111.3,523.6 M488.8,745.3 L502.7,621.3 M221.2,730.1 L170.9,605.0 M591.9,650.3 L625.1,525.2 M152.0,628.1 L95.9,502.6 M469.5,763.1 L479.0,639.9 M234.3,749.5 L185.6,625.2 M606.0,637.2 L641.4,512.4 M142.6,614.2 L86.1,489.2 M452.9,778.4 L458.4,656.1 M245.6,766.2 L198.5,642.8 M617.3,626.8 L654.2,502.3 M135.2,603.2 L78.4,478.6 M437.8,792.3 L439.4,671.0 M256.0,781.5 L210.5,659.0 M626.9,618.0 L665.1,493.8 M128.8,593.9 L71.8,469.7 M423.5,805.5 L421.3,685.2 M265.8,795.9 L221.8,674.6 M635.5,610.1 L674.7,486.2 M123.2,585.6 L66.0,461.8 M409.8,818.1 L403.8,698.9 M275.3,809.8 L232.9,689.7 M643.2,602.9 L683.4,479.4 M118.1,578.0 L60.8,454.7 M396.5,830.4 L386.7,712.4 M284.4,823.4 L243.7,704.5 M650.4,596.3 L691.4,473.1 M113.4,571.1 L56.1,448.1 M383.4,842.4 L369.7,725.7 M293.5,836.7 L254.5,719.2 M657.0,590.2 L698.8,467.3 M109.0,564.7 L51.6,442.1 M370.5,854.3 L352.9,738.9 M302.4,849.9 L265.3,733.9 M663.3,584.4 L705.8,461.8 M104.9,558.6 L47.5,436.4 M357.8,866.1 L336.0,752.2 M311.3,863.1 L276.1,748.7 M669.3,578.9 L712.4,456.7 M101.0,552.8 L43.6,431.1 M345.0,877.8 L319.1,765.4 M320.2,876.2 L287.0,763.6 M675.0,573.7 L718.6,451.7 M97.3,547.4 L39.8,426.0 M332.3,889.5 L302.0,778.8 M329.2,889.3 L298.0,778.6 M680.4,568.7 L724.6,447.1 M93.8,542.1 L36.3,421.2 M330.4,891.2 L299.6,780.8 M330.4,891.2 L299.6,780.8 M681.2,568.0 L725.5,446.4 M93.3,541.4 L35.8,420.5"/><path d="M402.4,295.1 L377,409"/></g><path d="M725.5,446.4 L299.6,780.8 L35.8,420.5" fill="none" stroke="#000" stroke-width="1.6"/><path d="M372,436 L368.6,384" stroke="#2a2ae0" stroke-width="1.6"/><path d="M367,366 L362.4,384.5 Q368,387 373.6,384Z" fill="#2424e8"/><path d="M360,446.5 L320,466" stroke="#e01818" stroke-width="1.2"/><path d="M302,475 L316.5,461.5 Q320,466 321,472.5Z" fill="#f01010"/><path d="M384,447 L412,469.5" stroke="#18c018" stroke-width="1.2"/><path d="M428,479.5 L409.5,473.5 Q412,469 416.5,465.5Z" fill="#10d820"/><circle cx="372.3" cy="440.3" r="14.2" fill="none" stroke="#fff" stroke-width="1.1"/><circle cx="372.3" cy="440.3" r="3" fill="#f0a040" stroke="#2a1a06" stroke-width="1.2"/><g fill="none"><circle cx="164.5" cy="292.5" r="9.5" stroke="#fff" stroke-width="1"/><circle cx="164.5" cy="292.5" r="9.5" stroke="#e01010" stroke-width="1" stroke-dasharray="3.7 3.7"/><path d="M164.5 273V286 M164.5 299V312 M145 292.5H158 M171 292.5H184" stroke="#000" stroke-width="1"/></g></svg>
<div id="ui">
<div class="a" style="left:966px;top:0;width:180px;height:1049px;background:#727272"></div>
<div class="a" style="left:966px;top:0;width:1px;height:1049px;background:#828282"></div>
<div class="a" style="left:1129px;top:-8px;width:13px;height:1053px;border-radius:6px;background:linear-gradient(90deg,#575757,#666);border:1px solid #4e4e4e"></div>
<div class="a" style="left:1129px;top:134px;width:13px;height:832px;border-radius:6px;background:linear-gradient(90deg,#9a9a9a,#7e7e7e);border:1px solid #3c3c3c"></div>
<div class="a" style="left:0;top:1049px;width:1146px;height:20px;background:#6a6a6a;border-top:1px solid #838383"></div>
<div class="a" style="left:1146px;top:0;width:1px;height:1069px;background:#161616"></div><div class="a" style="left:1147px;top:0;width:1px;height:1069px;background:#7e7e7e"></div>
<div class="a" style="left:1148px;top:0;width:295px;height:1069px;background:#727272"></div>
<div class="a" style="left:1433px;top:2px;width:14px;height:1090px;border-radius:6px;background:linear-gradient(90deg,#585858,#636363);border:1px solid #4c4c4c"></div>
<div class="a" style="left:1433px;top:3px;width:14px;height:934px;border-radius:6px;background:linear-gradient(90deg,#9a9a9a,#7e7e7e);border:1px solid #3a3a3a"></div>
<div class="lbl" style="left:979px;top:-8px;color:#000">Scale:</div>
<div class="w num" style="left:974px;top:8px;width:111px;height:20px;line-height:21px;border-radius:9px 9px 0px 0px;"><i class="la"></i><i class="ra"></i>X: 1.000</div>
<div class="w num" style="left:974px;top:27px;width:111px;height:21px;line-height:23px;border-radius:0px 0px 0px 0px;"><i class="la"></i><i class="ra"></i>Y: 1.000</div>
<div class="w num" style="left:974px;top:47px;width:111px;height:21px;line-height:23px;border-radius:0px 0px 9px 9px;"><i class="la"></i><i class="ra"></i>Z: 1.000</div>
<div class="w btn" style="left:1093px;top:8px;width:28px;height:20px;line-height:21px;border-radius:4px 4px 0px 0px;background:linear-gradient(#a0a0a0,#8e8e8e);"></div>
<svg style="left:1099px;top:10px" width="16" height="16" viewBox="0 0 16 16"><path d="M3 10 V5.2 a2.6 2.6 0 0 1 5.2 0 V7.5" fill="none" stroke="#1c1c1c" stroke-width="2.6"/><path d="M3 9.6 V5.2 a2.6 2.6 0 0 1 5.2 0 V7.2" fill="none" stroke="#f0f0f0" stroke-width="1.1"/><rect x="5" y="7.5" width="9.6" height="7" fill="#f0f0f0" stroke="#1c1c1c" stroke-width="1"/><path d="M6 10h7.6M6 12.4h7.6" stroke="#a0a0a0" stroke-width="1"/><rect x="9" y="9.6" width="1.8" height="2.6" fill="#1c1c1c"/></svg>
<div class="w btn" style="left:1093px;top:27px;width:28px;height:21px;line-height:22px;border-radius:0px 0px 0px 0px;background:linear-gradient(#a0a0a0,#8e8e8e);"></div>
<svg style="left:1099px;top:29px" width="16" height="16" viewBox="0 0 16 16"><path d="M3 10 V5.2 a2.6 2.6 0 0 1 5.2 0 V7.5" fill="none" stroke="#1c1c1c" stroke-width="2.6"/><path d="M3 9.6 V5.2 a2.6 2.6 0 0 1 5.2 0 V7.2" fill="none" stroke="#f0f0f0" stroke-width="1.1"/><rect x="5" y="7.5" width="9.6" height="7" fill="#f0f0f0" stroke="#1c1c1c" stroke-width="1"/><path d="M6 10h7.6M6 12.4h7.6" stroke="#a0a0a0" stroke-width="1"/><rect x="9" y="9.6" width="1.8" height="2.6" fill="#1c1c1c"/></svg>
<div class="w btn" style="left:1093px;top:47px;width:28px;height:21px;line-height:22px;border-radius:0px 0px 4px 4px;background:linear-gradient(#a0a0a0,#8e8e8e);"></div>
<svg style="left:1099px;top:49px" width="16" height="16" viewBox="0 0 16 16"><path d="M3 10 V5.2 a2.6 2.6 0 0 1 5.2 0 V7.5" fill="none" stroke="#1c1c1c" stroke-width="2.6"/><path d="M3 9.6 V5.2 a2.6 2.6 0 0 1 5.2 0 V7.2" fill="none" stroke="#f0f0f0" stroke-width="1.1"/><rect x="5" y="7.5" width="9.6" height="7" fill="#f0f0f0" stroke="#1c1c1c" stroke-width="1"/><path d="M6 10h7.6M6 12.4h7.6" stroke="#a0a0a0" stroke-width="1"/><rect x="9" y="9.6" width="1.8" height="2.6" fill="#1c1c1c"/></svg>
<div class="lbl" style="left:979px;top:72px;color:#000">Dimensions:</div>
<div class="w num" style="left:974px;top:90px;width:147px;height:20px;line-height:21px;border-radius:9px 9px 0px 0px;"><i class="la"></i><i class="ra"></i><span style="position:relative;left:-8px">X: 6cm</span></div>
<div class="w num" style="left:974px;top:109px;width:147px;height:21px;line-height:23px;border-radius:0px 0px 0px 0px;"><i class="la"></i><i class="ra"></i><span style="position:relative;left:-8px">Y: 6cm</span></div>
<div class="w num" style="left:974px;top:129px;width:147px;height:21px;line-height:23px;border-radius:0px 0px 9px 9px;"><i class="la"></i><i class="ra"></i><span style="position:relative;left:-8px">Z: 4cm</span></div>
<div class="dv" style="left:971px;top:157px;width:153px"></div>
<svg style="left:1104px;top:160px" width="18" height="18" viewBox="0 0 18 18"><path d="M0 0 L17 17 M5 0 L17 12 M10 0 L17 7" stroke="#5a5a5a" stroke-width="1" fill="none"/><path d="M0 1 L16 17 M5 1 L17 13 M10 1 L17 8" stroke="#7f7f7f" stroke-width="1" fill="none" opacity=".6"/></svg>
<svg style="left:979px;top:166px" width="9" height="9" viewBox="0 0 9 9"><path d="M0 0 L8.4 0 L4.2 8.2Z" fill="#1a1a1a"/></svg>
<div class="hd" style="left:992px;top:165px;">Grease Pencil</div>
<div class="w menu" style="left:974px;top:195px;width:32px;height:20px;line-height:21px;border-radius:4px 0px 0px 4px;"></div>
<svg style="left:978px;top:197px" width="16" height="16" viewBox="0 0 16 16"><path d="M1.2 14.8 L2.8 10.6 L11.3 2.1 L13.9 4.7 L5.4 13.2Z" fill="#7fb23a" stroke="#26320f" stroke-width=".9"/><path d="M11.3 2.1 L12.6 .8 L15.2 3.4 L13.9 4.7Z" fill="#e25c5c" stroke="#5a1a1a" stroke-width=".7"/><path d="M1.2 14.8 L2.8 10.6 L5.4 13.2Z" fill="#f0dfb0"/><path d="M4.1 11.9 L12.6 3.4" stroke="#b9e07c" stroke-width="1.1"/></svg>
<svg style="left:995px;top:199px" width="7" height="13" viewBox="0 0 7 13"><path d="M3.5 .5 L6.5 5 L.5 5Z M3.5 12.5 L6.5 8 L.5 8Z" fill="#a8a8a8"/></svg>
<div class="w btn" style="left:1005px;top:195px;width:116px;height:20px;line-height:21px;border-radius:0px 4px 4px 0px;padding-left:15px;">New</div>
<svg style="left:1011px;top:199px" width="13" height="13" viewBox="0 0 13 13"><path d="M5.3 1 H7.7 V5.3 H12 V7.7 H7.7 V12 H5.3 V7.7 H1 V5.3 H5.3Z" fill="#f6f6f6" stroke="#242424" stroke-width="1.5" paint-order="stroke" stroke-linejoin="round"/></svg>
<div class="w btn" style="left:974px;top:217px;width:147px;height:20px;line-height:21px;border-radius:4px 4px 4px 4px;">New Layer</div>
<div class="w btn dis" style="left:974px;top:239px;width:74px;height:20px;line-height:21px;border-radius:4px 0px 0px 4px;">Delete Frame</div>
<div class="w btn dis" style="left:1047px;top:239px;width:74px;height:20px;line-height:21px;border-radius:0px 4px 4px 0px;">Convert</div>
<div class="dv" style="left:971px;top:266px;width:153px"></div>
<svg style="left:1104px;top:269px" width="18" height="18" viewBox="0 0 18 18"><path d="M0 0 L17 17 M5 0 L17 12 M10 0 L17 7" stroke="#5a5a5a" stroke-width="1" fill="none"/><path d="M0 1 L16 17 M5 1 L17 13 M10 1 L17 8" stroke="#7f7f7f" stroke-width="1" fill="none" opacity=".6"/></svg>
<svg style="left:979px;top:275px" width="9" height="9" viewBox="0 0 9 9"><path d="M0 0 L8.4 0 L4.2 8.2Z" fill="#1a1a1a"/></svg>
<div class="hd" style="left:992px;top:274px;">View</div>
<div class="w num" style="left:974px;top:299px;width:147px;height:20px;line-height:21px;"><i class="la"></i><i class="ra"></i>Lens: 35.000</div>
<div class="lbl" style="left:979px;top:323px;color:#000">Lock to Object:</div>
<div class="w txt" style="left:974px;top:343px;width:147px;height:20px;line-height:21px;"></div>
<svg style="left:980px;top:346px" width="14" height="15" viewBox="0 0 14 15"><path d="M7 0.7 L13.2 3.6 L13.2 11 L7 14.3 L0.8 11 L0.8 3.6Z" fill="#e8962e" stroke="#3a2a10" stroke-width="1"/><path d="M7 0.7 L13.2 3.6 L7 6.6 L0.8 3.6Z" fill="#f7e3c2"/><path d="M0.8 3.6 L7 6.6 L7 14.3 L0.8 11Z" fill="#f0a94e"/><path d="M7 6.6 L13.2 3.6 L13.2 11 L7 14.3Z" fill="#c97614"/><path d="M7 0.7 L13.2 3.6 L13.2 11 L7 14.3 L0.8 11 L0.8 3.6Z" fill="none" stroke="#4a3310" stroke-width=".9"/></svg>
<div class="chk" style="left:977px;top:368px"></div>
<div class="lbl" style="left:996px;top:367px;color:#000">Lock to Cursor</div>
<div class="chk" style="left:977px;top:393px"></div>
<div class="lbl" style="left:996px;top:392px;color:#000">Lock Camera to View</div>
<div class="lbl" style="left:979px;top:417px;color:#000">Clip:</div>
<div class="w num" style="left:974px;top:435px;width:147px;height:20px;line-height:21px;border-radius:9px 9px 0px 0px;"><i class="la"></i><i class="ra"></i><span style="position:relative;left:-8px">Start: 1mm</span></div>
<div class="w num" style="left:974px;top:454px;width:147px;height:21px;line-height:23px;border-radius:0px 0px 9px 9px;"><i class="la"></i><i class="ra"></i><span style="position:relative;left:-8px">End: 1km</span></div>
<div class="lbl" style="left:979px;top:477px;color:#4e4e4e">Local Camera:</div>
<div class="w txt" style="left:974px;top:497px;width:147px;height:20px;line-height:21px;padding-left:21px;color:#4a4a4a;background:linear-gradient(#868686,#949494);border-color:#555;">Camera</div>
<svg style="opacity:0.55;left:980px;top:500px" width="14" height="15" viewBox="0 0 14 15"><path d="M7 0.7 L13.2 3.6 L13.2 11 L7 14.3 L0.8 11 L0.8 3.6Z" fill="#e8962e" stroke="#3a2a10" stroke-width="1"/><path d="M7 0.7 L13.2 3.6 L7 6.6 L0.8 3.6Z" fill="#f7e3c2"/><path d="M0.8 3.6 L7 6.6 L7 14.3 L0.8 11Z" fill="#f0a94e"/><path d="M7 6.6 L13.2 3.6 L13.2 11 L7 14.3Z" fill="#c97614"/><path d="M7 0.7 L13.2 3.6 L13.2 11 L7 14.3 L0.8 11 L0.8 3.6Z" fill="none" stroke="#4a3310" stroke-width=".9"/></svg>
<div class="dv" style="left:971px;top:524px;width:153px"></div>
<svg style="left:1104px;top:527px" width="18" height="18" viewBox="0 0 18 18"><path d="M0 0 L17 17 M5 0 L17 12 M10 0 L17 7" stroke="#5a5a5a" stroke-width="1" fill="none"/><path d="M0 1 L16 17 M5 1 L17 13 M10 1 L17 8" stroke="#7f7f7f" stroke-width="1" fill="none" opacity=".6"/></svg>
<svg style="left:979px;top:533px" width="9" height="9" viewBox="0 0 9 9"><path d="M0 0 L8.4 0 L4.2 8.2Z" fill="#1a1a1a"/></svg>
<div class="hd" style="left:992px;top:532px;">3D Cursor</div>
<div class="lbl" style="left:979px;top:559px;color:#000">Location:</div>
<div class="w num" style="left:974px;top:577px;width:147px;height:20px;line-height:21px;border-radius:9px 9px 0px 0px;"><i class="la"></i><i class="ra"></i><span style="position:relative;left:-3px">X: 1.6045cm</span></div>
<div class="w num" style="left:974px;top:596px;width:147px;height:21px;line-height:23px;border-radius:0px 0px 0px 0px;"><i class="la"></i><i class="ra"></i><span style="position:relative;left:-2.5px">Y: -7.4652cm</span></div>
<div class="w num" style="left:974px;top:616px;width:147px;height:21px;line-height:23px;border-radius:0px 0px 9px 9px;"><i class="la"></i><i class="ra"></i><span style="position:relative;left:-4px">Z: -1.667cm</span></div>
<div class="dv" style="left:971px;top:644px;width:153px"></div>
<svg style="left:1104px;top:647px" width="18" height="18" viewBox="0 0 18 18"><path d="M0 0 L17 17 M5 0 L17 12 M10 0 L17 7" stroke="#5a5a5a" stroke-width="1" fill="none"/><path d="M0 1 L16 17 M5 1 L17 13 M10 1 L17 8" stroke="#7f7f7f" stroke-width="1" fill="none" opacity=".6"/></svg>
<svg style="left:979px;top:653px" width="9" height="9" viewBox="0 0 9 9"><path d="M0 0 L8.4 0 L4.2 8.2Z" fill="#1a1a1a"/></svg>
<div class="hd" style="left:992px;top:652px;">Item</div>
<svg style="left:980px;top:680px" width="14" height="15" viewBox="0 0 14 15"><path d="M7 0.7 L13.2 3.6 L13.2 11 L7 14.3 L0.8 11 L0.8 3.6Z" fill="#e8962e" stroke="#3a2a10" stroke-width="1"/><path d="M7 0.7 L13.2 3.6 L7 6.6 L0.8 3.6Z" fill="#f7e3c2"/><path d="M0.8 3.6 L7 6.6 L7 14.3 L0.8 11Z" fill="#f0a94e"/><path d="M7 6.6 L13.2 3.6 L13.2 11 L7 14.3Z" fill="#c97614"/><path d="M7 0.7 L13.2 3.6 L13.2 11 L7 14.3 L0.8 11 L0.8 3.6Z" fill="none" stroke="#4a3310" stroke-width=".9"/></svg>
<div class="w txt" style="left:1002px;top:677px;width:119px;height:20px;line-height:21px;">2</div>
<div class="dv" style="left:971px;top:704px;width:153px"></div>
<svg style="left:1104px;top:707px" width="18" height="18" viewBox="0 0 18 18"><path d="M0 0 L17 17 M5 0 L17 12 M10 0 L17 7" stroke="#5a5a5a" stroke-width="1" fill="none"/><path d="M0 1 L16 17 M5 1 L17 13 M10 1 L17 8" stroke="#7f7f7f" stroke-width="1" fill="none" opacity=".6"/></svg>
<svg style="left:980px;top:712px" width="8" height="9" viewBox="0 0 8 9"><path d="M0 0 L8 4.5 L0 9Z" fill="#1a1a1a"/></svg>
<div class="hd" style="left:992px;top:712px;">Display</div>
<div class="dv" style="left:971px;top:728px;width:153px"></div>
<svg style="left:1104px;top:731px" width="18" height="18" viewBox="0 0 18 18"><path d="M0 0 L17 17 M5 0 L17 12 M10 0 L17 7" stroke="#5a5a5a" stroke-width="1" fill="none"/><path d="M0 1 L16 17 M5 1 L17 13 M10 1 L17 8" stroke="#7f7f7f" stroke-width="1" fill="none" opacity=".6"/></svg>
<svg style="left:980px;top:736px" width="8" height="9" viewBox="0 0 8 9"><path d="M0 0 L8 4.5 L0 9Z" fill="#1a1a1a"/></svg>
<div class="hd" style="left:1011px;top:736px;">Motion Tracking</div>
<div class="chk" style="left:991px;top:734px"></div>
<svg style="left:991px;top:731px" width="16" height="16" viewBox="0 0 16 16"><path d="M3.6 8.2 L6.6 12 L12.4 3.2" fill="none" stroke="#dedede" stroke-width="1.9"/></svg>
<div class="dv" style="left:971px;top:752px;width:153px"></div>
<svg style="left:1104px;top:755px" width="18" height="18" viewBox="0 0 18 18"><path d="M0 0 L17 17 M5 0 L17 12 M10 0 L17 7" stroke="#5a5a5a" stroke-width="1" fill="none"/><path d="M0 1 L16 17 M5 1 L17 13 M10 1 L17 8" stroke="#7f7f7f" stroke-width="1" fill="none" opacity=".6"/></svg>
<svg style="left:980px;top:760px" width="8" height="9" viewBox="0 0 8 9"><path d="M0 0 L8 4.5 L0 9Z" fill="#1a1a1a"/></svg>
<div class="hd" style="left:1011px;top:760px;">Background Images</div>
<div class="chk" style="left:991px;top:758px"></div>
<div class="dv" style="left:971px;top:776px;width:153px"></div>
<svg style="left:1104px;top:779px" width="18" height="18" viewBox="0 0 18 18"><path d="M0 0 L17 17 M5 0 L17 12 M10 0 L17 7" stroke="#5a5a5a" stroke-width="1" fill="none"/><path d="M0 1 L16 17 M5 1 L17 13 M10 1 L17 8" stroke="#7f7f7f" stroke-width="1" fill="none" opacity=".6"/></svg>
<svg style="left:980px;top:784px" width="8" height="9" viewBox="0 0 8 9"><path d="M0 0 L8 4.5 L0 9Z" fill="#1a1a1a"/></svg>
<div class="hd" style="left:992px;top:784px;">Transform Orientations</div>
<div class="dv" style="left:971px;top:800px;width:153px"></div>
<svg style="left:1104px;top:803px" width="18" height="18" viewBox="0 0 18 18"><path d="M0 0 L17 17 M5 0 L17 12 M10 0 L17 7" stroke="#5a5a5a" stroke-width="1" fill="none"/><path d="M0 1 L16 17 M5 1 L17 13 M10 1 L17 8" stroke="#7f7f7f" stroke-width="1" fill="none" opacity=".6"/></svg>
<svg style="left:979px;top:809px" width="9" height="9" viewBox="0 0 9 9"><path d="M0 0 L8.4 0 L4.2 8.2Z" fill="#1a1a1a"/></svg>
<div class="hd" style="left:992px;top:808px;">Screencast Keys</div>
<div class="w btn" style="left:974px;top:833px;width:147px;height:20px;line-height:21px;border-radius:4px 4px 4px 4px;padding-left:14px;">Start Display</div>
<svg style="left:979px;top:836px" width="14" height="14" viewBox="0 0 14 14"><path d="M1.6 .8 L12.4 7 L1.6 13.2Z" fill="#ececec" stroke="#1c1c1c" stroke-width="1.1" stroke-linejoin="round"/></svg>
<div class="dv" style="left:971px;top:860px;width:153px"></div>
<svg style="left:1104px;top:863px" width="18" height="18" viewBox="0 0 18 18"><path d="M0 0 L17 17 M5 0 L17 12 M10 0 L17 7" stroke="#5a5a5a" stroke-width="1" fill="none"/><path d="M0 1 L16 17 M5 1 L17 13 M10 1 L17 8" stroke="#7f7f7f" stroke-width="1" fill="none" opacity=".6"/></svg>
<svg style="left:979px;top:869px" width="9" height="9" viewBox="0 0 9 9"><path d="M0 0 L8.4 0 L4.2 8.2Z" fill="#1a1a1a"/></svg>
<div class="hd" style="left:1063px;top:868px;">Measure</div>
<div class="w btn" style="left:988px;top:863px;width:72px;height:20px;line-height:21px;border-radius:4px 4px 4px 4px;">Activate</div>
<div class="lbl" style="left:979px;top:895px;color:#000">Distance</div>
<div class="a" style="left:974px;top:918px;width:147px;height:61px;border:1px solid #3c3c3c;border-radius:4px;background:#818181"></div>
<div class="w num" style="left:979px;top:926px;width:137px;height:20px;line-height:21px;"><i class="la"></i><i class="ra"></i><span style="position:relative;left:-5px">Distanc: 34.9927cm</span></div>
<svg style="left:984px;top:956px" width="15" height="15" viewBox="0 0 15 15"><g fill="none" stroke="#1a1a1a" stroke-width="2.6"><circle cx="7.5" cy="7.5" r="3.4"/><path d="M7.5 0.3v3.4M7.5 11.3v3.4M.3 7.5h3.4M11.3 7.5h3.4"/></g><g fill="none" stroke="#f4f4f4" stroke-width="1.1"><circle cx="7.5" cy="7.5" r="3.4"/><path d="M7.5 1v2.7M7.5 11.3v2.7M1 7.5h2.7M11.3 7.5h2.7"/></g></svg>
<svg style="left:1010px;top:959px" width="18" height="11" viewBox="0 0 18 11"><path d="M1 5.5 L5.5 1.2 V4 H12.5 V1.2 L17 5.5 L12.5 9.8 V7 H5.5 V9.8Z" fill="#f0f0f0" stroke="#1a1a1a" stroke-width="1"/></svg>
<svg style="left:1041px;top:957px" width="14" height="15" viewBox="0 0 14 15"><path d="M7 0.7 L13.2 3.6 L13.2 11 L7 14.3 L0.8 11 L0.8 3.6Z" fill="#e8962e" stroke="#3a2a10" stroke-width="1"/><path d="M7 0.7 L13.2 3.6 L7 6.6 L0.8 3.6Z" fill="#f7e3c2"/><path d="M0.8 3.6 L7 6.6 L7 14.3 L0.8 11Z" fill="#f0a94e"/><path d="M7 6.6 L13.2 3.6 L13.2 11 L7 14.3Z" fill="#c97614"/><path d="M7 0.7 L13.2 3.6 L13.2 11 L7 14.3 L0.8 11 L0.8 3.6Z" fill="none" stroke="#4a3310" stroke-width=".9"/></svg>
<div class="w txt" style="left:1063px;top:954px;width:53px;height:20px;line-height:21px;">2</div>
<div class="chk" style="left:977px;top:987px"></div>
<svg style="left:977px;top:984px" width="16" height="16" viewBox="0 0 16 16"><path d="M3.6 8.2 L6.6 12 L12.4 3.2" fill="none" stroke="#dedede" stroke-width="1.9"/></svg>
<div class="lbl" style="left:996px;top:986px;color:#fff">Draw distance</div>
<div class="chk" style="left:977px;top:1012px"></div>
<svg style="left:977px;top:1009px" width="16" height="16" viewBox="0 0 16 16"><path d="M3.6 8.2 L6.6 12 L12.4 3.2" fill="none" stroke="#dedede" stroke-width="1.9"/></svg>
<div class="lbl" style="left:996px;top:1011px;color:#fff">Edge Length</div>
<div class="a" style="left:974px;top:1034px;width:147px;height:30px;border:1px solid #3c3c3c;border-radius:4px;background:#818181"></div>
<div class="w num" style="left:1053px;top:1042px;width:62px;height:20px;line-height:21px;"></div>
<div class="a" style="left:966px;top:1049px;width:180px;height:20px;background:#6a6a6a;border-top:1px solid #838383"></div>
<svg style="left:1157px;top:8px" width="16" height="16" viewBox="0 0 16 16"><path d="M1 15 L6.5 9.5" stroke="#1c1c1c" stroke-width="2.8"/><path d="M1.2 14.8 L6.5 9.5" stroke="#e0e0e0" stroke-width="1.3"/><path d="M9.3 1.2 L14.8 6.7 L13.3 8.2 L12.3 7.4 L10.3 9.4 L10.6 12.3 L9 13.7 L2.3 7 L3.7 5.4 L6.6 5.7 L8.6 3.7 L7.8 2.7Z" fill="#e6e6e6" stroke="#1c1c1c" stroke-width="1.1" stroke-linejoin="round"/></svg>
<svg style="left:1179px;top:7px" width="17" height="17" viewBox="0 0 17 17"><circle cx="3.6" cy="3.4" r="2.3" fill="#ece87e" opacity=".85"/><rect x="8" y="2" width="6.8" height="11.5" rx="3.2" fill="#5b8fd9" stroke="#1d2b4a" stroke-width="1"/><rect x="9.3" y="3.4" width="2.3" height="8.6" rx="1.1" fill="#b3d0f5"/><circle cx="5.8" cy="11.8" r="3.9" fill="#f2f2f2" stroke="#1d1d1d" stroke-width="1"/></svg>
<div class="lbl" style="left:1196px;top:8px;color:#000">Scene</div>
<div class="dv" style="left:1152px;top:33px;width:276px"></div>
<svg style="left:1408px;top:36px" width="18" height="18" viewBox="0 0 18 18"><path d="M0 0 L17 17 M5 0 L17 12 M10 0 L17 7" stroke="#5a5a5a" stroke-width="1" fill="none"/><path d="M0 1 L16 17 M5 1 L17 13 M10 1 L17 8" stroke="#7f7f7f" stroke-width="1" fill="none" opacity=".6"/></svg>
<svg style="left:1160px;top:42px" width="9" height="9" viewBox="0 0 9 9"><path d="M0 0 L8.4 0 L4.2 8.2Z" fill="#1a1a1a"/></svg>
<div class="hd" style="left:1173px;top:41px;">CAM operations</div>
<div class="a" style="left:1155px;top:66px;width:242px;height:113px;border:1px solid #3c3c3c;border-radius:4px;background:#818181"></div>
<div class="a" style="left:1160px;top:76px;width:231px;height:18px;border-radius:3px;background:#5680c2"></div>
<div class="lbl" style="left:1165px;top:76px;color:#000">Na_cisto</div>
<div class="w btn" style="left:1405px;top:66px;width:20px;height:20px;line-height:21px;border-radius:4px 4px 0px 0px;"></div>
<svg style="left:1409px;top:70px" width="13" height="13" viewBox="0 0 13 13"><path d="M5.3 1 H7.7 V5.3 H12 V7.7 H7.7 V12 H5.3 V7.7 H1 V5.3 H5.3Z" fill="#f6f6f6" stroke="#242424" stroke-width="1.5" paint-order="stroke" stroke-linejoin="round"/></svg>
<div class="w btn" style="left:1405px;top:85px;width:20px;height:21px;line-height:22px;border-radius:0px 0px 0px 0px;background:linear-gradient(#7c7c7c,#6a6a6a);"></div>
<svg style="left:1407px;top:88px" width="16" height="16" viewBox="0 0 16 16"><rect x="6.5" y="2.5" width="8" height="9.5" fill="#dccfa6" stroke="#2a2210" stroke-width="1"/><rect x="8.5" y="1" width="4" height="3" fill="#8a8a8a" stroke="#222" stroke-width=".8"/><path d="M1.5 14.5 L8.5 7.5 M8.5 7.5 H4.5 M8.5 7.5 V11.5" stroke="#1a1a1a" stroke-width="2.8" fill="none"/><path d="M1.8 14.2 L8.5 7.5 M8.5 7.5 H5 M8.5 7.5 V11" stroke="#f2f2f2" stroke-width="1.2" fill="none"/></svg>
<div class="w btn" style="left:1405px;top:105px;width:20px;height:21px;line-height:22px;border-radius:0px 0px 4px 4px;"></div>
<svg style="left:1409px;top:109px" width="13" height="13" viewBox="0 0 13 13"><path d="M1 5.3 H12 V7.7 H1Z" fill="#f6f6f6" stroke="#242424" stroke-width="1.5" paint-order="stroke" stroke-linejoin="round"/></svg>
<div class="w menu" style="left:1155px;top:184px;width:230px;height:20px;line-height:21px;border-radius:4px 0px 0px 4px;">Operation presets<svg class="ud" viewBox="0 0 7 12"><path d="M3.5 0.5 L6.5 4.5 L0.5 4.5Z M3.5 11.5 L6.5 7.5 L0.5 7.5Z" fill="#b8b8b8"/></svg></div>
<div class="w btn" style="left:1384px;top:184px;width:21px;height:20px;line-height:21px;border-radius:0px 0px 0px 0px;"></div>
<svg style="left:1388px;top:188px" width="13" height="13" viewBox="0 0 13 13"><path d="M5.3 1 H7.7 V5.3 H12 V7.7 H7.7 V12 H5.3 V7.7 H1 V5.3 H5.3Z" fill="#f6f6f6" stroke="#242424" stroke-width="1.5" paint-order="stroke" stroke-linejoin="round"/></svg>
<div class="w btn" style="left:1404px;top:184px;width:21px;height:20px;line-height:21px;border-radius:0px 4px 4px 0px;"></div>
<svg style="left:1408px;top:188px" width="13" height="13" viewBox="0 0 13 13"><path d="M1 5.3 H12 V7.7 H1Z" fill="#f6f6f6" stroke="#242424" stroke-width="1.5" paint-order="stroke" stroke-linejoin="round"/></svg>
<div class="w btn" style="left:1155px;top:209px;width:270px;height:20px;line-height:21px;border-radius:4px 4px 4px 4px;">Calculate path</div>
<div class="w btn" style="left:1155px;top:234px;width:270px;height:20px;line-height:21px;border-radius:4px 4px 4px 4px;">Simulate this operation</div>
<div class="lbl" style="left:1160px;top:261px;color:#000">Operation Nam</div>
<div class="w txt" style="left:1249px;top:259px;width:176px;height:20px;line-height:21px;">Na_cisto</div>
<div class="lbl" style="left:1160px;top:286px;color:#000">File name:</div>
<div class="w txt" style="left:1249px;top:284px;width:176px;height:20px;line-height:21px;">Koule_na_cisto</div>
<div class="lbl" style="left:1160px;top:311px;color:#000">Source of data<span>:</span></div>
<div class="w menu" style="left:1249px;top:309px;width:176px;height:20px;line-height:21px;">object<svg class="ud" viewBox="0 0 7 12"><path d="M3.5 0.5 L6.5 4.5 L0.5 4.5Z M3.5 11.5 L6.5 7.5 L0.5 7.5Z" fill="#b8b8b8"/></svg></div>
<div class="lbl" style="left:1160px;top:336px;color:#000">Object</div>
<div class="w txt" style="left:1249px;top:334px;width:176px;height:20px;line-height:21px;padding-left:20px;">2</div>
<svg style="left:1254px;top:337px" width="14" height="15" viewBox="0 0 14 15"><path d="M7 0.7 L13.2 3.6 L13.2 11 L7 14.3 L0.8 11 L0.8 3.6Z" fill="#e8962e" stroke="#3a2a10" stroke-width="1"/><path d="M7 0.7 L13.2 3.6 L7 6.6 L0.8 3.6Z" fill="#f7e3c2"/><path d="M0.8 3.6 L7 6.6 L7 14.3 L0.8 11Z" fill="#f0a94e"/><path d="M7 6.6 L13.2 3.6 L13.2 11 L7 14.3Z" fill="#c97614"/><path d="M7 0.7 L13.2 3.6 L13.2 11 L7 14.3 L0.8 11 L0.8 3.6Z" fill="none" stroke="#4a3310" stroke-width=".9"/></svg>
<div class="lbl" style="left:1160px;top:361px;color:#000">operation time7 min</div>
<div class="dv" style="left:1152px;top:386px;width:276px"></div>
<svg style="left:1408px;top:389px" width="18" height="18" viewBox="0 0 18 18"><path d="M0 0 L17 17 M5 0 L17 12 M10 0 L17 7" stroke="#5a5a5a" stroke-width="1" fill="none"/><path d="M0 1 L16 17 M5 1 L17 13 M10 1 L17 8" stroke="#7f7f7f" stroke-width="1" fill="none" opacity=".6"/></svg>
<svg style="left:1160px;top:395px" width="9" height="9" viewBox="0 0 9 9"><path d="M0 0 L8.4 0 L4.2 8.2Z" fill="#1a1a1a"/></svg>
<div class="hd" style="left:1173px;top:394px;">CAM operation setup</div>
<div class="lbl" style="left:1160px;top:426px;color:#000">Strategy:</div>
<div class="w menu" style="left:1249px;top:424px;width:176px;height:20px;line-height:21px;">Spiral<svg class="ud" viewBox="0 0 7 12"><path d="M3.5 0.5 L6.5 4.5 L0.5 4.5Z M3.5 11.5 L6.5 7.5 L0.5 7.5Z" fill="#b8b8b8"/></svg></div>
<div class="lbl" style="left:1160px;top:451px;color:#000">Direction:</div>
<div class="w menu" style="left:1249px;top:449px;width:176px;height:20px;line-height:21px;">Inside out<svg class="ud" viewBox="0 0 7 12"><path d="M3.5 0.5 L6.5 4.5 L0.5 4.5Z M3.5 11.5 L6.5 7.5 L0.5 7.5Z" fill="#b8b8b8"/></svg></div>
<div class="w num" style="left:1155px;top:474px;width:270px;height:20px;line-height:21px;"><i class="la"></i><i class="ra"></i><span style="position:relative;left:-12px">Distance between toolpaths: 1mm</span></div>
<div class="w num" style="left:1155px;top:499px;width:270px;height:20px;line-height:21px;"><i class="la"></i><i class="ra"></i><span style="position:relative;left:-11.5px">Distance along toolpaths: 200µm</span></div>
<div class="w num" style="left:1155px;top:524px;width:270px;height:20px;line-height:21px;"><i class="la"></i><i class="ra"></i><span style="position:relative;left:-12px">Skin: 0m</span></div>
<div class="chk" style="left:1158px;top:552px"></div>
<div class="lbl" style="left:1177px;top:551px;color:#000">Inverse milling</div>
<div class="w num" style="left:1155px;top:574px;width:270px;height:20px;line-height:21px;"><i class="la"></i><i class="ra"></i>For testing only: 0</div>
<div class="dv" style="left:1152px;top:601px;width:276px"></div>
<svg style="left:1408px;top:604px" width="18" height="18" viewBox="0 0 18 18"><path d="M0 0 L17 17 M5 0 L17 12 M10 0 L17 7" stroke="#5a5a5a" stroke-width="1" fill="none"/><path d="M0 1 L16 17 M5 1 L17 13 M10 1 L17 8" stroke="#7f7f7f" stroke-width="1" fill="none" opacity=".6"/></svg>
<svg style="left:1161px;top:609px" width="8" height="9" viewBox="0 0 8 9"><path d="M0 0 L8 4.5 L0 9Z" fill="#1a1a1a"/></svg>
<div class="hd" style="left:1173px;top:609px;">CAM optimisation</div>
<div class="dv" style="left:1152px;top:625px;width:276px"></div>
<svg style="left:1408px;top:628px" width="18" height="18" viewBox="0 0 18 18"><path d="M0 0 L17 17 M5 0 L17 12 M10 0 L17 7" stroke="#5a5a5a" stroke-width="1" fill="none"/><path d="M0 1 L16 17 M5 1 L17 13 M10 1 L17 8" stroke="#7f7f7f" stroke-width="1" fill="none" opacity=".6"/></svg>
<svg style="left:1160px;top:634px" width="9" height="9" viewBox="0 0 9 9"><path d="M0 0 L8.4 0 L4.2 8.2Z" fill="#1a1a1a"/></svg>
<div class="hd" style="left:1173px;top:633px;">CAM operation area</div>
<div class="chk" style="left:1158px;top:666px"></div>
<div class="lbl" style="left:1177px;top:665px;color:#000">Use Layers</div>
<div class="chk" style="left:1158px;top:691px"></div>
<svg style="left:1158px;top:688px" width="16" height="16" viewBox="0 0 16 16"><path d="M3.6 8.2 L6.6 12 L12.4 3.2" fill="none" stroke="#dedede" stroke-width="1.9"/></svg>
<div class="lbl" style="left:1177px;top:690px;color:#fff">Depth from object</div>
<div class="lbl" style="left:1160px;top:715px;color:#000">Ambient:</div>
<div class="w menu" style="left:1249px;top:713px;width:176px;height:20px;line-height:21px;">All<svg class="ud" viewBox="0 0 7 12"><path d="M3.5 0.5 L6.5 4.5 L0.5 4.5Z M3.5 11.5 L6.5 7.5 L0.5 7.5Z" fill="#b8b8b8"/></svg></div>
<div class="chk" style="left:1158px;top:741px"></div>
<div class="lbl" style="left:1177px;top:740px;color:#000">Use limit curve</div>
<div class="dv" style="left:1152px;top:765px;width:276px"></div>
<svg style="left:1408px;top:768px" width="18" height="18" viewBox="0 0 18 18"><path d="M0 0 L17 17 M5 0 L17 12 M10 0 L17 7" stroke="#5a5a5a" stroke-width="1" fill="none"/><path d="M0 1 L16 17 M5 1 L17 13 M10 1 L17 8" stroke="#7f7f7f" stroke-width="1" fill="none" opacity=".6"/></svg>
<svg style="left:1160px;top:774px" width="9" height="9" viewBox="0 0 9 9"><path d="M0 0 L8.4 0 L4.2 8.2Z" fill="#1a1a1a"/></svg>
<div class="hd" style="left:1173px;top:773px;">CAM movement</div>
<div class="lbl" style="left:1160px;top:805px;color:#000">Movement type:</div>
<div class="w menu" style="left:1249px;top:803px;width:176px;height:20px;line-height:21px;">Meander<svg class="ud" viewBox="0 0 7 12"><path d="M3.5 0.5 L6.5 4.5 L0.5 4.5Z M3.5 11.5 L6.5 7.5 L0.5 7.5Z" fill="#b8b8b8"/></svg></div>
<div class="lbl" style="left:1160px;top:830px;color:#000">Spindle rotation:</div>
<div class="w menu" style="left:1249px;top:828px;width:176px;height:20px;line-height:21px;">Clock wise<svg class="ud" viewBox="0 0 7 12"><path d="M3.5 0.5 L6.5 4.5 L0.5 4.5Z M3.5 11.5 L6.5 7.5 L0.5 7.5Z" fill="#b8b8b8"/></svg></div>
<div class="w num" style="left:1155px;top:853px;width:270px;height:20px;line-height:21px;"><i class="la"></i><i class="ra"></i><span style="position:relative;left:-10.5px">Free movement height: 1mm</span></div>
<div class="chk" style="left:1158px;top:881px"></div>
<div class="lbl" style="left:1177px;top:880px;color:#000">Stay low if possible</div>
<div class="chk" style="left:1158px;top:906px"></div>
<div class="lbl" style="left:1177px;top:905px;color:#000">Protect vertical</div>
<div class="dv" style="left:1152px;top:930px;width:276px"></div>
<svg style="left:1408px;top:933px" width="18" height="18" viewBox="0 0 18 18"><path d="M0 0 L17 17 M5 0 L17 12 M10 0 L17 7" stroke="#5a5a5a" stroke-width="1" fill="none"/><path d="M0 1 L16 17 M5 1 L17 13 M10 1 L17 8" stroke="#7f7f7f" stroke-width="1" fill="none" opacity=".6"/></svg>
<svg style="left:1161px;top:938px" width="8" height="9" viewBox="0 0 8 9"><path d="M0 0 L8 4.5 L0 9Z" fill="#1a1a1a"/></svg>
<div class="hd" style="left:1173px;top:938px;">CAM feedrate</div>
<div class="dv" style="left:1152px;top:955px;width:276px"></div>
<svg style="left:1408px;top:958px" width="18" height="18" viewBox="0 0 18 18"><path d="M0 0 L17 17 M5 0 L17 12 M10 0 L17 7" stroke="#5a5a5a" stroke-width="1" fill="none"/><path d="M0 1 L16 17 M5 1 L17 13 M10 1 L17 8" stroke="#7f7f7f" stroke-width="1" fill="none" opacity=".6"/></svg>
<svg style="left:1160px;top:964px" width="9" height="9" viewBox="0 0 9 9"><path d="M0 0 L8.4 0 L4.2 8.2Z" fill="#1a1a1a"/></svg>
<div class="hd" style="left:1177px;top:963px;font-size:10px;">CAM Cutter</div>
<div class="w menu" style="left:1155px;top:987px;width:230px;height:20px;line-height:21px;border-radius:4px 0px 0px 4px;">Ball 1Mm<svg class="ud" viewBox="0 0 7 12"><path d="M3.5 0.5 L6.5 4.5 L0.5 4.5Z M3.5 11.5 L6.5 7.5 L0.5 7.5Z" fill="#b8b8b8"/></svg></div>
<div class="w btn" style="left:1384px;top:987px;width:21px;height:20px;line-height:21px;border-radius:0px 0px 0px 0px;"></div>
<svg style="left:1388px;top:991px" width="13" height="13" viewBox="0 0 13 13"><path d="M5.3 1 H7.7 V5.3 H12 V7.7 H7.7 V12 H5.3 V7.7 H1 V5.3 H5.3Z" fill="#f6f6f6" stroke="#242424" stroke-width="1.5" paint-order="stroke" stroke-linejoin="round"/></svg>
<div class="w btn" style="left:1404px;top:987px;width:21px;height:20px;line-height:21px;border-radius:0px 4px 4px 0px;"></div>
<svg style="left:1408px;top:991px" width="13" height="13" viewBox="0 0 13 13"><path d="M1 5.3 H12 V7.7 H1Z" fill="#f6f6f6" stroke="#242424" stroke-width="1.5" paint-order="stroke" stroke-linejoin="round"/></svg>
<div class="lbl" style="left:1160px;top:1014px;color:#000">Cutter:</div>
<div class="w menu" style="left:1249px;top:1012px;width:176px;height:20px;line-height:21px;">Ball<svg class="ud" viewBox="0 0 7 12"><path d="M3.5 0.5 L6.5 4.5 L0.5 4.5Z M3.5 11.5 L6.5 7.5 L0.5 7.5Z" fill="#b8b8b8"/></svg></div>
<div class="w num" style="left:1155px;top:1037px;width:270px;height:20px;line-height:21px;"><i class="la"></i><i class="ra"></i><span style="position:relative;left:-10.5px">Cutter diameter: 6mm</span></div>
<div class="w num" style="left:1155px;top:1062px;width:270px;height:20px;line-height:21px;"><i class="la"></i><i class="ra"></i></div>
<svg style="left:1146px;top:1058px" width="8" height="11" viewBox="0 0 8 11"><path d="M0 2 L6 9 L6 11 L0 11Z" fill="#8a8a8a" stroke="#1f1f1f" stroke-width="1"/></svg>
<div class="lbl" style="left:0px;top:1056px;font-size:10px;height:15px;line-height:15px">Select</div>
<div class="lbl" style="left:45px;top:1056px;font-size:10px;height:15px;line-height:15px">Object</div>
<div class="w menu" style="left:88px;top:1052px;width:126px;height:20px;line-height:21px;padding-left:20px;font-size:10px;border-radius:4px 4px 4px 4px;">Object Mode<svg class="ud" viewBox="0 0 7 12"><path d="M3.5 0.5 L6.5 4.5 L0.5 4.5Z M3.5 11.5 L6.5 7.5 L0.5 7.5Z" fill="#b8b8b8"/></svg></div>
<svg style="left:94px;top:1055px" width="14" height="15" viewBox="0 0 14 15"><path d="M7 0.7 L13.2 3.6 L13.2 11 L7 14.3 L0.8 11 L0.8 3.6Z" fill="#e8962e" stroke="#3a2a10" stroke-width="1"/><path d="M7 0.7 L13.2 3.6 L7 6.6 L0.8 3.6Z" fill="#f7e3c2"/><path d="M0.8 3.6 L7 6.6 L7 14.3 L0.8 11Z" fill="#f0a94e"/><path d="M7 6.6 L13.2 3.6 L13.2 11 L7 14.3Z" fill="#c97614"/><path d="M7 0.7 L13.2 3.6 L13.2 11 L7 14.3 L0.8 11 L0.8 3.6Z" fill="none" stroke="#4a3310" stroke-width=".9"/></svg>
<div class="w menu" style="left:219px;top:1052px;width:36px;height:20px;line-height:21px;padding-left:5px;font-size:10px;border-radius:4px 4px 4px 4px;"><svg class="ud" viewBox="0 0 7 12"><path d="M3.5 0.5 L6.5 4.5 L0.5 4.5Z M3.5 11.5 L6.5 7.5 L0.5 7.5Z" fill="#b8b8b8"/></svg></div>
<svg style="left:224px;top:1055px" width="14" height="14" viewBox="0 0 14 14"><defs><radialGradient id="sph" cx=".35" cy=".3" r=".8"><stop offset="0" stop-color="#fff"/><stop offset=".6" stop-color="#e8e8e8"/><stop offset="1" stop-color="#9a9a9a"/></radialGradient></defs><circle cx="7" cy="7" r="6" fill="url(#sph)" stroke="#222" stroke-width=".8"/></svg>
<div class="w menu" style="left:259px;top:1052px;width:36px;height:20px;line-height:21px;padding-left:5px;font-size:10px;border-radius:4px 0px 0px 4px;"><svg class="ud" viewBox="0 0 7 12"><path d="M3.5 0.5 L6.5 4.5 L0.5 4.5Z M3.5 11.5 L6.5 7.5 L0.5 7.5Z" fill="#b8b8b8"/></svg></div>
<svg style="left:263px;top:1054px" width="17" height="16" viewBox="0 0 17 16"><circle cx="5.5" cy="5" r="4" fill="url(#sph)" stroke="#222" stroke-width=".8"/><circle cx="11" cy="10.5" r="4" fill="url(#sph)" stroke="#222" stroke-width=".8"/><rect x="6.3" y="5.8" width="3.6" height="3.6" fill="#fff" stroke="#1f6fd6" stroke-width="1.2"/></svg>
<div class="w btn" style="left:294px;top:1052px;width:20px;height:20px;background:linear-gradient(#a6a6a6,#8c8c8c);border-radius:0px 4px 4px 0px;"></div>
<svg style="left:296px;top:1053px" width="17" height="17" viewBox="0 0 17 17"><g fill="#e8f0ff" stroke="#2f5fb0" stroke-width=".9"><circle cx="3.5" cy="3" r="1.6"/><circle cx="8.5" cy="3" r="1.6"/><circle cx="13.5" cy="3" r="1.6"/></g><path d="M1 10.5 L5 6.8 V9.2 H12 V6.8 L16 10.5 L12 14.2 V11.8 H5 V14.2Z" fill="#f2f2f2" stroke="#1a1a1a" stroke-width="1"/></svg>
<div class="w btn" style="left:319px;top:1052px;width:20px;height:20px;background:linear-gradient(#606060,#474747);border-radius:4px 0px 0px 4px;"></div>
<svg style="left:321px;top:1053px" width="17" height="17" viewBox="0 0 17 17"><path d="M8.5 10 V1" stroke="#0d1a4a" stroke-width="3"/><path d="M8.5 10 V1.5" stroke="#3f7ff0" stroke-width="1.6"/><path d="M8.5 10 L1.5 15.5" stroke="#3a0a0a" stroke-width="3"/><path d="M8.5 10 L2 15" stroke="#e83a3a" stroke-width="1.6"/><path d="M8.5 10 L15.5 15.5" stroke="#0a3a0a" stroke-width="3"/><path d="M8.5 10 L15 15" stroke="#5fd04a" stroke-width="1.6"/></svg>
<div class="w btn" style="left:338px;top:1052px;width:21px;height:20px;background:linear-gradient(#606060,#474747);border-radius:0px 0px 0px 0px;"></div>
<svg style="left:341px;top:1054px" width="16" height="16" viewBox="0 0 16 16"><path d="M1.5 14.5 L3.2 10.2 L9 4.4 L7 2.4 L14.5 1.5 L13.6 9 L11.6 7 L5.8 12.8Z" fill="#4f8ee8" stroke="#10224a" stroke-width="1"/></svg>
<div class="w btn" style="left:358px;top:1052px;width:21px;height:20px;background:linear-gradient(#a6a6a6,#8c8c8c);border-radius:0px 0px 0px 0px;"></div>
<svg style="left:361px;top:1054px" width="16" height="16" viewBox="0 0 16 16"><path d="M2 15 Q2.5 3.5 13.5 2" fill="none" stroke="#5a6f94" stroke-width="4"/><path d="M2 15 Q2.5 3.5 13.5 2" fill="none" stroke="#8fb0e4" stroke-width="2.4"/></svg>
<div class="w btn" style="left:378px;top:1052px;width:21px;height:20px;background:linear-gradient(#a6a6a6,#8c8c8c);border-radius:0px 0px 0px 0px;"></div>
<svg style="left:381px;top:1054px" width="16" height="16" viewBox="0 0 16 16"><path d="M1.5 14.5 L9 7" stroke="#4a5f84" stroke-width="3.6"/><path d="M1.5 14.5 L9 7" stroke="#8fb0e4" stroke-width="2"/><rect x="8" y="1.5" width="6.5" height="6.5" fill="#8fb0e4" stroke="#4a5f84" stroke-width="1"/></svg>
<div class="w menu" style="left:398px;top:1052px;width:72px;height:20px;line-height:21px;padding-left:5px;font-size:10px;border-radius:0px 4px 4px 0px;">Global<svg class="ud" viewBox="0 0 7 12"><path d="M3.5 0.5 L6.5 4.5 L0.5 4.5Z M3.5 11.5 L6.5 7.5 L0.5 7.5Z" fill="#b8b8b8"/></svg></div>
<div class="a" style="left:474px;top:1052px;width:50px;height:20px;border:1px solid #2b2b2b;border-radius:4px 4px 0 0;background:#4d4d4d;overflow:hidden"></div>
<svg style="left:474px;top:1052px" width="50" height="18" viewBox="0 0 50 18"><path d="M10 0V18" stroke="#2b2b2b" stroke-width="1"/><path d="M20 0V18" stroke="#2b2b2b" stroke-width="1"/><path d="M30 0V18" stroke="#2b2b2b" stroke-width="1"/><path d="M40 0V18" stroke="#2b2b2b" stroke-width="1"/><path d="M0 9.5H50" stroke="#2b2b2b" stroke-width="1"/><circle cx="5.2" cy="4.6" r="2.5" fill="#f0a030" stroke="#2a1a06" stroke-width="1"/><circle cx="4.9" cy="4.3" r="1" fill="#ffd080"/><circle cx="15.2" cy="4.6" r="2.5" fill="#f0a030" stroke="#2a1a06" stroke-width="1"/><circle cx="14.9" cy="4.3" r="1" fill="#ffd080"/><circle cx="25.2" cy="4.6" r="2.5" fill="#f0a030" stroke="#2a1a06" stroke-width="1"/><circle cx="24.9" cy="4.3" r="1" fill="#ffd080"/><circle cx="35.2" cy="4.6" r="2.5" fill="#f0a030" stroke="#2a1a06" stroke-width="1"/><circle cx="34.9" cy="4.3" r="1" fill="#ffd080"/><circle cx="45.2" cy="4.6" r="2.5" fill="#f0a030" stroke="#2a1a06" stroke-width="1"/><circle cx="44.9" cy="4.3" r="1" fill="#ffd080"/><circle cx="5.2" cy="14.1" r="2.5" fill="#f0a030" stroke="#2a1a06" stroke-width="1"/><circle cx="4.9" cy="13.8" r="1" fill="#ffd080"/><circle cx="15.2" cy="14.1" r="2.5" fill="#f0a030" stroke="#2a1a06" stroke-width="1"/><circle cx="14.9" cy="13.8" r="1" fill="#ffd080"/><circle cx="25.2" cy="14.1" r="2.5" fill="#f0a030" stroke="#2a1a06" stroke-width="1"/><circle cx="24.9" cy="13.8" r="1" fill="#ffd080"/><circle cx="35.2" cy="14.1" r="2.5" fill="#f0a030" stroke="#2a1a06" stroke-width="1"/><circle cx="34.9" cy="13.8" r="1" fill="#ffd080"/><circle cx="45.2" cy="14.1" r="2.5" fill="#f0a030" stroke="#2a1a06" stroke-width="1"/><circle cx="44.9" cy="13.8" r="1" fill="#ffd080"/></svg>
<div class="a" style="left:529px;top:1052px;width:50px;height:20px;border:1px solid #2b2b2b;border-radius:4px 4px 0 0;background:#4d4d4d;overflow:hidden"></div>
<svg style="left:529px;top:1052px" width="50" height="18" viewBox="0 0 50 18"><path d="M10 0V18" stroke="#2b2b2b" stroke-width="1"/><path d="M20 0V18" stroke="#2b2b2b" stroke-width="1"/><path d="M30 0V18" stroke="#2b2b2b" stroke-width="1"/><path d="M40 0V18" stroke="#2b2b2b" stroke-width="1"/><path d="M0 9.5H50" stroke="#2b2b2b" stroke-width="1"/><circle cx="5.2" cy="4.6" r="2.5" fill="#f0a030" stroke="#2a1a06" stroke-width="1"/><circle cx="4.9" cy="4.3" r="1" fill="#ffd080"/><circle cx="15.2" cy="4.6" r="2.5" fill="#f0a030" stroke="#2a1a06" stroke-width="1"/><circle cx="14.9" cy="4.3" r="1" fill="#ffd080"/><circle cx="25.2" cy="4.6" r="2.5" fill="#f0a030" stroke="#2a1a06" stroke-width="1"/><circle cx="24.9" cy="4.3" r="1" fill="#ffd080"/><circle cx="35.2" cy="4.6" r="2.5" fill="#f0a030" stroke="#2a1a06" stroke-width="1"/><circle cx="34.9" cy="4.3" r="1" fill="#ffd080"/><circle cx="45.2" cy="4.6" r="2.5" fill="#f0a030" stroke="#2a1a06" stroke-width="1"/><circle cx="44.9" cy="4.3" r="1" fill="#ffd080"/><circle cx="5.2" cy="14.1" r="2.5" fill="#f0a030" stroke="#2a1a06" stroke-width="1"/><circle cx="4.9" cy="13.8" r="1" fill="#ffd080"/><circle cx="15.2" cy="14.1" r="2.5" fill="#f0a030" stroke="#2a1a06" stroke-width="1"/><circle cx="14.9" cy="13.8" r="1" fill="#ffd080"/><circle cx="25.2" cy="14.1" r="2.5" fill="#f0a030" stroke="#2a1a06" stroke-width="1"/><circle cx="24.9" cy="13.8" r="1" fill="#ffd080"/><circle cx="35.2" cy="14.1" r="2.5" fill="#f0a030" stroke="#2a1a06" stroke-width="1"/><circle cx="34.9" cy="13.8" r="1" fill="#ffd080"/><circle cx="45.2" cy="14.1" r="2.5" fill="#f0a030" stroke="#2a1a06" stroke-width="1"/><circle cx="44.9" cy="13.8" r="1" fill="#ffd080"/></svg>
<div class="w btn" style="left:584px;top:1052px;width:20px;height:20px;background:linear-gradient(#606060,#474747);border-radius:4px 4px 4px 4px;"></div>
<svg style="left:587px;top:1055px" width="17" height="15" viewBox="0 0 17 15"><defs><linearGradient id="lg1" x1="0" y1="0" x2="1" y2="1"><stop offset="0" stop-color="#c8c8c8"/><stop offset="1" stop-color="#6a6a6a"/></linearGradient></defs><rect x=".8" y="1" width="10" height="9.5" fill="url(#lg1)" stroke="#e6e6e6" stroke-width="1"/><rect x="10.5" y="3.5" width="3.6" height="5" rx="1.8" fill="none" stroke="#f0f0f0" stroke-width="1.3"/><rect x="10.5" y="8.5" width="3.6" height="5.5" rx="1.8" fill="none" stroke="#f0f0f0" stroke-width="1.3"/></svg>
<div class="w btn" style="left:609px;top:1052px;width:20px;height:20px;background:linear-gradient(#a6a6a6,#8c8c8c);border-radius:4px 4px 4px 4px;"></div>
<svg style="left:612px;top:1055px" width="15" height="15" viewBox="0 0 15 15"><circle cx="7.5" cy="7.5" r="5.6" fill="none" stroke="#6f6f6f" stroke-width="1.3"/><circle cx="7.5" cy="7.5" r="2.6" fill="#8f8f8f" stroke="#6a6a6a" stroke-width="1"/></svg>
<div class="w btn" style="left:634px;top:1052px;width:20px;height:20px;background:linear-gradient(#a6a6a6,#8c8c8c);border-radius:4px 0px 0px 4px;"></div>
<svg style="left:636px;top:1054px" width="17" height="17" viewBox="0 0 17 17"><path d="M2.5 9.5 L8 4 a3.6 3.6 0 0 1 5.2 5.2 L7.8 14.8" fill="none" stroke="#555" stroke-width="4.2"/><path d="M2.5 9.5 L8 4 a3.6 3.6 0 0 1 5.2 5.2 L7.8 14.8" fill="none" stroke="#a8a8a8" stroke-width="2.2"/></svg>
<div class="w menu" style="left:653px;top:1052px;width:36px;height:20px;line-height:21px;padding-left:5px;font-size:10px;border-radius:0px 4px 4px 0px;"><svg class="ud" viewBox="0 0 7 12"><path d="M3.5 0.5 L6.5 4.5 L0.5 4.5Z M3.5 11.5 L6.5 7.5 L0.5 7.5Z" fill="#b8b8b8"/></svg></div>
<svg style="left:657px;top:1054px" width="18" height="17" viewBox="0 0 18 17"><path d="M5 6V16 M12.5 3V16 M1 9H17 M1 14H17" stroke="#111" stroke-width="2.6"/><path d="M5 6V16 M12.5 3V16 M1 9H17 M1 14H17" stroke="#f2f2f2" stroke-width="1.2"/><circle cx="5" cy="4.5" r="3.4" fill="#e8f0ff" stroke="#2a55b0" stroke-width="1.2"/><circle cx="5" cy="4.5" r="1.2" fill="#2a55b0"/></svg>
<div class="w btn" style="left:694px;top:1052px;width:20px;height:20px;background:linear-gradient(#606060,#474747);border-radius:4px 0px 0px 4px;"></div>
<svg style="left:696px;top:1054px" width="17" height="16" viewBox="0 0 17 16"><rect x="1" y="5" width="13" height="10" rx="1.5" fill="#d0d0d0" stroke="#1a1a1a" stroke-width="1"/><rect x="3" y="3" width="4" height="2.5" fill="#bbb" stroke="#1a1a1a" stroke-width=".8"/><circle cx="8" cy="10.5" r="3.4" fill="#6a4a4a" stroke="#1a1a1a" stroke-width="1"/><circle cx="8" cy="10.5" r="1.5" fill="#caa"/><path d="M13.5 0.5 L14.3 2.7 L16.5 3.5 L14.3 4.3 L13.5 6.5 L12.7 4.3 L10.5 3.5 L12.7 2.7Z" fill="#ffe96a"/></svg>
<div class="w btn" style="left:713px;top:1052px;width:21px;height:20px;background:linear-gradient(#606060,#474747);border-radius:0px 4px 4px 0px;"></div>
<svg style="left:715px;top:1054px" width="17" height="16" viewBox="0 0 17 16"><rect x="2" y="8" width="13" height="8" fill="#2a2a2a" stroke="#e0e0e0" stroke-width=".8"/><path d="M2 7 L14.5 2 L15.5 4.5 L3 9.5Z" fill="#efefef" stroke="#1a1a1a" stroke-width=".8"/><path d="M5 5.9 L6.6 8 M8.5 4.5 L10.1 6.6 M12 3.1 L13.6 5.2" stroke="#1a1a1a" stroke-width="1.3"/><rect x="0.5" y="6" width="2.5" height="4" fill="#6fa0e8" stroke="#1a2a4a" stroke-width=".6"/><path d="M5 11.5H13 M5 13.5H13" stroke="#777" stroke-width="1"/></svg>
</div></div></body></html>
